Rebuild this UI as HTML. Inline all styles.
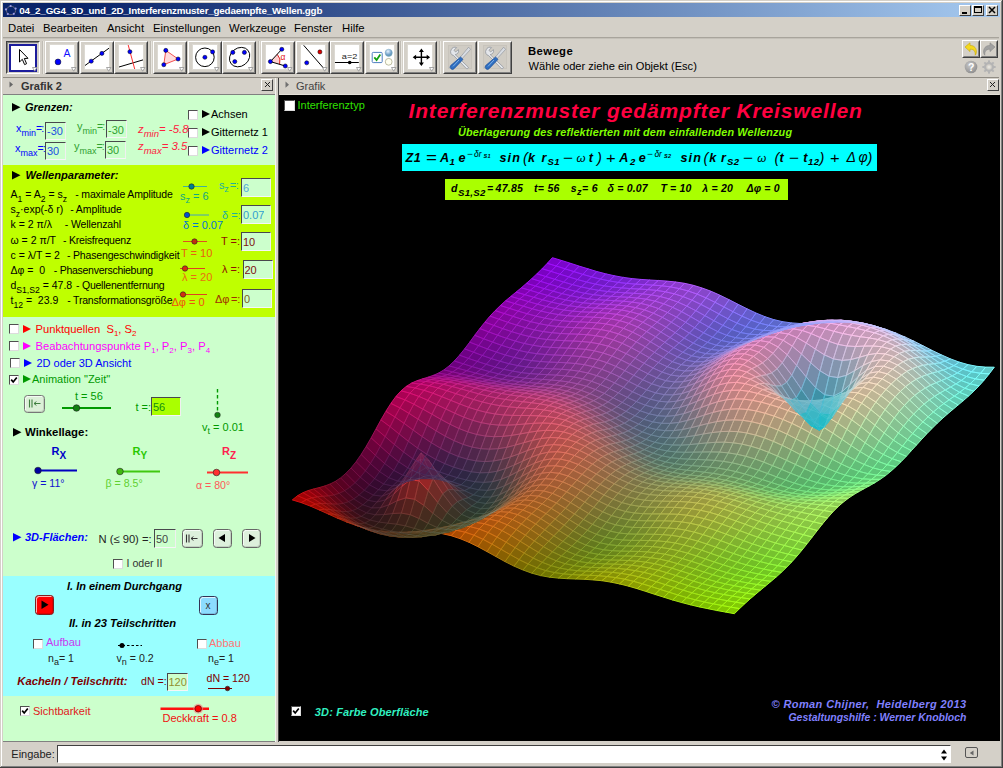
<!DOCTYPE html>
<html lang="de"><head><meta charset="utf-8"><title>GeoGebra</title>
<style>
html,body{margin:0;padding:0;}
body{width:1003px;height:768px;overflow:hidden;background:#d4d0c8;font-family:"Liberation Sans",sans-serif;font-size:11px;}
#win{position:relative;width:1003px;height:768px;overflow:hidden;background:#d4d0c8;}
.a{position:absolute;box-sizing:border-box;}
.t{position:absolute;white-space:nowrap;line-height:normal;}
.sb{position:relative;}
.sf path{fill:currentColor;stroke:currentColor;}

</style></head>
<body>
<div id="win">
<div class="a" style="left:0px;top:0px;width:1003px;height:768px;background:#d4d0c8;"></div>
<div class="a" style="left:0px;top:0px;width:1003px;height:1px;background:#d4d0c8;"></div>
<div class="a" style="left:1px;top:1px;width:1001px;height:1px;background:#fff;"></div>
<div class="a" style="left:1px;top:1px;width:1px;height:766px;background:#fff;"></div>
<div class="a" style="left:1002px;top:0px;width:1px;height:768px;background:#404040;"></div>
<div class="a" style="left:1001px;top:1px;width:1px;height:766px;background:#808080;"></div>
<div class="a" style="left:0px;top:767px;width:1003px;height:1px;background:#404040;"></div>
<div class="a" style="left:1px;top:766px;width:1001px;height:1px;background:#808080;"></div>
<div class="a" style="left:3px;top:3px;width:997px;height:14px;background:linear-gradient(to right,#0a246a 0%,#0a246a 8%,#a6caf0 100%);"></div>
<svg class="a" style="left:4px;top:4px" width="14" height="13" viewBox="0 0 14 13"><ellipse cx="7" cy="6.5" rx="4.6" ry="4.2" fill="none" stroke="#6b6b7a" stroke-width="0.9"/><circle cx="6.6" cy="2" r="1.1" fill="#9a9ae8"/><circle cx="11.6" cy="4.6" r="1.1" fill="#9a9ae8"/><circle cx="9.8" cy="9.8" r="1.1" fill="#9a9ae8"/><circle cx="3.8" cy="10" r="1.1" fill="#9a9ae8"/><circle cx="2" cy="5.4" r="1.1" fill="#9a9ae8"/></svg>
<span class="t " style="left:19.3px;top:5px;font-size:9.8px;color:#fff;font-weight:bold;letter-spacing:-0.181px;">04_2_GG4_3D_und_2D_Interferenzmuster_gedaempfte_Wellen.ggb</span>
<div class="a" style="left:959px;top:4.7px;width:12px;height:11px;background:#d4d0c8;border:1px solid;border-color:#fff #404040 #404040 #fff;"></div>
<div class="a" style="left:962px;top:12px;width:5px;height:1.6px;background:#000;"></div>
<div class="a" style="left:972px;top:4.7px;width:12px;height:11px;background:#d4d0c8;border:1px solid;border-color:#fff #404040 #404040 #fff;"></div>
<div class="a" style="left:974px;top:6px;width:8px;height:7px;border:1px solid #000;border-top:2px solid #000;"></div>
<div class="a" style="left:986px;top:4.7px;width:12px;height:11px;background:#d4d0c8;border:1px solid;border-color:#fff #404040 #404040 #fff;"></div>
<svg class="a" style="left:988px;top:6px" width="8" height="8" viewBox="0 0 8 8"><path d="M1 1 L7 7 M7 1 L1 7" stroke="#000" stroke-width="1.5"/></svg>
<span class="t " style="left:8px;top:22px;font-size:11.3px;color:#000;">Datei</span>
<span class="t " style="left:43px;top:22px;font-size:11.3px;color:#000;">Bearbeiten</span>
<span class="t " style="left:107px;top:22px;font-size:11.3px;color:#000;">Ansicht</span>
<span class="t " style="left:153px;top:22px;font-size:11.3px;color:#000;">Einstellungen</span>
<span class="t " style="left:229px;top:22px;font-size:11.3px;color:#000;">Werkzeuge</span>
<span class="t " style="left:294px;top:22px;font-size:11.3px;color:#000;">Fenster</span>
<span class="t " style="left:342px;top:22px;font-size:11.3px;color:#000;">Hilfe</span>
<div class="a" style="left:3px;top:37px;width:996px;height:1px;background:#a8a49c;"></div>
<div class="a" style="left:3px;top:38px;width:996px;height:1px;background:#c4c0b8;"></div>
<div class="a" style="left:3px;top:77px;width:996px;height:1px;background:#908c84;"></div>
<div class="a" style="left:41.7px;top:41px;width:1px;height:33px;background:#c0bcb4;"></div>
<div class="a" style="left:42.7px;top:41px;width:1px;height:33px;background:#e8e6e0;"></div>
<div class="a" style="left:149.5px;top:41px;width:1px;height:33px;background:#c0bcb4;"></div>
<div class="a" style="left:150.5px;top:41px;width:1px;height:33px;background:#e8e6e0;"></div>
<div class="a" style="left:257.5px;top:41px;width:1px;height:33px;background:#c0bcb4;"></div>
<div class="a" style="left:258.5px;top:41px;width:1px;height:33px;background:#e8e6e0;"></div>
<div class="a" style="left:400px;top:41px;width:1px;height:33px;background:#c0bcb4;"></div>
<div class="a" style="left:401px;top:41px;width:1px;height:33px;background:#e8e6e0;"></div>
<div class="a" style="left:439.2px;top:41px;width:1px;height:33px;background:#c0bcb4;"></div>
<div class="a" style="left:440.2px;top:41px;width:1px;height:33px;background:#e8e6e0;"></div>
<div class="a" style="left:6px;top:41px;width:34px;height:33px;background:#d4d0c8;border:1px solid;border-color:#404040 #fff #fff #404040;"></div>
<div class="a" style="left:7px;top:42px;width:32px;height:31px;border:1px solid;border-color:#808080 #d4d0c8 #d4d0c8 #808080;"></div>
<div class="a" style="left:9px;top:44px;width:28px;height:28px;background:#fff;border:2px solid #1c1c9c;"></div>
<svg class="a" style="left:11px;top:45px;overflow:visible" width="24" height="24" viewBox="0 0 24 24"><path d="M8.5 4.5 L8.5 17 L11.3 14.3 L13.6 19.6 L15.6 18.7 L13.3 13.5 L17 13.3 Z" fill="#fff" stroke="#000" stroke-width="1"/></svg>
<svg class="a" style="left:32.3px;top:67.3px" width="6" height="5" viewBox="0 0 6 5"><path d="M0.5 0.5 L4.9 0.5 L2.7 4.2 Z" fill="#fff" stroke="#909090" stroke-width="0.8"/></svg>
<div class="a" style="left:45px;top:41px;width:34px;height:33px;background:#d4d0c8;border:1px solid;border-color:#fff #404040 #404040 #fff;"></div>
<div class="a" style="left:46px;top:42px;width:32px;height:31px;border:1px solid;border-color:#d4d0c8 #808080 #808080 #d4d0c8;"></div>
<div class="a" style="left:50px;top:45px;width:24px;height:24px;background:#fff;"></div>
<div class="a" style="left:49px;top:44px;width:26px;height:26px;border:1px solid #dcd9d2;"></div>
<svg class="a" style="left:50px;top:45px;overflow:visible" width="24" height="24" viewBox="0 0 24 24"><circle cx="8" cy="16.9" r="2.9" fill="#0000ff" stroke="#000" stroke-width="0.5"/><text x="13.6" y="12.3" font-family="Liberation Sans, sans-serif" font-size="10.5" fill="#1010ff">A</text></svg>
<svg class="a" style="left:71.3px;top:67.3px" width="6" height="5" viewBox="0 0 6 5"><path d="M0.5 0.5 L4.9 0.5 L2.7 4.2 Z" fill="#fff" stroke="#909090" stroke-width="0.8"/></svg>
<div class="a" style="left:79.5px;top:41px;width:34px;height:33px;background:#d4d0c8;border:1px solid;border-color:#fff #404040 #404040 #fff;"></div>
<div class="a" style="left:80.5px;top:42px;width:32px;height:31px;border:1px solid;border-color:#d4d0c8 #808080 #808080 #d4d0c8;"></div>
<div class="a" style="left:84.5px;top:45px;width:24px;height:24px;background:#fff;"></div>
<div class="a" style="left:83.5px;top:44px;width:26px;height:26px;border:1px solid #dcd9d2;"></div>
<svg class="a" style="left:84.5px;top:45px;overflow:visible" width="24" height="24" viewBox="0 0 24 24"><line x1="0" y1="20.5" x2="24" y2="3.2" stroke="#000" stroke-width="1"/><circle cx="6.2" cy="16.2" r="2.05" fill="#0000ff" stroke="#000" stroke-width="0.5"/><circle cx="16.9" cy="8.4" r="2.05" fill="#0000ff" stroke="#000" stroke-width="0.5"/></svg>
<svg class="a" style="left:105.8px;top:67.3px" width="6" height="5" viewBox="0 0 6 5"><path d="M0.5 0.5 L4.9 0.5 L2.7 4.2 Z" fill="#fff" stroke="#909090" stroke-width="0.8"/></svg>
<div class="a" style="left:114px;top:41px;width:34px;height:33px;background:#d4d0c8;border:1px solid;border-color:#fff #404040 #404040 #fff;"></div>
<div class="a" style="left:115px;top:42px;width:32px;height:31px;border:1px solid;border-color:#d4d0c8 #808080 #808080 #d4d0c8;"></div>
<div class="a" style="left:119px;top:45px;width:24px;height:24px;background:#fff;"></div>
<div class="a" style="left:118px;top:44px;width:26px;height:26px;border:1px solid #dcd9d2;"></div>
<svg class="a" style="left:119px;top:45px;overflow:visible" width="24" height="24" viewBox="0 0 24 24"><line x1="0" y1="22" x2="24" y2="14.9" stroke="#000" stroke-width="1"/><line x1="9.2" y1="0" x2="15.7" y2="24" stroke="#ff3030" stroke-width="1"/><circle cx="10.9" cy="6.7" r="2.05" fill="#0000ff" stroke="#000" stroke-width="0.5"/></svg>
<svg class="a" style="left:140.3px;top:67.3px" width="6" height="5" viewBox="0 0 6 5"><path d="M0.5 0.5 L4.9 0.5 L2.7 4.2 Z" fill="#fff" stroke="#909090" stroke-width="0.8"/></svg>
<div class="a" style="left:153px;top:41px;width:34px;height:33px;background:#d4d0c8;border:1px solid;border-color:#fff #404040 #404040 #fff;"></div>
<div class="a" style="left:154px;top:42px;width:32px;height:31px;border:1px solid;border-color:#d4d0c8 #808080 #808080 #d4d0c8;"></div>
<div class="a" style="left:158px;top:45px;width:24px;height:24px;background:#fff;"></div>
<div class="a" style="left:157px;top:44px;width:26px;height:26px;border:1px solid #dcd9d2;"></div>
<svg class="a" style="left:158px;top:45px;overflow:visible" width="24" height="24" viewBox="0 0 24 24"><path d="M7.8 5.4 L20.1 14 L5.8 19.7 Z" fill="#ffdcdc" stroke="#f04040" stroke-width="0.9"/><circle cx="7.8" cy="5.4" r="2.05" fill="#0000ff" stroke="#000" stroke-width="0.5"/><circle cx="20.1" cy="14" r="2.05" fill="#0000ff" stroke="#000" stroke-width="0.5"/><circle cx="5.8" cy="19.7" r="2.05" fill="#0000ff" stroke="#000" stroke-width="0.5"/></svg>
<svg class="a" style="left:179.3px;top:67.3px" width="6" height="5" viewBox="0 0 6 5"><path d="M0.5 0.5 L4.9 0.5 L2.7 4.2 Z" fill="#fff" stroke="#909090" stroke-width="0.8"/></svg>
<div class="a" style="left:187.5px;top:41px;width:34px;height:33px;background:#d4d0c8;border:1px solid;border-color:#fff #404040 #404040 #fff;"></div>
<div class="a" style="left:188.5px;top:42px;width:32px;height:31px;border:1px solid;border-color:#d4d0c8 #808080 #808080 #d4d0c8;"></div>
<div class="a" style="left:192.5px;top:45px;width:24px;height:24px;background:#fff;"></div>
<div class="a" style="left:191.5px;top:44px;width:26px;height:26px;border:1px solid #dcd9d2;"></div>
<svg class="a" style="left:192.5px;top:45px;overflow:visible" width="24" height="24" viewBox="0 0 24 24"><circle cx="11.9" cy="12.3" r="9.3" fill="none" stroke="#000" stroke-width="1"/><circle cx="11.9" cy="12.3" r="2.05" fill="#0000ff" stroke="#000" stroke-width="0.5"/><circle cx="19.6" cy="6.9" r="2.05" fill="#0000ff" stroke="#000" stroke-width="0.5"/></svg>
<svg class="a" style="left:213.8px;top:67.3px" width="6" height="5" viewBox="0 0 6 5"><path d="M0.5 0.5 L4.9 0.5 L2.7 4.2 Z" fill="#fff" stroke="#909090" stroke-width="0.8"/></svg>
<div class="a" style="left:222px;top:41px;width:34px;height:33px;background:#d4d0c8;border:1px solid;border-color:#fff #404040 #404040 #fff;"></div>
<div class="a" style="left:223px;top:42px;width:32px;height:31px;border:1px solid;border-color:#d4d0c8 #808080 #808080 #d4d0c8;"></div>
<div class="a" style="left:227px;top:45px;width:24px;height:24px;background:#fff;"></div>
<div class="a" style="left:226px;top:44px;width:26px;height:26px;border:1px solid #dcd9d2;"></div>
<svg class="a" style="left:227px;top:45px;overflow:visible" width="24" height="24" viewBox="0 0 24 24"><ellipse cx="12.6" cy="12.1" rx="10.8" ry="9" transform="rotate(-38 12.6 12.1)" fill="none" stroke="#000" stroke-width="0.9"/><circle cx="5.8" cy="7.4" r="2.05" fill="#0000ff" stroke="#000" stroke-width="0.5"/><circle cx="17.4" cy="7.4" r="2.05" fill="#0000ff" stroke="#000" stroke-width="0.5"/><circle cx="7.8" cy="16.6" r="2.05" fill="#0000ff" stroke="#000" stroke-width="0.5"/></svg>
<svg class="a" style="left:248.3px;top:67.3px" width="6" height="5" viewBox="0 0 6 5"><path d="M0.5 0.5 L4.9 0.5 L2.7 4.2 Z" fill="#fff" stroke="#909090" stroke-width="0.8"/></svg>
<div class="a" style="left:261px;top:41px;width:34px;height:33px;background:#d4d0c8;border:1px solid;border-color:#fff #404040 #404040 #fff;"></div>
<div class="a" style="left:262px;top:42px;width:32px;height:31px;border:1px solid;border-color:#d4d0c8 #808080 #808080 #d4d0c8;"></div>
<div class="a" style="left:266px;top:45px;width:24px;height:24px;background:#fff;"></div>
<div class="a" style="left:265px;top:44px;width:26px;height:26px;border:1px solid #dcd9d2;"></div>
<svg class="a" style="left:266px;top:45px;overflow:visible" width="24" height="24" viewBox="0 0 24 24"><path d="M4.4 16.6 L11.2 9.3 A10 10 0 0 1 13.6 19.3 Z" fill="#ffd0d0" stroke="none"/><path d="M11.2 9.3 A10 10 0 0 1 13.6 19.3" fill="none" stroke="#e02020" stroke-width="1"/><path d="M15.8 4.3 L4.4 16.6 L19.3 21" fill="none" stroke="#000" stroke-width="1"/><circle cx="4.4" cy="16.6" r="2.05" fill="#0000ff" stroke="#000" stroke-width="0.5"/><circle cx="15.8" cy="4.3" r="2.05" fill="#0000ff" stroke="#000" stroke-width="0.5"/><circle cx="19.3" cy="21" r="2.05" fill="#0000ff" stroke="#000" stroke-width="0.5"/><text x="14.6" y="15" font-family="Liberation Sans, sans-serif" font-size="8.5" fill="#e02020">α</text></svg>
<svg class="a" style="left:287.3px;top:67.3px" width="6" height="5" viewBox="0 0 6 5"><path d="M0.5 0.5 L4.9 0.5 L2.7 4.2 Z" fill="#fff" stroke="#909090" stroke-width="0.8"/></svg>
<div class="a" style="left:295.5px;top:41px;width:34px;height:33px;background:#d4d0c8;border:1px solid;border-color:#fff #404040 #404040 #fff;"></div>
<div class="a" style="left:296.5px;top:42px;width:32px;height:31px;border:1px solid;border-color:#d4d0c8 #808080 #808080 #d4d0c8;"></div>
<div class="a" style="left:300.5px;top:45px;width:24px;height:24px;background:#fff;"></div>
<div class="a" style="left:299.5px;top:44px;width:26px;height:26px;border:1px solid #dcd9d2;"></div>
<svg class="a" style="left:300.5px;top:45px;overflow:visible" width="24" height="24" viewBox="0 0 24 24"><line x1="2.7" y1="0.3" x2="24" y2="24.8" stroke="#000" stroke-width="1"/><circle cx="18.9" cy="6.9" r="2.05" fill="#e00000" stroke="#000" stroke-width="0.5"/><circle cx="5.7" cy="17.8" r="2.05" fill="#0000ff" stroke="#000" stroke-width="0.5"/></svg>
<svg class="a" style="left:321.8px;top:67.3px" width="6" height="5" viewBox="0 0 6 5"><path d="M0.5 0.5 L4.9 0.5 L2.7 4.2 Z" fill="#fff" stroke="#909090" stroke-width="0.8"/></svg>
<div class="a" style="left:330px;top:41px;width:34px;height:33px;background:#d4d0c8;border:1px solid;border-color:#fff #404040 #404040 #fff;"></div>
<div class="a" style="left:331px;top:42px;width:32px;height:31px;border:1px solid;border-color:#d4d0c8 #808080 #808080 #d4d0c8;"></div>
<div class="a" style="left:335px;top:45px;width:24px;height:24px;background:#fff;"></div>
<div class="a" style="left:334px;top:44px;width:26px;height:26px;border:1px solid #dcd9d2;"></div>
<svg class="a" style="left:335px;top:45px;overflow:visible" width="24" height="24" viewBox="0 0 24 24"><line x1="0" y1="17.5" x2="23.8" y2="17.5" stroke="#000" stroke-width="1"/><circle cx="14.7" cy="17.5" r="1.8" fill="#000"/><text x="6.8" y="14" font-family="Liberation Sans, sans-serif" font-size="8" fill="#222" textLength="15.5" lengthAdjust="spacingAndGlyphs">a=2</text></svg>
<svg class="a" style="left:356.3px;top:67.3px" width="6" height="5" viewBox="0 0 6 5"><path d="M0.5 0.5 L4.9 0.5 L2.7 4.2 Z" fill="#fff" stroke="#909090" stroke-width="0.8"/></svg>
<div class="a" style="left:364.5px;top:41px;width:34px;height:33px;background:#d4d0c8;border:1px solid;border-color:#fff #404040 #404040 #fff;"></div>
<div class="a" style="left:365.5px;top:42px;width:32px;height:31px;border:1px solid;border-color:#d4d0c8 #808080 #808080 #d4d0c8;"></div>
<div class="a" style="left:369.5px;top:45px;width:24px;height:24px;background:#fff;"></div>
<div class="a" style="left:368.5px;top:44px;width:26px;height:26px;border:1px solid #dcd9d2;"></div>
<svg class="a" style="left:369.5px;top:45px;overflow:visible" width="24" height="24" viewBox="0 0 24 24"><defs><radialGradient id="sph" cx="0.4" cy="0.3" r="0.8"><stop offset="0" stop-color="#e8f4ff"/><stop offset="0.6" stop-color="#6f9fc8"/><stop offset="1" stop-color="#4f8f9f"/></radialGradient></defs><rect x="2.2" y="7.4" width="10" height="10.2" rx="1" fill="#fff" stroke="#4f7fc0" stroke-width="1"/><path d="M4.3 12.3 L6.6 15 L10.3 9.6" fill="none" stroke="#10a010" stroke-width="1.8"/><circle cx="18.7" cy="7.8" r="3.6" fill="url(#sph)" stroke="#7fa8c0" stroke-width="0.5"/><circle cx="18.7" cy="16.8" r="3.4" fill="#fffff0" stroke="#a0a080" stroke-width="0.7"/></svg>
<svg class="a" style="left:390.8px;top:67.3px" width="6" height="5" viewBox="0 0 6 5"><path d="M0.5 0.5 L4.9 0.5 L2.7 4.2 Z" fill="#fff" stroke="#909090" stroke-width="0.8"/></svg>
<div class="a" style="left:403px;top:41px;width:34px;height:33px;background:#d4d0c8;border:1px solid;border-color:#fff #404040 #404040 #fff;"></div>
<div class="a" style="left:404px;top:42px;width:32px;height:31px;border:1px solid;border-color:#d4d0c8 #808080 #808080 #d4d0c8;"></div>
<div class="a" style="left:408px;top:45px;width:24px;height:24px;background:#fff;"></div>
<div class="a" style="left:407px;top:44px;width:26px;height:26px;border:1px solid #dcd9d2;"></div>
<svg class="a" style="left:408px;top:45px;overflow:visible" width="24" height="24" viewBox="0 0 24 24"><path d="M13.4 5.2 L13.4 19.4 M6.3 12.3 L20.5 12.3" stroke="#000" stroke-width="1.4" fill="none"/><path d="M13.4 3.6 L10.9 7 L15.9 7 Z M13.4 21 L10.9 17.6 L15.9 17.6 Z M4.7 12.3 L8.1 9.8 L8.1 14.8 Z M22.1 12.3 L18.7 9.8 L18.7 14.8 Z" fill="#000"/></svg>
<svg class="a" style="left:429.3px;top:67.3px" width="6" height="5" viewBox="0 0 6 5"><path d="M0.5 0.5 L4.9 0.5 L2.7 4.2 Z" fill="#fff" stroke="#909090" stroke-width="0.8"/></svg>
<div class="a" style="left:443px;top:41px;width:34px;height:33px;background:#d4d0c8;border:1px solid;border-color:#fff #404040 #404040 #fff;"></div>
<div class="a" style="left:444px;top:42px;width:32px;height:31px;border:1px solid;border-color:#d4d0c8 #808080 #808080 #d4d0c8;"></div>
<div class="a" style="left:448px;top:45px;width:24px;height:24px;background:#d0ccc4;border:1px solid #c8c4bc;"></div>
<svg class="a" style="left:448px;top:45px;overflow:visible" width="24" height="24" viewBox="0 0 24 24"><g transform="translate(0,0)"><path d="M3.2 4.8 A3.8 3.8 0 0 1 8.6 2.6 L6 5.2 L7.6 7 L10.4 4.6 A3.8 3.8 0 0 1 7.2 9.6 L20.4 22.2 A1.4 1.4 0 0 1 18.4 23.6 L5.6 10.6 A3.8 3.8 0 0 1 3.2 4.8 Z" fill="#e4e6ea" stroke="#8a8f98" stroke-width="0.7"/><path d="M20.6 2.2 L22.6 4.4 L13.2 14.6 L11.6 13 Z" fill="#d8dce2" stroke="#8a8f98" stroke-width="0.6"/><path d="M12.6 12 L15 14.4 L6.4 23.4 A2.2 2.2 0 0 1 2.6 20.6 Z" fill="#2f6fc0" stroke="#1f4f98" stroke-width="0.7"/><path d="M11 15 L5 21.4" stroke="#7fb0e8" stroke-width="1"/></g></svg>
<div class="a" style="left:477.5px;top:41px;width:34px;height:33px;background:#d4d0c8;border:1px solid;border-color:#fff #404040 #404040 #fff;"></div>
<div class="a" style="left:478.5px;top:42px;width:32px;height:31px;border:1px solid;border-color:#d4d0c8 #808080 #808080 #d4d0c8;"></div>
<div class="a" style="left:482.5px;top:45px;width:24px;height:24px;background:#d0ccc4;border:1px solid #c8c4bc;"></div>
<svg class="a" style="left:482.5px;top:45px;overflow:visible" width="24" height="24" viewBox="0 0 24 24"><g transform="translate(0,0)"><path d="M3.2 4.8 A3.8 3.8 0 0 1 8.6 2.6 L6 5.2 L7.6 7 L10.4 4.6 A3.8 3.8 0 0 1 7.2 9.6 L20.4 22.2 A1.4 1.4 0 0 1 18.4 23.6 L5.6 10.6 A3.8 3.8 0 0 1 3.2 4.8 Z" fill="#e4e6ea" stroke="#8a8f98" stroke-width="0.7"/><path d="M20.6 2.2 L22.6 4.4 L13.2 14.6 L11.6 13 Z" fill="#d8dce2" stroke="#8a8f98" stroke-width="0.6"/><path d="M12.6 12 L15 14.4 L6.4 23.4 A2.2 2.2 0 0 1 2.6 20.6 Z" fill="#2f6fc0" stroke="#1f4f98" stroke-width="0.7"/><path d="M11 15 L5 21.4" stroke="#7fb0e8" stroke-width="1"/></g></svg>
<span class="t " style="left:528px;top:45px;font-size:11.3px;color:#000;font-weight:bold;letter-spacing:0.4px;">Bewege</span>
<span class="t " style="left:528.5px;top:60px;font-size:11.1px;color:#000;">Wähle oder ziehe ein Objekt (Esc)</span>
<div class="a" style="left:962px;top:40px;width:18px;height:18px;background:#d4d0c8;border:1px solid;border-color:#fff #404040 #404040 #fff;"></div>
<div class="a" style="left:963px;top:41px;width:16px;height:16px;border:1px solid;border-color:#d4d0c8 #808080 #808080 #d4d0c8;"></div>
<div class="a" style="left:980px;top:40px;width:18px;height:18px;background:#d4d0c8;border:1px solid;border-color:#fff #404040 #404040 #fff;"></div>
<div class="a" style="left:981px;top:41px;width:16px;height:16px;border:1px solid;border-color:#d4d0c8 #808080 #808080 #d4d0c8;"></div>
<svg class="a" style="left:964px;top:42px" width="14" height="14" viewBox="0 0 14 14"><path d="M1 5 L6 0.8 L6 3.4 C10.5 3.4 12.6 6.4 12.4 10.2 C12.3 11.6 11.8 12.6 11.2 13.2 C11.6 9.4 10 7.2 6 7.2 L6 9.6 Z" fill="#f4d820" stroke="#c8a800" stroke-width="0.6"/></svg>
<svg class="a" style="left:982px;top:42px" width="14" height="14" viewBox="0 0 14 14"><path d="M13 5 L8 0.8 L8 3.4 C3.5 3.4 1.4 6.4 1.6 10.2 C1.7 11.6 2.2 12.6 2.8 13.2 C2.4 9.4 4 7.2 8 7.2 L8 9.6 Z" fill="#a0a0a0" stroke="#888" stroke-width="0.6"/></svg>
<svg class="a" style="left:964px;top:60px" width="14" height="14" viewBox="0 0 14 14"><defs><radialGradient id="hg" cx="0.4" cy="0.35" r="0.7"><stop offset="0" stop-color="#c8c8c8"/><stop offset="1" stop-color="#8c8c8c"/></radialGradient></defs><circle cx="7" cy="7" r="6.3" fill="url(#hg)"/><text x="3.9" y="10.8" font-family="Liberation Sans, sans-serif" font-weight="bold" font-size="10.5" fill="#fff">?</text></svg>
<svg class="a" style="left:982px;top:60px" width="14" height="14" viewBox="0 0 14 14"><rect x="6" y="0.4" width="2" height="3.2" fill="#b4b4b4" transform="rotate(0 7 7)"/><rect x="6" y="0.4" width="2" height="3.2" fill="#b4b4b4" transform="rotate(45 7 7)"/><rect x="6" y="0.4" width="2" height="3.2" fill="#b4b4b4" transform="rotate(90 7 7)"/><rect x="6" y="0.4" width="2" height="3.2" fill="#b4b4b4" transform="rotate(135 7 7)"/><rect x="6" y="0.4" width="2" height="3.2" fill="#b4b4b4" transform="rotate(180 7 7)"/><rect x="6" y="0.4" width="2" height="3.2" fill="#b4b4b4" transform="rotate(225 7 7)"/><rect x="6" y="0.4" width="2" height="3.2" fill="#b4b4b4" transform="rotate(270 7 7)"/><rect x="6" y="0.4" width="2" height="3.2" fill="#b4b4b4" transform="rotate(315 7 7)"/><circle cx="7" cy="7" r="3.9" fill="none" stroke="#b4b4b4" stroke-width="2.2"/><circle cx="7" cy="7" r="1.6" fill="#e4e2dc"/></svg>
<svg class="a" style="left:9px;top:81px" width="5" height="7" viewBox="0 0 5 7"><path d="M0.5 0.5 L4 3.5 L0.5 6.5 Z" fill="#666"/></svg>
<span class="t " style="left:21px;top:80px;font-size:11px;color:#333;font-weight:bold;">Grafik 2</span>
<div class="a" style="left:261px;top:78.5px;width:12px;height:12px;background:#d4d0c8;border:1px solid;border-color:#fff #404040 #404040 #fff;"></div>
<svg class="a" style="left:263.5px;top:81.0px" width="7" height="7" viewBox="0 0 7 7"><path d="M1 1 L6 6 M6 1 L1 6" stroke="#222" stroke-width="1"/></svg>
<div class="a" style="left:986.5px;top:78.5px;width:12px;height:12px;background:#d4d0c8;border:1px solid;border-color:#fff #404040 #404040 #fff;"></div>
<svg class="a" style="left:989.0px;top:81.0px" width="7" height="7" viewBox="0 0 7 7"><path d="M1 1 L6 6 M6 1 L1 6" stroke="#222" stroke-width="1"/></svg>
<svg class="a" style="left:285px;top:81.4px" width="5" height="7.3" viewBox="0 0 5 7.3"><path d="M0.5 0.5 L4 3.65 L0.5 6.8 Z" fill="#707070"/></svg>
<span class="t " style="left:296px;top:80px;font-size:11px;color:#444;">Grafik</span>
<div class="a" style="left:3px;top:94px;width:272px;height:1px;background:#808080;"></div>
<div class="a" style="left:279px;top:94px;width:720px;height:1px;background:#e4e0d8;"></div>
<div class="a" style="left:275px;top:78px;width:1px;height:664px;background:#f4f4f0;"></div>
<div class="a" style="left:276px;top:78px;width:2px;height:664px;background:#d4d0c8;"></div>
<div class="a" style="left:278px;top:78px;width:1px;height:664px;background:#404040;"></div>
<div class="a" style="left:3px;top:95px;width:272px;height:646px;background:#ccffcc;"></div>
<div class="a" style="left:3px;top:165px;width:272px;height:152px;background:#bfff00;"></div>
<div class="a" style="left:3px;top:576px;width:272px;height:120px;background:#99ffff;"></div>
<div class="a" style="left:3px;top:741px;width:272px;height:1px;background:#808080;"></div>
<svg class="a" style="left:12.2px;top:102.7px" width="9.5" height="9.5" viewBox="0 0 9.5 9.5"><path d="M0 0 L8.5 4.25 L0 8.5 Z" fill="#000"/></svg>
<span class="t " style="left:25px;top:101px;font-size:11px;color:#000;font-weight:bold;font-style:italic;">Grenzen:</span>
<div class="a" style="left:188px;top:109.5px;width:10px;height:10px;background:#fff;border-style:solid;border-width:1.3px 1px 1px 1.3px;border-color:#505050 #dcdcdc #dcdcdc #505050;"></div>
<svg class="a" style="left:202px;top:110px" width="9" height="9" viewBox="0 0 9 9"><path d="M0 0 L8 4.0 L0 8 Z" fill="#000"/></svg>
<span class="t " style="left:211px;top:108px;font-size:11px;color:#000;">Achsen</span>
<div class="a" style="left:188px;top:127.5px;width:10px;height:10px;background:#fff;border-style:solid;border-width:1.3px 1px 1px 1.3px;border-color:#505050 #dcdcdc #dcdcdc #505050;"></div>
<svg class="a" style="left:202px;top:128px" width="9" height="9" viewBox="0 0 9 9"><path d="M0 0 L8 4.0 L0 8 Z" fill="#000"/></svg>
<span class="t " style="left:211px;top:126px;font-size:11px;color:#000;">Gitternetz 1</span>
<div class="a" style="left:187.5px;top:145.5px;width:10px;height:10px;background:#fff;border-style:solid;border-width:1.3px 1px 1px 1.3px;border-color:#505050 #dcdcdc #dcdcdc #505050;"></div>
<svg class="a" style="left:202px;top:146px" width="9" height="9" viewBox="0 0 9 9"><path d="M0 0 L8 4.0 L0 8 Z" fill="#0000ff"/></svg>
<span class="t " style="left:211px;top:144px;font-size:11px;color:#0000ff;">Gitternetz 2</span>
<span class="t " style="left:16px;top:122px;font-size:11px;color:#0000ff;">x<span class="sb" style="top:4px;font-size:9px;">min</span><span style="letter-spacing:-0.8px;font-size:10.5px">=:</span></span>
<div class="a" style="left:45px;top:121.7px;width:21px;height:18px;background:#ccffcc;border-style:solid;border-width:1.5px 1.2px 1.2px 1.4px;border-color:#48484c #f0f0f0 #f6f6f6 #48484c;box-sizing:border-box;overflow:hidden;"></div>
<span class="t " style="left:47px;top:125px;font-size:11px;color:#2050e0;max-width:18px;overflow:hidden;">-30</span>
<span class="t " style="left:15px;top:142px;font-size:11px;color:#0000ff;">x<span class="sb" style="top:4px;font-size:9px;">max</span><span style="letter-spacing:-0.8px;font-size:10.5px">=:</span></span>
<div class="a" style="left:45px;top:141.5px;width:21px;height:18.2px;background:#ccffcc;border-style:solid;border-width:1.5px 1.2px 1.2px 1.4px;border-color:#48484c #f0f0f0 #f6f6f6 #48484c;box-sizing:border-box;overflow:hidden;"></div>
<span class="t " style="left:47px;top:145px;font-size:11px;color:#2050e0;max-width:18px;overflow:hidden;">30</span>
<span class="t " style="left:77px;top:120px;font-size:11px;color:#30a030;">y<span class="sb" style="top:4px;font-size:9px;">min</span><span style="letter-spacing:-0.8px;font-size:10.5px">=:</span></span>
<div class="a" style="left:106px;top:120px;width:21px;height:18px;background:#ccffcc;border-style:solid;border-width:1.5px 1.2px 1.2px 1.4px;border-color:#48484c #f0f0f0 #f6f6f6 #48484c;box-sizing:border-box;overflow:hidden;"></div>
<span class="t " style="left:108px;top:124px;font-size:11px;color:#30a030;max-width:18px;overflow:hidden;">-30</span>
<span class="t " style="left:74px;top:140px;font-size:11px;color:#30a030;">y<span class="sb" style="top:4px;font-size:9px;">max</span><span style="letter-spacing:-0.8px;font-size:10.5px">=:</span></span>
<div class="a" style="left:105px;top:140.5px;width:21px;height:18.2px;background:#ccffcc;border-style:solid;border-width:1.5px 1.2px 1.2px 1.4px;border-color:#48484c #f0f0f0 #f6f6f6 #48484c;box-sizing:border-box;overflow:hidden;"></div>
<span class="t " style="left:107px;top:144px;font-size:11px;color:#30a030;max-width:18px;overflow:hidden;">30</span>
<span class="t " style="left:138px;top:123px;font-size:11.4px;color:#ff2040;font-style:italic;">z<span class="sb" style="top:4px;font-size:9.5px;">min</span>= -5.8</span>
<span class="t " style="left:138px;top:140px;font-size:11.4px;color:#ff2040;font-style:italic;">z<span class="sb" style="top:4px;font-size:9.5px;">max</span>= 3.5</span>
<svg class="a" style="left:12.2px;top:170.7px" width="9.5" height="9.5" viewBox="0 0 9.5 9.5"><path d="M0 0 L8.5 4.25 L0 8.5 Z" fill="#000"/></svg>
<span class="t " style="left:25.5px;top:169px;font-size:11.1px;color:#000;font-weight:bold;font-style:italic;">Wellenparameter:</span>
<span class="t " style="left:10.5px;top:188px;font-size:10.5px;color:#000;">A<span class="sb" style="top:4px;font-size:8.6px;">1</span> = A<span class="sb" style="top:4px;font-size:8.6px;">2</span> = s<span class="sb" style="top:4px;font-size:8.6px;">z</span></span>
<span class="t " style="left:75.2px;top:188px;font-size:10.5px;color:#000;letter-spacing:-0.143px;">- maximale Amplitude</span>
<span class="t " style="left:10.5px;top:203px;font-size:10.5px;color:#000;">s<span class="sb" style="top:4px;font-size:8.6px;">z</span>·exp(-δ r)</span>
<span class="t " style="left:70.2px;top:203px;font-size:10.5px;color:#000;letter-spacing:-0.084px;">- Amplitude</span>
<span class="t " style="left:10.5px;top:218px;font-size:10.5px;color:#000;">k = 2 π/λ</span>
<span class="t " style="left:64.8px;top:218px;font-size:10.5px;color:#000;letter-spacing:-0.115px;">- Wellenzahl</span>
<span class="t " style="left:10.5px;top:234px;font-size:10.5px;color:#000;">ω = 2 π/T</span>
<span class="t " style="left:63px;top:234px;font-size:10.5px;color:#000;letter-spacing:-0.213px;">- Kreisfrequenz</span>
<span class="t " style="left:10.5px;top:249px;font-size:10.5px;color:#000;">c = λ/T = 2</span>
<span class="t " style="left:66.9px;top:249px;font-size:10.5px;color:#000;letter-spacing:-0.158px;">- Phasengeschwindigkeit</span>
<span class="t " style="left:10.5px;top:264px;font-size:10.5px;color:#000;">Δφ =&nbsp; 0</span>
<span class="t " style="left:53.8px;top:264px;font-size:10.5px;color:#000;letter-spacing:-0.269px;">- Phasenverschiebung</span>
<span class="t " style="left:10.5px;top:279px;font-size:10.5px;color:#000;">d<span class="sb" style="top:4px;font-size:8.6px;">S1,S2</span> = 47.8</span>
<span class="t " style="left:76px;top:279px;font-size:10.5px;color:#000;letter-spacing:-0.232px;">- Quellenentfernung</span>
<span class="t " style="left:10.5px;top:294px;font-size:10.5px;color:#000;">t<span class="sb" style="top:4px;font-size:8.6px;">12</span> =&nbsp; 23.9</span>
<span class="t " style="left:67.2px;top:294px;font-size:10.5px;color:#000;letter-spacing:-0.182px;">- Transformationsgröße</span>
<svg class="a" style="left:0;top:0" width="1003" height="768"><line x1="183" y1="186.5" x2="207" y2="186.5" stroke="#40b0a0" stroke-width="1" /><circle cx="191.5" cy="186.5" r="2.7" fill="#008090" stroke="#222" stroke-width="0.6"/></svg>
<span class="t " style="left:180px;top:190px;font-size:11px;color:#10a880;">s<span class="sb" style="top:3px;font-size:9px;">z</span> = 6</span>
<svg class="a" style="left:0;top:0" width="1003" height="768"><line x1="185" y1="215" x2="209" y2="215" stroke="#40a0c0" stroke-width="1" /><circle cx="187" cy="215" r="2.7" fill="#0050d0" stroke="#222" stroke-width="0.6"/></svg>
<span class="t " style="left:183px;top:219px;font-size:11px;color:#0078d0;">δ = 0.07</span>
<svg class="a" style="left:0;top:0" width="1003" height="768"><line x1="183" y1="241.5" x2="207" y2="241.5" stroke="#e05020" stroke-width="1" /><circle cx="194.5" cy="241.5" r="2.7" fill="#c03010" stroke="#222" stroke-width="0.6"/></svg>
<span class="t " style="left:181px;top:247px;font-size:11px;color:#e86010;">T = 10</span>
<svg class="a" style="left:0;top:0" width="1003" height="768"><line x1="180" y1="268.5" x2="205" y2="268.5" stroke="#e04020" stroke-width="1" /><circle cx="185" cy="268.5" r="2.7" fill="#d03010" stroke="#222" stroke-width="0.6"/></svg>
<span class="t " style="left:182px;top:271px;font-size:11px;color:#e87010;">λ = 20</span>
<svg class="a" style="left:0;top:0" width="1003" height="768"><line x1="180" y1="294.5" x2="207" y2="294.5" stroke="#e04020" stroke-width="1" /><circle cx="183" cy="294.5" r="2.7" fill="#d03010" stroke="#222" stroke-width="0.6"/></svg>
<span class="t " style="left:171.5px;top:296px;font-size:11px;color:#f05010;">Δφ = 0</span>
<span class="t " style="left:219px;top:179px;font-size:11px;color:#20b0a0;word-spacing:-1.5px;letter-spacing:-0.3px;">s<span class="sb" style="top:3px;font-size:9px;">z</span> =:</span>
<div class="a" style="left:241px;top:178px;width:30px;height:19px;background:#ccffcc;border-style:solid;border-width:1.5px 1.2px 1.2px 1.4px;border-color:#48484c #f0f0f0 #f6f6f6 #48484c;box-sizing:border-box;overflow:hidden;"></div>
<span class="t " style="left:243px;top:182px;font-size:11px;color:#50a8d8;max-width:27px;overflow:hidden;">6</span>
<span class="t " style="left:222px;top:209px;font-size:11px;color:#20b0a0;">δ =:</span>
<div class="a" style="left:241px;top:205px;width:30px;height:19px;background:#ccffcc;border-style:solid;border-width:1.5px 1.2px 1.2px 1.4px;border-color:#48484c #f0f0f0 #f6f6f6 #48484c;box-sizing:border-box;overflow:hidden;"></div>
<span class="t " style="left:243px;top:209px;font-size:11px;color:#30a0d0;max-width:27px;overflow:hidden;">0.07</span>
<span class="t " style="left:221px;top:235px;font-size:11px;color:#901000;">T =:</span>
<div class="a" style="left:241px;top:231.5px;width:30px;height:19px;background:#ccffcc;border-style:solid;border-width:1.5px 1.2px 1.2px 1.4px;border-color:#48484c #f0f0f0 #f6f6f6 #48484c;box-sizing:border-box;overflow:hidden;"></div>
<span class="t " style="left:243px;top:236px;font-size:11px;color:#801010;max-width:27px;overflow:hidden;">10</span>
<span class="t " style="left:222px;top:263px;font-size:11px;color:#901000;">λ =:</span>
<div class="a" style="left:242.5px;top:259.5px;width:30px;height:19px;background:#ccffcc;border-style:solid;border-width:1.5px 1.2px 1.2px 1.4px;border-color:#48484c #f0f0f0 #f6f6f6 #48484c;box-sizing:border-box;overflow:hidden;"></div>
<span class="t " style="left:244.5px;top:264px;font-size:11px;color:#801010;max-width:27px;overflow:hidden;">20</span>
<span class="t " style="left:215px;top:293px;font-size:11px;color:#a03000;word-spacing:-1px;letter-spacing:-0.2px;">Δφ =:</span>
<div class="a" style="left:242px;top:289px;width:30px;height:19px;background:#ccffcc;border-style:solid;border-width:1.5px 1.2px 1.2px 1.4px;border-color:#48484c #f0f0f0 #f6f6f6 #48484c;box-sizing:border-box;overflow:hidden;"></div>
<span class="t " style="left:244px;top:293px;font-size:11px;color:#806020;max-width:27px;overflow:hidden;">0</span>
<div class="a" style="left:9.2px;top:324.2px;width:10px;height:10px;background:#fff;border-style:solid;border-width:1.3px 1px 1px 1.3px;border-color:#505050 #dcdcdc #dcdcdc #505050;"></div>
<svg class="a" style="left:23.2px;top:325px" width="9" height="9" viewBox="0 0 9 9"><path d="M0 0 L8 4.0 L0 8 Z" fill="#ff0000"/></svg>
<span class="t " style="left:35.5px;top:322.5px;font-size:11.2px;color:#ff0000;">Punktquellen&nbsp; S<span class="sb" style="top:3px;font-size:8px;">1</span>, S<span class="sb" style="top:3px;font-size:8px;">2</span></span>
<div class="a" style="left:9.2px;top:341px;width:10px;height:10px;background:#fff;border-style:solid;border-width:1.3px 1px 1px 1.3px;border-color:#505050 #dcdcdc #dcdcdc #505050;"></div>
<svg class="a" style="left:23.2px;top:341.5px" width="9" height="9" viewBox="0 0 9 9"><path d="M0 0 L8 4.0 L0 8 Z" fill="#ff00ff"/></svg>
<span class="t " style="left:35.5px;top:339.5px;font-size:11.2px;color:#ff00ff;">Beabachtungspunkte P<span class="sb" style="top:3px;font-size:8px;">1</span>, P<span class="sb" style="top:3px;font-size:8px;">2</span>, P<span class="sb" style="top:3px;font-size:8px;">3</span>, P<span class="sb" style="top:3px;font-size:8px;">4</span></span>
<div class="a" style="left:10px;top:357.8px;width:10px;height:10px;background:#fff;border-style:solid;border-width:1.3px 1px 1px 1.3px;border-color:#505050 #dcdcdc #dcdcdc #505050;"></div>
<svg class="a" style="left:24px;top:358.7px" width="9" height="9" viewBox="0 0 9 9"><path d="M0 0 L8 4.0 L0 8 Z" fill="#0000ff"/></svg>
<span class="t " style="left:36.5px;top:356.5px;font-size:11px;color:#0000ff;">2D oder 3D Ansicht</span>
<div class="a" style="left:9.2px;top:374.5px;width:10px;height:10px;background:#fff;border-style:solid;border-width:1.3px 1px 1px 1.3px;border-color:#505050 #dcdcdc #dcdcdc #505050;"><svg width="8" height="8" viewBox="0 0 8 8" style="position:absolute;left:0;top:0"><path d="M1.2 3.6 L3.2 6 L6.8 1.4" stroke="#000" stroke-width="1.7" fill="none"/></svg></div>
<svg class="a" style="left:23px;top:375.3px" width="9" height="9" viewBox="0 0 9 9"><path d="M0 0 L8 4.0 L0 8 Z" fill="#009900"/></svg>
<span class="t " style="left:32px;top:373px;font-size:11px;color:#009900;">Animation "Zeit"</span>
<div class="a" style="left:23.5px;top:394.5px;width:21.5px;height:18px;background:#dcf0d8;border:1px solid #777;border-radius:3.5px;box-shadow:inset 1px 1px 0 rgba(255,255,255,.7),inset -1px -1px 0 rgba(0,0,0,.12);"></div>
<svg class="a" style="left:27.5px;top:399px" width="14" height="9" viewBox="0 0 14 9"><path d="M1.5 0.5 V8.5 M4 0.5 V8.5" stroke="#408040" stroke-width="1.1"/><path d="M6 4.5 H12.5 M6 4.5 L8.4 2.6 M6 4.5 L8.4 6.4" stroke="#408040" stroke-width="1" fill="none"/></svg>
<span class="t " style="left:75px;top:390px;font-size:11px;color:#009900;">t = 56</span>
<svg class="a" style="left:0;top:0" width="1003" height="768"><line x1="62" y1="408" x2="111" y2="408" stroke="#009900" stroke-width="2" /><circle cx="76.5" cy="408" r="3.3" fill="#108010" stroke="#222" stroke-width="0.6"/></svg>
<span class="t " style="left:135.5px;top:401px;font-size:11px;color:#009900;">t =:</span>
<div class="a" style="left:151px;top:397px;width:30px;height:18.5px;background:#aaff00;border-style:solid;border-width:1.5px 1.2px 1.2px 1.4px;border-color:#48484c #f0f0f0 #f6f6f6 #48484c;box-sizing:border-box;overflow:hidden;"></div>
<span class="t " style="left:153px;top:401px;font-size:11px;color:#109010;max-width:27px;overflow:hidden;">56</span>
<svg class="a" style="left:0;top:0" width="1003" height="768"><line x1="217.5" y1="389" x2="217.5" y2="412" stroke="#009900" stroke-width="1.4" stroke-dasharray="3.5 2.5"/><circle cx="217.5" cy="415" r="2.8" fill="#108010" stroke="#222" stroke-width="0.5"/></svg>
<span class="t " style="left:202px;top:421px;font-size:11px;color:#009900;">v<span class="sb" style="top:3px;font-size:9px;">t</span> = 0.01</span>
<svg class="a" style="left:12.5px;top:427.7px" width="9.5" height="9.5" viewBox="0 0 9.5 9.5"><path d="M0 0 L8.5 4.25 L0 8.5 Z" fill="#000"/></svg>
<span class="t " style="left:25px;top:426px;font-size:11.4px;color:#000;font-weight:bold;">Winkellage:</span>
<span class="t " style="left:51.5px;top:445px;font-size:11px;color:#0000c8;font-weight:bold;">R<span class="sb" style="top:4px;font-size:10px;">X</span></span>
<span class="t " style="left:132.5px;top:445px;font-size:11px;color:#28c800;font-weight:bold;">R<span class="sb" style="top:4px;font-size:10px;">Y</span></span>
<span class="t " style="left:222px;top:445px;font-size:11px;color:#ff2050;font-weight:bold;">R<span class="sb" style="top:4px;font-size:10px;">Z</span></span>
<svg class="a" style="left:0;top:0" width="1003" height="768"><line x1="38" y1="470.5" x2="77" y2="470.5" stroke="#0000c0" stroke-width="2" /><circle cx="38" cy="470.5" r="3.3" fill="#0000a0" stroke="#222" stroke-width="0.6"/></svg>
<svg class="a" style="left:0;top:0" width="1003" height="768"><line x1="120" y1="471.5" x2="160" y2="471.5" stroke="#40c810" stroke-width="2" /><circle cx="120" cy="471.5" r="3.3" fill="#40b810" stroke="#222" stroke-width="0.6"/></svg>
<svg class="a" style="left:0;top:0" width="1003" height="768"><line x1="207" y1="472.5" x2="248" y2="472.5" stroke="#ff3030" stroke-width="2" /><circle cx="216.5" cy="472.5" r="3.3" fill="#ff3030" stroke="#222" stroke-width="0.6"/></svg>
<span class="t " style="left:32px;top:477px;font-size:10.6px;color:#1010d0;">γ = 11°</span>
<span class="t " style="left:105.5px;top:477px;font-size:10.6px;color:#60d030;">β = 8.5°</span>
<span class="t " style="left:196px;top:479px;font-size:10.6px;color:#ff5858;">α = 80°</span>
<svg class="a" style="left:12.5px;top:532.5px" width="9.5" height="9.5" viewBox="0 0 9.5 9.5"><path d="M0 0 L8.5 4.25 L0 8.5 Z" fill="#0000ff"/></svg>
<span class="t " style="left:25px;top:531px;font-size:11px;color:#0000ff;font-weight:bold;font-style:italic;">3D-Flächen:</span>
<span class="t " style="left:98.5px;top:533px;font-size:11.2px;color:#222;">N (≤ 90) =:</span>
<div class="a" style="left:154px;top:528.5px;width:21.5px;height:19px;background:#ccffcc;border-style:solid;border-width:1.5px 1.2px 1.2px 1.4px;border-color:#48484c #f0f0f0 #f6f6f6 #48484c;box-sizing:border-box;overflow:hidden;"></div>
<span class="t " style="left:156px;top:533px;font-size:11px;color:#444;max-width:18.5px;overflow:hidden;">50</span>
<div class="a" style="left:181.5px;top:528.5px;width:21px;height:19px;background:#ddf0dc;border:1px solid #666;border-radius:3.5px;box-shadow:inset 1px 1px 0 rgba(255,255,255,.7),inset -1px -1px 0 rgba(0,0,0,.12);"></div>
<svg class="a" style="left:185px;top:533.5px" width="14" height="9" viewBox="0 0 14 9"><path d="M1.5 0.5 V8.5 M4 0.5 V8.5" stroke="#333" stroke-width="1.1"/><path d="M6 4.5 H12.5 M6 4.5 L8.4 2.6 M6 4.5 L8.4 6.4" stroke="#333" stroke-width="1" fill="none"/></svg>
<div class="a" style="left:212.5px;top:528.5px;width:19px;height:19px;background:#ddf0dc;border:1px solid #666;border-radius:3.5px;box-shadow:inset 1px 1px 0 rgba(255,255,255,.7),inset -1px -1px 0 rgba(0,0,0,.12);"></div>
<svg class="a" style="left:217px;top:533px" width="10" height="10" viewBox="0 0 10 10"><path d="M8 1 L1.5 5 L8 9 Z" fill="#000"/></svg>
<div class="a" style="left:242px;top:528.5px;width:19px;height:19px;background:#ddf0dc;border:1px solid #666;border-radius:3.5px;box-shadow:inset 1px 1px 0 rgba(255,255,255,.7),inset -1px -1px 0 rgba(0,0,0,.12);"></div>
<svg class="a" style="left:247px;top:533px" width="10" height="10" viewBox="0 0 10 10"><path d="M2 1 L8.5 5 L2 9 Z" fill="#000"/></svg>
<div class="a" style="left:113px;top:559px;width:10px;height:10px;background:#fff;border-style:solid;border-width:1.3px 1px 1px 1.3px;border-color:#505050 #dcdcdc #dcdcdc #505050;"></div>
<span class="t " style="left:126.5px;top:557px;font-size:10.6px;color:#333;">I oder II</span>
<span class="t " style="left:67px;top:580px;font-size:11px;color:#000;font-weight:bold;font-style:italic;">I. In einem Durchgang</span>
<div class="a" style="left:35px;top:595px;width:19px;height:19.5px;background:#ff0000;border:1px solid #802020;border-radius:3.5px;box-shadow:inset 1px 1px 0 rgba(255,255,255,.7),inset -1px -1px 0 rgba(0,0,0,.12);"></div>
<svg class="a" style="left:39.5px;top:600px" width="10" height="10" viewBox="0 0 10 10"><path d="M1.5 0.5 L8.5 4.8 L1.5 9 Z" fill="#000"/></svg>
<div class="a" style="left:199px;top:596.3px;width:19px;height:18.7px;background:#8cdcff;border:1px solid #335;border-radius:3.5px;box-shadow:inset 1px 1px 0 rgba(255,255,255,.7),inset -1px -1px 0 rgba(0,0,0,.12);"></div>
<span class="t " style="left:205.5px;top:600px;font-size:10px;color:#333;">x</span>
<span class="t " style="left:69px;top:617px;font-size:11.2px;color:#000;font-weight:bold;font-style:italic;">II. in 23 Teilschritten</span>
<div class="a" style="left:33px;top:638.5px;width:10px;height:10px;background:#fff;border-style:solid;border-width:1.3px 1px 1px 1.3px;border-color:#505050 #dcdcdc #dcdcdc #505050;"></div>
<span class="t " style="left:46px;top:636.4px;font-size:11px;color:#c838f0;">Aufbau</span>
<svg class="a" style="left:0;top:0" width="1003" height="768"><line x1="118" y1="645.5" x2="142" y2="645.5" stroke="#000" stroke-width="1" stroke-dasharray="2.5 2"/><circle cx="122" cy="645.5" r="2.5" fill="#000"/></svg>
<div class="a" style="left:196.5px;top:639px;width:10px;height:10px;background:#fff;border-style:solid;border-width:1.3px 1px 1px 1.3px;border-color:#505050 #dcdcdc #dcdcdc #505050;"></div>
<span class="t " style="left:209px;top:637px;font-size:11px;color:#ff7474;">Abbau</span>
<span class="t " style="left:48px;top:652px;font-size:10.6px;color:#222;">n<span class="sb" style="top:3px;font-size:9px;">a</span>= 1</span>
<span class="t " style="left:116.5px;top:652px;font-size:10.6px;color:#222;">v<span class="sb" style="top:3px;font-size:9px;">n</span> = 0.2</span>
<span class="t " style="left:208px;top:652px;font-size:10.6px;color:#222;">n<span class="sb" style="top:3px;font-size:9px;">e</span>= 1</span>
<span class="t " style="left:17.3px;top:675px;font-size:11.25px;color:#800000;font-weight:bold;font-style:italic;">Kacheln / Teilschritt:</span>
<span class="t " style="left:141px;top:675px;font-size:10.6px;color:#800000;">dN =:</span>
<div class="a" style="left:166.5px;top:672.5px;width:21.5px;height:18.5px;background:#ccffcc;border-style:solid;border-width:1.5px 1.2px 1.2px 1.4px;border-color:#48484c #f0f0f0 #f6f6f6 #48484c;box-sizing:border-box;overflow:hidden;"></div>
<span class="t " style="left:168.5px;top:676px;font-size:11px;color:#909030;max-width:18.5px;overflow:hidden;">120</span>
<span class="t " style="left:206.5px;top:672px;font-size:10.6px;color:#800000;">dN = 120</span>
<svg class="a" style="left:0;top:0" width="1003" height="768"><line x1="208" y1="688.5" x2="232" y2="688.5" stroke="#800000" stroke-width="1" /><circle cx="227.5" cy="688.5" r="2.3" fill="#800000" stroke="#222" stroke-width="0.6"/></svg>
<div class="a" style="left:19.5px;top:706px;width:10px;height:10px;background:#fff;border-style:solid;border-width:1.3px 1px 1px 1.3px;border-color:#505050 #dcdcdc #dcdcdc #505050;"><svg width="8" height="8" viewBox="0 0 8 8" style="position:absolute;left:0;top:0"><path d="M1.2 3.6 L3.2 6 L6.8 1.4" stroke="#000" stroke-width="1.7" fill="none"/></svg></div>
<span class="t " style="left:33px;top:705px;font-size:11px;color:#e02020;">Sichtbarkeit</span>
<svg class="a" style="left:0;top:0" width="1003" height="768"><line x1="160.5" y1="708.7" x2="209" y2="708.7" stroke="#ff1010" stroke-width="2.4"/><circle cx="198.2" cy="708.7" r="5" fill="#ff8080" opacity="0.6"/><circle cx="198.2" cy="708.7" r="3.3" fill="#ff0000" stroke="#400" stroke-width="0.6"/></svg>
<span class="t " style="left:162.5px;top:712px;font-size:11px;color:#f01010;">Deckkraft = 0.8</span>
<span class="t " style="left:11.3px;top:748px;font-size:11px;color:#222;">Eingabe:</span>
<div class="a" style="left:57px;top:744.5px;width:894px;height:18px;background:#fff;border:1px solid;border-color:#404040 #fff #fff #404040;"></div>
<svg class="a" style="left:940px;top:749px" width="8" height="12" viewBox="0 0 8 12"><path d="M4 0.5 L7 4.5 L1 4.5 Z M4 11.5 L7 7.5 L1 7.5 Z" fill="#000"/></svg>
<div class="a" style="left:965px;top:747px;width:13px;height:11px;background:#d4d0c8;border:1px solid #555;border-radius:2px;"></div>
<svg class="a" style="left:969px;top:750px" width="5" height="6" viewBox="0 0 5 6"><path d="M4.5 0.5 L0.8 3 L4.5 5.5 Z" fill="#666"/></svg>
<div class="a" style="left:279px;top:95px;width:720.5px;height:646.3px;background:#000;"></div>
<svg class="a" style="left:0;top:0" width="1003" height="768" viewBox="0 0 1003 768"><g class="sf" fill-opacity="0.8" stroke-opacity="1" stroke-width="1.0" stroke-linejoin="round">
<path d="M292.3 499.9l8.9 2.7 5.3-3-8.9-3.9z" color="#ce0303"/>
<path d="M301.2 502.6l8.9 3.4 5.4-1.9-9-4.5z" color="#c80803"/>
<path d="M310.1 506.0l9 3.9 5.4-.8-9-5z" color="#c00d03"/>
<path d="M319.1 509.9l8.9 4 5.6 .2-9.1-5z" color="#b71203"/>
<path d="M328.0 513.9l9 4.1 5.6 .9-9-4.8z" color="#ad1703"/>
<path d="M337.0 518.0l8.9 3.7 5.6 1.5-8.9-4.3z" color="#a51c03"/>
<path d="M345.9 521.7l8.9 3.3 5.7 1.8-9-3.6z" color="#9f2103"/>
<path d="M354.8 525.0l8.9 2.7 5.6 1.9-8.8-2.8z" color="#9b2603"/>
<path d="M363.7 527.7l8.8 2 5.7 1.9-8.9-2z" color="#992b03"/>
<path d="M372.5 529.7l8.8 1.3 5.6 1.7-8.7-1.1z" color="#9b3003"/>
<path d="M381.3 531.0l8.7 .8 5.7 1.3-8.8-.4z" color="#9f3603"/>
<path d="M390.0 531.8l8.8 .3 5.5 .7-8.6 .3z" color="#a63b03"/>
<path d="M398.8 532.1l8.6 0 5.6-.2-8.7 .9z" color="#ae4003"/>
<path d="M407.4 532.1l8.7-.2 5.5-1-8.6 1z" color="#b84503"/>
<path d="M416.1 531.9l8.7 .1 5.4-2.2-8.6 1.1z" color="#c14a03"/>
<path d="M424.8 532.0l8.8 .5 5.3-3.3-8.7 .6z" color="#ca4f03"/>
<path d="M433.6 532.5l8.7 1.2 5.2-4.5-8.6 0z" color="#d15403"/>
<path d="M442.3 533.7l8.8 2 5.2-5.5-8.8-1z" color="#d45903"/>
<path d="M451.1 535.7l8.9 2.9 5.1-6.4-8.8-2z" color="#d55e03"/>
<path d="M460.0 538.6l9 3.7 5-7.1-8.9-3z" color="#d16303"/>
<path d="M469.0 542.3l8.9 4.4 5.1-7.4-9-4.1z" color="#cb6903"/>
<path d="M477.9 546.7l9.1 4.9 5-7.5-9-4.8z" color="#c16e03"/>
<path d="M487.0 551.6l9 5 5-7.3-9-5.2z" color="#b67303"/>
<path d="M496.0 556.6l9 5 5.1-7.1-9.1-5.2z" color="#aa7803"/>
<path d="M505.0 561.6l9 4.5 5.1-6.5-9-5.1z" color="#9f7d03"/>
<path d="M514.0 566.1l9 3.9 5.1-6-9-4.4z" color="#968203"/>
<path d="M523.0 570.0l8.9 3.2 5.1-5.5-8.9-3.7z" color="#8f8703"/>
<path d="M531.9 573.2l8.8 2.4 5.2-5-8.9-2.9z" color="#8c8c03"/>
<path d="M540.7 575.6l8.8 1.6 5.2-4.6-8.8-2z" color="#8b9103"/>
<path d="M549.5 577.2l8.8 .9 5.2-4.2-8.8-1.3z" color="#8d9603"/>
<path d="M558.3 578.1l8.7 .6 5.2-4.1-8.7-.7z" color="#919c03"/>
<path d="M567.0 578.7l8.7 .3 5.3-4-8.8-.4z" color="#97a103"/>
<path d="M575.7 579.0l8.7 .3 5.3-4-8.7-.3z" color="#9ea603"/>
<path d="M584.4 579.3l8.7 .6 5.3-4.2-8.7-.4z" color="#a4ab03"/>
<path d="M593.1 579.9l8.8 .8 5.2-4.2-8.7-.8z" color="#a9b003"/>
<path d="M601.9 580.7l8.8 1.4 5.2-4.5-8.8-1.1z" color="#adb503"/>
<path d="M610.7 582.1l8.8 1.8 5.2-4.7-8.8-1.6z" color="#afba03"/>
<path d="M619.5 583.9l8.8 2.2 5.2-4.8-8.8-2.1z" color="#afbf03"/>
<path d="M628.3 586.1l8.9 2.6 5.2-4.9-8.9-2.5z" color="#aec403"/>
<path d="M637.2 588.7l8.9 2.8 5.2-5-8.9-2.7z" color="#acc903"/>
<path d="M646.1 591.5l8.8 2.9 5.2-5-8.8-2.9z" color="#a9cf03"/>
<path d="M654.9 594.4l8.9 2.8 5.2-5-8.9-2.8z" color="#a5d403"/>
<path d="M663.8 597.2l8.9 2.8 5.2-5-8.9-2.8z" color="#a2d903"/>
<path d="M672.7 600.0l8.9 2.5 5.2-4.9-8.9-2.6z" color="#a0de03"/>
<path d="M681.6 602.5l8.8 2.3 5.2-4.9-8.8-2.3z" color="#9fe303"/>
<path d="M690.4 604.8l8.8 2.1 5.2-4.9-8.8-2.1z" color="#9ee803"/>
<path d="M699.2 606.9l8.8 1.8 5.2-4.9-8.8-1.8z" color="#9eed03"/>
<path d="M708.0 608.7l8.9 1.8 5.1-5-8.8-1.7z" color="#9ff203"/>
<path d="M716.9 610.5l8.8 1.6 5.1-5-8.8-1.6z" color="#a1f703"/>
<path d="M725.7 612.1l8.7 1.6 5.2-5.1-8.8-1.5z" color="#a2fc03"/>
<path d="M297.6 495.7l8.9 3.9 5.4-1.8-9-5.1z" color="#c60308"/>
<path d="M306.5 499.6l9 4.5 5.5-.6-9.1-5.7z" color="#bc0808"/>
<path d="M315.5 504.1l9 5 5.6 .4-9.1-6z" color="#af0d08"/>
<path d="M324.5 509.1l9.1 5 5.6 1.2-9.1-5.8z" color="#a21208"/>
<path d="M333.6 514.1l9 4.8 5.6 1.8-9-5.4z" color="#961708"/>
<path d="M342.6 518.9l8.9 4.3 5.7 2.2-9-4.7z" color="#8c1c08"/>
<path d="M351.5 523.2l9 3.6 5.7 2.4-9-3.8z" color="#842108"/>
<path d="M360.5 526.8l8.8 2.8 5.7 2.5-8.8-2.9z" color="#7f2608"/>
<path d="M369.3 529.6l8.9 2 5.7 2.4-8.9-1.9z" color="#7e2b08"/>
<path d="M378.2 531.6l8.7 1.1 5.7 2.3-8.7-1z" color="#803008"/>
<path d="M386.9 532.7l8.8 .4 5.6 2-8.7-.1z" color="#853608"/>
<path d="M395.7 533.1l8.6-.3 5.7 1.5-8.7 .8z" color="#8d3b08"/>
<path d="M404.3 532.8l8.7-.9 5.5 1-8.5 1.4z" color="#984008"/>
<path d="M413.0 531.9l8.6-1 5.5 .1-8.6 1.9z" color="#a54508"/>
<path d="M421.6 530.9l8.6-1.1 5.5-.9-8.6 2.1z" color="#b24a08"/>
<path d="M430.2 529.8l8.7-.6 5.3-2.1-8.5 1.8z" color="#bf4f08"/>
<path d="M438.9 529.2l8.6 0 5.4-3.3-8.7 1.2z" color="#ca5408"/>
<path d="M447.5 529.2l8.8 1 5.2-4.5-8.6 .2z" color="#d25908"/>
<path d="M456.3 530.2l8.8 2 5.2-5.5-8.8-1z" color="#d65e08"/>
<path d="M465.1 532.2l8.9 3 5.1-6.2-8.8-2.3z" color="#d66308"/>
<path d="M474.0 535.2l9 4.1 5.1-6.8-9-3.5z" color="#d16908"/>
<path d="M483.0 539.3l9 4.8 5-7.1-8.9-4.5z" color="#c96e08"/>
<path d="M492.0 544.1l9 5.2 5.1-7.1-9.1-5.2z" color="#be7308"/>
<path d="M501.0 549.3l9.1 5.2 5-6.8-9-5.5z" color="#b27808"/>
<path d="M510.1 554.5l9 5.1 5.1-6.5-9.1-5.4z" color="#a57d08"/>
<path d="M519.1 559.6l9 4.4 5.1-5.9-9-5z" color="#9a8208"/>
<path d="M528.1 564.0l8.9 3.7 5.2-5.4-9-4.2z" color="#928708"/>
<path d="M537.0 567.7l8.9 2.9 5.2-4.9-8.9-3.4z" color="#8c8c08"/>
<path d="M545.9 570.6l8.8 2 5.2-4.5-8.8-2.4z" color="#899108"/>
<path d="M554.7 572.6l8.8 1.3 5.2-4.2-8.8-1.6z" color="#8a9608"/>
<path d="M563.5 573.9l8.7 .7 5.3-3.9-8.8-1z" color="#8d9c08"/>
<path d="M572.2 574.6l8.8 .4 5.2-3.8-8.7-.5z" color="#93a108"/>
<path d="M581.0 575.0l8.7 .3 5.2-3.9-8.7-.2z" color="#99a608"/>
<path d="M589.7 575.3l8.7 .4 5.3-3.9-8.8-.4z" color="#9fab08"/>
<path d="M598.4 575.7l8.7 .8 5.3-4.1-8.7-.6z" color="#a5b008"/>
<path d="M607.1 576.5l8.8 1.1 5.2-4.2-8.7-1z" color="#a9b508"/>
<path d="M615.9 577.6l8.8 1.6 5.2-4.4-8.8-1.4z" color="#acba08"/>
<path d="M624.7 579.2l8.8 2.1 5.2-4.5-8.8-2z" color="#adbf08"/>
<path d="M633.5 581.3l8.9 2.5 5.2-4.7-8.9-2.3z" color="#acc408"/>
<path d="M642.4 583.8l8.9 2.7 5.2-4.7-8.9-2.7z" color="#aac908"/>
<path d="M651.3 586.5l8.8 2.9 5.2-4.8-8.8-2.8z" color="#a8cf08"/>
<path d="M660.1 589.4l8.9 2.8 5.2-4.8-8.9-2.8z" color="#a5d408"/>
<path d="M669.0 592.2l8.9 2.8 5.2-4.8-8.9-2.8z" color="#a2d908"/>
<path d="M677.9 595.0l8.9 2.6 5.2-4.8-8.9-2.6z" color="#9fde08"/>
<path d="M686.8 597.6l8.8 2.3 5.2-4.8-8.8-2.3z" color="#9ee308"/>
<path d="M695.6 599.9l8.8 2.1 5.2-4.8-8.8-2.1z" color="#9de808"/>
<path d="M704.4 602.0l8.8 1.8 5.3-4.7-8.9-1.9z" color="#9ded08"/>
<path d="M713.2 603.8l8.8 1.7 5.3-4.8-8.8-1.6z" color="#9ef208"/>
<path d="M722.0 605.5l8.8 1.6 5.2-4.9-8.7-1.5z" color="#a0f708"/>
<path d="M730.8 607.1l8.8 1.5 5.2-4.9-8.8-1.5z" color="#a2fc08"/>
<path d="M302.9 492.7l9 5.1 5.5-1-9.1-6.3z" color="#ba030d"/>
<path d="M311.9 497.8l9.1 5.7 5.5 .1-9.1-6.8z" color="#ab080d"/>
<path d="M321.0 503.5l9.1 6 5.6 1-9.2-6.9z" color="#9b0d0d"/>
<path d="M330.1 509.5l9.1 5.8 5.6 1.6-9.1-6.4z" color="#8b120d"/>
<path d="M339.2 515.3l9 5.4 5.7 1.9-9.1-5.7z" color="#7d170d"/>
<path d="M348.2 520.7l9 4.7 5.7 2-9-4.8z" color="#711c0d"/>
<path d="M357.2 525.4l9 3.8 5.6 2-8.9-3.8z" color="#69210d"/>
<path d="M366.2 529.2l8.8 2.9 5.7 1.9-8.9-2.8z" color="#64260d"/>
<path d="M375.0 532.1l8.9 1.9 5.6 1.9-8.8-1.9z" color="#622b0d"/>
<path d="M383.9 534.0l8.7 1 5.7 1.9-8.8-1z" color="#64300d"/>
<path d="M392.6 535.0l8.7 .1 5.7 1.8-8.7 0z" color="#6a360d"/>
<path d="M401.3 535.1l8.7-.8 5.6 1.7-8.6 .9z" color="#733b0d"/>
<path d="M410.0 534.3l8.5-1.4 5.7 1.3-8.6 1.8z" color="#80400d"/>
<path d="M418.5 532.9l8.6-1.9 5.6 .7-8.5 2.5z" color="#8e450d"/>
<path d="M427.1 531.0l8.6-2.1 5.5-.1-8.5 2.9z" color="#9f4a0d"/>
<path d="M435.7 528.9l8.5-1.8 5.5-1.1-8.5 2.8z" color="#af4f0d"/>
<path d="M444.2 527.1l8.7-1.2 5.3-2.2-8.5 2.3z" color="#bf540d"/>
<path d="M452.9 525.9l8.6-.2 5.3-3.4-8.6 1.4z" color="#cb590d"/>
<path d="M461.5 525.7l8.8 1 5.2-4.4-8.7 0z" color="#d35e0d"/>
<path d="M470.3 526.7l8.8 2.3 5.2-5.3-8.8-1.4z" color="#d7630d"/>
<path d="M479.1 529.0l9 3.5 5.1-6-8.9-2.8z" color="#d5690d"/>
<path d="M488.1 532.5l8.9 4.5 5.1-6.4-8.9-4.1z" color="#ce6e0d"/>
<path d="M497.0 537.0l9.1 5.2 5.1-6.5-9.1-5.1z" color="#c4730d"/>
<path d="M506.1 542.2l9 5.5 5.1-6.4-9-5.6z" color="#b8780d"/>
<path d="M515.1 547.7l9.1 5.4 5.1-6.2-9.1-5.6z" color="#aa7d0d"/>
<path d="M524.2 553.1l9 5 5.1-5.8-9-5.4z" color="#9e820d"/>
<path d="M533.2 558.1l9 4.2 5.2-5.3-9.1-4.7z" color="#93870d"/>
<path d="M542.2 562.3l8.9 3.4 5.2-4.9-8.9-3.8z" color="#8c8c0d"/>
<path d="M551.1 565.7l8.8 2.4 5.3-4.4-8.9-2.9z" color="#88910d"/>
<path d="M559.9 568.1l8.8 1.6 5.3-4.1-8.8-1.9z" color="#87960d"/>
<path d="M568.7 569.7l8.8 1 5.3-3.9-8.8-1.2z" color="#899c0d"/>
<path d="M577.5 570.7l8.7 .5 5.3-3.8-8.7-.6z" color="#8ea10d"/>
<path d="M586.2 571.2l8.7 .2 5.3-3.7-8.7-.3z" color="#94a60d"/>
<path d="M594.9 571.4l8.8 .4 5.2-3.8-8.7-.3z" color="#9bab0d"/>
<path d="M603.7 571.8l8.7 .6 5.2-4-8.7-.4z" color="#a1b00d"/>
<path d="M612.4 572.4l8.7 1 5.3-4.1-8.8-.9z" color="#a5b50d"/>
<path d="M621.1 573.4l8.8 1.4 5.3-4.2-8.8-1.3z" color="#a9ba0d"/>
<path d="M629.9 574.8l8.8 2 5.3-4.4-8.8-1.8z" color="#aabf0d"/>
<path d="M638.7 576.8l8.9 2.3 5.2-4.5-8.8-2.2z" color="#aac40d"/>
<path d="M647.6 579.1l8.9 2.7 5.2-4.6-8.9-2.6z" color="#a8c90d"/>
<path d="M656.5 581.8l8.8 2.8 5.3-4.6-8.9-2.8z" color="#a6cf0d"/>
<path d="M665.3 584.6l8.9 2.8 5.2-4.6-8.8-2.8z" color="#a3d40d"/>
<path d="M674.2 587.4l8.9 2.8 5.2-4.6-8.9-2.8z" color="#a0d90d"/>
<path d="M683.1 590.2l8.9 2.6 5.2-4.6-8.9-2.6z" color="#9dde0d"/>
<path d="M692.0 592.8l8.8 2.3 5.2-4.5-8.8-2.4z" color="#9ce30d"/>
<path d="M700.8 595.1l8.8 2.1 5.3-4.5-8.9-2.1z" color="#9be80d"/>
<path d="M709.6 597.2l8.9 1.9 5.2-4.6-8.8-1.8z" color="#9bed0d"/>
<path d="M718.5 599.1l8.8 1.6 5.2-4.6-8.8-1.6z" color="#9cf20d"/>
<path d="M727.3 600.7l8.7 1.5 5.3-4.6-8.8-1.5z" color="#9ef70d"/>
<path d="M736.0 602.2l8.8 1.5 5.2-4.7-8.7-1.4z" color="#a0fc0d"/>
<path d="M308.3 490.5l9.1 6.3 5.5-.5-9.2-7.3z" color="#ac0312"/>
<path d="M317.4 496.8l9.1 6.8 5.6 .4-9.2-7.7z" color="#990812"/>
<path d="M326.5 503.6l9.2 6.9 5.6 .9-9.2-7.4z" color="#860d12"/>
<path d="M335.7 510.5l9.1 6.4 5.6 1.2-9.1-6.7z" color="#731212"/>
<path d="M344.8 516.9l9.1 5.7 5.5 1.1-9-5.6z" color="#641712"/>
<path d="M353.9 522.6l9 4.8 5.5 .7-9-4.4z" color="#581c12"/>
<path d="M362.9 527.4l8.9 3.8 5.6 .3-9-3.4z" color="#502112"/>
<path d="M371.8 531.2l8.9 2.8 5.5 0-8.8-2.5z" color="#4c2612"/>
<path d="M380.7 534.0l8.8 1.9 5.5 0-8.8-1.9z" color="#4b2b12"/>
<path d="M389.5 535.9l8.8 1 5.5 .1-8.8-1.1z" color="#4e3012"/>
<path d="M398.3 536.9l8.7 0 5.5 .5-8.7-.4z" color="#533612"/>
<path d="M407.0 536.9l8.6-.9 5.6 .8-8.7 .6z" color="#5b3b12"/>
<path d="M415.6 536.0l8.6-1.8 5.5 .9-8.5 1.7z" color="#684012"/>
<path d="M424.2 534.2l8.5-2.5 5.6 .8-8.6 2.6z" color="#784512"/>
<path d="M432.7 531.7l8.5-2.9 5.5 .3-8.4 3.4z" color="#8a4a12"/>
<path d="M441.2 528.8l8.5-2.8 5.5-.5-8.5 3.6z" color="#9d4f12"/>
<path d="M449.7 526.0l8.5-2.3 5.5-1.5-8.5 3.3z" color="#b05412"/>
<path d="M458.2 523.7l8.6-1.4 5.4-2.5-8.5 2.4z" color="#c15912"/>
<path d="M466.8 522.3l8.7 0 5.3-3.7-8.6 1.2z" color="#cd5e12"/>
<path d="M475.5 522.3l8.8 1.4 5.2-4.6-8.7-.5z" color="#d46312"/>
<path d="M484.3 523.7l8.9 2.8 5.2-5.3-8.9-2.1z" color="#d66912"/>
<path d="M493.2 526.5l8.9 4.1 5.2-5.8-8.9-3.6z" color="#d16e12"/>
<path d="M502.1 530.6l9.1 5.1 5.1-6.1-9-4.8z" color="#c87312"/>
<path d="M511.2 535.7l9 5.6 5.2-6.1-9.1-5.6z" color="#bc7812"/>
<path d="M520.2 541.3l9.1 5.6 5.1-5.9-9-5.8z" color="#ae7d12"/>
<path d="M529.3 546.9l9 5.4 5.2-5.6-9.1-5.7z" color="#a18212"/>
<path d="M538.3 552.3l9.1 4.7 5.1-5.2-9-5.1z" color="#958712"/>
<path d="M547.4 557.0l8.9 3.8 5.2-4.8-9-4.2z" color="#8c8c12"/>
<path d="M556.3 560.8l8.9 2.9 5.2-4.5-8.9-3.2z" color="#869112"/>
<path d="M565.2 563.7l8.8 1.9 5.2-4.1-8.8-2.3z" color="#849612"/>
<path d="M574.0 565.6l8.8 1.2 5.2-4-8.8-1.3z" color="#859c12"/>
<path d="M582.8 566.8l8.7 .6 5.3-3.9-8.8-.7z" color="#89a112"/>
<path d="M591.5 567.4l8.7 .3 5.3-3.8-8.7-.4z" color="#8fa612"/>
<path d="M600.2 567.7l8.7 .3 5.3-3.9-8.7-.2z" color="#96ab12"/>
<path d="M608.9 568.0l8.7 .4 5.3-3.9-8.7-.4z" color="#9cb012"/>
<path d="M617.6 568.4l8.8 .9 5.2-4.1-8.7-.7z" color="#a1b512"/>
<path d="M626.4 569.3l8.8 1.3 5.2-4.2-8.8-1.2z" color="#a5ba12"/>
<path d="M635.2 570.6l8.8 1.8 5.2-4.3-8.8-1.7z" color="#a7bf12"/>
<path d="M644.0 572.4l8.8 2.2 5.3-4.4-8.9-2.1z" color="#a7c412"/>
<path d="M652.8 574.6l8.9 2.6 5.2-4.5-8.8-2.5z" color="#a6c912"/>
<path d="M661.7 577.2l8.9 2.8 5.2-4.5-8.9-2.8z" color="#a4cf12"/>
<path d="M670.6 580.0l8.8 2.8 5.3-4.5-8.9-2.8z" color="#a1d412"/>
<path d="M679.4 582.8l8.9 2.8 5.2-4.5-8.8-2.8z" color="#9ed912"/>
<path d="M688.3 585.6l8.9 2.6 5.2-4.5-8.9-2.6z" color="#9bde12"/>
<path d="M697.2 588.2l8.8 2.4 5.3-4.5-8.9-2.4z" color="#99e312"/>
<path d="M706.0 590.6l8.9 2.1 5.2-4.5-8.8-2.1z" color="#99e812"/>
<path d="M714.9 592.7l8.8 1.8 5.2-4.4-8.8-1.9z" color="#99ed12"/>
<path d="M723.7 594.5l8.8 1.6 5.2-4.4-8.8-1.6z" color="#9af212"/>
<path d="M732.5 596.1l8.8 1.5 5.2-4.5-8.8-1.4z" color="#9cf712"/>
<path d="M741.3 597.6l8.7 1.4 5.3-4.5-8.8-1.4z" color="#9efc12"/>
<path d="M313.7 489.0l9.2 7.3 5.5-.5-9.3-8.2z" color="#9c0317"/>
<path d="M322.9 496.3l9.2 7.7 5.5 .1-9.2-8.3z" color="#860817"/>
<path d="M332.1 504.0l9.2 7.4 5.5 .2-9.2-7.5z" color="#710d17"/>
<path d="M341.3 511.4l9.1 6.7 5.5-.1-9.1-6.4z" color="#5e1217"/>
<path d="M350.4 518.1l9 5.6 5.5-.7-9-5z" color="#4f1717"/>
<path d="M359.4 523.7l9 4.4 5.5-1.5-9-3.6z" color="#451c17"/>
<path d="M368.4 528.1l9 3.4 5.3-2.4-8.8-2.5z" color="#402117"/>
<path d="M377.4 531.5l8.8 2.5 5.3-2.9-8.8-2z" color="#3e2617"/>
<path d="M386.2 534.0l8.8 1.9 5.3-3-8.8-1.8z" color="#3e2b17"/>
<path d="M395.0 535.9l8.8 1.1 5.3-2.5-8.8-1.6z" color="#3f3017"/>
<path d="M403.8 537.0l8.7 .4 5.4-1.7-8.8-1.2z" color="#433617"/>
<path d="M412.5 537.4l8.7-.6 5.4-.9-8.7-.2z" color="#493b17"/>
<path d="M421.2 536.8l8.5-1.7 5.6-.1-8.7 .9z" color="#544017"/>
<path d="M429.7 535.1l8.6-2.6 5.5 .2-8.5 2.3z" color="#634517"/>
<path d="M438.3 532.5l8.4-3.4 5.6 .1-8.5 3.5z" color="#754a17"/>
<path d="M446.7 529.1l8.5-3.6 5.5-.3-8.4 4z" color="#8b4f17"/>
<path d="M455.2 525.5l8.5-3.3 5.4-1.1-8.4 4.1z" color="#a05417"/>
<path d="M463.7 522.2l8.5-2.4 5.4-2.1-8.5 3.4z" color="#b45917"/>
<path d="M472.2 519.8l8.6-1.2 5.3-3-8.5 2.1z" color="#c55e17"/>
<path d="M480.8 518.6l8.7 .5 5.3-4-8.7 .5z" color="#cf6317"/>
<path d="M489.5 519.1l8.9 2.1 5.2-4.7-8.8-1.4z" color="#d46917"/>
<path d="M498.4 521.2l8.9 3.6 5.2-5.3-8.9-3z" color="#d26e17"/>
<path d="M507.3 524.8l9 4.8 5.1-5.6-8.9-4.5z" color="#cb7317"/>
<path d="M516.3 529.6l9.1 5.6 5.1-5.8-9.1-5.4z" color="#bf7817"/>
<path d="M525.4 535.2l9 5.8 5.2-5.7-9.1-5.9z" color="#b17d17"/>
<path d="M534.4 541.0l9.1 5.7 5.2-5.5-9.1-5.9z" color="#a38217"/>
<path d="M543.5 546.7l9 5.1 5.2-5.2-9-5.4z" color="#968717"/>
<path d="M552.5 551.8l9 4.2 5.2-4.9-9-4.5z" color="#8b8c17"/>
<path d="M561.5 556.0l8.9 3.2 5.2-4.5-8.9-3.6z" color="#849117"/>
<path d="M570.4 559.2l8.8 2.3 5.3-4.3-8.9-2.5z" color="#819617"/>
<path d="M579.2 561.5l8.8 1.3 5.3-4-8.8-1.6z" color="#819c17"/>
<path d="M588.0 562.8l8.8 .7 5.2-3.9-8.7-.8z" color="#85a117"/>
<path d="M596.8 563.5l8.7 .4 5.2-3.9-8.7-.4z" color="#8aa617"/>
<path d="M605.5 563.9l8.7 .2 5.3-3.9-8.8-.2z" color="#91ab17"/>
<path d="M614.2 564.1l8.7 .4 5.3-4-8.7-.3z" color="#97b017"/>
<path d="M622.9 564.5l8.7 .7 5.3-4.1-8.7-.6z" color="#9db517"/>
<path d="M631.6 565.2l8.8 1.2 5.3-4.3-8.8-1z" color="#a1ba17"/>
<path d="M640.4 566.4l8.8 1.7 5.3-4.4-8.8-1.6z" color="#a4bf17"/>
<path d="M649.2 568.1l8.9 2.1 5.2-4.4-8.8-2.1z" color="#a5c417"/>
<path d="M658.1 570.2l8.8 2.5 5.2-4.5-8.8-2.4z" color="#a4c917"/>
<path d="M666.9 572.7l8.9 2.8 5.2-4.5-8.9-2.8z" color="#a1cf17"/>
<path d="M675.8 575.5l8.9 2.8 5.2-4.5-8.9-2.8z" color="#9ed417"/>
<path d="M684.7 578.3l8.8 2.8 5.3-4.5-8.9-2.8z" color="#9bd917"/>
<path d="M693.5 581.1l8.9 2.6 5.2-4.4-8.8-2.7z" color="#99de17"/>
<path d="M702.4 583.7l8.9 2.4 5.2-4.4-8.9-2.4z" color="#97e317"/>
<path d="M711.3 586.1l8.8 2.1 5.2-4.3-8.8-2.2z" color="#96e817"/>
<path d="M720.1 588.2l8.8 1.9 5.2-4.4-8.8-1.8z" color="#96ed17"/>
<path d="M728.9 590.1l8.8 1.6 5.2-4.3-8.8-1.7z" color="#97f217"/>
<path d="M737.7 591.7l8.8 1.4 5.2-4.3-8.8-1.4z" color="#99f717"/>
<path d="M746.5 593.1l8.8 1.4 5.2-4.4-8.8-1.3z" color="#9cfc17"/>
<path d="M319.1 487.6l9.3 8.2 5.4-.9-9.3-8.8z" color="#8d031c"/>
<path d="M328.4 495.8l9.2 8.3 5.5-.7-9.3-8.5z" color="#75081c"/>
<path d="M337.6 504.1l9.2 7.5 5.5-.9-9.2-7.3z" color="#5f0d1c"/>
<path d="M346.8 511.6l9.1 6.4 5.4-1.6-9-5.7z" color="#4d121c"/>
<path d="M355.9 518.0l9 5 5.4-2.9-9-3.7z" color="#41171c"/>
<path d="M364.9 523.0l9 3.6 5.2-4.5-8.8-2z" color="#3b1c1c"/>
<path d="M373.9 526.6l8.8 2.5 5.1-5.9-8.7-1.1z" color="#3a211c"/>
<path d="M382.7 529.1l8.8 2 5.1-6.9-8.8-1z" color="#3b261c"/>
<path d="M391.5 531.1l8.8 1.8 5.1-7-8.8-1.7z" color="#3d2b1c"/>
<path d="M400.3 532.9l8.8 1.6 5.2-6.1-8.9-2.5z" color="#3e301c"/>
<path d="M409.1 534.5l8.8 1.2 5.2-4.7-8.8-2.6z" color="#3e361c"/>
<path d="M417.9 535.7l8.7 .2 5.3-3-8.8-1.9z" color="#403b1c"/>
<path d="M426.6 535.9l8.7-.9 5.4-1.8-8.8-.3z" color="#46401c"/>
<path d="M435.3 535.0l8.5-2.3 5.5-.9-8.6 1.4z" color="#52451c"/>
<path d="M443.8 532.7l8.5-3.5 5.4-.5-8.4 3.1z" color="#634a1c"/>
<path d="M452.3 529.2l8.4-4 5.5-.6-8.5 4.1z" color="#794f1c"/>
<path d="M460.7 525.2l8.4-4.1 5.5-1.1-8.4 4.6z" color="#90541c"/>
<path d="M469.1 521.1l8.5-3.4 5.4-1.8-8.4 4.1z" color="#a7591c"/>
<path d="M477.6 517.7l8.5-2.1 5.4-2.7-8.5 3z" color="#ba5e1c"/>
<path d="M486.1 515.6l8.7-.5 5.3-3.5-8.6 1.3z" color="#c8631c"/>
<path d="M494.8 515.1l8.8 1.4 5.2-4.3-8.7-.6z" color="#d0691c"/>
<path d="M503.6 516.5l8.9 3 5.2-4.9-8.9-2.4z" color="#d16e1c"/>
<path d="M512.5 519.5l8.9 4.5 5.2-5.3-8.9-4.1z" color="#cb731c"/>
<path d="M521.4 524.0l9.1 5.4 5.2-5.4-9.1-5.3z" color="#c0781c"/>
<path d="M530.5 529.4l9.1 5.9 5.1-5.4-9-5.9z" color="#b37d1c"/>
<path d="M539.6 535.3l9.1 5.9 5.1-5.3-9.1-6z" color="#a4821c"/>
<path d="M548.7 541.2l9 5.4 5.2-5.2-9.1-5.5z" color="#96871c"/>
<path d="M557.7 546.6l9 4.5 5.2-4.9-9-4.8z" color="#8b8c1c"/>
<path d="M566.7 551.1l8.9 3.6 5.2-4.7-8.9-3.8z" color="#83911c"/>
<path d="M575.6 554.7l8.9 2.5 5.2-4.5-8.9-2.7z" color="#7f961c"/>
<path d="M584.5 557.2l8.8 1.6 5.2-4.4-8.8-1.7z" color="#7e9c1c"/>
<path d="M593.3 558.8l8.7 .8 5.3-4.2-8.8-1z" color="#81a11c"/>
<path d="M602.0 559.6l8.7 .4 5.3-4.3-8.7-.3z" color="#86a61c"/>
<path d="M610.7 560.0l8.8 .2 5.2-4.3-8.7-.2z" color="#8dab1c"/>
<path d="M619.5 560.2l8.7 .3 5.2-4.3-8.7-.3z" color="#94b01c"/>
<path d="M628.2 560.5l8.7 .6 5.2-4.4-8.7-.5z" color="#9ab51c"/>
<path d="M636.9 561.1l8.8 1 5.2-4.4-8.8-1z" color="#9eba1c"/>
<path d="M645.7 562.1l8.8 1.6 5.2-4.6-8.8-1.4z" color="#a1bf1c"/>
<path d="M654.5 563.7l8.8 2.1 5.2-4.7-8.8-2z" color="#a2c41c"/>
<path d="M663.3 565.8l8.8 2.4 5.3-4.6-8.9-2.5z" color="#a1c91c"/>
<path d="M672.1 568.2l8.9 2.8 5.2-4.7-8.8-2.7z" color="#9fcf1c"/>
<path d="M681.0 571.0l8.9 2.8 5.2-4.7-8.9-2.8z" color="#9cd41c"/>
<path d="M689.9 573.8l8.9 2.8 5.2-4.6-8.9-2.9z" color="#99d91c"/>
<path d="M698.8 576.6l8.8 2.7 5.3-4.6-8.9-2.7z" color="#97de1c"/>
<path d="M707.6 579.3l8.9 2.4 5.2-4.4-8.8-2.6z" color="#94e31c"/>
<path d="M716.5 581.7l8.8 2.2 5.3-4.4-8.9-2.2z" color="#93e81c"/>
<path d="M725.3 583.9l8.8 1.8 5.3-4.3-8.8-1.9z" color="#93ed1c"/>
<path d="M734.1 585.7l8.8 1.7 5.3-4.4-8.8-1.6z" color="#94f21c"/>
<path d="M742.9 587.4l8.8 1.4 5.3-4.3-8.8-1.5z" color="#96f71c"/>
<path d="M751.7 588.8l8.8 1.3 5.2-4.3-8.7-1.3z" color="#99fc1c"/>
<path d="M324.5 486.1l9.3 8.8 5.4-1.6-9.3-9.2z" color="#7f0321"/>
<path d="M333.8 494.9l9.3 8.5 5.4-1.7-9.3-8.4z" color="#660821"/>
<path d="M343.1 503.4l9.2 7.3 5.3-2.3-9.1-6.7z" color="#510d21"/>
<path d="M352.3 510.7l9 5.7 5.3-3.5-9-4.5z" color="#411221"/>
<path d="M361.3 516.4l9 3.7 5.1-5.3-8.8-1.9z" color="#3a1721"/>
<path d="M370.3 520.1l8.8 2 5-7.5-8.7 .2z" color="#3b1c21"/>
<path d="M379.1 522.1l8.7 1.1 4.9-9.7-8.6 1.1z" color="#412121"/>
<path d="M387.8 523.2l8.8 1 4.8-11.1-8.7 .4z" color="#482621"/>
<path d="M396.6 524.2l8.8 1.7 4.8-11.2-8.8-1.6z" color="#4c2b21"/>
<path d="M405.4 525.9l8.9 2.5 4.8-9.9-8.9-3.8z" color="#4a3021"/>
<path d="M414.3 528.4l8.8 2.6 5-7.7-9-4.8z" color="#453621"/>
<path d="M423.1 531.0l8.8 1.9 5.2-5.4-9-4.2z" color="#403b21"/>
<path d="M431.9 532.9l8.8 .3 5.3-3.4-8.9-2.3z" color="#3f4021"/>
<path d="M440.7 533.2l8.6-1.4 5.3-2.1-8.6 .1z" color="#464521"/>
<path d="M449.3 531.8l8.4-3.1 5.5-1.3-8.6 2.3z" color="#544a21"/>
<path d="M457.7 528.7l8.5-4.1 5.4-1.2-8.4 4z" color="#694f21"/>
<path d="M466.2 524.6l8.4-4.6 5.4-1.4-8.4 4.8z" color="#815421"/>
<path d="M474.6 520.0l8.4-4.1 5.4-1.9-8.4 4.6z" color="#995921"/>
<path d="M483.0 515.9l8.5-3 5.3-2.6-8.4 3.7z" color="#b05e21"/>
<path d="M491.5 512.9l8.6-1.3 5.3-3.4-8.6 2.1z" color="#c16321"/>
<path d="M500.1 511.6l8.7 .6 5.3-4.1-8.7 .1z" color="#cb6921"/>
<path d="M508.8 512.2l8.9 2.4 5.2-4.6-8.8-1.9z" color="#ce6e21"/>
<path d="M517.7 514.6l8.9 4.1 5.2-5-8.9-3.7z" color="#ca7321"/>
<path d="M526.6 518.7l9.1 5.3 5.1-5.3-9-5z" color="#c17821"/>
<path d="M535.7 524.0l9 5.9 5.2-5.4-9.1-5.8z" color="#b47d21"/>
<path d="M544.7 529.9l9.1 6 5.2-5.3-9.1-6.1z" color="#a58221"/>
<path d="M553.8 535.9l9.1 5.5 5.2-5.2-9.1-5.6z" color="#978721"/>
<path d="M562.9 541.4l9 4.8 5.2-5-9-5z" color="#8b8c21"/>
<path d="M571.9 546.2l8.9 3.8 5.2-4.9-8.9-3.9z" color="#829121"/>
<path d="M580.8 550.0l8.9 2.7 5.2-4.8-8.9-2.8z" color="#7d9621"/>
<path d="M589.7 552.7l8.8 1.7 5.2-4.6-8.8-1.9z" color="#7c9c21"/>
<path d="M598.5 554.4l8.8 1 5.2-4.7-8.8-.9z" color="#7fa121"/>
<path d="M607.3 555.4l8.7 .3 5.2-4.6-8.7-.4z" color="#84a621"/>
<path d="M616.0 555.7l8.7 .2 5.2-4.6-8.7-.2z" color="#8aab21"/>
<path d="M624.7 555.9l8.7 .3 5.2-4.8-8.7-.1z" color="#91b021"/>
<path d="M633.4 556.2l8.7 .5 5.2-4.8-8.7-.5z" color="#98b521"/>
<path d="M642.1 556.7l8.8 1 5.2-4.9-8.8-.9z" color="#9dba21"/>
<path d="M650.9 557.7l8.8 1.4 5.2-4.9-8.8-1.4z" color="#a0bf21"/>
<path d="M659.7 559.1l8.8 2 5.2-4.9-8.8-2z" color="#a1c421"/>
<path d="M668.5 561.1l8.9 2.5 5.1-5-8.8-2.4z" color="#a0c921"/>
<path d="M677.4 563.6l8.8 2.7 5.2-5-8.9-2.7z" color="#9ecf21"/>
<path d="M686.2 566.3l8.9 2.8 5.2-4.9-8.9-2.9z" color="#9bd421"/>
<path d="M695.1 569.1l8.9 2.9 5.2-4.8-8.9-3z" color="#98d921"/>
<path d="M704.0 572.0l8.9 2.7 5.2-4.7-8.9-2.8z" color="#95de21"/>
<path d="M712.9 574.7l8.8 2.6 5.2-4.7-8.8-2.6z" color="#92e321"/>
<path d="M721.7 577.3l8.9 2.2 5.2-4.6-8.9-2.3z" color="#91e821"/>
<path d="M730.6 579.5l8.8 1.9 5.2-4.5-8.8-2z" color="#91ed21"/>
<path d="M739.4 581.4l8.8 1.6 5.2-4.4-8.8-1.7z" color="#91f221"/>
<path d="M748.2 583.0l8.8 1.5 5.2-4.4-8.8-1.5z" color="#93f721"/>
<path d="M757.0 584.5l8.7 1.3 5.3-4.4-8.8-1.3z" color="#96fc21"/>
<path d="M329.9 484.1l9.3 9.2 5.4-2.6-9.3-9.3z" color="#740326"/>
<path d="M339.2 493.3l9.3 8.4 5.3-2.8-9.2-8.2z" color="#5b0826"/>
<path d="M348.5 501.7l9.1 6.7 5.3-3.6-9.1-5.9z" color="#470d26"/>
<path d="M357.6 508.4l9 4.5 5.2-5-8.9-3.1z" color="#3c1226"/>
<path d="M366.6 512.9l8.8 1.9 5.1-7.1-8.7 .2z" color="#3b1726"/>
<path d="M375.4 514.8l8.7-.2 4.9-9.8-8.5 2.9z" color="#441c26"/>
<path d="M384.1 514.6l8.6-1.1 4.7-12.9-8.4 4.2z" color="#532126"/>
<path d="M392.7 513.5l8.7-.4 4.5-15.2-8.5 2.7z" color="#632626"/>
<path d="M401.4 513.1l8.8 1.6 4.5-15.4-8.8-1.4z" color="#6a2b26"/>
<path d="M410.2 514.7l8.9 3.8 4.7-13.2-9.1-6z" color="#663026"/>
<path d="M419.1 518.5l9 4.8 4.9-10-9.2-8z" color="#583626"/>
<path d="M428.1 523.3l9 4.2 5.1-7.1-9.2-7.1z" color="#493b26"/>
<path d="M437.1 527.5l8.9 2.3 5.2-4.8-9-4.6z" color="#404026"/>
<path d="M446.0 529.8l8.6-.1 5.4-3.2-8.8-1.5z" color="#404526"/>
<path d="M454.6 529.7l8.6-2.3 5.4-2.3-8.6 1.4z" color="#494a26"/>
<path d="M463.2 527.4l8.4-4 5.4-1.9-8.4 3.6z" color="#5c4f26"/>
<path d="M471.6 523.4l8.4-4.8 5.4-2-8.4 4.9z" color="#735426"/>
<path d="M480.0 518.6l8.4-4.6 5.3-2.4-8.3 5z" color="#8d5926"/>
<path d="M488.4 514.0l8.4-3.7 5.4-2.8-8.5 4.1z" color="#a55e26"/>
<path d="M496.8 510.3l8.6-2.1 5.3-3.4-8.5 2.7z" color="#b96326"/>
<path d="M505.4 508.2l8.7-.1 5.2-4-8.6 .7z" color="#c66926"/>
<path d="M514.1 508.1l8.8 1.9 5.2-4.5-8.8-1.4z" color="#cb6e26"/>
<path d="M522.9 510.0l8.9 3.7 5.2-4.9-8.9-3.3z" color="#c97326"/>
<path d="M531.8 513.7l9 5 5.2-5.1-9-4.8z" color="#c17826"/>
<path d="M540.8 518.7l9.1 5.8 5.2-5.3-9.1-5.6z" color="#b47d26"/>
<path d="M549.9 524.5l9.1 6.1 5.2-5.4-9.1-6z" color="#a68226"/>
<path d="M559.0 530.6l9.1 5.6 5.1-5.3-9-5.7z" color="#988726"/>
<path d="M568.1 536.2l9 5 5.2-5.3-9.1-5z" color="#8b8c26"/>
<path d="M577.1 541.2l8.9 3.9 5.2-5.2-8.9-4z" color="#829126"/>
<path d="M586.0 545.1l8.9 2.8 5.2-5.1-8.9-2.9z" color="#7d9626"/>
<path d="M594.9 547.9l8.8 1.9 5.2-5.2-8.8-1.8z" color="#7b9c26"/>
<path d="M603.7 549.8l8.8 .9 5.2-5.1-8.8-1z" color="#7ea126"/>
<path d="M612.5 550.7l8.7 .4 5.2-5.1-8.7-.4z" color="#83a626"/>
<path d="M621.2 551.1l8.7 .2 5.2-5.2-8.7-.1z" color="#89ab26"/>
<path d="M629.9 551.3l8.7 .1 5.2-5.2-8.7-.1z" color="#91b026"/>
<path d="M638.6 551.4l8.7 .5 5.2-5.3-8.7-.4z" color="#97b526"/>
<path d="M647.3 551.9l8.8 .9 5.2-5.3-8.8-.9z" color="#9cba26"/>
<path d="M656.1 552.8l8.8 1.4 5.1-5.3-8.7-1.4z" color="#a0bf26"/>
<path d="M664.9 554.2l8.8 2 5.2-5.4-8.9-1.9z" color="#a1c426"/>
<path d="M673.7 556.2l8.8 2.4 5.2-5.4-8.8-2.4z" color="#a0c926"/>
<path d="M682.5 558.6l8.9 2.7 5.2-5.3-8.9-2.8z" color="#9ecf26"/>
<path d="M691.4 561.3l8.9 2.9 5.2-5.2-8.9-3z" color="#9bd426"/>
<path d="M700.3 564.2l8.9 3 5.2-5.2-8.9-3z" color="#98d926"/>
<path d="M709.2 567.2l8.9 2.8 5.2-5.1-8.9-2.9z" color="#94de26"/>
<path d="M718.1 570.0l8.8 2.6 5.2-5-8.8-2.7z" color="#92e326"/>
<path d="M726.9 572.6l8.9 2.3 5.2-4.9-8.9-2.4z" color="#90e826"/>
<path d="M735.8 574.9l8.8 2 5.2-4.7-8.8-2.2z" color="#8fed26"/>
<path d="M744.6 576.9l8.8 1.7 5.2-4.6-8.8-1.8z" color="#8ff226"/>
<path d="M753.4 578.6l8.8 1.5 5.2-4.5-8.8-1.6z" color="#91f726"/>
<path d="M762.2 580.1l8.8 1.3 5.2-4.4-8.8-1.4z" color="#93fc26"/>
<path d="M335.3 481.4l9.3 9.3 5.3-3.5-9.3-9.3z" color="#6d032b"/>
<path d="M344.6 490.7l9.2 8.2 5.3-3.9-9.2-7.8z" color="#54082b"/>
<path d="M353.8 498.9l9.1 5.9 5.2-4.5-9-5.3z" color="#420d2b"/>
<path d="M362.9 504.8l8.9 3.1 5.1-5.9-8.8-1.7z" color="#3a122b"/>
<path d="M371.8 507.9l8.7-.2 5-7.8-8.6 2.1z" color="#40172b"/>
<path d="M380.5 507.7l8.5-2.9 4.8-10.6-8.3 5.7z" color="#521c2b"/>
<path d="M389.0 504.8l8.4-4.2 4.6-14.3-8.2 7.9z" color="#6d212b"/>
<path d="M397.4 500.6l8.5-2.7 4.3-18.1-8.2 6.5z" color="#88262b"/>
<path d="M405.9 497.9l8.8 1.4 4.3-18.4-8.8-1.1z" color="#962b2b"/>
<path d="M414.7 499.3l9.1 6 4.5-14.7-9.3-9.7z" color="#8d302b"/>
<path d="M423.8 505.3l9.2 8 4.8-10.8-9.5-11.9z" color="#73362b"/>
<path d="M433.0 513.3l9.2 7.1 5-7.7-9.4-10.2z" color="#573b2b"/>
<path d="M442.2 520.4l9 4.6 5.1-5.5-9.1-6.8z" color="#44402b"/>
<path d="M451.2 525.0l8.8 1.5 5.2-4-8.9-3z" color="#3d452b"/>
<path d="M460.0 526.5l8.6-1.4 5.3-3.2-8.7 .6z" color="#424a2b"/>
<path d="M468.6 525.1l8.4-3.6 5.3-2.8-8.4 3.2z" color="#524f2b"/>
<path d="M477.0 521.5l8.4-4.9 5.3-2.7-8.4 4.8z" color="#69542b"/>
<path d="M485.4 516.6l8.3-5 5.4-2.9-8.4 5.2z" color="#83592b"/>
<path d="M493.7 511.6l8.5-4.1 5.3-3.4-8.4 4.6z" color="#9d5e2b"/>
<path d="M502.2 507.5l8.5-2.7 5.2-3.7-8.4 3z" color="#b2632b"/>
<path d="M510.7 504.8l8.6-.7 5.3-4.2-8.7 1.2z" color="#c1692b"/>
<path d="M519.3 504.1l8.8 1.4 5.2-4.6-8.7-1z" color="#c86e2b"/>
<path d="M528.1 505.5l8.9 3.3 5.2-4.9-8.9-3z" color="#c7732b"/>
<path d="M537.0 508.8l9 4.8 5.2-5.2-9-4.5z" color="#c0782b"/>
<path d="M546.0 513.6l9.1 5.6 5.2-5.3-9.1-5.5z" color="#b57d2b"/>
<path d="M555.1 519.2l9.1 6 5.1-5.5-9-5.8z" color="#a7822b"/>
<path d="M564.2 525.2l9 5.7 5.2-5.6-9.1-5.6z" color="#99872b"/>
<path d="M573.2 530.9l9.1 5 5.1-5.6-9-5z" color="#8c8c2b"/>
<path d="M582.3 535.9l8.9 4 5.2-5.6-9-4z" color="#83912b"/>
<path d="M591.2 539.9l8.9 2.9 5.2-5.6-8.9-2.9z" color="#7e962b"/>
<path d="M600.1 542.8l8.8 1.8 5.2-5.6-8.8-1.8z" color="#7c9c2b"/>
<path d="M608.9 544.6l8.8 1 5.1-5.6-8.7-1z" color="#7fa12b"/>
<path d="M617.7 545.6l8.7 .4 5.1-5.6-8.7-.4z" color="#84a62b"/>
<path d="M626.4 546.0l8.7 .1 5.1-5.7-8.7 0z" color="#8aab2b"/>
<path d="M635.1 546.1l8.7 .1 5.1-5.7-8.7-.1z" color="#92b02b"/>
<path d="M643.8 546.2l8.7 .4 5.1-5.7-8.7-.4z" color="#99b52b"/>
<path d="M652.5 546.6l8.8 .9 5.1-5.8-8.8-.8z" color="#9eba2b"/>
<path d="M661.3 547.5l8.7 1.4 5.2-5.9-8.8-1.3z" color="#a1bf2b"/>
<path d="M670.0 548.9l8.9 1.9 5.1-5.8-8.8-2z" color="#a3c42b"/>
<path d="M678.9 550.8l8.8 2.4 5.2-5.8-8.9-2.4z" color="#a2c92b"/>
<path d="M687.7 553.2l8.9 2.8 5.1-5.8-8.8-2.8z" color="#a0cf2b"/>
<path d="M696.6 556.0l8.9 3 5.1-5.7-8.9-3.1z" color="#9dd42b"/>
<path d="M705.5 559.0l8.9 3 5.1-5.6-8.9-3.1z" color="#99d92b"/>
<path d="M714.4 562.0l8.9 2.9 5.1-5.5-8.9-3z" color="#95de2b"/>
<path d="M723.3 564.9l8.8 2.7 5.2-5.3-8.9-2.9z" color="#92e32b"/>
<path d="M732.1 567.6l8.9 2.4 5.2-5.2-8.9-2.5z" color="#90e82b"/>
<path d="M741.0 570.0l8.8 2.2 5.2-5.1-8.8-2.3z" color="#8eed2b"/>
<path d="M749.8 572.2l8.8 1.8 5.2-4.9-8.8-2z" color="#8ef22b"/>
<path d="M758.6 574.0l8.8 1.6 5.2-4.8-8.8-1.7z" color="#8ff72b"/>
<path d="M767.4 575.6l8.8 1.4 5.2-4.7-8.8-1.5z" color="#91fc2b"/>
<path d="M340.6 477.9l9.3 9.3 5.2-4.5-9.3-9.3z" color="#680330"/>
<path d="M349.9 487.2l9.2 7.8 5.2-4.7-9.2-7.6z" color="#500830"/>
<path d="M359.1 495.0l9 5.3 5.2-5.2-9-4.8z" color="#400d30"/>
<path d="M368.1 500.3l8.8 1.7 5.2-5.8-8.8-1.1z" color="#3b1230"/>
<path d="M376.9 502.0l8.6-2.1 5.1-7-8.5 3.3z" color="#451730"/>
<path d="M385.5 499.9l8.3-5.7 4.9-8.8-8.1 7.5z" color="#5e1c30"/>
<path d="M393.8 494.2l8.2-7.9 4.7-11.8-8 10.9z" color="#842130"/>
<path d="M402.0 486.3l8.2-6.5 4.4-17.5-7.9 12.2z" color="#af2630"/>
<path d="M410.2 479.8l8.8 1.1 2.1-28-6.5 9.4z" color="#ce2b30"/>
<path d="M419.0 480.9l9.3 9.7 4.7-12.2-11.9-25.5z" color="#bc3030"/>
<path d="M428.3 490.6l9.5 11.9 5-8.7-9.8-15.4z" color="#8b3630"/>
<path d="M437.8 502.5l9.4 10.2 5.1-6.6-9.5-12.3z" color="#643b30"/>
<path d="M447.2 512.7l9.1 6.8 5.2-5.2-9.2-8.2z" color="#484030"/>
<path d="M456.3 519.5l8.9 3 5.2-4.4-8.9-3.8z" color="#3b4530"/>
<path d="M465.2 522.5l8.7-.6 5.2-3.9-8.7 .1z" color="#3d4a30"/>
<path d="M473.9 521.9l8.4-3.2 5.3-3.7-8.5 3z" color="#4b4f30"/>
<path d="M482.3 518.7l8.4-4.8 5.3-3.6-8.4 4.7z" color="#625430"/>
<path d="M490.7 513.9l8.4-5.2 5.2-3.8-8.3 5.4z" color="#7c5930"/>
<path d="M499.1 508.7l8.4-4.6 5.2-4-8.4 4.8z" color="#975e30"/>
<path d="M507.5 504.1l8.4-3 5.3-4.3-8.5 3.3z" color="#ad6330"/>
<path d="M515.9 501.1l8.7-1.2 5.2-4.5-8.6 1.4z" color="#bd6930"/>
<path d="M524.6 499.9l8.7 1 5.2-4.8-8.7-.7z" color="#c66e30"/>
<path d="M533.3 500.9l8.9 3 5.2-5.1-8.9-2.7z" color="#c67330"/>
<path d="M542.2 503.9l9 4.5 5.2-5.4-9-4.2z" color="#c17830"/>
<path d="M551.2 508.4l9.1 5.5 5.1-5.6-9-5.3z" color="#b67d30"/>
<path d="M560.3 513.9l9 5.8 5.2-5.7-9.1-5.7z" color="#a88230"/>
<path d="M569.3 519.7l9.1 5.6 5.1-5.8-9-5.5z" color="#9b8730"/>
<path d="M578.4 525.3l9 5 5.1-5.9-9-4.9z" color="#8f8c30"/>
<path d="M587.4 530.3l9 4 5.1-6-9-3.9z" color="#859130"/>
<path d="M596.4 534.3l8.9 2.9 5.1-6-8.9-2.9z" color="#809630"/>
<path d="M605.3 537.2l8.8 1.8 5.1-6-8.8-1.8z" color="#7f9c30"/>
<path d="M614.1 539.0l8.7 1 5.1-6.1-8.7-.9z" color="#81a130"/>
<path d="M622.8 540.0l8.7 .4 5.2-6.2-8.8-.3z" color="#87a630"/>
<path d="M631.5 540.4l8.7 0 5.2-6.2-8.7 0z" color="#8dab30"/>
<path d="M640.2 540.4l8.7 .1 5.1-6.2-8.6-.1z" color="#95b030"/>
<path d="M648.9 540.5l8.7 .4 5.2-6.3-8.8-.3z" color="#9cb530"/>
<path d="M657.6 540.9l8.8 .8 5.1-6.3-8.7-.8z" color="#a1ba30"/>
<path d="M666.4 541.7l8.8 1.3 5.1-6.3-8.8-1.3z" color="#a5bf30"/>
<path d="M675.2 543.0l8.8 2 5.1-6.3-8.8-2z" color="#a6c430"/>
<path d="M684.0 545.0l8.9 2.4 5.1-6.2-8.9-2.5z" color="#a6c930"/>
<path d="M692.9 547.4l8.8 2.8 5.1-6.2-8.8-2.8z" color="#a3cf30"/>
<path d="M701.7 550.2l8.9 3.1 5.1-6.1-8.9-3.2z" color="#a0d430"/>
<path d="M710.6 553.3l8.9 3.1 5.1-6-8.9-3.2z" color="#9cd930"/>
<path d="M719.5 556.4l8.9 3 5.1-5.9-8.9-3.1z" color="#97de30"/>
<path d="M728.4 559.4l8.9 2.9 5.1-5.8-8.9-3z" color="#94e330"/>
<path d="M737.3 562.3l8.9 2.5 5.1-5.6-8.9-2.7z" color="#91e830"/>
<path d="M746.2 564.8l8.8 2.3 5.2-5.5-8.9-2.4z" color="#8fed30"/>
<path d="M755.0 567.1l8.8 2 5.2-5.3-8.8-2.2z" color="#8ff230"/>
<path d="M763.8 569.1l8.8 1.7 5.2-5.2-8.8-1.8z" color="#8ff730"/>
<path d="M772.6 570.8l8.8 1.5 5.2-5-8.8-1.7z" color="#90fc30"/>
<path d="M345.8 473.4l9.3 9.3 5.2-5.5-9.3-9.2z" color="#680336"/>
<path d="M355.1 482.7l9.2 7.6 5.2-5.5-9.2-7.6z" color="#500836"/>
<path d="M364.3 490.3l9 4.8 5.2-5.4-9-4.9z" color="#400d36"/>
<path d="M373.3 495.1l8.8 1.1 5.1-5.3-8.7-1.2z" color="#3c1236"/>
<path d="M382.1 496.2l8.5-3.3 5.1-5.1-8.5 3.1z" color="#481736"/>
<path d="M390.6 492.9l8.1-7.5 5.3-4.8-8.3 7.2z" color="#631c36"/>
<path d="M398.7 485.4l8-10.9 5.3-4.2-8 10.3z" color="#8d2136"/>
<path d="M406.7 474.5l7.9-12.2 5.3-2.7-7.9 10.7z" color="#be2636"/>
<path d="M414.6 462.3l6.5-9.4 7.6 7.3-8.8-.6z" color="#e12b36"/>
<path d="M421.1 452.9l11.9 25.5 5.3-3.7-9.6-14.5z" color="#cb3036"/>
<path d="M433.0 478.4l9.8 15.4 5.2-4.2-9.7-14.9z" color="#933636"/>
<path d="M442.8 493.8l9.5 12.3 5.2-4.4-9.5-12.1z" color="#673b36"/>
<path d="M452.3 506.1l9.2 8.2 5.2-4.5-9.2-8.1z" color="#484036"/>
<path d="M461.5 514.3l8.9 3.8 5.3-4.5-9-3.8z" color="#3a4536"/>
<path d="M470.4 518.1l8.7-.1 5.3-4.5-8.7 .1z" color="#3a4a36"/>
<path d="M479.1 518.0l8.5-3 5.2-4.5-8.4 3z" color="#484f36"/>
<path d="M487.6 515.0l8.4-4.7 5.2-4.7-8.4 4.9z" color="#5e5436"/>
<path d="M496.0 510.3l8.3-5.4 5.3-4.7-8.4 5.4z" color="#795936"/>
<path d="M504.3 504.9l8.4-4.8 5.2-4.8-8.3 4.9z" color="#945e36"/>
<path d="M512.7 500.1l8.5-3.3 5.2-4.9-8.5 3.4z" color="#ab6336"/>
<path d="M521.2 496.8l8.6-1.4 5.2-5.1-8.6 1.6z" color="#bc6936"/>
<path d="M529.8 495.4l8.7 .7 5.2-5.2-8.7-.6z" color="#c56e36"/>
<path d="M538.5 496.1l8.9 2.7 5.2-5.4-8.9-2.5z" color="#c67336"/>
<path d="M547.4 498.8l9 4.2 5.1-5.5-8.9-4.1z" color="#c17836"/>
<path d="M556.4 503.0l9 5.3 5.2-5.7-9.1-5.1z" color="#b77d36"/>
<path d="M565.4 508.3l9.1 5.7 5.1-5.9-9-5.5z" color="#ab8236"/>
<path d="M574.5 514.0l9 5.5 5.2-6-9.1-5.4z" color="#9d8736"/>
<path d="M583.5 519.5l9 4.9 5.2-6.2-9-4.7z" color="#928c36"/>
<path d="M592.5 524.4l9 3.9 5.1-6.2-8.9-3.9z" color="#899136"/>
<path d="M601.5 528.3l8.9 2.9 5.1-6.4-8.9-2.7z" color="#849636"/>
<path d="M610.4 531.2l8.8 1.8 5.1-6.5-8.8-1.7z" color="#839c36"/>
<path d="M619.2 533.0l8.7 .9 5.1-6.5-8.7-.9z" color="#86a136"/>
<path d="M627.9 533.9l8.8 .3 5-6.6-8.7-.2z" color="#8ba636"/>
<path d="M636.7 534.2l8.7 0 5-6.6-8.7 0z" color="#92ab36"/>
<path d="M645.4 534.2l8.6 .1 5.1-6.7-8.7 0z" color="#9ab036"/>
<path d="M654.0 534.3l8.8 .3 5-6.6-8.7-.4z" color="#a1b536"/>
<path d="M662.8 534.6l8.7 .8 5.1-6.7-8.8-.7z" color="#a6ba36"/>
<path d="M671.5 535.4l8.8 1.3 5.1-6.6-8.8-1.4z" color="#aabf36"/>
<path d="M680.3 536.7l8.8 2 5.1-6.6-8.8-2z" color="#abc436"/>
<path d="M689.1 538.7l8.9 2.5 5-6.6-8.8-2.5z" color="#abc936"/>
<path d="M698.0 541.2l8.8 2.8 5.1-6.5-8.9-2.9z" color="#a8cf36"/>
<path d="M706.8 544.0l8.9 3.2 5.1-6.5-8.9-3.2z" color="#a4d436"/>
<path d="M715.7 547.2l8.9 3.2 5.1-6.4-8.9-3.3z" color="#a0d936"/>
<path d="M724.6 550.4l8.9 3.1 5.2-6.2-9-3.3z" color="#9bde36"/>
<path d="M733.5 553.5l8.9 3 5.2-6.2-8.9-3z" color="#97e336"/>
<path d="M742.4 556.5l8.9 2.7 5.1-6-8.8-2.9z" color="#94e836"/>
<path d="M751.3 559.2l8.9 2.4 5.1-5.8-8.9-2.6z" color="#92ed36"/>
<path d="M760.2 561.6l8.8 2.2 5.1-5.8-8.8-2.2z" color="#90f236"/>
<path d="M769.0 563.8l8.8 1.8 5.2-5.5-8.9-2.1z" color="#90f736"/>
<path d="M777.8 565.6l8.8 1.7 5.2-5.4-8.8-1.8z" color="#91fc36"/>
<path d="M351.0 468.0l9.3 9.2 5.1-6.4-9.3-9.1z" color="#6b033b"/>
<path d="M360.3 477.2l9.2 7.6 5.1-6.2-9.2-7.8z" color="#53083b"/>
<path d="M369.5 484.8l9 4.9 5.1-5.7-9-5.4z" color="#420d3b"/>
<path d="M378.5 489.7l8.7 1.2 5.3-4.9-8.9-2z" color="#3d123b"/>
<path d="M387.2 490.9l8.5-3.1 5.3-3.4-8.5 1.6z" color="#46173b"/>
<path d="M395.7 487.8l8.3-7.2 5.4-1.1-8.4 4.9z" color="#5d1c3b"/>
<path d="M404.0 480.6l8-10.3 5.6 2.5-8.2 6.7z" color="#81213b"/>
<path d="M412.0 470.3l7.9-10.7 6.1 8.1-8.4 5.1z" color="#a7263b"/>
<path d="M419.9 459.6l8.8 .6 6.1 9.1-8.8-1.6z" color="#bc2b3b"/>
<path d="M428.7 460.2l9.6 14.5 5.8 3.6-9.3-9z" color="#ab303b"/>
<path d="M438.3 474.7l9.7 14.9 5.5 0-9.4-11.3z" color="#84363b"/>
<path d="M448.0 489.6l9.5 12.1 5.4-2.3-9.4-9.8z" color="#5e3b3b"/>
<path d="M457.5 501.7l9.2 8.1 5.3-3.8-9.1-6.6z" color="#43403b"/>
<path d="M466.7 509.8l9 3.8 5.2-4.8-8.9-2.8z" color="#37453b"/>
<path d="M475.7 513.6l8.7-.1 5.1-5.3-8.6 .6z" color="#394a3b"/>
<path d="M484.4 513.5l8.4-3 5.2-5.6-8.5 3.3z" color="#474f3b"/>
<path d="M492.8 510.5l8.4-4.9 5.2-5.7-8.4 5z" color="#5e543b"/>
<path d="M501.2 505.6l8.4-5.4 5.1-5.7-8.3 5.4z" color="#79593b"/>
<path d="M509.6 500.2l8.3-4.9 5.2-5.6-8.4 4.8z" color="#945e3b"/>
<path d="M517.9 495.3l8.5-3.4 5.1-5.6-8.4 3.4z" color="#ab633b"/>
<path d="M526.4 491.9l8.6-1.6 5.1-5.5-8.6 1.5z" color="#bc693b"/>
<path d="M535.0 490.3l8.7 .6 5.2-5.6-8.8-.5z" color="#c66e3b"/>
<path d="M543.7 490.9l8.9 2.5 5.1-5.6-8.8-2.5z" color="#c8733b"/>
<path d="M552.6 493.4l8.9 4.1 5.2-5.7-9-4z" color="#c3783b"/>
<path d="M561.5 497.5l9.1 5.1 5.1-5.8-9-5z" color="#b97d3b"/>
<path d="M570.6 502.6l9 5.5 5.1-6-9-5.3z" color="#ad823b"/>
<path d="M579.6 508.1l9.1 5.4 5.1-6.2-9.1-5.2z" color="#a1873b"/>
<path d="M588.7 513.5l9 4.7 5.1-6.3-9-4.6z" color="#968c3b"/>
<path d="M597.7 518.2l8.9 3.9 5.1-6.5-8.9-3.7z" color="#8d913b"/>
<path d="M606.6 522.1l8.9 2.7 5.1-6.6-8.9-2.6z" color="#89963b"/>
<path d="M615.5 524.8l8.8 1.7 5.1-6.7-8.8-1.6z" color="#889c3b"/>
<path d="M624.3 526.5l8.7 .9 5.1-6.8-8.7-.8z" color="#8ba13b"/>
<path d="M633.0 527.4l8.7 .2 5.1-6.8-8.7-.2z" color="#91a63b"/>
<path d="M641.7 527.6l8.7 0 5.1-6.8-8.7 0z" color="#98ab3b"/>
<path d="M650.4 527.6l8.7 0 5.1-6.8-8.7 0z" color="#a0b03b"/>
<path d="M659.1 527.6l8.7 .4 5.1-6.9-8.7-.3z" color="#a7b53b"/>
<path d="M667.8 528.0l8.8 .7 5.1-6.8-8.8-.8z" color="#acba3b"/>
<path d="M676.6 528.7l8.8 1.4 5-6.8-8.7-1.4z" color="#b0bf3b"/>
<path d="M685.4 530.1l8.8 2 5.1-6.8-8.9-2z" color="#b1c43b"/>
<path d="M694.2 532.1l8.8 2.5 5.1-6.7-8.8-2.6z" color="#b0c93b"/>
<path d="M703.0 534.6l8.9 2.9 5.1-6.7-8.9-2.9z" color="#aecf3b"/>
<path d="M711.9 537.5l8.9 3.2 5.1-6.6-8.9-3.3z" color="#aad43b"/>
<path d="M720.8 540.7l8.9 3.3 5.1-6.6-8.9-3.3z" color="#a5d93b"/>
<path d="M729.7 544.0l9 3.3 5-6.6-8.9-3.3z" color="#a0de3b"/>
<path d="M738.7 547.3l8.9 3 5-6.4-8.9-3.2z" color="#9ce33b"/>
<path d="M747.6 550.3l8.8 2.9 5.1-6.4-8.9-2.9z" color="#98e83b"/>
<path d="M756.4 553.2l8.9 2.6 5.1-6.3-8.9-2.7z" color="#95ed3b"/>
<path d="M765.3 555.8l8.8 2.2 5.2-6.1-8.9-2.4z" color="#94f23b"/>
<path d="M774.1 558.0l8.9 2.1 5.1-5.9-8.8-2.3z" color="#93f73b"/>
<path d="M783.0 560.1l8.8 1.8 5.1-5.7-8.8-2z" color="#93fc3b"/>
<path d="M356.1 461.7l9.3 9.1 5-7.3-9.3-9z" color="#710340"/>
<path d="M365.4 470.8l9.2 7.8 5-7-9.2-8.1z" color="#590840"/>
<path d="M374.6 478.6l9 5.4 5.1-6.3-9.1-6.1z" color="#470d40"/>
<path d="M383.6 484.0l8.9 2 5.1-4.9-8.9-3.4z" color="#3e1240"/>
<path d="M392.5 486.0l8.5-1.6 5.4-2.8-8.8-.5z" color="#421740"/>
<path d="M401.0 484.4l8.4-4.9 5.5 .1-8.5 2z" color="#511c40"/>
<path d="M409.4 479.5l8.2-6.7 5.8 3.9-8.5 2.9z" color="#682140"/>
<path d="M417.6 472.8l8.4-5.1 6 7.4-8.6 1.6z" color="#7f2640"/>
<path d="M426.0 467.7l8.8 1.6 6 7.8-8.8-2z" color="#8a2b40"/>
<path d="M434.8 469.3l9.3 9 5.8 4.8-9.1-6z" color="#803040"/>
<path d="M444.1 478.3l9.4 11.3 5.6 1.2-9.2-7.7z" color="#683640"/>
<path d="M453.5 489.6l9.4 9.8 5.4-1.8-9.2-6.8z" color="#4e3b40"/>
<path d="M462.9 499.4l9.1 6.6 5.3-3.9-9-4.5z" color="#3b4040"/>
<path d="M472.0 506.0l8.9 2.8 5.1-5.3-8.7-1.4z" color="#344540"/>
<path d="M480.9 508.8l8.6-.6 5.1-6.2-8.6 1.5z" color="#3a4a40"/>
<path d="M489.5 508.2l8.5-3.3 5.1-6.7-8.5 3.8z" color="#4a4f40"/>
<path d="M498.0 504.9l8.4-5 5-6.8-8.3 5.1z" color="#625440"/>
<path d="M506.4 499.9l8.3-5.4 5.1-6.7-8.4 5.3z" color="#7d5940"/>
<path d="M514.7 494.5l8.4-4.8 5.1-6.5-8.4 4.6z" color="#985e40"/>
<path d="M523.1 489.7l8.4-3.4 5.1-6.3-8.4 3.2z" color="#af6340"/>
<path d="M531.5 486.3l8.6-1.5 5.1-6.1-8.6 1.3z" color="#bf6940"/>
<path d="M540.1 484.8l8.8 .5 5.1-5.9-8.8-.7z" color="#c86e40"/>
<path d="M548.9 485.3l8.8 2.5 5.1-5.9-8.8-2.5z" color="#ca7340"/>
<path d="M557.7 487.8l9 4 5.1-5.9-9-4z" color="#c57840"/>
<path d="M566.7 491.8l9 5 5.1-6-9-4.9z" color="#bc7d40"/>
<path d="M575.7 496.8l9 5.3 5.2-6-9.1-5.3z" color="#b18240"/>
<path d="M584.7 502.1l9.1 5.2 5.1-6.2-9-5z" color="#a58740"/>
<path d="M593.8 507.3l9 4.6 5.1-6.4-9-4.4z" color="#9a8c40"/>
<path d="M602.8 511.9l8.9 3.7 5.1-6.6-8.9-3.5z" color="#929140"/>
<path d="M611.7 515.6l8.9 2.6 5-6.7-8.8-2.5z" color="#8f9640"/>
<path d="M620.6 518.2l8.8 1.6 5-6.8-8.8-1.5z" color="#8e9c40"/>
<path d="M629.4 519.8l8.7 .8 5.1-6.9-8.8-.7z" color="#92a140"/>
<path d="M638.1 520.6l8.7 .2 5.1-6.9-8.7-.2z" color="#97a640"/>
<path d="M646.8 520.8l8.7 0 5.1-6.9-8.7 0z" color="#9fab40"/>
<path d="M655.5 520.8l8.7 0 5.1-6.8-8.7-.1z" color="#a6b040"/>
<path d="M664.2 520.8l8.7 .3 5.1-6.8-8.7-.3z" color="#adb540"/>
<path d="M672.9 521.1l8.8 .8 5-6.7-8.7-.9z" color="#b3ba40"/>
<path d="M681.7 521.9l8.7 1.4 5.1-6.7-8.8-1.4z" color="#b6bf40"/>
<path d="M690.4 523.3l8.9 2 5-6.6-8.8-2.1z" color="#b7c440"/>
<path d="M699.3 525.3l8.8 2.6 5.1-6.7-8.9-2.5z" color="#b6c940"/>
<path d="M708.1 527.9l8.9 2.9 5.1-6.6-8.9-3z" color="#b4cf40"/>
<path d="M717.0 530.8l8.9 3.3 5.1-6.7-8.9-3.2z" color="#b0d440"/>
<path d="M725.9 534.1l8.9 3.3 5.1-6.7-8.9-3.3z" color="#abd940"/>
<path d="M734.8 537.4l8.9 3.3 5.1-6.7-8.9-3.3z" color="#a6de40"/>
<path d="M743.7 540.7l8.9 3.2 5.1-6.7-8.9-3.2z" color="#a1e340"/>
<path d="M752.6 543.9l8.9 2.9 5.1-6.6-8.9-3z" color="#9de840"/>
<path d="M761.5 546.8l8.9 2.7 5.1-6.5-8.9-2.8z" color="#9aed40"/>
<path d="M770.4 549.5l8.9 2.4 5.1-6.4-8.9-2.5z" color="#98f240"/>
<path d="M779.3 551.9l8.8 2.3 5.1-6.3-8.8-2.4z" color="#97f740"/>
<path d="M788.1 554.2l8.8 2 5.1-6.1-8.8-2.2z" color="#96fc40"/>
<path d="M361.1 454.5l9.3 9 5-8.2-9.3-8.8z" color="#7b0345"/>
<path d="M370.4 463.5l9.2 8.1 5-8.1-9.2-8.2z" color="#620845"/>
<path d="M379.6 471.6l9.1 6.1 5.1-7.3-9.2-6.9z" color="#4e0d45"/>
<path d="M388.7 477.7l8.9 3.4 5.2-5.9-9-4.8z" color="#421245"/>
<path d="M397.6 481.1l8.8 .5 5.2-3.8-8.8-2.6z" color="#3f1745"/>
<path d="M406.4 481.6l8.5-2 5.5-1-8.8-.8z" color="#451c45"/>
<path d="M414.9 479.6l8.5-2.9 5.7 1.9-8.7 0z" color="#502145"/>
<path d="M423.4 476.7l8.6-1.6 5.8 4.1-8.7-.6z" color="#5c2645"/>
<path d="M432.0 475.1l8.8 2 5.9 4.5-8.9-2.4z" color="#602b45"/>
<path d="M440.8 477.1l9.1 6 5.7 2.7-8.9-4.2z" color="#5a3045"/>
<path d="M449.9 483.1l9.2 7.7 5.5-.1-9-4.9z" color="#4c3645"/>
<path d="M459.1 490.8l9.2 6.8 5.3-2.8-9-4.1z" color="#3e3b45"/>
<path d="M468.3 497.6l9 4.5 5.2-5-8.9-2.3z" color="#344045"/>
<path d="M477.3 502.1l8.7 1.4 5.1-6.5-8.6 .1z" color="#354545"/>
<path d="M486.0 503.5l8.6-1.5 5.1-7.4-8.6 2.4z" color="#3f4a45"/>
<path d="M494.6 502.0l8.5-3.8 5-7.8-8.4 4.2z" color="#514f45"/>
<path d="M503.1 498.2l8.3-5.1 5-7.8-8.3 5.1z" color="#6a5445"/>
<path d="M511.4 493.1l8.4-5.3 5-7.6-8.4 5.1z" color="#855945"/>
<path d="M519.8 487.8l8.4-4.6 5-7.2-8.4 4.2z" color="#9f5e45"/>
<path d="M528.2 483.2l8.4-3.2 5.1-6.8-8.5 2.8z" color="#b56345"/>
<path d="M536.6 480.0l8.6-1.3 5.1-6.4-8.6 .9z" color="#c46945"/>
<path d="M545.2 478.7l8.8 .7 5.1-6.1-8.8-1z" color="#cc6e45"/>
<path d="M554.0 479.4l8.8 2.5 5.2-5.9-8.9-2.7z" color="#cd7345"/>
<path d="M562.8 481.9l9 4 5.1-5.8-8.9-4.1z" color="#c87845"/>
<path d="M571.8 485.9l9 4.9 5.2-5.9-9.1-4.8z" color="#bf7d45"/>
<path d="M580.8 490.8l9.1 5.3 5.1-6-9-5.2z" color="#b48245"/>
<path d="M589.9 496.1l9 5 5.1-6.1-9-4.9z" color="#a88745"/>
<path d="M598.9 501.1l9 4.4 5.1-6.3-9-4.2z" color="#9e8c45"/>
<path d="M607.9 505.5l8.9 3.5 5.1-6.4-8.9-3.4z" color="#979145"/>
<path d="M616.8 509.0l8.8 2.5 5.1-6.6-8.8-2.3z" color="#949645"/>
<path d="M625.6 511.5l8.8 1.5 5.1-6.6-8.8-1.5z" color="#949c45"/>
<path d="M634.4 513.0l8.8 .7 5.1-6.6-8.8-.7z" color="#98a145"/>
<path d="M643.2 513.7l8.7 .2 5.1-6.6-8.7-.2z" color="#9ea645"/>
<path d="M651.9 513.9l8.7 0 5.1-6.6-8.7 0z" color="#a5ab45"/>
<path d="M660.6 513.9l8.7 .1 5.1-6.6-8.7-.1z" color="#acb045"/>
<path d="M669.3 514.0l8.7 .3 5.1-6.4-8.7-.5z" color="#b3b545"/>
<path d="M678.0 514.3l8.7 .9 5.1-6.4-8.7-.9z" color="#b8ba45"/>
<path d="M686.7 515.2l8.8 1.4 5.1-6.3-8.8-1.5z" color="#bbbf45"/>
<path d="M695.5 516.6l8.8 2.1 5.2-6.4-8.9-2z" color="#bdc445"/>
<path d="M704.3 518.7l8.9 2.5 5.1-6.3-8.8-2.6z" color="#bcc945"/>
<path d="M713.2 521.2l8.9 3 5.1-6.4-8.9-2.9z" color="#b9cf45"/>
<path d="M722.1 524.2l8.9 3.2 5.1-6.4-8.9-3.2z" color="#b5d445"/>
<path d="M731.0 527.4l8.9 3.3 5.1-6.5-8.9-3.2z" color="#b0d945"/>
<path d="M739.9 530.7l8.9 3.3 5.1-6.5-8.9-3.3z" color="#abde45"/>
<path d="M748.8 534.0l8.9 3.2 5.1-6.6-8.9-3.1z" color="#a7e345"/>
<path d="M757.7 537.2l8.9 3 5.1-6.6-8.9-3z" color="#a3e845"/>
<path d="M766.6 540.2l8.9 2.8 5.1-6.7-8.9-2.7z" color="#a0ed45"/>
<path d="M775.5 543.0l8.9 2.5 5-6.6-8.8-2.6z" color="#9df245"/>
<path d="M784.4 545.5l8.8 2.4 5.1-6.5-8.9-2.5z" color="#9cf745"/>
<path d="M793.2 547.9l8.8 2.2 5.1-6.4-8.8-2.3z" color="#9bfc45"/>
<path d="M366.1 446.5l9.3 8.8 4.9-9.1-9.2-8.3z" color="#87034a"/>
<path d="M375.4 455.3l9.2 8.2 4.9-9.1-9.2-8.2z" color="#6f084a"/>
<path d="M384.6 463.5l9.2 6.9 4.9-8.6-9.2-7.4z" color="#5a0d4a"/>
<path d="M393.8 470.4l9 4.8 5-7.4-9.1-6z" color="#4a124a"/>
<path d="M402.8 475.2l8.8 2.6 5.2-5.7-9-4.3z" color="#41174a"/>
<path d="M411.6 477.8l8.8 .8 5.3-3.5-8.9-3z" color="#3f1c4a"/>
<path d="M420.4 478.6l8.7 0 5.4-1.4-8.8-2.1z" color="#41214a"/>
<path d="M429.1 478.6l8.7 .6 5.5 0-8.8-2z" color="#44264a"/>
<path d="M437.8 479.2l8.9 2.4 5.5 .2-8.9-2.6z" color="#442b4a"/>
<path d="M446.7 481.6l8.9 4.2 5.5-1-8.9-3z" color="#41304a"/>
<path d="M455.6 485.8l9 4.9 5.4-2.9-8.9-3z" color="#3a364a"/>
<path d="M464.6 490.7l9 4.1 5.2-4.9-8.8-2.1z" color="#343b4a"/>
<path d="M473.6 494.8l8.9 2.3 5-6.7-8.7-.5z" color="#33404a"/>
<path d="M482.5 497.1l8.6-.1 5-8-8.6 1.4z" color="#3a454a"/>
<path d="M491.1 497.0l8.6-2.4 4.9-8.8-8.5 3.2z" color="#484a4a"/>
<path d="M499.7 494.6l8.4-4.2 4.9-9-8.4 4.4z" color="#5d4f4a"/>
<path d="M508.1 490.4l8.3-5.1 5-8.8-8.4 4.9z" color="#76544a"/>
<path d="M516.4 485.3l8.4-5.1 5-8.3-8.4 4.6z" color="#91594a"/>
<path d="M524.8 480.2l8.4-4.2 5-7.8-8.4 3.7z" color="#a95e4a"/>
<path d="M533.2 476.0l8.5-2.8 5.1-7.2-8.6 2.2z" color="#bd634a"/>
<path d="M541.7 473.2l8.6-.9 5.1-6.6-8.6 .3z" color="#ca694a"/>
<path d="M550.3 472.3l8.8 1 5.1-6.2-8.8-1.4z" color="#d16e4a"/>
<path d="M559.1 473.3l8.9 2.7 5.1-5.9-8.9-3z" color="#d0734a"/>
<path d="M568.0 476.0l8.9 4.1 5.2-5.7-9-4.3z" color="#cb784a"/>
<path d="M576.9 480.1l9.1 4.8 5.1-5.6-9-4.9z" color="#c17d4a"/>
<path d="M586.0 484.9l9 5.2 5.1-5.7-9-5.1z" color="#b6824a"/>
<path d="M595.0 490.1l9 4.9 5.1-5.9-9-4.7z" color="#ab874a"/>
<path d="M604.0 495.0l9 4.2 5.1-5.9-9-4.2z" color="#a28c4a"/>
<path d="M613.0 499.2l8.9 3.4 5.1-6.1-8.9-3.2z" color="#9b914a"/>
<path d="M621.9 502.6l8.8 2.3 5.2-6.1-8.9-2.3z" color="#98964a"/>
<path d="M630.7 504.9l8.8 1.5 5.1-6.2-8.7-1.4z" color="#999c4a"/>
<path d="M639.5 506.4l8.8 .7 5.1-6.2-8.8-.7z" color="#9da14a"/>
<path d="M648.3 507.1l8.7 .2 5.1-6.1-8.7-.3z" color="#a2a64a"/>
<path d="M657.0 507.3l8.7 0 5.1-6-8.7-.1z" color="#a9ab4a"/>
<path d="M665.7 507.3l8.7 .1 5.1-5.9-8.7-.2z" color="#b1b04a"/>
<path d="M674.4 507.4l8.7 .5 5.1-5.9-8.7-.5z" color="#b7b54a"/>
<path d="M683.1 507.9l8.7 .9 5.2-5.8-8.8-1z" color="#bcba4a"/>
<path d="M691.8 508.8l8.8 1.5 5.2-5.8-8.8-1.5z" color="#bfbf4a"/>
<path d="M700.6 510.3l8.9 2 5.1-5.7-8.8-2.1z" color="#c0c44a"/>
<path d="M709.5 512.3l8.8 2.6 5.2-5.8-8.9-2.5z" color="#bfc94a"/>
<path d="M718.3 514.9l8.9 2.9 5.1-5.9-8.8-2.8z" color="#bccf4a"/>
<path d="M727.2 517.8l8.9 3.2 5.1-6-8.9-3.1z" color="#b9d44a"/>
<path d="M736.1 521.0l8.9 3.2 5.1-6.1-8.9-3.1z" color="#b4d94a"/>
<path d="M745.0 524.2l8.9 3.3 5.1-6.2-8.9-3.2z" color="#b0de4a"/>
<path d="M753.9 527.5l8.9 3.1 5.1-6.4-8.9-2.9z" color="#ace34a"/>
<path d="M762.8 530.6l8.9 3 5.1-6.5-8.9-2.9z" color="#a8e84a"/>
<path d="M771.7 533.6l8.9 2.7 5.1-6.5-8.9-2.7z" color="#a5ed4a"/>
<path d="M780.6 536.3l8.8 2.6 5.1-6.6-8.8-2.5z" color="#a3f24a"/>
<path d="M789.4 538.9l8.9 2.5 5.1-6.7-8.9-2.4z" color="#a1f74a"/>
<path d="M798.3 541.4l8.8 2.3 5.1-6.6-8.8-2.4z" color="#a0fc4a"/>
<path d="M371.1 437.9l9.2 8.3 4.9-9.6-9.2-7.7z" color="#96034f"/>
<path d="M380.3 446.2l9.2 8.2 4.9-9.9-9.2-7.9z" color="#80084f"/>
<path d="M389.5 454.4l9.2 7.4 4.9-9.8-9.2-7.5z" color="#6a0d4f"/>
<path d="M398.7 461.8l9.1 6 4.9-9.1-9.1-6.7z" color="#58124f"/>
<path d="M407.8 467.8l9 4.3 5-7.9-9.1-5.5z" color="#4a174f"/>
<path d="M416.8 472.1l8.9 3 5.1-6.5-9-4.4z" color="#421c4f"/>
<path d="M425.7 475.1l8.8 2.1 5.2-5.2-8.9-3.4z" color="#3d214f"/>
<path d="M434.5 477.2l8.8 2 5.3-4.2-8.9-3z" color="#3b264f"/>
<path d="M443.3 479.2l8.9 2.6 5.2-4.1-8.8-2.7z" color="#392b4f"/>
<path d="M452.2 481.8l8.9 3 5.2-4.8-8.9-2.3z" color="#36304f"/>
<path d="M461.1 484.8l8.9 3 5.1-6-8.8-1.8z" color="#34364f"/>
<path d="M470.0 487.8l8.8 2.1 5-7.5-8.7-.6z" color="#353b4f"/>
<path d="M478.8 489.9l8.7 .5 5-8.7-8.7 .7z" color="#3a404f"/>
<path d="M487.5 490.4l8.6-1.4 4.9-9.6-8.5 2.3z" color="#46454f"/>
<path d="M496.1 489.0l8.5-3.2 4.9-9.9-8.5 3.5z" color="#574a4f"/>
<path d="M504.6 485.8l8.4-4.4 4.9-9.9-8.4 4.4z" color="#6d4f4f"/>
<path d="M513.0 481.4l8.4-4.9 4.9-9.5-8.4 4.5z" color="#86544f"/>
<path d="M521.4 476.5l8.4-4.6 4.9-8.8-8.4 3.9z" color="#9f594f"/>
<path d="M529.8 471.9l8.4-3.7 5-8-8.5 2.9z" color="#b55e4f"/>
<path d="M538.2 468.2l8.6-2.2 5-7.2-8.6 1.4z" color="#c6634f"/>
<path d="M546.8 466.0l8.6-.3 5.1-6.6-8.7-.3z" color="#d1694f"/>
<path d="M555.4 465.7l8.8 1.4 5.1-6-8.8-2z" color="#d56e4f"/>
<path d="M564.2 467.1l8.9 3 5.2-5.6-9-3.4z" color="#d3734f"/>
<path d="M573.1 470.1l9 4.3 5.2-5.4-9-4.5z" color="#cd784f"/>
<path d="M582.1 474.4l9 4.9 5.2-5.3-9-5z" color="#c37d4f"/>
<path d="M591.1 479.3l9 5.1 5.2-5.3-9-5.1z" color="#b8824f"/>
<path d="M600.1 484.4l9 4.7 5.2-5.3-9-4.7z" color="#ad874f"/>
<path d="M609.1 489.1l9 4.2 5.2-5.5-9-4z" color="#a48c4f"/>
<path d="M618.1 493.3l8.9 3.2 5.2-5.5-8.9-3.2z" color="#9e914f"/>
<path d="M627.0 496.5l8.9 2.3 5.1-5.6-8.8-2.2z" color="#9b964f"/>
<path d="M635.9 498.8l8.7 1.4 5.2-5.6-8.8-1.4z" color="#9c9c4f"/>
<path d="M644.6 500.2l8.8 .7 5.1-5.6-8.7-.7z" color="#9fa14f"/>
<path d="M653.4 500.9l8.7 .3 5.1-5.5-8.7-.4z" color="#a5a64f"/>
<path d="M662.1 501.2l8.7 .1 5.2-5.4-8.8-.2z" color="#acab4f"/>
<path d="M670.8 501.3l8.7 .2 5.2-5.3-8.7-.3z" color="#b3b04f"/>
<path d="M679.5 501.5l8.7 .5 5.2-5.1-8.7-.7z" color="#b9b54f"/>
<path d="M688.2 502.0l8.8 1 5.2-5-8.8-1.1z" color="#bdba4f"/>
<path d="M697.0 503.0l8.8 1.5 5.2-4.9-8.8-1.6z" color="#c0bf4f"/>
<path d="M705.8 504.5l8.8 2.1 5.2-5-8.8-2z" color="#c1c44f"/>
<path d="M714.6 506.6l8.9 2.5 5.1-5-8.8-2.5z" color="#c0c94f"/>
<path d="M723.5 509.1l8.8 2.8 5.2-5.1-8.9-2.7z" color="#becf4f"/>
<path d="M732.3 511.9l8.9 3.1 5.2-5.3-8.9-2.9z" color="#bad44f"/>
<path d="M741.2 515.0l8.9 3.1 5.2-5.4-8.9-3z" color="#b7d94f"/>
<path d="M750.1 518.1l8.9 3.2 5.2-5.7-8.9-2.9z" color="#b3de4f"/>
<path d="M759.0 521.3l8.9 2.9 5.1-5.9-8.8-2.7z" color="#afe34f"/>
<path d="M767.9 524.2l8.9 2.9 5.1-6.1-8.9-2.7z" color="#ace84f"/>
<path d="M776.8 527.1l8.9 2.7 5.1-6.4-8.9-2.4z" color="#aaed4f"/>
<path d="M785.7 529.8l8.8 2.5 5.1-6.5-8.8-2.4z" color="#a8f24f"/>
<path d="M794.5 532.3l8.9 2.4 5.1-6.5-8.9-2.4z" color="#a7f74f"/>
<path d="M803.4 534.7l8.8 2.4 5.1-6.6-8.8-2.3z" color="#a5fc4f"/>
<path d="M376.0 428.9l9.2 7.7 4.9-9.9-9.2-6.8z" color="#a60354"/>
<path d="M385.2 436.6l9.2 7.9 4.8-10.5-9.1-7.3z" color="#920854"/>
<path d="M394.4 444.5l9.2 7.5 4.8-10.7-9.2-7.3z" color="#7d0d54"/>
<path d="M403.6 452.0l9.1 6.7 4.9-10.6-9.2-6.8z" color="#6a1254"/>
<path d="M412.7 458.7l9.1 5.5 4.9-10-9.1-6.1z" color="#5a1754"/>
<path d="M421.8 464.2l9 4.4 4.9-9.2-9-5.2z" color="#4e1c54"/>
<path d="M430.8 468.6l8.9 3.4 5-8.4-9-4.2z" color="#452154"/>
<path d="M439.7 472.0l8.9 3 5-7.9-8.9-3.5z" color="#402654"/>
<path d="M448.6 475.0l8.8 2.7 5.1-7.9-8.9-2.7z" color="#3c2b54"/>
<path d="M457.4 477.7l8.9 2.3 5-8.2-8.8-2z" color="#3b3054"/>
<path d="M466.3 480.0l8.8 1.8 4.9-9-8.7-1z" color="#3c3654"/>
<path d="M475.1 481.8l8.7 .6 4.9-9.8-8.7 .2z" color="#403b54"/>
<path d="M483.8 482.4l8.7-.7 4.8-10.5-8.6 1.4z" color="#494054"/>
<path d="M492.5 481.7l8.5-2.3 4.8-10.9-8.5 2.7z" color="#584554"/>
<path d="M501.0 479.4l8.5-3.5 4.8-10.9-8.5 3.5z" color="#6b4a54"/>
<path d="M509.5 475.9l8.4-4.4 4.8-10.4-8.4 3.9z" color="#814f54"/>
<path d="M517.9 471.5l8.4-4.5 4.9-9.7-8.5 3.8z" color="#985454"/>
<path d="M526.3 467.0l8.4-3.9 4.9-9-8.4 3.2z" color="#ae5954"/>
<path d="M534.7 463.1l8.5-2.9 5-8-8.6 1.9z" color="#c15e54"/>
<path d="M543.2 460.2l8.6-1.4 5.1-7.1-8.7 .5z" color="#cf6354"/>
<path d="M551.8 458.8l8.7 .3 5.1-6.3-8.7-1.1z" color="#d76954"/>
<path d="M560.5 459.1l8.8 2 5.2-5.6-8.9-2.7z" color="#d96e54"/>
<path d="M569.3 461.1l9 3.4 5.1-5.1-8.9-3.9z" color="#d57354"/>
<path d="M578.3 464.5l9 4.5 5.2-4.9-9.1-4.7z" color="#cd7854"/>
<path d="M587.3 469.0l9 5 5.2-4.7-9-5.2z" color="#c37d54"/>
<path d="M596.3 474.0l9 5.1 5.2-4.7-9-5.1z" color="#b78254"/>
<path d="M605.3 479.1l9 4.7 5.2-4.7-9-4.7z" color="#ac8754"/>
<path d="M614.3 483.8l9 4 5.2-4.8-9-3.9z" color="#a48c54"/>
<path d="M623.3 487.8l8.9 3.2 5.2-4.9-8.9-3.1z" color="#9e9154"/>
<path d="M632.2 491.0l8.8 2.2 5.2-4.9-8.8-2.2z" color="#9b9654"/>
<path d="M641.0 493.2l8.8 1.4 5.2-4.9-8.8-1.4z" color="#9c9c54"/>
<path d="M649.8 494.6l8.7 .7 5.2-4.7-8.7-.9z" color="#a0a154"/>
<path d="M658.5 495.3l8.7 .4 5.3-4.7-8.8-.4z" color="#a5a654"/>
<path d="M667.2 495.7l8.8 .2 5.2-4.5-8.7-.4z" color="#abab54"/>
<path d="M676.0 495.9l8.7 .3 5.2-4.3-8.7-.5z" color="#b2b054"/>
<path d="M684.7 496.2l8.7 .7 5.2-4.2-8.7-.8z" color="#b7b554"/>
<path d="M693.4 496.9l8.8 1.1 5.2-4.1-8.8-1.2z" color="#bbba54"/>
<path d="M702.2 498.0l8.8 1.6 5.2-4-8.8-1.7z" color="#bebf54"/>
<path d="M711.0 499.6l8.8 2 5.2-4-8.8-2z" color="#bec454"/>
<path d="M719.8 501.6l8.8 2.5 5.3-4.1-8.9-2.4z" color="#bec954"/>
<path d="M728.6 504.1l8.9 2.7 5.3-4.2-8.9-2.6z" color="#bccf54"/>
<path d="M737.5 506.8l8.9 2.9 5.2-4.4-8.8-2.7z" color="#b9d454"/>
<path d="M746.4 509.7l8.9 3 5.2-4.7-8.9-2.7z" color="#b6d954"/>
<path d="M755.3 512.7l8.9 2.9 5.2-5-8.9-2.6z" color="#b3de54"/>
<path d="M764.2 515.6l8.8 2.7 5.2-5.2-8.8-2.5z" color="#b1e354"/>
<path d="M773.0 518.3l8.9 2.7 5.2-5.6-8.9-2.3z" color="#afe854"/>
<path d="M781.9 521.0l8.9 2.4 5.1-5.8-8.8-2.2z" color="#aded54"/>
<path d="M790.8 523.4l8.8 2.4 5.1-6.1-8.8-2.1z" color="#acf254"/>
<path d="M799.6 525.8l8.9 2.4 5.1-6.4-8.9-2.1z" color="#abf754"/>
<path d="M808.5 528.2l8.8 2.3 5.1-6.5-8.8-2.2z" color="#abfc54"/>
<path d="M380.9 419.9l9.2 6.8 4.8-9.7-9-5.7z" color="#b60359"/>
<path d="M390.1 426.7l9.1 7.3 4.9-10.6-9.2-6.4z" color="#a50859"/>
<path d="M399.2 434.0l9.2 7.3 4.8-11.2-9.1-6.7z" color="#930d59"/>
<path d="M408.4 441.3l9.2 6.8 4.7-11.4-9.1-6.6z" color="#801259"/>
<path d="M417.6 448.1l9.1 6.1 4.7-11.4-9.1-6.1z" color="#701759"/>
<path d="M426.7 454.2l9 5.2 4.8-11.2-9.1-5.4z" color="#621c59"/>
<path d="M435.7 459.4l9 4.2 4.8-10.8-9-4.6z" color="#572159"/>
<path d="M444.7 463.6l8.9 3.5 4.8-10.6-8.9-3.7z" color="#502659"/>
<path d="M453.6 467.1l8.9 2.7 4.8-10.6-8.9-2.7z" color="#4c2b59"/>
<path d="M462.5 469.8l8.8 2 4.8-10.9-8.8-1.7z" color="#4b3059"/>
<path d="M471.3 471.8l8.7 1 4.8-11.2-8.7-.7z" color="#4d3659"/>
<path d="M480.0 472.8l8.7-.2 4.8-11.6-8.7 .6z" color="#543b59"/>
<path d="M488.7 472.6l8.6-1.4 4.8-11.8-8.6 1.6z" color="#5f4059"/>
<path d="M497.3 471.2l8.5-2.7 4.8-11.6-8.5 2.5z" color="#6f4559"/>
<path d="M505.8 468.5l8.5-3.5 4.8-11.2-8.5 3.1z" color="#814a59"/>
<path d="M514.3 465.0l8.4-3.9 4.8-10.6-8.4 3.3z" color="#964f59"/>
<path d="M522.7 461.1l8.5-3.8 4.8-9.7-8.5 2.9z" color="#ab5459"/>
<path d="M531.2 457.3l8.4-3.2 5-8.6-8.6 2.1z" color="#be5959"/>
<path d="M539.6 454.1l8.6-1.9 5-7.6-8.6 .9z" color="#cd5e59"/>
<path d="M548.2 452.2l8.7-.5 5.1-6.5-8.8-.6z" color="#d76359"/>
<path d="M556.9 451.7l8.7 1.1 5.2-5.6-8.8-2z" color="#dc6959"/>
<path d="M565.6 452.8l8.9 2.7 5.2-5-8.9-3.3z" color="#db6e59"/>
<path d="M574.5 455.5l8.9 3.9 5.3-4.5-9-4.4z" color="#d57359"/>
<path d="M583.4 459.4l9.1 4.7 5.2-4.2-9-5z" color="#cc7859"/>
<path d="M592.5 464.1l9 5.2 5.2-4.1-9-5.3z" color="#c07d59"/>
<path d="M601.5 469.3l9 5.1 5.3-4-9.1-5.2z" color="#b48259"/>
<path d="M610.5 474.4l9 4.7 5.3-4.1-9-4.6z" color="#a98759"/>
<path d="M619.5 479.1l9 3.9 5.2-4.1-8.9-3.9z" color="#a18c59"/>
<path d="M628.5 483.0l8.9 3.1 5.2-4.1-8.9-3.1z" color="#9b9159"/>
<path d="M637.4 486.1l8.8 2.2 5.3-4.1-8.9-2.2z" color="#999659"/>
<path d="M646.2 488.3l8.8 1.4 5.2-4-8.7-1.5z" color="#9a9c59"/>
<path d="M655.0 489.7l8.7 .9 5.3-4-8.8-.9z" color="#9da159"/>
<path d="M663.7 490.6l8.8 .4 5.2-3.8-8.7-.6z" color="#a2a659"/>
<path d="M672.5 491.0l8.7 .4 5.3-3.6-8.8-.6z" color="#a8ab59"/>
<path d="M681.2 491.4l8.7 .5 5.3-3.4-8.7-.7z" color="#adb059"/>
<path d="M689.9 491.9l8.7 .8 5.4-3.2-8.8-1z" color="#b2b559"/>
<path d="M698.6 492.7l8.8 1.2 5.3-3.1-8.7-1.3z" color="#b6ba59"/>
<path d="M707.4 493.9l8.8 1.7 5.3-3.1-8.8-1.7z" color="#b8bf59"/>
<path d="M716.2 495.6l8.8 2 5.4-3-8.9-2.1z" color="#b8c459"/>
<path d="M725.0 497.6l8.9 2.4 5.3-3.1-8.8-2.3z" color="#b8c959"/>
<path d="M733.9 500.0l8.9 2.6 5.3-3.2-8.9-2.5z" color="#b6cf59"/>
<path d="M742.8 502.6l8.8 2.7 5.3-3.5-8.8-2.4z" color="#b4d459"/>
<path d="M751.6 505.3l8.9 2.7 5.3-3.8-8.9-2.4z" color="#b2d959"/>
<path d="M760.5 508.0l8.9 2.6 5.2-4.1-8.8-2.3z" color="#b0de59"/>
<path d="M769.4 510.6l8.8 2.5 5.2-4.5-8.8-2.1z" color="#afe359"/>
<path d="M778.2 513.1l8.9 2.3 5.2-4.9-8.9-1.9z" color="#aee859"/>
<path d="M787.1 515.4l8.8 2.2 5.2-5.3-8.8-1.8z" color="#aeed59"/>
<path d="M795.9 517.6l8.8 2.1 5.2-5.6-8.8-1.8z" color="#aff259"/>
<path d="M804.7 519.7l8.9 2.1 5.1-5.9-8.8-1.8z" color="#aff759"/>
<path d="M813.6 521.8l8.8 2.2 5.1-6.1-8.8-2z" color="#affc59"/>
<path d="M385.9 411.3l9 5.7 5-9.1-9-4.5z" color="#c4035e"/>
<path d="M394.9 417.0l9.2 6.4 4.8-10.1-9-5.4z" color="#b7085e"/>
<path d="M404.1 423.4l9.1 6.7 4.8-10.9-9.1-5.9z" color="#a80d5e"/>
<path d="M413.2 430.1l9.1 6.6 4.8-11.6-9.1-5.9z" color="#98125e"/>
<path d="M422.3 436.7l9.1 6.1 4.8-11.9-9.1-5.8z" color="#88175e"/>
<path d="M431.4 442.8l9.1 5.4 4.7-12-9-5.3z" color="#7a1c5e"/>
<path d="M440.5 448.2l9 4.6 4.7-12.1-9-4.5z" color="#6f215e"/>
<path d="M449.5 452.8l8.9 3.7 4.7-12.1-8.9-3.7z" color="#68265e"/>
<path d="M458.4 456.5l8.9 2.7 4.7-12.1-8.9-2.7z" color="#632b5e"/>
<path d="M467.3 459.2l8.8 1.7 4.7-12.2-8.8-1.6z" color="#63305e"/>
<path d="M476.1 460.9l8.7 .7 4.7-12.4-8.7-.5z" color="#66365e"/>
<path d="M484.8 461.6l8.7-.6 4.7-12.3-8.7 .5z" color="#6d3b5e"/>
<path d="M493.5 461.0l8.6-1.6 4.7-12.1-8.6 1.4z" color="#79405e"/>
<path d="M502.1 459.4l8.5-2.5 4.7-11.8-8.5 2.2z" color="#88455e"/>
<path d="M510.6 456.9l8.5-3.1 4.8-11.1-8.6 2.4z" color="#994a5e"/>
<path d="M519.1 453.8l8.4-3.3 4.9-10.2-8.5 2.4z" color="#ab4f5e"/>
<path d="M527.5 450.5l8.5-2.9 5-9.1-8.6 1.8z" color="#bd545e"/>
<path d="M536.0 447.6l8.6-2.1 5-8-8.6 1z" color="#cc595e"/>
<path d="M544.6 445.5l8.6-.9 5.1-6.8-8.7-.3z" color="#d75e5e"/>
<path d="M553.2 444.6l8.8 .6 5.1-5.9-8.8-1.5z" color="#dd635e"/>
<path d="M562.0 445.2l8.8 2 5.2-5-8.9-2.9z" color="#de695e"/>
<path d="M570.8 447.2l8.9 3.3 5.2-4.3-8.9-4z" color="#da6e5e"/>
<path d="M579.7 450.5l9 4.4 5.2-3.8-9-4.9z" color="#d2735e"/>
<path d="M588.7 454.9l9 5 5.3-3.4-9.1-5.4z" color="#c7785e"/>
<path d="M597.7 459.9l9 5.3 5.3-3.3-9-5.4z" color="#bb7d5e"/>
<path d="M606.7 465.2l9.1 5.2 5.3-3.3-9.1-5.2z" color="#af825e"/>
<path d="M615.8 470.4l9 4.6 5.3-3.3-9-4.6z" color="#a4875e"/>
<path d="M624.8 475.0l8.9 3.9 5.3-3.3-8.9-3.9z" color="#9c8c5e"/>
<path d="M633.7 478.9l8.9 3.1 5.3-3.4-8.9-3z" color="#96915e"/>
<path d="M642.6 482.0l8.9 2.2 5.3-3.4-8.9-2.2z" color="#94965e"/>
<path d="M651.5 484.2l8.7 1.5 5.3-3.4-8.7-1.5z" color="#959c5e"/>
<path d="M660.2 485.7l8.8 .9 5.3-3.2-8.8-1.1z" color="#98a15e"/>
<path d="M669.0 486.6l8.7 .6 5.4-3.1-8.8-.7z" color="#9ca65e"/>
<path d="M677.7 487.2l8.8 .6 5.3-2.9-8.7-.8z" color="#a1ab5e"/>
<path d="M686.5 487.8l8.7 .7 5.3-2.7-8.7-.9z" color="#a6b05e"/>
<path d="M695.2 488.5l8.8 1 5.3-2.6-8.8-1.1z" color="#aab55e"/>
<path d="M704.0 489.5l8.7 1.3 5.4-2.4-8.8-1.5z" color="#adba5e"/>
<path d="M712.7 490.8l8.8 1.7 5.4-2.3-8.8-1.8z" color="#afbf5e"/>
<path d="M721.5 492.5l8.9 2.1 5.3-2.3-8.8-2.1z" color="#afc45e"/>
<path d="M730.4 494.6l8.8 2.3 5.4-2.3-8.9-2.3z" color="#aec95e"/>
<path d="M739.2 496.9l8.9 2.5 5.3-2.5-8.8-2.3z" color="#adcf5e"/>
<path d="M748.1 499.4l8.8 2.4 5.4-2.6-8.9-2.3z" color="#acd45e"/>
<path d="M756.9 501.8l8.9 2.4 5.3-2.9-8.8-2.1z" color="#abd95e"/>
<path d="M765.8 504.2l8.8 2.3 5.3-3.3-8.8-1.9z" color="#aade5e"/>
<path d="M774.6 506.5l8.8 2.1 5.3-3.7-8.8-1.7z" color="#abe35e"/>
<path d="M783.4 508.6l8.9 1.9 5.2-4.1-8.8-1.5z" color="#abe85e"/>
<path d="M792.3 510.5l8.8 1.8 5.2-4.6-8.8-1.3z" color="#aded5e"/>
<path d="M801.1 512.3l8.8 1.8 5.2-5-8.8-1.4z" color="#aff25e"/>
<path d="M809.9 514.1l8.8 1.8 5.2-5.4-8.8-1.4z" color="#b0f75e"/>
<path d="M818.7 515.9l8.8 2 5.2-5.8-8.8-1.6z" color="#b1fc5e"/>
<path d="M390.9 403.4l9 4.5 5-8-9-3.4z" color="#cf0363"/>
<path d="M399.9 407.9l9 5.4 4.9-9.1-8.9-4.3z" color="#c60863"/>
<path d="M408.9 413.3l9.1 5.9 4.8-10.1-9-4.9z" color="#ba0d63"/>
<path d="M418.0 419.2l9.1 5.9 4.8-10.9-9.1-5.1z" color="#ad1263"/>
<path d="M427.1 425.1l9.1 5.8 4.7-11.5-9-5.2z" color="#a01763"/>
<path d="M436.2 430.9l9 5.3 4.7-12-9-4.8z" color="#941c63"/>
<path d="M445.2 436.2l9 4.5 4.7-12.2-9-4.3z" color="#8a2163"/>
<path d="M454.2 440.7l8.9 3.7 4.7-12.5-8.9-3.4z" color="#822663"/>
<path d="M463.1 444.4l8.9 2.7 4.7-12.6-8.9-2.6z" color="#7e2b63"/>
<path d="M472.0 447.1l8.8 1.6 4.7-12.6-8.8-1.6z" color="#7e3063"/>
<path d="M480.8 448.7l8.7 .5 4.7-12.5-8.7-.6z" color="#813663"/>
<path d="M489.5 449.2l8.7-.5 4.7-12.3-8.7 .3z" color="#893b63"/>
<path d="M498.2 448.7l8.6-1.4 4.7-11.9-8.6 1z" color="#934063"/>
<path d="M506.8 447.3l8.5-2.2 4.8-11.1-8.6 1.4z" color="#a14563"/>
<path d="M515.3 445.1l8.6-2.4 4.8-10.3-8.6 1.6z" color="#b04a63"/>
<path d="M523.9 442.7l8.5-2.4 4.9-9.2-8.6 1.3z" color="#be4f63"/>
<path d="M532.4 440.3l8.6-1.8 4.9-8.2-8.6 .8z" color="#cc5463"/>
<path d="M541.0 438.5l8.6-1 5-6.9-8.7-.3z" color="#d75963"/>
<path d="M549.6 437.5l8.7 .3 5.1-5.9-8.8-1.3z" color="#de5e63"/>
<path d="M558.3 437.8l8.8 1.5 5.2-4.8-8.9-2.6z" color="#e06363"/>
<path d="M567.1 439.3l8.9 2.9 5.2-4-8.9-3.7z" color="#dd6963"/>
<path d="M576.0 442.2l8.9 4 5.3-3.4-9-4.6z" color="#d76e63"/>
<path d="M584.9 446.2l9 4.9 5.4-3-9.1-5.3z" color="#cc7363"/>
<path d="M593.9 451.1l9.1 5.4 5.3-2.7-9-5.7z" color="#c07863"/>
<path d="M603.0 456.5l9 5.4 5.4-2.6-9.1-5.5z" color="#b37d63"/>
<path d="M612.0 461.9l9.1 5.2 5.3-2.6-9-5.2z" color="#a78263"/>
<path d="M621.1 467.1l9 4.6 5.3-2.7-9-4.5z" color="#9c8763"/>
<path d="M630.1 471.7l8.9 3.9 5.4-2.8-9-3.8z" color="#948c63"/>
<path d="M639.0 475.6l8.9 3 5.3-2.9-8.8-2.9z" color="#8f9163"/>
<path d="M647.9 478.6l8.9 2.2 5.3-2.9-8.9-2.2z" color="#8d9663"/>
<path d="M656.8 480.8l8.7 1.5 5.4-2.9-8.8-1.5z" color="#8d9c63"/>
<path d="M665.5 482.3l8.8 1.1 5.3-2.8-8.7-1.2z" color="#90a163"/>
<path d="M674.3 483.4l8.8 .7 5.3-2.6-8.8-.9z" color="#94a663"/>
<path d="M683.1 484.1l8.7 .8 5.4-2.5-8.8-.9z" color="#98ab63"/>
<path d="M691.8 484.9l8.7 .9 5.4-2.3-8.7-1.1z" color="#9cb063"/>
<path d="M700.5 485.8l8.8 1.1 5.4-2-8.8-1.4z" color="#a0b563"/>
<path d="M709.3 486.9l8.8 1.5 5.4-1.9-8.8-1.6z" color="#a2ba63"/>
<path d="M718.1 488.4l8.8 1.8 5.4-1.7-8.8-2z" color="#a3bf63"/>
<path d="M726.9 490.2l8.8 2.1 5.5-1.7-8.9-2.1z" color="#a3c463"/>
<path d="M735.7 492.3l8.9 2.3 5.4-1.7-8.8-2.3z" color="#a3c963"/>
<path d="M744.6 494.6l8.8 2.3 5.4-1.8-8.8-2.2z" color="#a2cf63"/>
<path d="M753.4 496.9l8.9 2.3 5.4-2-8.9-2.1z" color="#a1d463"/>
<path d="M762.3 499.2l8.8 2.1 5.4-2.3-8.8-1.8z" color="#a1d963"/>
<path d="M771.1 501.3l8.8 1.9 5.4-2.6-8.8-1.6z" color="#a1de63"/>
<path d="M779.9 503.2l8.8 1.7 5.4-3-8.8-1.3z" color="#a3e363"/>
<path d="M788.7 504.9l8.8 1.5 5.3-3.4-8.7-1.1z" color="#a5e863"/>
<path d="M797.5 506.4l8.8 1.3 5.3-3.8-8.8-.9z" color="#a9ed63"/>
<path d="M806.3 507.7l8.8 1.4 5.2-4.3-8.7-.9z" color="#acf263"/>
<path d="M815.1 509.1l8.8 1.4 5.2-4.8-8.8-.9z" color="#aff763"/>
<path d="M823.9 510.5l8.8 1.6 5.1-5.2-8.7-1.2z" color="#b2fc63"/>
<path d="M395.9 396.5l9 3.4 5-6.7-8.8-2.4z" color="#d50369"/>
<path d="M404.9 399.9l8.9 4.3 5-7.8-8.9-3.2z" color="#d00869"/>
<path d="M413.8 404.2l9 4.9 5-8.8-9-3.9z" color="#c90d69"/>
<path d="M422.8 409.1l9.1 5.1 4.9-9.6-9-4.3z" color="#bf1269"/>
<path d="M431.9 414.2l9 5.2 4.9-10.4-9-4.4z" color="#b51769"/>
<path d="M440.9 419.4l9 4.8 4.8-11-8.9-4.2z" color="#ab1c69"/>
<path d="M449.9 424.2l9 4.3 4.8-11.4-9-3.9z" color="#a22169"/>
<path d="M458.9 428.5l8.9 3.4 4.8-11.6-8.9-3.2z" color="#9c2669"/>
<path d="M467.8 431.9l8.9 2.6 4.7-11.8-8.8-2.4z" color="#992b69"/>
<path d="M476.7 434.5l8.8 1.6 4.7-11.8-8.8-1.6z" color="#993069"/>
<path d="M485.5 436.1l8.7 .6 4.8-11.6-8.8-.8z" color="#9c3669"/>
<path d="M494.2 436.7l8.7-.3 4.8-11.2-8.7-.1z" color="#a23b69"/>
<path d="M502.9 436.4l8.6-1 4.8-10.7-8.6 .5z" color="#ac4069"/>
<path d="M511.5 435.4l8.6-1.4 4.9-10-8.7 .7z" color="#b74569"/>
<path d="M520.1 434.0l8.6-1.6 4.9-9.1-8.6 .7z" color="#c24a69"/>
<path d="M528.7 432.4l8.6-1.3 5-8.1-8.7 .3z" color="#ce4f69"/>
<path d="M537.3 431.1l8.6-.8 5.1-6.9-8.7-.4z" color="#d75469"/>
<path d="M545.9 430.3l8.7 .3 5.2-5.9-8.8-1.3z" color="#de5969"/>
<path d="M554.6 430.6l8.8 1.3 5.2-4.8-8.8-2.4z" color="#e05e69"/>
<path d="M563.4 431.9l8.9 2.6 5.3-3.9-9-3.5z" color="#df6369"/>
<path d="M572.3 434.5l8.9 3.7 5.3-3.2-8.9-4.4z" color="#d96969"/>
<path d="M581.2 438.2l9 4.6 5.4-2.6-9.1-5.2z" color="#d06e69"/>
<path d="M590.2 442.8l9.1 5.3 5.3-2.2-9-5.7z" color="#c47369"/>
<path d="M599.3 448.1l9 5.7 5.4-2.1-9.1-5.8z" color="#b67869"/>
<path d="M608.3 453.8l9.1 5.5 5.4-2.1-9.1-5.5z" color="#a97d69"/>
<path d="M617.4 459.3l9 5.2 5.4-2.2-9-5.1z" color="#9c8269"/>
<path d="M626.4 464.5l9 4.5 5.4-2.3-9-4.4z" color="#928769"/>
<path d="M635.4 469.0l9 3.8 5.3-2.5-8.9-3.6z" color="#8a8c69"/>
<path d="M644.4 472.8l8.8 2.9 5.4-2.6-8.9-2.8z" color="#859169"/>
<path d="M653.2 475.7l8.9 2.2 5.3-2.7-8.8-2.1z" color="#849669"/>
<path d="M662.1 477.9l8.8 1.5 5.3-2.6-8.8-1.6z" color="#849c69"/>
<path d="M670.9 479.4l8.7 1.2 5.4-2.7-8.8-1.1z" color="#87a169"/>
<path d="M679.6 480.6l8.8 .9 5.4-2.6-8.8-1z" color="#8aa669"/>
<path d="M688.4 481.5l8.8 .9 5.3-2.4-8.7-1.1z" color="#8eab69"/>
<path d="M697.2 482.4l8.7 1.1 5.4-2.2-8.8-1.3z" color="#92b069"/>
<path d="M705.9 483.5l8.8 1.4 5.4-2.1-8.8-1.5z" color="#95b569"/>
<path d="M714.7 484.9l8.8 1.6 5.4-1.9-8.8-1.8z" color="#96ba69"/>
<path d="M723.5 486.5l8.8 2 5.4-1.8-8.8-2.1z" color="#97bf69"/>
<path d="M732.3 488.5l8.9 2.1 5.4-1.6-8.9-2.3z" color="#97c469"/>
<path d="M741.2 490.6l8.8 2.3 5.4-1.6-8.8-2.3z" color="#96c969"/>
<path d="M750.0 492.9l8.8 2.2 5.5-1.6-8.9-2.2z" color="#95cf69"/>
<path d="M758.8 495.1l8.9 2.1 5.4-1.7-8.8-2z" color="#94d469"/>
<path d="M767.7 497.2l8.8 1.8 5.4-1.8-8.8-1.7z" color="#95d969"/>
<path d="M776.5 499.0l8.8 1.6 5.4-2.1-8.8-1.3z" color="#96de69"/>
<path d="M785.3 500.6l8.8 1.3 5.3-2.4-8.7-1z" color="#99e369"/>
<path d="M794.1 501.9l8.7 1.1 5.4-2.8-8.8-.7z" color="#9de869"/>
<path d="M802.8 503.0l8.8 .9 5.3-3.2-8.7-.5z" color="#a2ed69"/>
<path d="M811.6 503.9l8.7 .9 5.3-3.7-8.7-.4z" color="#a7f269"/>
<path d="M820.3 504.8l8.8 .9 5.2-4.1-8.7-.5z" color="#acf769"/>
<path d="M829.1 505.7l8.7 1.2 5.3-4.6-8.8-.7z" color="#b0fc69"/>
<path d="M401.1 390.8l8.8 2.4 5.2-5.2-8.8-1.6z" color="#d7036e"/>
<path d="M409.9 393.2l8.9 3.2 5.2-6.1-8.9-2.3z" color="#d5086e"/>
<path d="M418.8 396.4l9 3.9 5-7.1-8.8-2.9z" color="#d10d6e"/>
<path d="M427.8 400.3l9 4.3 5-7.9-9-3.5z" color="#cb126e"/>
<path d="M436.8 404.6l9 4.4 4.9-8.7-8.9-3.6z" color="#c4176e"/>
<path d="M445.8 409.0l8.9 4.2 4.9-9.3-8.9-3.6z" color="#bd1c6e"/>
<path d="M454.7 413.2l9 3.9 4.8-9.8-8.9-3.4z" color="#b6216e"/>
<path d="M463.7 417.1l8.9 3.2 4.8-10.2-8.9-2.8z" color="#b1266e"/>
<path d="M472.6 420.3l8.8 2.4 4.9-10.3-8.9-2.3z" color="#af2b6e"/>
<path d="M481.4 422.7l8.8 1.6 4.9-10.3-8.8-1.6z" color="#af306e"/>
<path d="M490.2 424.3l8.8 .8 4.8-10.1-8.7-1z" color="#b2366e"/>
<path d="M499.0 425.1l8.7 .1 4.8-9.8-8.7-.4z" color="#b73b6e"/>
<path d="M507.7 425.2l8.6-.5 4.9-9.2-8.7-.1z" color="#bf406e"/>
<path d="M516.3 424.7l8.7-.7 4.9-8.4-8.7-.1z" color="#c7456e"/>
<path d="M525.0 424.0l8.6-.7 5-7.5-8.7-.2z" color="#d04a6e"/>
<path d="M533.6 423.3l8.7-.3 5.1-6.5-8.8-.7z" color="#d84f6e"/>
<path d="M542.3 423.0l8.7 .4 5.2-5.5-8.8-1.4z" color="#dd546e"/>
<path d="M551.0 423.4l8.8 1.3 5.2-4.5-8.8-2.3z" color="#e0596e"/>
<path d="M559.8 424.7l8.8 2.4 5.3-3.6-8.9-3.3z" color="#df5e6e"/>
<path d="M568.6 427.1l9 3.5 5.3-2.9-9-4.2z" color="#da636e"/>
<path d="M577.6 430.6l8.9 4.4 5.4-2.2-9-5.1z" color="#d1696e"/>
<path d="M586.5 435.0l9.1 5.2 5.4-1.8-9.1-5.6z" color="#c66e6e"/>
<path d="M595.6 440.2l9 5.7 5.5-1.7-9.1-5.8z" color="#b8736e"/>
<path d="M604.6 445.9l9.1 5.8 5.4-1.6-9-5.9z" color="#aa786e"/>
<path d="M613.7 451.7l9.1 5.5 5.4-1.7-9.1-5.4z" color="#9c7d6e"/>
<path d="M622.8 457.2l9 5.1 5.4-1.9-9-4.9z" color="#90826e"/>
<path d="M631.8 462.3l9 4.4 5.4-2.1-9-4.2z" color="#86876e"/>
<path d="M640.8 466.7l8.9 3.6 5.4-2.3-8.9-3.4z" color="#7f8c6e"/>
<path d="M649.7 470.3l8.9 2.8 5.4-2.6-8.9-2.5z" color="#7b916e"/>
<path d="M658.6 473.1l8.8 2.1 5.4-2.8-8.8-1.9z" color="#7a966e"/>
<path d="M667.4 475.2l8.8 1.6 5.4-3-8.8-1.4z" color="#7b9c6e"/>
<path d="M676.2 476.8l8.8 1.1 5.3-2.9-8.7-1.2z" color="#7ea16e"/>
<path d="M685.0 477.9l8.8 1 5.3-2.9-8.8-1z" color="#82a66e"/>
<path d="M693.8 478.9l8.7 1.1 5.4-2.9-8.8-1.1z" color="#85ab6e"/>
<path d="M702.5 480.0l8.8 1.3 5.3-2.8-8.7-1.4z" color="#88b06e"/>
<path d="M711.3 481.3l8.8 1.5 5.3-2.6-8.8-1.7z" color="#8ab56e"/>
<path d="M720.1 482.8l8.8 1.8 5.4-2.4-8.9-2z" color="#8bba6e"/>
<path d="M728.9 484.6l8.8 2.1 5.4-2.2-8.8-2.3z" color="#8bbf6e"/>
<path d="M737.7 486.7l8.9 2.3 5.4-2.1-8.9-2.4z" color="#8ac46e"/>
<path d="M746.6 489.0l8.8 2.3 5.4-2-8.8-2.4z" color="#89c96e"/>
<path d="M755.4 491.3l8.9 2.2 5.4-1.9-8.9-2.3z" color="#88cf6e"/>
<path d="M764.3 493.5l8.8 2 5.4-1.8-8.8-2.1z" color="#88d46e"/>
<path d="M773.1 495.5l8.8 1.7 5.4-1.9-8.8-1.6z" color="#88d96e"/>
<path d="M781.9 497.2l8.8 1.3 5.4-2-8.8-1.2z" color="#8ade6e"/>
<path d="M790.7 498.5l8.7 1 5.4-2.2-8.7-.8z" color="#8ee36e"/>
<path d="M799.4 499.5l8.8 .7 5.3-2.4-8.7-.5z" color="#93e86e"/>
<path d="M808.2 500.2l8.7 .5 5.3-2.8-8.7-.1z" color="#99ed6e"/>
<path d="M816.9 500.7l8.7 .4 5.3-3.1-8.7-.1z" color="#9ff26e"/>
<path d="M825.6 501.1l8.7 .5 5.3-3.6-8.7 0z" color="#a6f76e"/>
<path d="M834.3 501.6l8.8 .7 5.2-4-8.7-.3z" color="#acfc6e"/>
<path d="M406.3 386.4l8.8 1.6 5.3-3.9-8.8-1z" color="#d30373"/>
<path d="M415.1 388.0l8.9 2.3 5.2-4.6-8.8-1.6z" color="#d50873"/>
<path d="M424.0 390.3l8.8 2.9 5.2-5.2-8.8-2.3z" color="#d40d73"/>
<path d="M432.8 393.2l9 3.5 5.1-6-8.9-2.7z" color="#d11273"/>
<path d="M441.8 396.7l8.9 3.6 5.1-6.7-8.9-2.9z" color="#cc1773"/>
<path d="M450.7 400.3l8.9 3.6 5.1-7.3-8.9-3z" color="#c71c73"/>
<path d="M459.6 403.9l8.9 3.4 5.1-7.8-8.9-2.9z" color="#c32173"/>
<path d="M468.5 407.3l8.9 2.8 5-8.1-8.8-2.5z" color="#c02673"/>
<path d="M477.4 410.1l8.9 2.3 4.9-8.3-8.8-2.1z" color="#be2b73"/>
<path d="M486.3 412.4l8.8 1.6 4.9-8.3-8.8-1.6z" color="#bf3073"/>
<path d="M495.1 414.0l8.7 1 5-8.2-8.8-1.1z" color="#c13673"/>
<path d="M503.8 415.0l8.7 .4 5-7.8-8.7-.8z" color="#c63b73"/>
<path d="M512.5 415.4l8.7 .1 5.1-7.3-8.8-.6z" color="#cc4073"/>
<path d="M521.2 415.5l8.7 .1 5.1-6.7-8.7-.7z" color="#d24573"/>
<path d="M529.9 415.6l8.7 .2 5.2-5.9-8.8-1z" color="#d84a73"/>
<path d="M538.6 415.8l8.8 .7 5.2-5.1-8.8-1.5z" color="#dc4f73"/>
<path d="M547.4 416.5l8.8 1.4 5.2-4.2-8.8-2.3z" color="#de5473"/>
<path d="M556.2 417.9l8.8 2.3 5.3-3.4-8.9-3.1z" color="#dd5973"/>
<path d="M565.0 420.2l8.9 3.3 5.4-2.7-9-4z" color="#d95e73"/>
<path d="M573.9 423.5l9 4.2 5.4-2-9-4.9z" color="#d16373"/>
<path d="M582.9 427.7l9 5.1 5.4-1.7-9-5.4z" color="#c66973"/>
<path d="M591.9 432.8l9.1 5.6 5.4-1.4-9.1-5.9z" color="#b96e73"/>
<path d="M601.0 438.4l9.1 5.8 5.4-1.3-9.1-5.9z" color="#ab7373"/>
<path d="M610.1 444.2l9 5.9 5.5-1.5-9.1-5.7z" color="#9d7873"/>
<path d="M619.1 450.1l9.1 5.4 5.4-1.6-9-5.3z" color="#8f7d73"/>
<path d="M628.2 455.5l9 4.9 5.4-1.9-9-4.6z" color="#848273"/>
<path d="M637.2 460.4l9 4.2 5.3-2.3-8.9-3.8z" color="#7b8773"/>
<path d="M646.2 464.6l8.9 3.4 5.3-2.7-8.9-3z" color="#758c73"/>
<path d="M655.1 468.0l8.9 2.5 5.3-3-8.9-2.2z" color="#729173"/>
<path d="M664.0 470.5l8.8 1.9 5.3-3.3-8.8-1.6z" color="#729673"/>
<path d="M672.8 472.4l8.8 1.4 5.2-3.6-8.7-1.1z" color="#749c73"/>
<path d="M681.6 473.8l8.7 1.2 5.3-3.8-8.8-1z" color="#77a173"/>
<path d="M690.3 475.0l8.8 1 5.3-3.8-8.8-1z" color="#7ba673"/>
<path d="M699.1 476.0l8.8 1.1 5.2-3.7-8.7-1.2z" color="#7fab73"/>
<path d="M707.9 477.1l8.7 1.4 5.3-3.7-8.8-1.4z" color="#81b073"/>
<path d="M716.6 478.5l8.8 1.7 5.3-3.5-8.8-1.9z" color="#83b573"/>
<path d="M725.4 480.2l8.9 2 5.3-3.4-8.9-2.1z" color="#83ba73"/>
<path d="M734.3 482.2l8.8 2.3 5.3-3.2-8.8-2.5z" color="#82bf73"/>
<path d="M743.1 484.5l8.9 2.4 5.3-2.9-8.9-2.7z" color="#81c473"/>
<path d="M752.0 486.9l8.8 2.4 5.4-2.7-8.9-2.6z" color="#7fc973"/>
<path d="M760.8 489.3l8.9 2.3 5.3-2.5-8.8-2.5z" color="#7dcf73"/>
<path d="M769.7 491.6l8.8 2.1 5.3-2.4-8.8-2.2z" color="#7cd473"/>
<path d="M778.5 493.7l8.8 1.6 5.4-2.2-8.9-1.8z" color="#7dd973"/>
<path d="M787.3 495.3l8.8 1.2 5.3-2.1-8.7-1.3z" color="#7fde73"/>
<path d="M796.1 496.5l8.7 .8 5.4-2.2-8.8-.7z" color="#83e373"/>
<path d="M804.8 497.3l8.7 .5 5.4-2.3-8.7-.4z" color="#88e873"/>
<path d="M813.5 497.8l8.7 .1 5.4-2.5-8.7 .1z" color="#8fed73"/>
<path d="M822.2 497.9l8.7 .1 5.4-2.8-8.7 .2z" color="#97f273"/>
<path d="M830.9 498.0l8.7 0 5.3-3.1-8.6 .3z" color="#9ff773"/>
<path d="M839.6 498.0l8.7 .3 5.3-3.6-8.7 .2z" color="#a7fc73"/>
<path d="M411.6 383.1l8.8 1 5.3-2.7-8.7-.7z" color="#cb0378"/>
<path d="M420.4 384.1l8.8 1.6 5.3-3.1-8.8-1.2z" color="#cf0878"/>
<path d="M429.2 385.7l8.8 2.3 5.3-3.7-8.8-1.7z" color="#d00d78"/>
<path d="M438.0 388.0l8.9 2.7 5.2-4.2-8.8-2.2z" color="#cf1278"/>
<path d="M446.9 390.7l8.9 2.9 5.2-4.7-8.9-2.4z" color="#cd1778"/>
<path d="M455.8 393.6l8.9 3 5.1-5.2-8.8-2.5z" color="#cb1c78"/>
<path d="M464.7 396.6l8.9 2.9 5.1-5.7-8.9-2.4z" color="#c82178"/>
<path d="M473.6 399.5l8.8 2.5 5.1-6-8.8-2.2z" color="#c62678"/>
<path d="M482.4 402.0l8.8 2.1 5.1-6.2-8.8-1.9z" color="#c62b78"/>
<path d="M491.2 404.1l8.8 1.6 5.1-6.3-8.8-1.5z" color="#c73078"/>
<path d="M500.0 405.7l8.8 1.1 5.1-6.2-8.8-1.2z" color="#c93678"/>
<path d="M508.8 406.8l8.7 .8 5.2-5.9-8.8-1.1z" color="#cd3b78"/>
<path d="M517.5 407.6l8.8 .6 5.1-5.5-8.7-1z" color="#d14078"/>
<path d="M526.3 408.2l8.7 .7 5.2-5-8.8-1.2z" color="#d64578"/>
<path d="M535.0 408.9l8.8 1 5.2-4.4-8.8-1.6z" color="#d94a78"/>
<path d="M543.8 409.9l8.8 1.5 5.2-3.7-8.8-2.2z" color="#db4f78"/>
<path d="M552.6 411.4l8.8 2.3 5.3-3.1-8.9-2.9z" color="#da5478"/>
<path d="M561.4 413.7l8.9 3.1 5.4-2.4-9-3.8z" color="#d65978"/>
<path d="M570.3 416.8l9 4 5.4-1.8-9-4.6z" color="#cf5e78"/>
<path d="M579.3 420.8l9 4.9 5.4-1.5-9-5.2z" color="#c56378"/>
<path d="M588.3 425.7l9 5.4 5.5-1.2-9.1-5.7z" color="#b96978"/>
<path d="M597.3 431.1l9.1 5.9 5.5-1.2-9.1-5.9z" color="#ab6e78"/>
<path d="M606.4 437.0l9.1 5.9 5.4-1.2-9-5.9z" color="#9c7378"/>
<path d="M615.5 442.9l9.1 5.7 5.4-1.4-9.1-5.5z" color="#8e7878"/>
<path d="M624.6 448.6l9 5.3 5.4-1.8-9-4.9z" color="#827d78"/>
<path d="M633.6 453.9l9 4.6 5.4-2.3-9-4.1z" color="#788278"/>
<path d="M642.6 458.5l8.9 3.8 5.4-2.8-8.9-3.3z" color="#708778"/>
<path d="M651.5 462.3l8.9 3 5.3-3.4-8.8-2.4z" color="#6c8c78"/>
<path d="M660.4 465.3l8.9 2.2 5.2-3.9-8.8-1.7z" color="#6b9178"/>
<path d="M669.3 467.5l8.8 1.6 5.2-4.3-8.8-1.2z" color="#6c9678"/>
<path d="M678.1 469.1l8.7 1.1 5.3-4.6-8.8-.8z" color="#709c78"/>
<path d="M686.8 470.2l8.8 1 5.2-4.9-8.7-.7z" color="#74a178"/>
<path d="M695.6 471.2l8.8 1 5.1-5.1-8.7-.8z" color="#78a678"/>
<path d="M704.4 472.2l8.7 1.2 5.2-5.2-8.8-1.1z" color="#7cab78"/>
<path d="M713.1 473.4l8.8 1.4 5.2-5.1-8.8-1.5z" color="#7fb078"/>
<path d="M721.9 474.8l8.8 1.9 5.2-5.1-8.8-1.9z" color="#80b578"/>
<path d="M730.7 476.7l8.9 2.1 5.2-4.8-8.9-2.4z" color="#80ba78"/>
<path d="M739.6 478.8l8.8 2.5 5.2-4.6-8.8-2.7z" color="#7ebf78"/>
<path d="M748.4 481.3l8.9 2.7 5.2-4.4-8.9-2.9z" color="#7cc478"/>
<path d="M757.3 484.0l8.9 2.6 5.2-4.1-8.9-2.9z" color="#79c978"/>
<path d="M766.2 486.6l8.8 2.5 5.3-3.7-8.9-2.9z" color="#76cf78"/>
<path d="M775.0 489.1l8.8 2.2 5.3-3.4-8.8-2.5z" color="#75d478"/>
<path d="M783.8 491.3l8.9 1.8 5.3-3.1-8.9-2.1z" color="#74d978"/>
<path d="M792.7 493.1l8.7 1.3 5.4-2.9-8.8-1.5z" color="#75de78"/>
<path d="M801.4 494.4l8.8 .7 5.3-2.6-8.7-1z" color="#79e378"/>
<path d="M810.2 495.1l8.7 .4 5.3-2.5-8.7-.5z" color="#7ee878"/>
<path d="M818.9 495.5l8.7-.1 5.3-2.5-8.7 .1z" color="#85ed78"/>
<path d="M827.6 495.4l8.7-.2 5.3-2.6-8.7 .3z" color="#8df278"/>
<path d="M836.3 495.2l8.6-.3 5.4-2.8-8.7 .5z" color="#96f778"/>
<path d="M844.9 494.9l8.7-.2 5.3-3.1-8.6 .5z" color="#9ffc78"/>
<path d="M417.0 380.7l8.7 .7 5.4-1.9-8.7-.6z" color="#c0037d"/>
<path d="M425.7 381.4l8.8 1.2 5.4-2.1-8.8-1z" color="#c5087d"/>
<path d="M434.5 382.6l8.8 1.7 5.4-2.3-8.8-1.5z" color="#c70d7d"/>
<path d="M443.3 384.3l8.8 2.2 5.4-2.8-8.8-1.7z" color="#c8127d"/>
<path d="M452.1 386.5l8.9 2.4 5.3-3.1-8.8-2.1z" color="#c8177d"/>
<path d="M461.0 388.9l8.8 2.5 5.3-3.5-8.8-2.1z" color="#c71c7d"/>
<path d="M469.8 391.4l8.9 2.4 5.3-3.8-8.9-2.1z" color="#c6217d"/>
<path d="M478.7 393.8l8.8 2.2 5.3-4.1-8.8-1.9z" color="#c6267d"/>
<path d="M487.5 396.0l8.8 1.9 5.3-4.4-8.8-1.6z" color="#c62b7d"/>
<path d="M496.3 397.9l8.8 1.5 5.3-4.4-8.8-1.5z" color="#c8307d"/>
<path d="M505.1 399.4l8.8 1.2 5.2-4.4-8.7-1.2z" color="#ca367d"/>
<path d="M513.9 400.6l8.8 1.1 5.2-4.3-8.8-1.2z" color="#cd3b7d"/>
<path d="M522.7 401.7l8.7 1 5.3-4-8.8-1.3z" color="#d1407d"/>
<path d="M531.4 402.7l8.8 1.2 5.3-3.6-8.8-1.6z" color="#d3457d"/>
<path d="M540.2 403.9l8.8 1.6 5.3-3.2-8.8-2z" color="#d54a7d"/>
<path d="M549.0 405.5l8.8 2.2 5.4-2.7-8.9-2.7z" color="#d54f7d"/>
<path d="M557.8 407.7l8.9 2.9 5.4-2.1-8.9-3.5z" color="#d2547d"/>
<path d="M566.7 410.6l9 3.8 5.4-1.7-9-4.2z" color="#cc597d"/>
<path d="M575.7 414.4l9 4.6 5.4-1.4-9-4.9z" color="#c35e7d"/>
<path d="M584.7 419.0l9 5.2 5.4-1.2-9-5.4z" color="#b8637d"/>
<path d="M593.7 424.2l9.1 5.7 5.4-1.1-9.1-5.8z" color="#aa697d"/>
<path d="M602.8 429.9l9.1 5.9 5.4-1.2-9.1-5.8z" color="#9c6e7d"/>
<path d="M611.9 435.8l9 5.9 5.5-1.5-9.1-5.6z" color="#8e737d"/>
<path d="M620.9 441.7l9.1 5.5 5.4-1.9-9-5.1z" color="#81787d"/>
<path d="M630.0 447.2l9 4.9 5.4-2.4-9-4.4z" color="#767d7d"/>
<path d="M639.0 452.1l9 4.1 5.3-3-8.9-3.5z" color="#6d827d"/>
<path d="M648.0 456.2l8.9 3.3 5.3-3.7-8.9-2.6z" color="#68877d"/>
<path d="M656.9 459.5l8.8 2.4 5.3-4.3-8.8-1.8z" color="#668c7d"/>
<path d="M665.7 461.9l8.8 1.7 5.2-5-8.7-1z" color="#67917d"/>
<path d="M674.5 463.6l8.8 1.2 5.2-5.6-8.8-.6z" color="#6b967d"/>
<path d="M683.3 464.8l8.8 .8 5.1-6.1-8.7-.3z" color="#709c7d"/>
<path d="M692.1 465.6l8.7 .7 5.1-6.4-8.7-.4z" color="#75a17d"/>
<path d="M700.8 466.3l8.7 .8 5.1-6.7-8.7-.5z" color="#7ba67d"/>
<path d="M709.5 467.1l8.8 1.1 5.1-6.8-8.8-1z" color="#7fab7d"/>
<path d="M718.3 468.2l8.8 1.5 5.1-6.9-8.8-1.4z" color="#82b07d"/>
<path d="M727.1 469.7l8.8 1.9 5.1-6.7-8.8-2.1z" color="#83b57d"/>
<path d="M735.9 471.6l8.9 2.4 5-6.6-8.8-2.5z" color="#82ba7d"/>
<path d="M744.8 474.0l8.8 2.7 5.1-6.4-8.9-2.9z" color="#80bf7d"/>
<path d="M753.6 476.7l8.9 2.9 5.1-6.1-8.9-3.2z" color="#7dc47d"/>
<path d="M762.5 479.6l8.9 2.9 5.2-5.6-9-3.4z" color="#79c97d"/>
<path d="M771.4 482.5l8.9 2.9 5.2-5.3-8.9-3.2z" color="#75cf7d"/>
<path d="M780.3 485.4l8.8 2.5 5.2-4.8-8.8-3z" color="#71d47d"/>
<path d="M789.1 487.9l8.9 2.1 5.2-4.3-8.9-2.6z" color="#6fd97d"/>
<path d="M798.0 490.0l8.8 1.5 5.2-3.8-8.8-2z" color="#6fde7d"/>
<path d="M806.8 491.5l8.7 1 5.3-3.4-8.8-1.4z" color="#71e37d"/>
<path d="M815.5 492.5l8.7 .5 5.4-3.1-8.8-.8z" color="#76e87d"/>
<path d="M824.2 493.0l8.7-.1 5.4-2.8-8.7-.2z" color="#7ced7d"/>
<path d="M832.9 492.9l8.7-.3 5.3-2.8-8.6 .3z" color="#84f27d"/>
<path d="M841.6 492.6l8.7-.5 5.3-2.8-8.7 .5z" color="#8df77d"/>
<path d="M850.3 492.1l8.6-.5 5.4-3-8.7 .7z" color="#97fc7d"/>
<path d="M422.4 378.9l8.7 .6 5.4-1.5-8.7-.7z" color="#b30382"/>
<path d="M431.1 379.5l8.8 1 5.4-1.4-8.8-1.1z" color="#b80882"/>
<path d="M439.9 380.5l8.8 1.5 5.4-1.6-8.8-1.3z" color="#bb0d82"/>
<path d="M448.7 382.0l8.8 1.7 5.4-1.6-8.8-1.7z" color="#bd1282"/>
<path d="M457.5 383.7l8.8 2.1 5.4-1.9-8.8-1.8z" color="#bd1782"/>
<path d="M466.3 385.8l8.8 2.1 5.4-2.2-8.8-1.8z" color="#be1c82"/>
<path d="M475.1 387.9l8.9 2.1 5.3-2.5-8.8-1.8z" color="#be2182"/>
<path d="M484.0 390.0l8.8 1.9 5.3-2.7-8.8-1.7z" color="#bf2682"/>
<path d="M492.8 391.9l8.8 1.6 5.3-2.8-8.8-1.5z" color="#c02b82"/>
<path d="M501.6 393.5l8.8 1.5 5.3-3-8.8-1.3z" color="#c23082"/>
<path d="M510.4 395.0l8.7 1.2 5.4-3-8.8-1.2z" color="#c53682"/>
<path d="M519.1 396.2l8.8 1.2 5.3-3-8.7-1.2z" color="#c83b82"/>
<path d="M527.9 397.4l8.8 1.3 5.3-2.8-8.8-1.5z" color="#ca4082"/>
<path d="M536.7 398.7l8.8 1.6 5.3-2.6-8.8-1.8z" color="#cc4582"/>
<path d="M545.5 400.3l8.8 2 5.4-2.3-8.9-2.3z" color="#cd4a82"/>
<path d="M554.3 402.3l8.9 2.7 5.4-2-8.9-3z" color="#cb4f82"/>
<path d="M563.2 405.0l8.9 3.5 5.4-1.7-8.9-3.8z" color="#c65482"/>
<path d="M572.1 408.5l9 4.2 5.4-1.5-9-4.4z" color="#bf5982"/>
<path d="M581.1 412.7l9 4.9 5.4-1.3-9-5.1z" color="#b55e82"/>
<path d="M590.1 417.6l9 5.4 5.5-1.2-9.1-5.5z" color="#a96382"/>
<path d="M599.1 423.0l9.1 5.8 5.5-1.3-9.1-5.7z" color="#9c6982"/>
<path d="M608.2 428.8l9.1 5.8 5.4-1.5-9-5.6z" color="#8e6e82"/>
<path d="M617.3 434.6l9.1 5.6 5.4-2-9.1-5.1z" color="#807382"/>
<path d="M626.4 440.2l9 5.1 5.3-2.5-8.9-4.6z" color="#757882"/>
<path d="M635.4 445.3l9 4.4 5.3-3.3-9-3.6z" color="#6c7d82"/>
<path d="M644.4 449.7l8.9 3.5 5.3-4-8.9-2.8z" color="#668282"/>
<path d="M653.3 453.2l8.9 2.6 5.2-4.8-8.8-1.8z" color="#648782"/>
<path d="M662.2 455.8l8.8 1.8 5.1-5.6-8.7-1z" color="#648c82"/>
<path d="M671.0 457.6l8.7 1 5.1-6.3-8.7-.3z" color="#689182"/>
<path d="M679.7 458.6l8.8 .6 5-7-8.7 .1z" color="#6e9682"/>
<path d="M688.5 459.2l8.7 .3 5-7.5-8.7 .2z" color="#759c82"/>
<path d="M697.2 459.5l8.7 .4 5-8-8.7 .1z" color="#7ca182"/>
<path d="M705.9 459.9l8.7 .5 5-8.3-8.7-.2z" color="#83a682"/>
<path d="M714.6 460.4l8.8 1 4.9-8.5-8.7-.8z" color="#88ab82"/>
<path d="M723.4 461.4l8.8 1.4 4.9-8.5-8.8-1.4z" color="#8cb082"/>
<path d="M732.2 462.8l8.8 2.1 4.9-8.6-8.8-2z" color="#8db582"/>
<path d="M741.0 464.9l8.8 2.5 5-8.5-8.9-2.6z" color="#8cba82"/>
<path d="M749.8 467.4l8.9 2.9 5-8.2-8.9-3.2z" color="#89bf82"/>
<path d="M758.7 470.3l8.9 3.2 5-7.8-8.9-3.6z" color="#84c482"/>
<path d="M767.6 473.5l9 3.4 5-7.5-9-3.7z" color="#7fc982"/>
<path d="M776.6 476.9l8.9 3.2 5-6.9-8.9-3.8z" color="#79cf82"/>
<path d="M785.5 480.1l8.8 3 5.2-6.4-9-3.5z" color="#74d482"/>
<path d="M794.3 483.1l8.9 2.6 5.2-5.8-8.9-3.2z" color="#70d982"/>
<path d="M803.2 485.7l8.8 2 5.2-5.1-8.8-2.7z" color="#6ede82"/>
<path d="M812.0 487.7l8.8 1.4 5.3-4.5-8.9-2z" color="#6ee382"/>
<path d="M820.8 489.1l8.8 .8 5.2-3.9-8.7-1.4z" color="#70e882"/>
<path d="M829.6 489.9l8.7 .2 5.3-3.4-8.8-.7z" color="#75ed82"/>
<path d="M838.3 490.1l8.6-.3 5.4-3-8.7-.1z" color="#7cf282"/>
<path d="M846.9 489.8l8.7-.5 5.3-2.9-8.6 .4z" color="#85f782"/>
<path d="M855.6 489.3l8.7-.7 5.3-2.9-8.7 .7z" color="#8efc82"/>
<path d="M427.8 377.3l8.7 .7 5.5-1.5-8.8-1.1z" color="#a60387"/>
<path d="M436.5 378.0l8.8 1.1 5.4-1.3-8.7-1.3z" color="#aa0887"/>
<path d="M445.3 379.1l8.8 1.3 5.4-1.1-8.8-1.5z" color="#ad0d87"/>
<path d="M454.1 380.4l8.8 1.7 5.4-1.2-8.8-1.6z" color="#af1287"/>
<path d="M462.9 382.1l8.8 1.8 5.4-1.3-8.8-1.7z" color="#b01787"/>
<path d="M471.7 383.9l8.8 1.8 5.4-1.4-8.8-1.7z" color="#b11c87"/>
<path d="M480.5 385.7l8.8 1.8 5.4-1.5-8.8-1.7z" color="#b22187"/>
<path d="M489.3 387.5l8.8 1.7 5.4-1.8-8.8-1.4z" color="#b32687"/>
<path d="M498.1 389.2l8.8 1.5 5.4-2-8.8-1.3z" color="#b52b87"/>
<path d="M506.9 390.7l8.8 1.3 5.4-2.1-8.8-1.2z" color="#b83087"/>
<path d="M515.7 392.0l8.8 1.2 5.3-2.2-8.7-1.1z" color="#bb3687"/>
<path d="M524.5 393.2l8.7 1.2 5.4-2.2-8.8-1.2z" color="#be3b87"/>
<path d="M533.2 394.4l8.8 1.5 5.4-2.2-8.8-1.5z" color="#c14087"/>
<path d="M542.0 395.9l8.8 1.8 5.4-2.1-8.8-1.9z" color="#c24587"/>
<path d="M550.8 397.7l8.9 2.3 5.4-1.9-8.9-2.5z" color="#c24a87"/>
<path d="M559.7 400.0l8.9 3 5.4-1.7-8.9-3.2z" color="#bf4f87"/>
<path d="M568.6 403.0l8.9 3.8 5.4-1.7-8.9-3.8z" color="#ba5487"/>
<path d="M577.5 406.8l9 4.4 5.4-1.5-9-4.6z" color="#b25987"/>
<path d="M586.5 411.2l9 5.1 5.5-1.5-9.1-5.1z" color="#a75e87"/>
<path d="M595.5 416.3l9.1 5.5 5.4-1.6-9-5.4z" color="#9b6387"/>
<path d="M604.6 421.8l9.1 5.7 5.4-1.8-9.1-5.5z" color="#8e6987"/>
<path d="M613.7 427.5l9 5.6 5.4-2.2-9-5.2z" color="#816e87"/>
<path d="M622.7 433.1l9.1 5.1 5.3-2.7-9-4.6z" color="#757387"/>
<path d="M631.8 438.2l8.9 4.6 5.3-3.4-8.9-3.9z" color="#6c7887"/>
<path d="M640.7 442.8l9 3.6 5.2-4.1-8.9-2.9z" color="#657d87"/>
<path d="M649.7 446.4l8.9 2.8 5.1-5.1-8.8-1.8z" color="#628287"/>
<path d="M658.6 449.2l8.8 1.8 5.1-6-8.8-.9z" color="#638787"/>
<path d="M667.4 451.0l8.7 1 5.1-6.9-8.7-.1z" color="#678c87"/>
<path d="M676.1 452.0l8.7 .3 5-7.7-8.6 .5z" color="#6e9187"/>
<path d="M684.8 452.3l8.7-.1 5-8.5-8.7 .9z" color="#779687"/>
<path d="M693.5 452.2l8.7-.2 4.9-9.1-8.6 .8z" color="#809c87"/>
<path d="M702.2 452.0l8.7-.1 4.9-9.6-8.7 .6z" color="#89a187"/>
<path d="M710.9 451.9l8.7 .2 4.9-9.9-8.7 .1z" color="#91a687"/>
<path d="M719.6 452.1l8.7 .8 4.9-10.1-8.7-.6z" color="#98ab87"/>
<path d="M728.3 452.9l8.8 1.4 4.9-10.2-8.8-1.3z" color="#9bb087"/>
<path d="M737.1 454.3l8.8 2 4.9-10.1-8.8-2.1z" color="#9db587"/>
<path d="M745.9 456.3l8.9 2.6 4.9-10-8.9-2.7z" color="#9bba87"/>
<path d="M754.8 458.9l8.9 3.2 4.9-9.8-8.9-3.4z" color="#98bf87"/>
<path d="M763.7 462.1l8.9 3.6 4.9-9.6-8.9-3.8z" color="#92c487"/>
<path d="M772.6 465.7l9 3.7 4.9-9.1-9-4.2z" color="#8cc987"/>
<path d="M781.6 469.4l8.9 3.8 5-8.7-9-4.2z" color="#84cf87"/>
<path d="M790.5 473.2l9 3.5 4.9-8-8.9-4.2z" color="#7dd487"/>
<path d="M799.5 476.7l8.9 3.2 5-7.2-9-4z" color="#77d987"/>
<path d="M808.4 479.9l8.8 2.7 5.1-6.5-8.9-3.4z" color="#72de87"/>
<path d="M817.2 482.6l8.9 2 5.1-5.6-8.9-2.9z" color="#6fe387"/>
<path d="M826.1 484.6l8.7 1.4 5.2-4.9-8.8-2.1z" color="#6fe887"/>
<path d="M834.8 486.0l8.8 .7 5.2-4.2-8.8-1.4z" color="#71ed87"/>
<path d="M843.6 486.7l8.7 .1 5.2-3.7-8.7-.6z" color="#76f287"/>
<path d="M852.3 486.8l8.6-.4 5.3-3.3-8.7 0z" color="#7df787"/>
<path d="M860.9 486.4l8.7-.7 5.3-3-8.7 .4z" color="#86fc87"/>
<path d="M433.2 375.4l8.8 1.1 5.4-1.9-8.8-1.5z" color="#9a038c"/>
<path d="M442.0 376.5l8.7 1.3 5.5-1.6-8.8-1.6z" color="#9d088c"/>
<path d="M450.7 377.8l8.8 1.5 5.5-1.4-8.8-1.7z" color="#9e0d8c"/>
<path d="M459.5 379.3l8.8 1.6 5.5-1.2-8.8-1.8z" color="#a0128c"/>
<path d="M468.3 380.9l8.8 1.7 5.5-1.2-8.8-1.7z" color="#a1178c"/>
<path d="M477.1 382.6l8.8 1.7 5.5-1.2-8.8-1.7z" color="#a21c8c"/>
<path d="M485.9 384.3l8.8 1.7 5.5-1.4-8.8-1.5z" color="#a4218c"/>
<path d="M494.7 386.0l8.8 1.4 5.5-1.5-8.8-1.3z" color="#a6268c"/>
<path d="M503.5 387.4l8.8 1.3 5.4-1.7-8.7-1.1z" color="#a92b8c"/>
<path d="M512.3 388.7l8.8 1.2 5.4-1.9-8.8-1z" color="#ac308c"/>
<path d="M521.1 389.9l8.7 1.1 5.4-2-8.7-1z" color="#af368c"/>
<path d="M529.8 391.0l8.8 1.2 5.4-2-8.8-1.2z" color="#b33b8c"/>
<path d="M538.6 392.2l8.8 1.5 5.4-2.1-8.8-1.4z" color="#b6408c"/>
<path d="M547.4 393.7l8.8 1.9 5.4-2.1-8.8-1.9z" color="#b7458c"/>
<path d="M556.2 395.6l8.9 2.5 5.4-2.1-8.9-2.5z" color="#b64a8c"/>
<path d="M565.1 398.1l8.9 3.2 5.4-2-8.9-3.3z" color="#b34f8c"/>
<path d="M574.0 401.3l8.9 3.8 5.4-1.9-8.9-3.9z" color="#ad548c"/>
<path d="M582.9 405.1l9 4.6 5.4-1.9-9-4.6z" color="#a5598c"/>
<path d="M591.9 409.7l9.1 5.1 5.4-2-9.1-5z" color="#9a5e8c"/>
<path d="M601.0 414.8l9 5.4 5.4-2.1-9-5.3z" color="#8e638c"/>
<path d="M610.0 420.2l9.1 5.5 5.3-2.5-9-5.1z" color="#82698c"/>
<path d="M619.1 425.7l9 5.2 5.3-3-9-4.7z" color="#766e8c"/>
<path d="M628.1 430.9l9 4.6 5.3-3.6-9-4z" color="#6d738c"/>
<path d="M637.1 435.5l8.9 3.9 5.3-4.4-8.9-3.1z" color="#65788c"/>
<path d="M646.0 439.4l8.9 2.9 5.2-5.3-8.8-2z" color="#627d8c"/>
<path d="M654.9 442.3l8.8 1.8 5.2-6.2-8.8-.9z" color="#62828c"/>
<path d="M663.7 444.1l8.8 .9 5-7.2-8.6 .1z" color="#67878c"/>
<path d="M672.5 445.0l8.7 .1 5-8.2-8.7 .9z" color="#6e8c8c"/>
<path d="M681.2 445.1l8.6-.5 5-9-8.6 1.3z" color="#78918c"/>
<path d="M689.8 444.6l8.7-.9 4.9-9.7-8.6 1.6z" color="#84968c"/>
<path d="M698.5 443.7l8.6-.8 4.9-10.3-8.6 1.4z" color="#909c8c"/>
<path d="M707.1 442.9l8.7-.6 4.8-10.7-8.6 1z" color="#9ba18c"/>
<path d="M715.8 442.3l8.7-.1 4.8-10.9-8.7 .3z" color="#a5a68c"/>
<path d="M724.5 442.2l8.7 .6 4.8-11.1-8.7-.4z" color="#acab8c"/>
<path d="M733.2 442.8l8.8 1.3 4.8-11.1-8.8-1.3z" color="#b0b08c"/>
<path d="M742.0 444.1l8.8 2.1 4.8-11.1-8.8-2.1z" color="#b1b58c"/>
<path d="M750.8 446.2l8.9 2.7 4.8-11-8.9-2.8z" color="#b0ba8c"/>
<path d="M759.7 448.9l8.9 3.4 4.8-10.9-8.9-3.5z" color="#acbf8c"/>
<path d="M768.6 452.3l8.9 3.8 4.8-10.7-8.9-4z" color="#a6c48c"/>
<path d="M777.5 456.1l9 4.2 4.8-10.4-9-4.5z" color="#9ec98c"/>
<path d="M786.5 460.3l9 4.2 4.8-9.9-9-4.7z" color="#95cf8c"/>
<path d="M795.5 464.5l8.9 4.2 4.9-9.4-9-4.7z" color="#8cd48c"/>
<path d="M804.4 468.7l9 4 4.9-8.7-9-4.7z" color="#83d98c"/>
<path d="M813.4 472.7l8.9 3.4 5-7.8-9-4.3z" color="#7bde8c"/>
<path d="M822.3 476.1l8.9 2.9 5.1-6.9-9-3.8z" color="#75e38c"/>
<path d="M831.2 479.0l8.8 2.1 5.2-6-8.9-3z" color="#71e88c"/>
<path d="M840.0 481.1l8.8 1.4 5.2-5.1-8.8-2.3z" color="#71ed8c"/>
<path d="M848.8 482.5l8.7 .6 5.3-4.3-8.8-1.4z" color="#73f28c"/>
<path d="M857.5 483.1l8.7 0 5.3-3.7-8.7-.6z" color="#78f78c"/>
<path d="M866.2 483.1l8.7-.4 5.3-3.4-8.7 .1z" color="#80fc8c"/>
<path d="M438.6 373.1l8.8 1.5 5.3-2.7-8.8-2z" color="#900391"/>
<path d="M447.4 374.6l8.8 1.6 5.3-2.3-8.8-2z" color="#910891"/>
<path d="M456.2 376.2l8.8 1.7 5.4-2-8.9-2z" color="#920d91"/>
<path d="M465.0 377.9l8.8 1.8 5.4-1.8-8.8-2z" color="#921291"/>
<path d="M473.8 379.7l8.8 1.7 5.4-1.6-8.8-1.9z" color="#931791"/>
<path d="M482.6 381.4l8.8 1.7 5.4-1.6-8.8-1.7z" color="#941c91"/>
<path d="M491.4 383.1l8.8 1.5 5.4-1.7-8.8-1.4z" color="#962191"/>
<path d="M500.2 384.6l8.8 1.3 5.4-1.8-8.8-1.2z" color="#982691"/>
<path d="M509.0 385.9l8.7 1.1 5.4-1.9-8.7-1z" color="#9c2b91"/>
<path d="M517.7 387.0l8.8 1 5.4-2-8.8-.9z" color="#a03091"/>
<path d="M526.5 388.0l8.7 1 5.4-2.2-8.7-.8z" color="#a43691"/>
<path d="M535.2 389.0l8.8 1.2 5.4-2.4-8.8-1z" color="#a83b91"/>
<path d="M544.0 390.2l8.8 1.4 5.4-2.4-8.8-1.4z" color="#ab4091"/>
<path d="M552.8 391.6l8.8 1.9 5.4-2.5-8.8-1.8z" color="#ac4591"/>
<path d="M561.6 393.5l8.9 2.5 5.3-2.4-8.8-2.6z" color="#ab4a91"/>
<path d="M570.5 396.0l8.9 3.3 5.3-2.5-8.9-3.2z" color="#a84f91"/>
<path d="M579.4 399.3l8.9 3.9 5.4-2.5-9-3.9z" color="#a25491"/>
<path d="M588.3 403.2l9 4.6 5.4-2.5-9-4.6z" color="#9a5991"/>
<path d="M597.3 407.8l9.1 5 5.3-2.6-9-4.9z" color="#905e91"/>
<path d="M606.4 412.8l9 5.3 5.3-3-9-4.9z" color="#846391"/>
<path d="M615.4 418.1l9 5.1 5.3-3.3-9-4.8z" color="#796991"/>
<path d="M624.4 423.2l9 4.7 5.3-3.8-9-4.2z" color="#6f6e91"/>
<path d="M633.4 427.9l9 4 5.2-4.5-8.9-3.3z" color="#677391"/>
<path d="M642.4 431.9l8.9 3.1 5.1-5.4-8.8-2.2z" color="#637891"/>
<path d="M651.3 435.0l8.8 2 5.1-6.3-8.8-1.1z" color="#637d91"/>
<path d="M660.1 437.0l8.8 .9 5-7.3-8.7 .1z" color="#678291"/>
<path d="M668.9 437.9l8.6-.1 5-8.3-8.6 1.1z" color="#6f8791"/>
<path d="M677.5 437.8l8.7-.9 4.9-9.2-8.6 1.8z" color="#7a8c91"/>
<path d="M686.2 436.9l8.6-1.3 4.8-10-8.5 2.1z" color="#879191"/>
<path d="M694.8 435.6l8.6-1.6 4.8-10.6-8.6 2.2z" color="#969691"/>
<path d="M703.4 434.0l8.6-1.4 4.8-11-8.6 1.8z" color="#a49c91"/>
<path d="M712.0 432.6l8.6-1 4.8-11.3-8.6 1.3z" color="#b1a191"/>
<path d="M720.6 431.6l8.7-.3 4.7-11.4-8.6 .4z" color="#bba691"/>
<path d="M729.3 431.3l8.7 .4 4.8-11.4-8.8-.4z" color="#c3ab91"/>
<path d="M738.0 431.7l8.8 1.3 4.7-11.3-8.7-1.4z" color="#c7b091"/>
<path d="M746.8 433.0l8.8 2.1 4.8-11.3-8.9-2.1z" color="#c8b591"/>
<path d="M755.6 435.1l8.9 2.8 4.7-11.3-8.8-2.8z" color="#c7ba91"/>
<path d="M764.5 437.9l8.9 3.5 4.8-11.3-9-3.5z" color="#c2bf91"/>
<path d="M773.4 441.4l8.9 4 4.8-11.2-8.9-4.1z" color="#bcc491"/>
<path d="M782.3 445.4l9 4.5 4.8-11.1-9-4.6z" color="#b3c991"/>
<path d="M791.3 449.9l9 4.7 4.8-10.9-9-4.9z" color="#a9cf91"/>
<path d="M800.3 454.6l9 4.7 4.9-10.4-9.1-5.2z" color="#9fd491"/>
<path d="M809.3 459.3l9 4.7 4.9-9.8-9-5.3z" color="#93d991"/>
<path d="M818.3 464.0l9 4.3 5-9-9.1-5.1z" color="#89de91"/>
<path d="M827.3 468.3l9 3.8 5-8.1-9-4.7z" color="#80e391"/>
<path d="M836.3 472.1l8.9 3 5-7-8.9-4.1z" color="#79e891"/>
<path d="M845.2 475.1l8.8 2.3 5.1-6-8.9-3.3z" color="#74ed91"/>
<path d="M854.0 477.4l8.8 1.4 5.2-5.1-8.9-2.3z" color="#73f291"/>
<path d="M862.8 478.8l8.7 .6 5.3-4.3-8.8-1.4z" color="#75f791"/>
<path d="M871.5 479.4l8.7-.1 5.3-3.7-8.7-.5z" color="#7bfc91"/>
<path d="M443.9 369.9l8.8 2 5.3-3.6-8.9-2.4z" color="#8a0396"/>
<path d="M452.7 371.9l8.8 2 5.4-3.2-8.9-2.4z" color="#890896"/>
<path d="M461.5 373.9l8.9 2 5.3-2.8-8.8-2.4z" color="#880d96"/>
<path d="M470.4 375.9l8.8 2 5.3-2.6-8.8-2.2z" color="#881296"/>
<path d="M479.2 377.9l8.8 1.9 5.4-2.4-8.9-2.1z" color="#881796"/>
<path d="M488.0 379.8l8.8 1.7 5.4-2.4-8.8-1.7z" color="#891c96"/>
<path d="M496.8 381.5l8.8 1.4 5.4-2.4-8.8-1.4z" color="#8a2196"/>
<path d="M505.6 382.9l8.8 1.2 5.3-2.5-8.7-1.1z" color="#8d2696"/>
<path d="M514.4 384.1l8.7 1 5.4-2.6-8.8-.9z" color="#912b96"/>
<path d="M523.1 385.1l8.8 .9 5.3-2.8-8.7-.7z" color="#953096"/>
<path d="M531.9 386.0l8.7 .8 5.3-2.9-8.7-.7z" color="#9a3696"/>
<path d="M540.6 386.8l8.8 1 5.3-3-8.8-.9z" color="#9e3b96"/>
<path d="M549.4 387.8l8.8 1.4 5.3-3.2-8.8-1.2z" color="#a24096"/>
<path d="M558.2 389.2l8.8 1.8 5.3-3.2-8.8-1.8z" color="#a34596"/>
<path d="M567.0 391.0l8.8 2.6 5.3-3.3-8.8-2.5z" color="#a34a96"/>
<path d="M575.8 393.6l8.9 3.2 5.3-3.2-8.9-3.3z" color="#a04f96"/>
<path d="M584.7 396.8l9 3.9 5.3-3.2-9-3.9z" color="#9a5496"/>
<path d="M593.7 400.7l9 4.6 5.3-3.4-9-4.4z" color="#925996"/>
<path d="M602.7 405.3l9 4.9 5.3-3.5-9-4.8z" color="#885e96"/>
<path d="M611.7 410.2l9 4.9 5.3-3.7-9-4.7z" color="#7d6396"/>
<path d="M620.7 415.1l9 4.8 5.3-4.2-9-4.3z" color="#736996"/>
<path d="M629.7 419.9l9 4.2 5.2-4.8-8.9-3.6z" color="#6b6e96"/>
<path d="M638.7 424.1l8.9 3.3 5.2-5.5-8.9-2.6z" color="#657396"/>
<path d="M647.6 427.4l8.8 2.2 5.2-6.3-8.8-1.4z" color="#647896"/>
<path d="M656.4 429.6l8.8 1.1 5.1-7.3-8.7-.1z" color="#677d96"/>
<path d="M665.2 430.7l8.7-.1 5-8.2-8.6 1z" color="#6f8296"/>
<path d="M673.9 430.6l8.6-1.1 4.9-9.1-8.5 2z" color="#7a8796"/>
<path d="M682.5 429.5l8.6-1.8 4.9-9.9-8.6 2.6z" color="#898c96"/>
<path d="M691.1 427.7l8.5-2.1 4.9-10.6-8.5 2.8z" color="#999196"/>
<path d="M699.6 425.6l8.6-2.2 4.8-11-8.5 2.6z" color="#aa9696"/>
<path d="M708.2 423.4l8.6-1.8 4.7-11.2-8.5 2z" color="#ba9c96"/>
<path d="M716.8 421.6l8.6-1.3 4.8-11.1-8.7 1.2z" color="#c8a196"/>
<path d="M725.4 420.3l8.6-.4 4.8-11-8.6 .3z" color="#d2a696"/>
<path d="M734.0 419.9l8.8 .4 4.8-10.8-8.8-.6z" color="#d9ab96"/>
<path d="M742.8 420.3l8.7 1.4 4.9-10.7-8.8-1.5z" color="#ddb096"/>
<path d="M751.5 421.7l8.9 2.1 4.8-10.5-8.8-2.3z" color="#deb596"/>
<path d="M760.4 423.8l8.8 2.8 4.9-10.5-8.9-2.8z" color="#dcba96"/>
<path d="M769.2 426.6l9 3.5 4.8-10.6-8.9-3.4z" color="#d8bf96"/>
<path d="M778.2 430.1l8.9 4.1 4.8-10.8-8.9-3.9z" color="#d2c496"/>
<path d="M787.1 434.2l9 4.6 4.8-11-9-4.4z" color="#cac996"/>
<path d="M796.1 438.8l9 4.9 4.8-11-9-4.9z" color="#bfcf96"/>
<path d="M805.1 443.7l9.1 5.2 4.8-10.8-9.1-5.4z" color="#b4d496"/>
<path d="M814.2 448.9l9 5.3 4.9-10.4-9.1-5.7z" color="#a7d996"/>
<path d="M823.2 454.2l9.1 5.1 4.8-9.8-9-5.7z" color="#9ade96"/>
<path d="M832.3 459.3l9 4.7 4.9-8.9-9.1-5.6z" color="#8ee396"/>
<path d="M841.3 464.0l8.9 4.1 5-7.9-9-5.1z" color="#83e896"/>
<path d="M850.2 468.1l8.9 3.3 5.1-6.9-9-4.3z" color="#7bed96"/>
<path d="M859.1 471.4l8.9 2.3 5.1-5.8-8.9-3.4z" color="#76f296"/>
<path d="M868.0 473.7l8.8 1.4 5.2-4.9-8.9-2.3z" color="#75f796"/>
<path d="M876.8 475.1l8.7 .5 5.2-4.2-8.7-1.2z" color="#78fc96"/>
<path d="M449.1 365.9l8.9 2.4 5.2-4.5-8.9-2.8z" color="#86039c"/>
<path d="M458.0 368.3l8.9 2.4 5.2-4.1-8.9-2.8z" color="#84089c"/>
<path d="M466.9 370.7l8.8 2.4 5.3-3.9-8.9-2.6z" color="#820d9c"/>
<path d="M475.7 373.1l8.8 2.2 5.3-3.6-8.8-2.5z" color="#81129c"/>
<path d="M484.5 375.3l8.9 2.1 5.3-3.5-8.9-2.2z" color="#80179c"/>
<path d="M493.4 377.4l8.8 1.7 5.3-3.4-8.8-1.8z" color="#801c9c"/>
<path d="M502.2 379.1l8.8 1.4 5.3-3.4-8.8-1.4z" color="#82219c"/>
<path d="M511.0 380.5l8.7 1.1 5.3-3.5-8.7-1z" color="#85269c"/>
<path d="M519.7 381.6l8.8 .9 5.3-3.6-8.8-.8z" color="#892b9c"/>
<path d="M528.5 382.5l8.7 .7 5.3-3.8-8.7-.5z" color="#8e309c"/>
<path d="M537.2 383.2l8.7 .7 5.3-3.9-8.7-.6z" color="#93369c"/>
<path d="M545.9 383.9l8.8 .9 5.3-4-8.8-.8z" color="#983b9c"/>
<path d="M554.7 384.8l8.8 1.2 5.2-4-8.7-1.2z" color="#9c409c"/>
<path d="M563.5 386.0l8.8 1.8 5.2-4-8.8-1.8z" color="#9e459c"/>
<path d="M572.3 387.8l8.8 2.5 5.3-4.1-8.9-2.4z" color="#9d4a9c"/>
<path d="M581.1 390.3l8.9 3.3 5.3-4.1-8.9-3.3z" color="#9a4f9c"/>
<path d="M590.0 393.6l9 3.9 5.3-4.1-9-3.9z" color="#94549c"/>
<path d="M599.0 397.5l9 4.4 5.2-4.1-8.9-4.4z" color="#8c599c"/>
<path d="M608.0 401.9l9 4.8 5.2-4.3-9-4.6z" color="#835e9c"/>
<path d="M617.0 406.7l9 4.7 5.2-4.6-9-4.4z" color="#79639c"/>
<path d="M626.0 411.4l9 4.3 5.2-4.9-9-4z" color="#70699c"/>
<path d="M635.0 415.7l8.9 3.6 5.2-5.5-8.9-3z" color="#6a6e9c"/>
<path d="M643.9 419.3l8.9 2.6 5.1-6.2-8.8-1.9z" color="#67739c"/>
<path d="M652.8 421.9l8.8 1.4 5-7-8.7-.6z" color="#68789c"/>
<path d="M661.6 423.3l8.7 .1 5-7.9-8.7 .8z" color="#6f7d9c"/>
<path d="M670.3 423.4l8.6-1 4.9-8.8-8.5 1.9z" color="#7a829c"/>
<path d="M678.9 422.4l8.5-2 4.9-9.6-8.5 2.8z" color="#89879c"/>
<path d="M687.4 420.4l8.6-2.6 4.8-10.2-8.5 3.2z" color="#9a8c9c"/>
<path d="M696.0 417.8l8.5-2.8 4.8-10.6-8.5 3.2z" color="#ad919c"/>
<path d="M704.5 415.0l8.5-2.6 4.8-10.7-8.5 2.7z" color="#bf969c"/>
<path d="M713.0 412.4l8.5-2 4.9-10.6-8.6 1.9z" color="#d09c9c"/>
<path d="M721.5 410.4l8.7-1.2 4.8-10.3-8.6 .9z" color="#dda19c"/>
<path d="M730.2 409.2l8.6-.3 4.9-9.8-8.7-.2z" color="#e7a69c"/>
<path d="M738.8 408.9l8.8 .6 4.9-9.2-8.8-1.2z" color="#edab9c"/>
<path d="M747.6 409.5l8.8 1.5 4.9-8.8-8.8-1.9z" color="#efb09c"/>
<path d="M756.4 411.0l8.8 2.3 4.9-8.7-8.8-2.4z" color="#efb59c"/>
<path d="M765.2 413.3l8.9 2.8 4.9-8.7-8.9-2.8z" color="#edba9c"/>
<path d="M774.1 416.1l8.9 3.4 4.9-9-8.9-3.1z" color="#eabf9c"/>
<path d="M783.0 419.5l8.9 3.9 4.9-9.5-8.9-3.4z" color="#e4c49c"/>
<path d="M791.9 423.4l9 4.4 4.9-10-9-3.9z" color="#ddc99c"/>
<path d="M800.9 427.8l9 4.9 4.9-10.4-9-4.5z" color="#d4cf9c"/>
<path d="M809.9 432.7l9.1 5.4 4.8-10.7-9-5.1z" color="#c9d49c"/>
<path d="M819.0 438.1l9.1 5.7 4.8-10.6-9.1-5.8z" color="#bcd99c"/>
<path d="M828.1 443.8l9 5.7 4.9-10.1-9.1-6.2z" color="#aede9c"/>
<path d="M837.1 449.5l9.1 5.6 4.9-9.5-9.1-6.2z" color="#9fe39c"/>
<path d="M846.2 455.1l9 5.1 5-8.6-9.1-6z" color="#91e89c"/>
<path d="M855.2 460.2l9 4.3 5-7.5-9-5.4z" color="#85ed9c"/>
<path d="M864.2 464.5l8.9 3.4 5.1-6.5-9-4.4z" color="#7cf29c"/>
<path d="M873.1 467.9l8.9 2.3 5.1-5.5-8.9-3.3z" color="#77f79c"/>
<path d="M882.0 470.2l8.7 1.2 5.2-4.7-8.8-2z" color="#76fc9c"/>
<path d="M454.3 361.0l8.9 2.8 5.2-5.4-8.9-3.2z" color="#8703a1"/>
<path d="M463.2 363.8l8.9 2.8 5.2-5.2-8.9-3z" color="#8308a1"/>
<path d="M472.1 366.6l8.9 2.6 5.2-4.9-8.9-2.9z" color="#800da1"/>
<path d="M481.0 369.2l8.8 2.5 5.2-4.7-8.8-2.7z" color="#7d12a1"/>
<path d="M489.8 371.7l8.9 2.2 5.2-4.6-8.9-2.3z" color="#7c17a1"/>
<path d="M498.7 373.9l8.8 1.8 5.2-4.6-8.8-1.8z" color="#7c1ca1"/>
<path d="M507.5 375.7l8.8 1.4 5.2-4.5-8.8-1.5z" color="#7e21a1"/>
<path d="M516.3 377.1l8.7 1 5.2-4.5-8.7-1z" color="#8126a1"/>
<path d="M525.0 378.1l8.8 .8 5.2-4.7-8.8-.6z" color="#852ba1"/>
<path d="M533.8 378.9l8.7 .5 5.2-4.7-8.7-.5z" color="#8a30a1"/>
<path d="M542.5 379.4l8.7 .6 5.2-4.9-8.7-.4z" color="#9036a1"/>
<path d="M551.2 380.0l8.8 .8 5.2-4.9-8.8-.8z" color="#953ba1"/>
<path d="M560.0 380.8l8.7 1.2 5.2-5-8.7-1.1z" color="#9940a1"/>
<path d="M568.7 382.0l8.8 1.8 5.2-5-8.8-1.8z" color="#9b45a1"/>
<path d="M577.5 383.8l8.9 2.4 5.2-4.9-8.9-2.5z" color="#9b4aa1"/>
<path d="M586.4 386.2l8.9 3.3 5.2-4.9-8.9-3.3z" color="#984fa1"/>
<path d="M595.3 389.5l9 3.9 5.2-4.9-9-3.9z" color="#9254a1"/>
<path d="M604.3 393.4l8.9 4.4 5.2-4.9-8.9-4.4z" color="#8a59a1"/>
<path d="M613.2 397.8l9 4.6 5.2-5-9-4.5z" color="#815ea1"/>
<path d="M622.2 402.4l9 4.4 5.2-5.2-9-4.2z" color="#7863a1"/>
<path d="M631.2 406.8l9 4 5.1-5.6-8.9-3.6z" color="#7069a1"/>
<path d="M640.2 410.8l8.9 3 5.1-6.1-8.9-2.5z" color="#6b6ea1"/>
<path d="M649.1 413.8l8.8 1.9 5.1-6.7-8.8-1.3z" color="#6b73a1"/>
<path d="M657.9 415.7l8.7 .6 5-7.5-8.6 .2z" color="#6f78a1"/>
<path d="M666.6 416.3l8.7-.8 4.9-8.2-8.6 1.5z" color="#787da1"/>
<path d="M675.3 415.5l8.5-1.9 4.9-9-8.5 2.7z" color="#8682a1"/>
<path d="M683.8 413.6l8.5-2.8 4.9-9.6-8.5 3.4z" color="#9887a1"/>
<path d="M692.3 410.8l8.5-3.2 4.9-10.1-8.5 3.7z" color="#ac8ca1"/>
<path d="M700.8 407.6l8.5-3.2 4.8-10.2-8.4 3.3z" color="#c091a1"/>
<path d="M709.3 404.4l8.5-2.7 4.9-10-8.6 2.5z" color="#d396a1"/>
<path d="M717.8 401.7l8.6-1.9 4.9-9.5-8.6 1.4z" color="#e39ca1"/>
<path d="M726.4 399.8l8.6-.9 4.9-8.7-8.6 .1z" color="#efa1a1"/>
<path d="M735.0 398.9l8.7 .2 5-7.8-8.8-1.1z" color="#f6a6a1"/>
<path d="M743.7 399.1l8.8 1.2 5-6.9-8.8-2.1z" color="#f9aba1"/>
<path d="M752.5 400.3l8.8 1.9 5.1-6.2-8.9-2.6z" color="#f9b0a1"/>
<path d="M761.3 402.2l8.8 2.4 5.2-5.8-8.9-2.8z" color="#f8b5a1"/>
<path d="M770.1 404.6l8.9 2.8 5.1-5.9-8.8-2.7z" color="#f5baa1"/>
<path d="M779.0 407.4l8.9 3.1 5.1-6.5-8.9-2.5z" color="#f3bfa1"/>
<path d="M787.9 410.5l8.9 3.4 5.1-7.3-8.9-2.6z" color="#efc4a1"/>
<path d="M796.8 413.9l9 3.9 5-8.3-8.9-2.9z" color="#ebc9a1"/>
<path d="M805.8 417.8l9 4.5 4.9-9.2-8.9-3.6z" color="#e5cfa1"/>
<path d="M814.8 422.3l9 5.1 4.9-9.8-9-4.5z" color="#dbd4a1"/>
<path d="M823.8 427.4l9.1 5.8 4.8-10.1-9-5.5z" color="#cfd9a1"/>
<path d="M832.9 433.2l9.1 6.2 4.8-10.1-9.1-6.2z" color="#c1dea1"/>
<path d="M842.0 439.4l9.1 6.2 4.9-9.6-9.2-6.7z" color="#b0e3a1"/>
<path d="M851.1 445.6l9.1 6 4.9-8.8-9.1-6.8z" color="#a0e8a1"/>
<path d="M860.2 451.6l9 5.4 5-7.9-9.1-6.3z" color="#90eda1"/>
<path d="M869.2 457.0l9 4.4 5.1-6.9-9.1-5.4z" color="#84f2a1"/>
<path d="M878.2 461.4l8.9 3.3 5.1-6-8.9-4.2z" color="#7bf7a1"/>
<path d="M887.1 464.7l8.8 2 5.2-5-8.9-3z" color="#77fca1"/>
<path d="M459.5 355.2l8.9 3.2 5.1-6.2-8.9-3.3z" color="#8903a6"/>
<path d="M468.4 358.4l8.9 3 5.1-5.9-8.9-3.3z" color="#8508a6"/>
<path d="M477.3 361.4l8.9 2.9 5.1-5.7-8.9-3.1z" color="#810da6"/>
<path d="M486.2 364.3l8.8 2.7 5.2-5.7-8.9-2.7z" color="#7e12a6"/>
<path d="M495.0 367.0l8.9 2.3 5.1-5.6-8.8-2.4z" color="#7c17a6"/>
<path d="M503.9 369.3l8.8 1.8 5.1-5.5-8.8-1.9z" color="#7c1ca6"/>
<path d="M512.7 371.1l8.8 1.5 5.1-5.6-8.8-1.4z" color="#7d21a6"/>
<path d="M521.5 372.6l8.7 1 5.2-5.7-8.8-.9z" color="#8026a6"/>
<path d="M530.2 373.6l8.8 .6 5.1-5.7-8.7-.6z" color="#852ba6"/>
<path d="M539.0 374.2l8.7 .5 5.1-5.8-8.7-.4z" color="#8b30a6"/>
<path d="M547.7 374.7l8.7 .4 5.2-5.8-8.8-.4z" color="#9136a6"/>
<path d="M556.4 375.1l8.8 .8 5.1-5.9-8.7-.7z" color="#963ba6"/>
<path d="M565.2 375.9l8.7 1.1 5.2-5.8-8.8-1.2z" color="#9a40a6"/>
<path d="M573.9 377.0l8.8 1.8 5.2-5.8-8.8-1.8z" color="#9c45a6"/>
<path d="M582.7 378.8l8.9 2.5 5.1-5.7-8.8-2.6z" color="#9c4aa6"/>
<path d="M591.6 381.3l8.9 3.3 5.1-5.7-8.9-3.3z" color="#984fa6"/>
<path d="M600.5 384.6l9 3.9 5.1-5.6-9-4z" color="#9254a6"/>
<path d="M609.5 388.5l8.9 4.4 5.2-5.6-9-4.4z" color="#8a59a6"/>
<path d="M618.4 392.9l9 4.5 5.2-5.6-9-4.5z" color="#815ea6"/>
<path d="M627.4 397.4l9 4.2 5.1-5.7-8.9-4.1z" color="#7963a6"/>
<path d="M636.4 401.6l8.9 3.6 5.1-6-8.9-3.3z" color="#7269a6"/>
<path d="M645.3 405.2l8.9 2.5 5.1-6.4-8.9-2.1z" color="#6f6ea6"/>
<path d="M654.2 407.7l8.8 1.3 5-7-8.7-.7z" color="#7073a6"/>
<path d="M663.0 409.0l8.6-.2 5.1-7.6-8.7 .8z" color="#7778a6"/>
<path d="M671.6 408.8l8.6-1.5 5-8.3-8.5 2.2z" color="#837da6"/>
<path d="M680.2 407.3l8.5-2.7 5-8.9-8.5 3.3z" color="#9482a6"/>
<path d="M688.7 404.6l8.5-3.4 4.9-9.4-8.4 3.9z" color="#a887a6"/>
<path d="M697.2 401.2l8.5-3.7 4.9-9.5-8.5 3.8z" color="#bd8ca6"/>
<path d="M705.7 397.5l8.4-3.3 4.9-9.3-8.4 3.1z" color="#d291a6"/>
<path d="M714.1 394.2l8.6-2.5 4.9-8.8-8.6 2z" color="#e496a6"/>
<path d="M722.7 391.7l8.6-1.4 5-7.9-8.7 .5z" color="#f29ca6"/>
<path d="M731.3 390.3l8.6-.1 5.1-6.6-8.7-1.2z" color="#faa1a6"/>
<path d="M739.9 390.2l8.8 1.1 5.2-5.2-8.9-2.5z" color="#fda6a6"/>
<path d="M748.7 391.3l8.8 2.1 5.3-3.9-8.9-3.4z" color="#fcaba6"/>
<path d="M757.5 393.4l8.9 2.6 5.3-2.8-8.9-3.7z" color="#f9b0a6"/>
<path d="M766.4 396.0l8.9 2.8 5.3-2.3-8.9-3.3z" color="#f5b5a6"/>
<path d="M775.3 398.8l8.8 2.7 5.4-2.5-8.9-2.5z" color="#f2baa6"/>
<path d="M784.1 401.5l8.9 2.5 5.3-3.3-8.8-1.7z" color="#f0bfa6"/>
<path d="M793.0 404.0l8.9 2.6 5.2-4.5-8.8-1.4z" color="#f0c4a6"/>
<path d="M801.9 406.6l8.9 2.9 5.1-6-8.8-1.4z" color="#f0c9a6"/>
<path d="M810.8 409.5l8.9 3.6 5-7.4-8.8-2.2z" color="#eecfa6"/>
<path d="M819.7 413.1l9 4.5 4.9-8.5-8.9-3.4z" color="#e9d4a6"/>
<path d="M828.7 417.6l9 5.5 4.9-9.3-9-4.7z" color="#e0d9a6"/>
<path d="M837.7 423.1l9.1 6.2 4.9-9.5-9.1-6z" color="#d2dea6"/>
<path d="M846.8 429.3l9.2 6.7 4.9-9.4-9.2-6.8z" color="#c1e3a6"/>
<path d="M856.0 436.0l9.1 6.8 4.9-8.9-9.1-7.3z" color="#afe8a6"/>
<path d="M865.1 442.8l9.1 6.3 5-8.1-9.2-7.1z" color="#9deda6"/>
<path d="M874.2 449.1l9.1 5.4 5-7.2-9.1-6.3z" color="#8df2a6"/>
<path d="M883.3 454.5l8.9 4.2 5.2-6.2-9.1-5.2z" color="#81f7a6"/>
<path d="M892.2 458.7l8.9 3 5.2-5.4-8.9-3.8z" color="#79fca6"/>
<path d="M464.6 348.9l8.9 3.3 5.1-6.6-8.9-3.4z" color="#8e03ab"/>
<path d="M473.5 352.2l8.9 3.3 5.1-6.5-8.9-3.4z" color="#8a08ab"/>
<path d="M482.4 355.5l8.9 3.1 5.1-6.5-8.9-3.1z" color="#850dab"/>
<path d="M491.3 358.6l8.9 2.7 5.1-6.3-8.9-2.9z" color="#8212ab"/>
<path d="M500.2 361.3l8.8 2.4 5.1-6.3-8.8-2.4z" color="#7f17ab"/>
<path d="M509.0 363.7l8.8 1.9 5.2-6.3-8.9-1.9z" color="#7f1cab"/>
<path d="M517.8 365.6l8.8 1.4 5.1-6.4-8.7-1.3z" color="#8021ab"/>
<path d="M526.6 367.0l8.8 .9 5.1-6.4-8.8-.9z" color="#8426ab"/>
<path d="M535.4 367.9l8.7 .6 5.1-6.4-8.7-.6z" color="#892bab"/>
<path d="M544.1 368.5l8.7 .4 5.1-6.5-8.7-.3z" color="#8e30ab"/>
<path d="M552.8 368.9l8.8 .4 5-6.5-8.7-.4z" color="#9536ab"/>
<path d="M561.6 369.3l8.7 .7 5.1-6.5-8.8-.7z" color="#9a3bab"/>
<path d="M570.3 370.0l8.8 1.2 5.1-6.5-8.8-1.2z" color="#9e40ab"/>
<path d="M579.1 371.2l8.8 1.8 5.1-6.4-8.8-1.9z" color="#a045ab"/>
<path d="M587.9 373.0l8.8 2.6 5.1-6.3-8.8-2.7z" color="#9f4aab"/>
<path d="M596.7 375.6l8.9 3.3 5.2-6.1-9-3.5z" color="#9c4fab"/>
<path d="M605.6 378.9l9 4 5.1-6-8.9-4.1z" color="#9554ab"/>
<path d="M614.6 382.9l9 4.4 5.1-5.9-9-4.5z" color="#8d59ab"/>
<path d="M623.6 387.3l9 4.5 5.1-5.9-9-4.5z" color="#845eab"/>
<path d="M632.6 391.8l8.9 4.1 5.2-6-9-4z" color="#7b63ab"/>
<path d="M641.5 395.9l8.9 3.3 5.2-6.3-8.9-3z" color="#7569ab"/>
<path d="M650.4 399.2l8.9 2.1 5.1-6.6-8.8-1.8z" color="#736eab"/>
<path d="M659.3 401.3l8.7 .7 5.1-7.1-8.7-.2z" color="#7673ab"/>
<path d="M668.0 402.0l8.7-.8 5-7.6-8.6 1.3z" color="#7f78ab"/>
<path d="M676.7 401.2l8.5-2.2 5-8.1-8.5 2.7z" color="#8d7dab"/>
<path d="M685.2 399.0l8.5-3.3 4.9-8.5-8.4 3.7z" color="#a082ab"/>
<path d="M693.7 395.7l8.4-3.9 5-8.7-8.5 4.1z" color="#b687ab"/>
<path d="M702.1 391.8l8.5-3.8 4.9-8.7-8.4 3.8z" color="#cc8cab"/>
<path d="M710.6 388.0l8.4-3.1 5-8.3-8.5 2.7z" color="#e091ab"/>
<path d="M719.0 384.9l8.6-2 5-7.4-8.6 1.1z" color="#f196ab"/>
<path d="M727.6 382.9l8.7-.5 5.1-6-8.8-.9z" color="#fb9cab"/>
<path d="M736.3 382.4l8.7 1.2 5.3-4.4-8.9-2.8z" color="#fea1ab"/>
<path d="M745.0 383.6l8.9 2.5 5.3-2.5-8.9-4.4z" color="#fba6ab"/>
<path d="M753.9 386.1l8.9 3.4 5.5-.7-9.1-5.2z" color="#f4abab"/>
<path d="M762.8 389.5l8.9 3.7 5.6 .7-9-5.1z" color="#ecb0ab"/>
<path d="M771.7 393.2l8.9 3.3 5.7 1.4-9-4z" color="#e4b5ab"/>
<path d="M780.6 396.5l8.9 2.5 5.6 1.2-8.8-2.3z" color="#e0baab"/>
<path d="M789.5 399.0l8.8 1.7 5.5 .2-8.7-.7z" color="#e1bfab"/>
<path d="M798.3 400.7l8.8 1.4 5.4-1.5-8.7 .3z" color="#e6c4ab"/>
<path d="M807.1 402.1l8.8 1.4 5.3-3.4-8.7 .5z" color="#ebc9ab"/>
<path d="M815.9 403.5l8.8 2.2 5.2-5.4-8.7-.2z" color="#f0cfab"/>
<path d="M824.7 405.7l8.9 3.4 5.1-7-8.8-1.8z" color="#f0d4ab"/>
<path d="M833.6 409.1l9 4.7 5-8.1-8.9-3.6z" color="#ebd9ab"/>
<path d="M842.6 413.8l9.1 6 5-8.8-9.1-5.3z" color="#e0deab"/>
<path d="M851.7 419.8l9.2 6.8 4.9-8.8-9.1-6.8z" color="#d1e3ab"/>
<path d="M860.9 426.6l9.1 7.3 5-8.6-9.2-7.5z" color="#bde8ab"/>
<path d="M870.0 433.9l9.2 7.1 5-8-9.2-7.7z" color="#a9edab"/>
<path d="M879.2 441.0l9.1 6.3 5.1-7.2-9.2-7.1z" color="#96f2ab"/>
<path d="M888.3 447.3l9.1 5.2 5.1-6.4-9.1-6z" color="#87f7ab"/>
<path d="M897.4 452.5l8.9 3.8 5.1-5.7-8.9-4.5z" color="#7cfcab"/>
<path d="M469.7 342.2l8.9 3.4 5.1-6.8-9-3.5z" color="#9503b0"/>
<path d="M478.6 345.6l8.9 3.4 5.1-6.9-8.9-3.3z" color="#9008b0"/>
<path d="M487.5 349.0l8.9 3.1 5.1-6.8-8.9-3.2z" color="#8b0db0"/>
<path d="M496.4 352.1l8.9 2.9 5.1-6.9-8.9-2.8z" color="#8712b0"/>
<path d="M505.3 355.0l8.8 2.4 5.1-6.9-8.8-2.4z" color="#8517b0"/>
<path d="M514.1 357.4l8.9 1.9 5-6.9-8.8-1.9z" color="#851cb0"/>
<path d="M523.0 359.3l8.7 1.3 5.1-6.9-8.8-1.3z" color="#8621b0"/>
<path d="M531.7 360.6l8.8 .9 5-7-8.7-.8z" color="#8a26b0"/>
<path d="M540.5 361.5l8.7 .6 5.1-7.1-8.8-.5z" color="#8f2bb0"/>
<path d="M549.2 362.1l8.7 .3 5.1-7-8.7-.4z" color="#9530b0"/>
<path d="M557.9 362.4l8.7 .4 5.1-7-8.7-.4z" color="#9b36b0"/>
<path d="M566.6 362.8l8.8 .7 5-7-8.7-.7z" color="#a03bb0"/>
<path d="M575.4 363.5l8.8 1.2 5-6.9-8.8-1.3z" color="#a440b0"/>
<path d="M584.2 364.7l8.8 1.9 5-6.8-8.8-2z" color="#a645b0"/>
<path d="M593.0 366.6l8.8 2.7 5.1-6.6-8.9-2.9z" color="#a54ab0"/>
<path d="M601.8 369.3l9 3.5 5.1-6.4-9-3.7z" color="#a04fb0"/>
<path d="M610.8 372.8l8.9 4.1 5.1-6.2-8.9-4.3z" color="#9954b0"/>
<path d="M619.7 376.9l9 4.5 5.1-6.1-9-4.6z" color="#9059b0"/>
<path d="M628.7 381.4l9 4.5 5.1-6.1-9-4.5z" color="#875eb0"/>
<path d="M637.7 385.9l9 4 5.1-6.1-9-4z" color="#7f63b0"/>
<path d="M646.7 389.9l8.9 3 5.1-6.2-8.9-2.9z" color="#7969b0"/>
<path d="M655.6 392.9l8.8 1.8 5.1-6.5-8.8-1.5z" color="#786eb0"/>
<path d="M664.4 394.7l8.7 .2 5-6.8-8.6 .1z" color="#7c73b0"/>
<path d="M673.1 394.9l8.6-1.3 5-7.2-8.6 1.7z" color="#8778b0"/>
<path d="M681.7 393.6l8.5-2.7 5-7.6-8.5 3.1z" color="#977db0"/>
<path d="M690.2 390.9l8.4-3.7 5-7.9-8.4 4z" color="#ab82b0"/>
<path d="M698.6 387.2l8.5-4.1 5-7.9-8.5 4.1z" color="#c287b0"/>
<path d="M707.1 383.1l8.4-3.8 5-7.6-8.4 3.5z" color="#d88cb0"/>
<path d="M715.5 379.3l8.5-2.7 5.1-7-8.6 2.1z" color="#eb91b0"/>
<path d="M724.0 376.6l8.6-1.1 5.2-6-8.7 .1z" color="#f896b0"/>
<path d="M732.6 375.5l8.8 .9 5.2-4.4-8.8-2.5z" color="#fe9cb0"/>
<path d="M741.4 376.4l8.9 2.8 5.3-2.4-9-4.8z" color="#fba1b0"/>
<path d="M750.3 379.2l8.9 4.4 5.6-.2-9.2-6.6z" color="#f1a6b0"/>
<path d="M759.2 383.6l9.1 5.2 5.6 2.1-9.1-7.5z" color="#e2abb0"/>
<path d="M768.3 388.8l9 5.1 5.8 3.9-9.2-6.9z" color="#d3b0b0"/>
<path d="M777.3 393.9l9 4 5.8 4.8-9-4.9z" color="#c7b5b0"/>
<path d="M786.3 397.9l8.8 2.3 5.8 4.6-8.8-2.1z" color="#c2bab0"/>
<path d="M795.1 400.2l8.7 .7 5.8 3.3-8.7 .6z" color="#c5bfb0"/>
<path d="M803.8 400.9l8.7-.3 5.6 1.1-8.5 2.5z" color="#cfc4b0"/>
<path d="M812.5 400.6l8.7-.5 5.4-1.3-8.5 2.9z" color="#ddc9b0"/>
<path d="M821.2 400.1l8.7 .2 5.3-3.5-8.6 2z" color="#e9cfb0"/>
<path d="M829.9 400.3l8.8 1.8 5.2-5.5-8.7 .2z" color="#f1d4b0"/>
<path d="M838.7 402.1l8.9 3.6 5.1-7-8.8-2.1z" color="#f2d9b0"/>
<path d="M847.6 405.7l9.1 5.3 5-7.8-9-4.5z" color="#ebdeb0"/>
<path d="M856.7 411.0l9.1 6.8 5-8.2-9.1-6.4z" color="#dde3b0"/>
<path d="M865.8 417.8l9.2 7.5 5-8.1-9.2-7.6z" color="#cae8b0"/>
<path d="M875.0 425.3l9.2 7.7 5-7.7-9.2-8.1z" color="#b5edb0"/>
<path d="M884.2 433.0l9.2 7.1 5-7.1-9.2-7.7z" color="#9ff2b0"/>
<path d="M893.4 440.1l9.1 6 5.1-6.4-9.2-6.7z" color="#8df7b0"/>
<path d="M902.5 446.1l8.9 4.5 5.2-5.7-9-5.2z" color="#80fcb0"/>
<path d="M474.7 335.3l9 3.5 5-6.9-8.9-3.3z" color="#9b03b5"/>
<path d="M483.7 338.8l8.9 3.3 5-6.9-8.9-3.3z" color="#9608b5"/>
<path d="M492.6 342.1l8.9 3.2 5-7-8.9-3.1z" color="#910db5"/>
<path d="M501.5 345.3l8.9 2.8 5-7-8.9-2.8z" color="#8e12b5"/>
<path d="M510.4 348.1l8.8 2.4 5.1-7-8.9-2.4z" color="#8c17b5"/>
<path d="M519.2 350.5l8.8 1.9 5.1-7.1-8.8-1.8z" color="#8c1cb5"/>
<path d="M528.0 352.4l8.8 1.3 5-7.1-8.7-1.3z" color="#8d21b5"/>
<path d="M536.8 353.7l8.7 .8 5.1-7.1-8.8-.8z" color="#9126b5"/>
<path d="M545.5 354.5l8.8 .5 5-7.2-8.7-.4z" color="#962bb5"/>
<path d="M554.3 355.0l8.7 .4 5-7.3-8.7-.3z" color="#9c30b5"/>
<path d="M563.0 355.4l8.7 .4 5-7.2-8.7-.5z" color="#a236b5"/>
<path d="M571.7 355.8l8.7 .7 5.1-7.1-8.8-.8z" color="#a83bb5"/>
<path d="M580.4 356.5l8.8 1.3 5.1-7-8.8-1.4z" color="#ab40b5"/>
<path d="M589.2 357.8l8.8 2 5.1-6.8-8.8-2.2z" color="#ad45b5"/>
<path d="M598.0 359.8l8.9 2.9 5.1-6.7-8.9-3z" color="#ab4ab5"/>
<path d="M606.9 362.7l9 3.7 5.1-6.5-9-3.9z" color="#a54fb5"/>
<path d="M615.9 366.4l8.9 4.3 5.1-6.3-8.9-4.5z" color="#9e54b5"/>
<path d="M624.8 370.7l9 4.6 5.2-6.1-9.1-4.8z" color="#9459b5"/>
<path d="M633.8 375.3l9 4.5 5.2-6-9-4.6z" color="#8a5eb5"/>
<path d="M642.8 379.8l9 4 5.1-6-8.9-4z" color="#8263b5"/>
<path d="M651.8 383.8l8.9 2.9 5.1-6-8.9-2.9z" color="#7d69b5"/>
<path d="M660.7 386.7l8.8 1.5 5.1-6.2-8.8-1.3z" color="#7c6eb5"/>
<path d="M669.5 388.2l8.6-.1 5.1-6.4-8.6 .3z" color="#8173b5"/>
<path d="M678.1 388.1l8.6-1.7 5.1-6.7-8.6 2z" color="#8d78b5"/>
<path d="M686.7 386.4l8.5-3.1 5.1-6.9-8.5 3.3z" color="#9e7db5"/>
<path d="M695.2 383.3l8.4-4 5.1-7-8.4 4.1z" color="#b382b5"/>
<path d="M703.6 379.3l8.5-4.1 5-7-8.4 4.1z" color="#ca87b5"/>
<path d="M712.1 375.2l8.4-3.5 5.1-6.7-8.5 3.2z" color="#e08cb5"/>
<path d="M720.5 371.7l8.6-2.1 5.1-6-8.6 1.4z" color="#f191b5"/>
<path d="M729.1 369.6l8.7-.1 5.2-4.8-8.8-1.1z" color="#fb96b5"/>
<path d="M737.8 369.5l8.8 2.5 5.3-3.3-8.9-4z" color="#fc9cb5"/>
<path d="M746.6 372.0l9 4.8 5.5-1.2-9.2-6.9z" color="#f2a1b5"/>
<path d="M755.6 376.8l9.2 6.6 5.6 1.3-9.3-9.1z" color="#e0a6b5"/>
<path d="M764.8 383.4l9.1 7.5 5.8 3.8-9.3-10z" color="#c9abb5"/>
<path d="M773.9 390.9l9.2 6.9 5.9 6-9.3-9.1z" color="#b1b0b5"/>
<path d="M783.1 397.8l9 4.9 6 7.3-9.1-6.2z" color="#9fb5b5"/>
<path d="M792.1 402.7l8.8 2.1 6 7.1-8.8-1.9z" color="#98bab5"/>
<path d="M800.9 404.8l8.7-.6 5.9 5.4-8.6 2.3z" color="#9fbfb5"/>
<path d="M809.6 404.2l8.5-2.5 5.7 2.8-8.3 5.1z" color="#b0c4b5"/>
<path d="M818.1 401.7l8.5-2.9 5.5 .1-8.3 5.6z" color="#c7c9b5"/>
<path d="M826.6 398.8l8.6-2 5.3-2.4-8.4 4.5z" color="#ddcfb5"/>
<path d="M835.2 396.8l8.7-.2 5.2-4.5-8.6 2.3z" color="#edd4b5"/>
<path d="M843.9 396.6l8.8 2.1 5.1-5.9-8.7-.7z" color="#f4d9b5"/>
<path d="M852.7 398.7l9 4.5 5-7-8.9-3.4z" color="#f2deb5"/>
<path d="M861.7 403.2l9.1 6.4 5-7.5-9.1-5.9z" color="#e6e3b5"/>
<path d="M870.8 409.6l9.2 7.6 5-7.5-9.2-7.6z" color="#d4e8b5"/>
<path d="M880.0 417.2l9.2 8.1 5.1-7.3-9.3-8.3z" color="#beedb5"/>
<path d="M889.2 425.3l9.2 7.7 5.1-6.8-9.2-8.2z" color="#a7f2b5"/>
<path d="M898.4 433.0l9.2 6.7 5.1-6.2-9.2-7.3z" color="#93f7b5"/>
<path d="M907.6 439.7l9 5.2 5.1-5.6-9-5.8z" color="#83fcb5"/>
<path d="M479.8 328.6l8.9 3.3 5.1-6.5-8.9-3.2z" color="#a103ba"/>
<path d="M488.7 331.9l8.9 3.3 5.1-6.6-8.9-3.2z" color="#9c08ba"/>
<path d="M497.6 335.2l8.9 3.1 5.1-6.7-8.9-3z" color="#980dba"/>
<path d="M506.5 338.3l8.9 2.8 5.1-6.8-8.9-2.7z" color="#9512ba"/>
<path d="M515.4 341.1l8.9 2.4 5-7-8.8-2.2z" color="#9317ba"/>
<path d="M524.3 343.5l8.8 1.8 5-7-8.8-1.8z" color="#931cba"/>
<path d="M533.1 345.3l8.7 1.3 5.1-7.1-8.8-1.2z" color="#9521ba"/>
<path d="M541.8 346.6l8.8 .8 5-7.2-8.7-.7z" color="#9826ba"/>
<path d="M550.6 347.4l8.7 .4 5.1-7.1-8.8-.5z" color="#9e2bba"/>
<path d="M559.3 347.8l8.7 .3 5.1-7.1-8.7-.3z" color="#a430ba"/>
<path d="M568.0 348.1l8.7 .5 5.1-7.1-8.7-.5z" color="#aa36ba"/>
<path d="M576.7 348.6l8.8 .8 5.1-7-8.8-.9z" color="#af3bba"/>
<path d="M585.5 349.4l8.8 1.4 5-6.9-8.7-1.5z" color="#b340ba"/>
<path d="M594.3 350.8l8.8 2.2 5.1-6.8-8.9-2.3z" color="#b345ba"/>
<path d="M603.1 353.0l8.9 3 5.1-6.5-8.9-3.3z" color="#b14aba"/>
<path d="M612.0 356.0l9 3.9 5.1-6.3-9-4.1z" color="#ab4fba"/>
<path d="M621.0 359.9l8.9 4.5 5.2-6.1-9-4.7z" color="#a254ba"/>
<path d="M629.9 364.4l9.1 4.8 5.1-5.9-9-5z" color="#9859ba"/>
<path d="M639.0 369.2l9 4.6 5.1-5.8-9-4.7z" color="#8e5eba"/>
<path d="M648.0 373.8l8.9 4 5.2-5.7-9-4.1z" color="#8563ba"/>
<path d="M656.9 377.8l8.9 2.9 5.1-5.7-8.8-2.9z" color="#7f69ba"/>
<path d="M665.8 380.7l8.8 1.3 5.1-5.7-8.8-1.3z" color="#7f6eba"/>
<path d="M674.6 382.0l8.6-.3 5.2-5.9-8.7 .5z" color="#8573ba"/>
<path d="M683.2 381.7l8.6-2 5.1-6-8.5 2.1z" color="#9178ba"/>
<path d="M691.8 379.7l8.5-3.3 5.1-6.2-8.5 3.5z" color="#a37dba"/>
<path d="M700.3 376.4l8.4-4.1 5.1-6.3-8.4 4.2z" color="#b982ba"/>
<path d="M708.7 372.3l8.4-4.1 5.1-6.2-8.4 4z" color="#d087ba"/>
<path d="M717.1 368.2l8.5-3.2 5.1-5.8-8.5 2.8z" color="#e58cba"/>
<path d="M725.6 365.0l8.6-1.4 5.2-5.2-8.7 .8z" color="#f491ba"/>
<path d="M734.2 363.6l8.8 1.1 5.2-4.2-8.8-2.1z" color="#fb96ba"/>
<path d="M743.0 364.7l8.9 4 5.4-2.7-9.1-5.5z" color="#f79cba"/>
<path d="M751.9 368.7l9.2 6.9 5.4-.9-9.2-8.7z" color="#e7a1ba"/>
<path d="M761.1 375.6l9.3 9.1 5.6 1.3-9.5-11.3z" color="#cca6ba"/>
<path d="M770.4 384.7l9.3 10 5.8 3.9-9.5-12.6z" color="#acabba"/>
<path d="M779.7 394.7l9.3 9.1 6 6.5-9.5-11.7z" color="#8ab0ba"/>
<path d="M789.0 403.8l9.1 6.2 6.1 8.3-9.2-8z" color="#71b5ba"/>
<path d="M798.1 410.0l8.8 1.9 6.1 8-8.8-1.6z" color="#68baba"/>
<path d="M806.9 411.9l8.6-2.3 5.9 5.7-8.4 4.6z" color="#73bfba"/>
<path d="M815.5 409.6l8.3-5.1 5.7 3-8.1 7.8z" color="#8dc4ba"/>
<path d="M823.8 404.5l8.3-5.6 5.6 .2-8.2 8.4z" color="#aec9ba"/>
<path d="M832.1 398.9l8.4-4.5 5.4-2.1-8.2 6.8z" color="#cdcfba"/>
<path d="M840.5 394.4l8.6-2.3 5.2-3.9-8.4 4.1z" color="#e6d4ba"/>
<path d="M849.1 392.1l8.7 .7 5.2-5.4-8.7 .8z" color="#f4d9ba"/>
<path d="M857.8 392.8l8.9 3.4 5.1-6.2-8.8-2.6z" color="#f6deba"/>
<path d="M866.7 396.2l9.1 5.9 5.1-6.6-9.1-5.5z" color="#ede3ba"/>
<path d="M875.8 402.1l9.2 7.6 5.1-6.8-9.2-7.4z" color="#dce8ba"/>
<path d="M885.0 409.7l9.3 8.3 5-6.6-9.2-8.5z" color="#c5edba"/>
<path d="M894.3 418.0l9.2 8.2 5.1-6.3-9.3-8.5z" color="#adf2ba"/>
<path d="M903.5 426.2l9.2 7.3 5.1-6-9.2-7.6z" color="#97f7ba"/>
<path d="M912.7 433.5l9 5.8 5.2-5.6-9.1-6.2z" color="#86fcba"/>
<path d="M484.9 322.2l8.9 3.2 5.1-6.2-8.9-3.1z" color="#a503bf"/>
<path d="M493.8 325.4l8.9 3.2 5.1-6.3-8.9-3.1z" color="#a108bf"/>
<path d="M502.7 328.6l8.9 3 5.1-6.5-8.9-2.8z" color="#9d0dbf"/>
<path d="M511.6 331.6l8.9 2.7 5.1-6.6-8.9-2.6z" color="#9a12bf"/>
<path d="M520.5 334.3l8.8 2.2 5.1-6.6-8.8-2.2z" color="#9917bf"/>
<path d="M529.3 336.5l8.8 1.8 5.1-6.7-8.8-1.7z" color="#991cbf"/>
<path d="M538.1 338.3l8.8 1.2 5.1-6.8-8.8-1.1z" color="#9b21bf"/>
<path d="M546.9 339.5l8.7 .7 5.1-6.7-8.7-.8z" color="#9f26bf"/>
<path d="M555.6 340.2l8.8 .5 5-6.8-8.7-.4z" color="#a52bbf"/>
<path d="M564.4 340.7l8.7 .3 5.1-6.8-8.8-.3z" color="#ab30bf"/>
<path d="M573.1 341.0l8.7 .5 5.1-6.8-8.7-.5z" color="#b136bf"/>
<path d="M581.8 341.5l8.8 .9 5-6.7-8.7-1z" color="#b63bbf"/>
<path d="M590.6 342.4l8.7 1.5 5.1-6.6-8.8-1.6z" color="#b940bf"/>
<path d="M599.3 343.9l8.9 2.3 5.1-6.3-8.9-2.6z" color="#b945bf"/>
<path d="M608.2 346.2l8.9 3.3 5.1-6.2-8.9-3.4z" color="#b64abf"/>
<path d="M617.1 349.5l9 4.1 5.1-6-9-4.3z" color="#af4fbf"/>
<path d="M626.1 353.6l9 4.7 5.1-5.8-9-4.9z" color="#a654bf"/>
<path d="M635.1 358.3l9 5 5.1-5.7-9-5.1z" color="#9b59bf"/>
<path d="M644.1 363.3l9 4.7 5.2-5.5-9.1-4.9z" color="#905ebf"/>
<path d="M653.1 368.0l9 4.1 5.1-5.4-8.9-4.2z" color="#8663bf"/>
<path d="M662.1 372.1l8.8 2.9 5.2-5.3-8.9-3z" color="#8169bf"/>
<path d="M670.9 375.0l8.8 1.3 5.2-5.3-8.8-1.3z" color="#816ebf"/>
<path d="M679.7 376.3l8.7-.5 5.2-5.3-8.7 .5z" color="#8773bf"/>
<path d="M688.4 375.8l8.5-2.1 5.2-5.4-8.5 2.2z" color="#9378bf"/>
<path d="M696.9 373.7l8.5-3.5 5.2-5.4-8.5 3.5z" color="#a57dbf"/>
<path d="M705.4 370.2l8.4-4.2 5.2-5.3-8.4 4.1z" color="#bb82bf"/>
<path d="M713.8 366.0l8.4-4 5.2-5.3-8.4 4z" color="#d287bf"/>
<path d="M722.2 362.0l8.5-2.8 5.2-5.1-8.5 2.6z" color="#e78cbf"/>
<path d="M730.7 359.2l8.7-.8 5.2-4.7-8.7 .4z" color="#f591bf"/>
<path d="M739.4 358.4l8.8 2.1 5.3-4.1-8.9-2.7z" color="#f996bf"/>
<path d="M748.2 360.5l9.1 5.5 5.3-3.2-9.1-6.4z" color="#f19cbf"/>
<path d="M757.3 366.0l9.2 8.7 5.4-1.9-9.3-10z" color="#dca1bf"/>
<path d="M766.5 374.7l9.5 11.3 5.5-.3-9.6-12.9z" color="#bba6bf"/>
<path d="M776.0 386.0l9.5 12.6 5.6 1.7-9.6-14.6z" color="#92abbf"/>
<path d="M785.5 398.6l9.5 11.7 5.8 4.3-9.7-14.3z" color="#68b0bf"/>
<path d="M795.0 410.3l9.2 8 6 7-9.4-10.7z" color="#45b5bf"/>
<path d="M804.2 418.3l8.8 1.6 5.9 6.6-8.7-1.2z" color="#38babf"/>
<path d="M813.0 419.9l8.4-4.6 5.7 3.6-8.2 7.6z" color="#49bfbf"/>
<path d="M821.4 415.3l8.1-7.8 5.6 .9-8 10.5z" color="#6dc4bf"/>
<path d="M829.5 407.5l8.2-8.4 5.4-1.2-8 10.5z" color="#98c9bf"/>
<path d="M837.7 399.1l8.2-6.8 5.3-3-8.1 8.6z" color="#c0cfbf"/>
<path d="M845.9 392.3l8.4-4.1 5.3-4.3-8.4 5.4z" color="#dfd4bf"/>
<path d="M854.3 388.2l8.7-.8 5.2-5.1-8.6 1.6z" color="#f2d9bf"/>
<path d="M863.0 387.4l8.8 2.6 5.2-5.7-8.8-2z" color="#f7debf"/>
<path d="M871.8 390.0l9.1 5.5 5.1-6-9-5.2z" color="#f1e3bf"/>
<path d="M880.9 395.5l9.2 7.4 5.1-6.1-9.2-7.3z" color="#e0e8bf"/>
<path d="M890.1 402.9l9.2 8.5 5.2-6-9.3-8.6z" color="#caedbf"/>
<path d="M899.3 411.4l9.3 8.5 5.1-5.8-9.2-8.7z" color="#b1f2bf"/>
<path d="M908.6 419.9l9.2 7.6 5.1-5.6-9.2-7.8z" color="#9af7bf"/>
<path d="M917.8 427.5l9.1 6.2 5.2-5.3-9.2-6.5z" color="#87fcbf"/>
<path d="M490.0 316.1l8.9 3.1 5.2-5.7-8.9-2.9z" color="#a803c4"/>
<path d="M498.9 319.2l8.9 3.1 5.2-5.9-8.9-2.9z" color="#a408c4"/>
<path d="M507.8 322.3l8.9 2.8 5.1-5.9-8.8-2.8z" color="#a10dc4"/>
<path d="M516.7 325.1l8.9 2.6 5.1-6-8.9-2.5z" color="#9f12c4"/>
<path d="M525.6 327.7l8.8 2.2 5.1-6.2-8.8-2z" color="#9d17c4"/>
<path d="M534.4 329.9l8.8 1.7 5.1-6.2-8.8-1.7z" color="#9e1cc4"/>
<path d="M543.2 331.6l8.8 1.1 5.1-6.2-8.8-1.1z" color="#a021c4"/>
<path d="M552.0 332.7l8.7 .8 5.1-6.3-8.7-.7z" color="#a426c4"/>
<path d="M560.7 333.5l8.7 .4 5.1-6.3-8.7-.4z" color="#aa2bc4"/>
<path d="M569.4 333.9l8.8 .3 5.1-6.2-8.8-.4z" color="#b030c4"/>
<path d="M578.2 334.2l8.7 .5 5.1-6.2-8.7-.5z" color="#b636c4"/>
<path d="M586.9 334.7l8.7 1 5.2-6.2-8.8-1z" color="#bb3bc4"/>
<path d="M595.6 335.7l8.8 1.6 5.2-6-8.8-1.8z" color="#bd40c4"/>
<path d="M604.4 337.3l8.9 2.6 5.1-6-8.8-2.6z" color="#bd45c4"/>
<path d="M613.3 339.9l8.9 3.4 5.2-5.8-9-3.6z" color="#b94ac4"/>
<path d="M622.2 343.3l9 4.3 5.1-5.7-8.9-4.4z" color="#b24fc4"/>
<path d="M631.2 347.6l9 4.9 5.2-5.6-9.1-5z" color="#a854c4"/>
<path d="M640.2 352.5l9 5.1 5.2-5.3-9-5.4z" color="#9d59c4"/>
<path d="M649.2 357.6l9.1 4.9 5.1-5.2-9-5z" color="#915ec4"/>
<path d="M658.3 362.5l8.9 4.2 5.2-5-9-4.4z" color="#8763c4"/>
<path d="M667.2 366.7l8.9 3 5.2-5-8.9-3z" color="#8169c4"/>
<path d="M676.1 369.7l8.8 1.3 5.2-4.8-8.8-1.5z" color="#806ec4"/>
<path d="M684.9 371.0l8.7-.5 5.2-4.7-8.7 .4z" color="#8673c4"/>
<path d="M693.6 370.5l8.5-2.2 5.2-4.6-8.5 2.1z" color="#9378c4"/>
<path d="M702.1 368.3l8.5-3.5 5.2-4.6-8.5 3.5z" color="#a57dc4"/>
<path d="M710.6 364.8l8.4-4.1 5.2-4.7-8.4 4.2z" color="#bb82c4"/>
<path d="M719.0 360.7l8.4-4 5.2-4.6-8.4 3.9z" color="#d287c4"/>
<path d="M727.4 356.7l8.5-2.6 5.2-4.6-8.5 2.6z" color="#e68cc4"/>
<path d="M735.9 354.1l8.7-.4 5.2-4.5-8.7 .3z" color="#f391c4"/>
<path d="M744.6 353.7l8.9 2.7 5.2-4.3-8.9-2.9z" color="#f696c4"/>
<path d="M753.5 356.4l9.1 6.4 5.2-4.1-9.1-6.6z" color="#ec9cc4"/>
<path d="M762.6 362.8l9.3 10 5.3-3.9-9.4-10.2z" color="#d5a1c4"/>
<path d="M771.9 372.8l9.6 12.9 5.3-3.4-9.6-13.4z" color="#b0a6c4"/>
<path d="M781.5 385.7l9.6 14.6 5.4-2.8-9.7-15.2z" color="#83abc4"/>
<path d="M791.1 400.3l9.7 14.3 5.4-1.8-9.7-15.3z" color="#53b0c4"/>
<path d="M800.8 414.6l9.4 10.7 9.1 4.9-13.1-17.4z" color="#25b5c4"/>
<path d="M810.2 425.3l8.7 1.2 5.6 .3-5.2 3.4z" color="#15bac4"/>
<path d="M818.9 426.5l8.2-7.6 5.4-2.2-8 10.1z" color="#2ebfc4"/>
<path d="M827.1 418.9l8-10.5 5.3-3.4-7.9 11.7z" color="#5bc4c4"/>
<path d="M835.1 408.4l8-10.5 5.3-4.1-8 11.2z" color="#8cc9c4"/>
<path d="M843.1 397.9l8.1-8.6 5.3-4.6-8.1 9.1z" color="#b9cfc4"/>
<path d="M851.2 389.3l8.4-5.4 5.2-5-8.3 5.8z" color="#dcd4c4"/>
<path d="M859.6 383.9l8.6-1.6 5.1-5.2-8.5 1.8z" color="#f1d9c4"/>
<path d="M868.2 382.3l8.8 2 5.2-5.4-8.9-1.8z" color="#f8dec4"/>
<path d="M877.0 384.3l9 5.2 5.2-5.5-9-5.1z" color="#f3e3c4"/>
<path d="M886.0 389.5l9.2 7.3 5.2-5.4-9.2-7.4z" color="#e3e8c4"/>
<path d="M895.2 396.8l9.3 8.6 5.1-5.4-9.2-8.6z" color="#ccedc4"/>
<path d="M904.5 405.4l9.2 8.7 5.2-5.3-9.3-8.8z" color="#b3f2c4"/>
<path d="M913.7 414.1l9.2 7.8 5.2-5.1-9.2-8z" color="#9cf7c4"/>
<path d="M922.9 421.9l9.2 6.5 5.1-5.1-9.1-6.5z" color="#88fcc4"/>
<path d="M495.2 310.6l8.9 2.9 5.2-5.2-8.9-2.8z" color="#a903c9"/>
<path d="M504.1 313.5l8.9 2.9 5.1-5.3-8.8-2.8z" color="#a608c9"/>
<path d="M513.0 316.4l8.8 2.8 5.2-5.5-8.9-2.6z" color="#a30dc9"/>
<path d="M521.8 319.2l8.9 2.5 5.2-5.6-8.9-2.4z" color="#a112c9"/>
<path d="M530.7 321.7l8.8 2 5.2-5.6-8.8-2z" color="#a017c9"/>
<path d="M539.5 323.7l8.8 1.7 5.2-5.7-8.8-1.6z" color="#a11cc9"/>
<path d="M548.3 325.4l8.8 1.1 5.1-5.7-8.7-1.1z" color="#a321c9"/>
<path d="M557.1 326.5l8.7 .7 5.2-5.7-8.8-.7z" color="#a826c9"/>
<path d="M565.8 327.2l8.7 .4 5.2-5.7-8.7-.4z" color="#ad2bc9"/>
<path d="M574.5 327.6l8.8 .4 5.1-5.7-8.7-.4z" color="#b330c9"/>
<path d="M583.3 328.0l8.7 .5 5.1-5.6-8.7-.6z" color="#b936c9"/>
<path d="M592.0 328.5l8.8 1 5.1-5.6-8.8-1z" color="#be3bc9"/>
<path d="M600.8 329.5l8.8 1.8 5.1-5.6-8.8-1.8z" color="#c040c9"/>
<path d="M609.6 331.3l8.8 2.6 5.2-5.5-8.9-2.7z" color="#bf45c9"/>
<path d="M618.4 333.9l9 3.6 5.1-5.4-8.9-3.7z" color="#bb4ac9"/>
<path d="M627.4 337.5l8.9 4.4 5.2-5.3-9-4.5z" color="#b44fc9"/>
<path d="M636.3 341.9l9.1 5 5.1-5.1-9-5.2z" color="#a954c9"/>
<path d="M645.4 346.9l9 5.4 5.2-5.1-9.1-5.4z" color="#9d59c9"/>
<path d="M654.4 352.3l9 5 5.2-4.9-9-5.2z" color="#915ec9"/>
<path d="M663.4 357.3l9 4.4 5.2-4.8-9-4.5z" color="#8763c9"/>
<path d="M672.4 361.7l8.9 3 5.2-4.5-8.9-3.3z" color="#8069c9"/>
<path d="M681.3 364.7l8.8 1.5 5.2-4.4-8.8-1.6z" color="#7f6ec9"/>
<path d="M690.1 366.2l8.7-.4 5.2-4.2-8.7 .2z" color="#8473c9"/>
<path d="M698.8 365.8l8.5-2.1 5.3-4.1-8.6 2z" color="#9078c9"/>
<path d="M707.3 363.7l8.5-3.5 5.2-4-8.4 3.4z" color="#a27dc9"/>
<path d="M715.8 360.2l8.4-4.2 5.3-3.9-8.5 4.1z" color="#b882c9"/>
<path d="M724.2 356.0l8.4-3.9 5.3-3.9-8.4 3.9z" color="#cf87c9"/>
<path d="M732.6 352.1l8.5-2.6 5.3-4.1-8.5 2.8z" color="#e38cc9"/>
<path d="M741.1 349.5l8.7-.3 5.2-4.4-8.6 .6z" color="#f091c9"/>
<path d="M749.8 349.2l8.9 2.9 5.2-4.8-8.9-2.5z" color="#f496c9"/>
<path d="M758.7 352.1l9.1 6.6 5.2-5.4-9.1-6z" color="#ea9cc9"/>
<path d="M767.8 358.7l9.4 10.2 5.1-6.1-9.3-9.5z" color="#d4a1c9"/>
<path d="M777.2 368.9l9.6 13.4 5-7.1-9.5-12.4z" color="#b0a6c9"/>
<path d="M786.8 382.3l9.7 15.2 4.9-8.3-9.6-14z" color="#84abc9"/>
<path d="M796.5 397.5l9.7 15.3 4.8-9.9-9.6-13.7z" color="#55b0c9"/>
<path d="M806.2 412.8l13.1 17.4 1.1-17.4-9.4-9.9z" color="#29b5c9"/>
<path d="M819.3 430.2l5.2-3.4 4.7-12.9-8.8-1.1z" color="#19bac9"/>
<path d="M824.5 426.8l8-10.1 4.9-9.9-8.2 7.1z" color="#32bfc9"/>
<path d="M832.5 416.7l7.9-11.7 5-8.4-8 10.2z" color="#5ec4c9"/>
<path d="M840.4 405.0l8-11.2 5-7.4-8 10.2z" color="#8fc9c9"/>
<path d="M848.4 393.8l8.1-9.1 5.1-6.6-8.2 8.3z" color="#bbcfc9"/>
<path d="M856.5 384.7l8.3-5.8 5.1-5.9-8.3 5.1z" color="#ddd4c9"/>
<path d="M864.8 378.9l8.5-1.8 5.2-5.5-8.6 1.4z" color="#f2d9c9"/>
<path d="M873.3 377.1l8.9 1.8 5.1-5-8.8-2.3z" color="#f9dec9"/>
<path d="M882.2 378.9l9 5.1 5.2-4.8-9.1-5.3z" color="#f3e3c9"/>
<path d="M891.2 384.0l9.2 7.4 5.2-4.7-9.2-7.5z" color="#e2e8c9"/>
<path d="M900.4 391.4l9.2 8.6 5.2-4.6-9.2-8.7z" color="#ccedc9"/>
<path d="M909.6 400.0l9.3 8.8 5.2-4.7-9.3-8.7z" color="#b3f2c9"/>
<path d="M918.9 408.8l9.2 8 5.2-4.8-9.2-7.9z" color="#9bf7c9"/>
<path d="M928.1 416.8l9.1 6.5 5.3-4.9-9.2-6.4z" color="#87fcc9"/>
<path d="M500.4 305.5l8.9 2.8 5.2-4.8-8.9-2.7z" color="#a803cf"/>
<path d="M509.3 308.3l8.8 2.8 5.2-4.9-8.8-2.7z" color="#a608cf"/>
<path d="M518.1 311.1l8.9 2.6 5.2-4.9-8.9-2.6z" color="#a30dcf"/>
<path d="M527.0 313.7l8.9 2.4 5.1-5-8.8-2.3z" color="#a112cf"/>
<path d="M535.9 316.1l8.8 2 5.2-5-8.9-2z" color="#a117cf"/>
<path d="M544.7 318.1l8.8 1.6 5.2-5.1-8.8-1.5z" color="#a21ccf"/>
<path d="M553.5 319.7l8.7 1.1 5.2-5.1-8.7-1.1z" color="#a421cf"/>
<path d="M562.2 320.8l8.8 .7 5.2-5.1-8.8-.7z" color="#a926cf"/>
<path d="M571.0 321.5l8.7 .4 5.2-5.1-8.7-.4z" color="#ae2bcf"/>
<path d="M579.7 321.9l8.7 .4 5.2-5.1-8.7-.4z" color="#b430cf"/>
<path d="M588.4 322.3l8.7 .6 5.2-5.1-8.7-.6z" color="#ba36cf"/>
<path d="M597.1 322.9l8.8 1 5.2-5-8.8-1.1z" color="#bf3bcf"/>
<path d="M605.9 323.9l8.8 1.8 5.2-5-8.8-1.8z" color="#c140cf"/>
<path d="M614.7 325.7l8.9 2.7 5.2-5-8.9-2.7z" color="#c045cf"/>
<path d="M623.6 328.4l8.9 3.7 5.2-5.1-8.9-3.6z" color="#bc4acf"/>
<path d="M632.5 332.1l9 4.5 5.2-5-9-4.6z" color="#b44fcf"/>
<path d="M641.5 336.6l9 5.2 5.2-5-9-5.2z" color="#a954cf"/>
<path d="M650.5 341.8l9.1 5.4 5.2-4.9-9.1-5.5z" color="#9d59cf"/>
<path d="M659.6 347.2l9 5.2 5.2-4.7-9-5.4z" color="#905ecf"/>
<path d="M668.6 352.4l9 4.5 5.2-4.6-9-4.6z" color="#8563cf"/>
<path d="M677.6 356.9l8.9 3.3 5.3-4.4-9-3.5z" color="#7e69cf"/>
<path d="M686.5 360.2l8.8 1.6 5.3-4.2-8.8-1.8z" color="#7c6ecf"/>
<path d="M695.3 361.8l8.7-.2 5.3-3.9-8.7-.1z" color="#8073cf"/>
<path d="M704.0 361.6l8.6-2 5.2-3.6-8.5 1.7z" color="#8c78cf"/>
<path d="M712.6 359.6l8.4-3.4 5.3-3.4-8.5 3.2z" color="#9d7dcf"/>
<path d="M721.0 356.2l8.5-4.1 5.3-3.3-8.5 4z" color="#b282cf"/>
<path d="M729.5 352.1l8.4-3.9 5.3-3.4-8.4 4z" color="#c987cf"/>
<path d="M737.9 348.2l8.5-2.8 5.3-3.7-8.5 3.1z" color="#de8ccf"/>
<path d="M746.4 345.4l8.6-.6 5.3-4.2-8.6 1.1z" color="#ec91cf"/>
<path d="M755.0 344.8l8.9 2.5 5.2-5.1-8.8-1.6z" color="#f296cf"/>
<path d="M763.9 347.3l9.1 6 5.1-6.3-9-4.8z" color="#ec9ccf"/>
<path d="M773.0 353.3l9.3 9.5 5-7.9-9.2-7.9z" color="#d9a1cf"/>
<path d="M782.3 362.8l9.5 12.4 4.9-9.9-9.4-10.4z" color="#baa6cf"/>
<path d="M791.8 375.2l9.6 14 4.8-12.3-9.5-11.6z" color="#94abcf"/>
<path d="M801.4 389.2l9.6 13.7 4.6-15.3-9.4-10.7z" color="#6db0cf"/>
<path d="M811.0 402.9l9.4 9.9 4.3-18-9.1-7.2z" color="#4db5cf"/>
<path d="M820.4 412.8l8.8 1.1 4.3-17.8-8.8-1.3z" color="#43bacf"/>
<path d="M829.2 413.9l8.2-7.1 4.5-15-8.4 4.3z" color="#53bfcf"/>
<path d="M837.4 406.8l8-10.2 4.7-12.2-8.2 7.4z" color="#76c4cf"/>
<path d="M845.4 396.6l8-10.2 4.9-9.9-8.2 7.9z" color="#9fc9cf"/>
<path d="M853.4 386.4l8.2-8.3 4.9-8-8.2 6.4z" color="#c6cfcf"/>
<path d="M861.6 378.1l8.3-5.1 5.1-6.5-8.5 3.6z" color="#e3d4cf"/>
<path d="M869.9 373.0l8.6-1.4 5.2-5.4-8.7 .3z" color="#f5d9cf"/>
<path d="M878.5 371.6l8.8 2.3 5.3-4.7-8.9-3z" color="#f9decf"/>
<path d="M887.3 373.9l9.1 5.3 5.2-4.2-9-5.8z" color="#f1e3cf"/>
<path d="M896.4 379.2l9.2 7.5 5.2-4-9.2-7.7z" color="#e0e8cf"/>
<path d="M905.6 386.7l9.2 8.7 5.3-4-9.3-8.7z" color="#c9edcf"/>
<path d="M914.8 395.4l9.3 8.7 5.3-4.1-9.3-8.6z" color="#b0f2cf"/>
<path d="M924.1 404.1l9.2 7.9 5.3-4.4-9.2-7.6z" color="#99f7cf"/>
<path d="M933.3 412.0l9.2 6.4 5.2-4.6-9.1-6.2z" color="#86fccf"/>
<path d="M505.6 300.8l8.9 2.7 5.2-4.5-8.9-2.6z" color="#a603d4"/>
<path d="M514.5 303.5l8.8 2.7 5.3-4.6-8.9-2.6z" color="#a408d4"/>
<path d="M523.3 306.2l8.9 2.6 5.2-4.6-8.8-2.6z" color="#a20dd4"/>
<path d="M532.2 308.8l8.8 2.3 5.3-4.6-8.9-2.3z" color="#a012d4"/>
<path d="M541.0 311.1l8.9 2 5.2-4.7-8.8-1.9z" color="#a017d4"/>
<path d="M549.9 313.1l8.8 1.5 5.2-4.6-8.8-1.6z" color="#a11cd4"/>
<path d="M558.7 314.6l8.7 1.1 5.2-4.6-8.7-1.1z" color="#a321d4"/>
<path d="M567.4 315.7l8.8 .7 5.2-4.6-8.8-.7z" color="#a826d4"/>
<path d="M576.2 316.4l8.7 .4 5.2-4.6-8.7-.4z" color="#ad2bd4"/>
<path d="M584.9 316.8l8.7 .4 5.2-4.6-8.7-.4z" color="#b330d4"/>
<path d="M593.6 317.2l8.7 .6 5.2-4.6-8.7-.6z" color="#b936d4"/>
<path d="M602.3 317.8l8.8 1.1 5.2-4.6-8.8-1.1z" color="#bd3bd4"/>
<path d="M611.1 318.9l8.8 1.8 5.2-4.6-8.8-1.8z" color="#c040d4"/>
<path d="M619.9 320.7l8.9 2.7 5.2-4.7-8.9-2.6z" color="#bf45d4"/>
<path d="M628.8 323.4l8.9 3.6 5.2-4.7-8.9-3.6z" color="#bb4ad4"/>
<path d="M637.7 327.0l9 4.6 5.2-4.8-9-4.5z" color="#b34fd4"/>
<path d="M646.7 331.6l9 5.2 5.2-4.8-9-5.2z" color="#a854d4"/>
<path d="M655.7 336.8l9.1 5.5 5.2-4.8-9.1-5.5z" color="#9c59d4"/>
<path d="M664.8 342.3l9 5.4 5.3-4.8-9.1-5.4z" color="#8f5ed4"/>
<path d="M673.8 347.7l9 4.6 5.3-4.5-9-4.9z" color="#8363d4"/>
<path d="M682.8 352.3l9 3.5 5.2-4.3-8.9-3.7z" color="#7b69d4"/>
<path d="M691.8 355.8l8.8 1.8 5.2-4-8.8-2.1z" color="#786ed4"/>
<path d="M700.6 357.6l8.7 .1 5.3-3.7-8.8-.4z" color="#7c73d4"/>
<path d="M709.3 357.7l8.5-1.7 5.4-3.4-8.6 1.4z" color="#8678d4"/>
<path d="M717.8 356.0l8.5-3.2 5.4-3-8.5 2.8z" color="#967dd4"/>
<path d="M726.3 352.8l8.5-4 5.3-2.9-8.4 3.9z" color="#ab82d4"/>
<path d="M734.8 348.8l8.4-4 5.3-2.9-8.4 4z" color="#c287d4"/>
<path d="M743.2 344.8l8.5-3.1 5.3-3.2-8.5 3.4z" color="#d78cd4"/>
<path d="M751.7 341.7l8.6-1.1 5.3-3.9-8.6 1.8z" color="#e791d4"/>
<path d="M760.3 340.6l8.8 1.6 5.2-5.1-8.7-.4z" color="#f096d4"/>
<path d="M769.1 342.2l9 4.8 5.1-6.7-8.9-3.2z" color="#ee9cd4"/>
<path d="M778.1 347.0l9.2 7.9 5-8.8-9.1-5.8z" color="#e1a1d4"/>
<path d="M787.3 354.9l9.4 10.4 4.8-11.3-9.2-7.9z" color="#cba6d4"/>
<path d="M796.7 365.3l9.5 11.6 4.5-14.1-9.2-8.8z" color="#aeabd4"/>
<path d="M806.2 376.9l9.4 10.7 4.4-16.8-9.3-8z" color="#91b0d4"/>
<path d="M815.6 387.6l9.1 7.2 4.3-18.6-9-5.4z" color="#7bb5d4"/>
<path d="M824.7 394.8l8.8 1.3 4.3-18.5-8.8-1.4z" color="#74bad4"/>
<path d="M833.5 396.1l8.4-4.3 4.4-16.5-8.5 2.3z" color="#7fbfd4"/>
<path d="M841.9 391.8l8.2-7.4 4.6-13.8-8.4 4.7z" color="#99c4d4"/>
<path d="M850.1 384.4l8.2-7.9 4.8-11.1-8.4 5.2z" color="#b8c9d4"/>
<path d="M858.3 376.5l8.2-6.4 5-8.6-8.4 3.9z" color="#d6cfd4"/>
<path d="M866.5 370.1l8.5-3.6 5.1-6.7-8.6 1.7z" color="#ecd4d4"/>
<path d="M875.0 366.5l8.7-.3 5.2-5.2-8.8-1.2z" color="#f8d9d4"/>
<path d="M883.7 366.2l8.9 3 5.2-4.1-8.9-4.1z" color="#f8ded4"/>
<path d="M892.6 369.2l9 5.8 5.3-3.6-9.1-6.3z" color="#ede3d4"/>
<path d="M901.6 375.0l9.2 7.7 5.3-3.3-9.2-8z" color="#dbe8d4"/>
<path d="M910.8 382.7l9.3 8.7 5.3-3.4-9.3-8.6z" color="#c3edd4"/>
<path d="M920.1 391.4l9.3 8.6 5.2-3.7-9.2-8.3z" color="#abf2d4"/>
<path d="M929.4 400.0l9.2 7.6 5.2-4-9.2-7.3z" color="#94f7d4"/>
<path d="M938.6 407.6l9.1 6.2 5.2-4.4-9.1-5.8z" color="#83fcd4"/>
<path d="M510.8 296.4l8.9 2.6 5.2-4.3-8.8-2.6z" color="#a403d9"/>
<path d="M519.7 299.0l8.9 2.6 5.2-4.3-8.9-2.6z" color="#a108d9"/>
<path d="M528.6 301.6l8.8 2.6 5.2-4.4-8.8-2.5z" color="#9f0dd9"/>
<path d="M537.4 304.2l8.9 2.3 5.2-4.4-8.9-2.3z" color="#9e12d9"/>
<path d="M546.3 306.5l8.8 1.9 5.2-4.3-8.8-2z" color="#9d17d9"/>
<path d="M555.1 308.4l8.8 1.6 5.2-4.3-8.8-1.6z" color="#9e1cd9"/>
<path d="M563.9 310.0l8.7 1.1 5.3-4.3-8.8-1.1z" color="#a121d9"/>
<path d="M572.6 311.1l8.8 .7 5.2-4.2-8.7-.8z" color="#a526d9"/>
<path d="M581.4 311.8l8.7 .4 5.2-4.2-8.7-.4z" color="#aa2bd9"/>
<path d="M590.1 312.2l8.7 .4 5.3-4.1-8.8-.5z" color="#b030d9"/>
<path d="M598.8 312.6l8.7 .6 5.3-4.2-8.7-.5z" color="#b636d9"/>
<path d="M607.5 313.2l8.8 1.1 5.3-4.3-8.8-1z" color="#bb3bd9"/>
<path d="M616.3 314.3l8.8 1.8 5.3-4.4-8.8-1.7z" color="#bd40d9"/>
<path d="M625.1 316.1l8.9 2.6 5.2-4.5-8.8-2.5z" color="#bd45d9"/>
<path d="M634.0 318.7l8.9 3.6 5.2-4.6-8.9-3.5z" color="#b94ad9"/>
<path d="M642.9 322.3l9 4.5 5.2-4.7-9-4.4z" color="#b14fd9"/>
<path d="M651.9 326.8l9 5.2 5.2-4.8-9-5.1z" color="#a754d9"/>
<path d="M660.9 332.0l9.1 5.5 5.2-4.8-9.1-5.5z" color="#9b59d9"/>
<path d="M670.0 337.5l9.1 5.4 5.2-4.8-9.1-5.4z" color="#8e5ed9"/>
<path d="M679.1 342.9l9 4.9 5.2-4.7-9-5z" color="#8263d9"/>
<path d="M688.1 347.8l8.9 3.7 5.2-4.5-8.9-3.9z" color="#7969d9"/>
<path d="M697.0 351.5l8.8 2.1 5.3-4.1-8.9-2.5z" color="#756ed9"/>
<path d="M705.8 353.6l8.8 .4 5.2-3.6-8.7-.9z" color="#7773d9"/>
<path d="M714.6 354.0l8.6-1.4 5.3-3.2-8.7 1z" color="#8078d9"/>
<path d="M723.2 352.6l8.5-2.8 5.3-2.8-8.5 2.4z" color="#8f7dd9"/>
<path d="M731.7 349.8l8.4-3.9 5.4-2.5-8.5 3.6z" color="#a282d9"/>
<path d="M740.1 345.9l8.4-4 5.4-2.5-8.4 4z" color="#b887d9"/>
<path d="M748.5 341.9l8.5-3.4 5.3-2.7-8.4 3.6z" color="#ce8cd9"/>
<path d="M757.0 338.5l8.6-1.8 5.3-3.4-8.6 2.5z" color="#e191d9"/>
<path d="M765.6 336.7l8.7 .4 5.2-4.5-8.6 .7z" color="#ed96d9"/>
<path d="M774.3 337.1l8.9 3.2 5.1-6.3-8.8-1.4z" color="#f09cd9"/>
<path d="M783.2 340.3l9.1 5.8 4.9-8.4-8.9-3.7z" color="#eaa1d9"/>
<path d="M792.3 346.1l9.2 7.9 4.8-11-9.1-5.3z" color="#dda6d9"/>
<path d="M801.5 354.0l9.2 8.8 4.7-13.7-9.1-6.1z" color="#caabd9"/>
<path d="M810.7 362.8l9.3 8 4.4-16-9-5.7z" color="#b6b0d9"/>
<path d="M820.0 370.8l9 5.4 4.4-17.3-9-4.1z" color="#a8b5d9"/>
<path d="M829.0 376.2l8.8 1.4 4.4-17.2-8.8-1.5z" color="#a4bad9"/>
<path d="M837.8 377.6l8.5-2.3 4.5-15.7-8.6 .8z" color="#acbfd9"/>
<path d="M846.3 375.3l8.4-4.7 4.7-13.3-8.6 2.3z" color="#bdc4d9"/>
<path d="M854.7 370.6l8.4-5.2 4.8-10.6-8.5 2.5z" color="#d3c9d9"/>
<path d="M863.1 365.4l8.4-3.9 5-8.1-8.6 1.4z" color="#e6cfd9"/>
<path d="M871.5 361.5l8.6-1.7 5.1-5.9-8.7-.5z" color="#f4d4d9"/>
<path d="M880.1 359.8l8.8 1.2 5.2-4.3-8.9-2.8z" color="#f9d9d9"/>
<path d="M888.9 361.0l8.9 4.1 5.3-3.4-9-5z" color="#f5ded9"/>
<path d="M897.8 365.1l9.1 6.3 5.4-2.7-9.2-7z" color="#e7e3d9"/>
<path d="M906.9 371.4l9.2 8 5.4-2.7-9.2-8z" color="#d3e8d9"/>
<path d="M916.1 379.4l9.3 8.6 5.3-2.9-9.2-8.4z" color="#bcedd9"/>
<path d="M925.4 388.0l9.2 8.3 5.4-3.3-9.3-7.9z" color="#a4f2d9"/>
<path d="M934.6 396.3l9.2 7.3 5.3-3.8-9.1-6.8z" color="#8ff7d9"/>
<path d="M943.8 403.6l9.1 5.8 5.2-4.4-9-5.2z" color="#7ffcd9"/>
<path d="M516.1 292.1l8.8 2.6 5.3-4.4-8.9-2.5z" color="#a103de"/>
<path d="M524.9 294.7l8.9 2.6 5.2-4.3-8.8-2.7z" color="#9e08de"/>
<path d="M533.8 297.3l8.8 2.5 5.3-4.3-8.9-2.5z" color="#9c0dde"/>
<path d="M542.6 299.8l8.9 2.3 5.2-4.2-8.8-2.4z" color="#9b12de"/>
<path d="M551.5 302.1l8.8 2 5.3-4.2-8.9-2z" color="#9a17de"/>
<path d="M560.3 304.1l8.8 1.6 5.3-4.1-8.8-1.7z" color="#9b1cde"/>
<path d="M569.1 305.7l8.8 1.1 5.2-4-8.7-1.2z" color="#9d21de"/>
<path d="M577.9 306.8l8.7 .8 5.3-4-8.8-.8z" color="#a126de"/>
<path d="M586.6 307.6l8.7 .4 5.3-3.9-8.7-.5z" color="#a72bde"/>
<path d="M595.3 308.0l8.8 .5 5.2-4-8.7-.4z" color="#ac30de"/>
<path d="M604.1 308.5l8.7 .5 5.3-3.9-8.8-.6z" color="#b236de"/>
<path d="M612.8 309.0l8.8 1 5.2-4-8.7-.9z" color="#b73bde"/>
<path d="M621.6 310.0l8.8 1.7 5.2-4.1-8.8-1.6z" color="#ba40de"/>
<path d="M630.4 311.7l8.8 2.5 5.3-4.3-8.9-2.3z" color="#ba45de"/>
<path d="M639.2 314.2l8.9 3.5 5.3-4.5-8.9-3.3z" color="#b64ade"/>
<path d="M648.1 317.7l9 4.4 5.2-4.8-8.9-4.1z" color="#b04fde"/>
<path d="M657.1 322.1l9 5.1 5.2-5-9-4.9z" color="#a654de"/>
<path d="M666.1 327.2l9.1 5.5 5.2-5.1-9.1-5.4z" color="#9a59de"/>
<path d="M675.2 332.7l9.1 5.4 5.1-5-9-5.5z" color="#8d5ede"/>
<path d="M684.3 338.1l9 5 5.2-5-9.1-5z" color="#8163de"/>
<path d="M693.3 343.1l8.9 3.9 5.2-4.7-8.9-4.2z" color="#7769de"/>
<path d="M702.2 347.0l8.9 2.5 5.2-4.3-8.9-2.9z" color="#726ede"/>
<path d="M711.1 349.5l8.7 .9 5.3-3.9-8.8-1.3z" color="#7373de"/>
<path d="M719.8 350.4l8.7-1 5.3-3.2-8.7 .3z" color="#7a78de"/>
<path d="M728.5 349.4l8.5-2.4 5.3-2.7-8.5 1.9z" color="#867dde"/>
<path d="M737.0 347.0l8.5-3.6 5.3-2.2-8.5 3.1z" color="#9882de"/>
<path d="M745.5 343.4l8.4-4 5.4-2-8.5 3.8z" color="#ae87de"/>
<path d="M753.9 339.4l8.4-3.6 5.4-2.1-8.4 3.7z" color="#c48cde"/>
<path d="M762.3 335.8l8.6-2.5 5.3-2.7-8.5 3.1z" color="#d791de"/>
<path d="M770.9 333.3l8.6-.7 5.3-3.7-8.6 1.7z" color="#e796de"/>
<path d="M779.5 332.6l8.8 1.4 5.2-5.2-8.7 .1z" color="#ef9cde"/>
<path d="M788.3 334.0l8.9 3.7 5.1-7.2-8.8-1.7z" color="#f1a1de"/>
<path d="M797.2 337.7l9.1 5.3 4.9-9.4-8.9-3.1z" color="#eba6de"/>
<path d="M806.3 343.0l9.1 6.1 4.7-11.6-8.9-3.9z" color="#e1abde"/>
<path d="M815.4 349.1l9 5.7 4.7-13.4-9-3.9z" color="#d7b0de"/>
<path d="M824.4 354.8l9 4.1 4.6-14.5-8.9-3z" color="#cfb5de"/>
<path d="M833.4 358.9l8.8 1.5 4.6-14.4-8.8-1.6z" color="#cdbade"/>
<path d="M842.2 360.4l8.6-.8 4.7-13.1-8.7-.5z" color="#d2bfde"/>
<path d="M850.8 359.6l8.6-2.3 4.7-11.2-8.6 .4z" color="#dcc4de"/>
<path d="M859.4 357.3l8.5-2.5 4.9-8.8-8.7 .1z" color="#e9c9de"/>
<path d="M867.9 354.8l8.6-1.4 5.1-6.7-8.8-.7z" color="#f3cfde"/>
<path d="M876.5 353.4l8.7 .5 5.2-4.8-8.8-2.4z" color="#f9d4de"/>
<path d="M885.2 353.9l8.9 2.8 5.3-3.3-9-4.3z" color="#f7d9de"/>
<path d="M894.1 356.7l9 5 5.4-2.4-9.1-5.9z" color="#eedede"/>
<path d="M903.1 361.7l9.2 7 5.4-2.1-9.2-7.3z" color="#dee3de"/>
<path d="M912.3 368.7l9.2 8 5.4-2-9.2-8.1z" color="#c9e8de"/>
<path d="M921.5 376.7l9.2 8.4 5.4-2.4-9.2-8z" color="#b2edde"/>
<path d="M930.7 385.1l9.3 7.9 5.3-3-9.2-7.3z" color="#9cf2de"/>
<path d="M940.0 393.0l9.1 6.8 5.3-3.7-9.1-6.1z" color="#89f7de"/>
<path d="M949.1 399.8l9 5.2 5.3-4.4-9-4.5z" color="#7bfcde"/>
<path d="M521.3 287.8l8.9 2.5 5.2-4.3-8.9-2.7z" color="#9e03e3"/>
<path d="M530.2 290.3l8.8 2.7 5.3-4.4-8.9-2.6z" color="#9b08e3"/>
<path d="M539.0 293.0l8.9 2.5 5.2-4.3-8.8-2.6z" color="#990de3"/>
<path d="M547.9 295.5l8.8 2.4 5.3-4.3-8.9-2.4z" color="#9712e3"/>
<path d="M556.7 297.9l8.9 2 5.2-4.2-8.8-2.1z" color="#9717e3"/>
<path d="M565.6 299.9l8.8 1.7 5.2-4.1-8.8-1.8z" color="#971ce3"/>
<path d="M574.4 301.6l8.7 1.2 5.3-4-8.8-1.3z" color="#9921e3"/>
<path d="M583.1 302.8l8.8 .8 5.2-3.9-8.7-.9z" color="#9d26e3"/>
<path d="M591.9 303.6l8.7 .5 5.3-3.9-8.8-.5z" color="#a22be3"/>
<path d="M600.6 304.1l8.7 .4 5.3-3.8-8.7-.5z" color="#a830e3"/>
<path d="M609.3 304.5l8.8 .6 5.2-3.9-8.7-.5z" color="#ae36e3"/>
<path d="M618.1 305.1l8.7 .9 5.3-3.9-8.8-.9z" color="#b23be3"/>
<path d="M626.8 306.0l8.8 1.6 5.3-4.2-8.8-1.3z" color="#b640e3"/>
<path d="M635.6 307.6l8.9 2.3 5.2-4.3-8.8-2.2z" color="#b645e3"/>
<path d="M644.5 309.9l8.9 3.3 5.2-4.6-8.9-3z" color="#b44ae3"/>
<path d="M653.4 313.2l8.9 4.1 5.2-4.8-8.9-3.9z" color="#ae4fe3"/>
<path d="M662.3 317.3l9 4.9 5.2-5.1-9-4.6z" color="#a554e3"/>
<path d="M671.3 322.2l9.1 5.4 5.2-5.3-9.1-5.2z" color="#9a59e3"/>
<path d="M680.4 327.6l9 5.5 5.2-5.4-9-5.4z" color="#8d5ee3"/>
<path d="M689.4 333.1l9.1 5 5.1-5.3-9-5.1z" color="#8163e3"/>
<path d="M698.5 338.1l8.9 4.2 5.2-5.1-9-4.4z" color="#7769e3"/>
<path d="M707.4 342.3l8.9 2.9 5.2-4.7-8.9-3.3z" color="#716ee3"/>
<path d="M716.3 345.2l8.8 1.3 5.3-4.1-8.9-1.9z" color="#7073e3"/>
<path d="M725.1 346.5l8.7-.3 5.3-3.5-8.7-.3z" color="#7478e3"/>
<path d="M733.8 346.2l8.5-1.9 5.4-2.8-8.6 1.2z" color="#7f7de3"/>
<path d="M742.3 344.3l8.5-3.1 5.4-2.2-8.5 2.5z" color="#8f82e3"/>
<path d="M750.8 341.2l8.5-3.8 5.4-1.7-8.5 3.3z" color="#a287e3"/>
<path d="M759.3 337.4l8.4-3.7 5.4-1.6-8.4 3.6z" color="#b78ce3"/>
<path d="M767.7 333.7l8.5-3.1 5.4-1.8-8.5 3.3z" color="#cc91e3"/>
<path d="M776.2 330.6l8.6-1.7 5.3-2.6-8.5 2.5z" color="#dd96e3"/>
<path d="M784.8 328.9l8.7-.1 5.2-3.7-8.6 1.2z" color="#ea9ce3"/>
<path d="M793.5 328.8l8.8 1.7 5.1-5.2-8.7-.2z" color="#f1a1e3"/>
<path d="M802.3 330.5l8.9 3.1 5-7-8.8-1.3z" color="#f3a6e3"/>
<path d="M811.2 333.6l8.9 3.9 5-8.7-8.9-2.2z" color="#f1abe3"/>
<path d="M820.1 337.5l9 3.9 4.8-10.1-8.8-2.5z" color="#edb0e3"/>
<path d="M829.1 341.4l8.9 3 4.8-10.9-8.9-2.2z" color="#e9b5e3"/>
<path d="M838.0 344.4l8.8 1.6 4.8-10.7-8.8-1.8z" color="#e9bae3"/>
<path d="M846.8 346.0l8.7 .5 4.8-9.8-8.7-1.4z" color="#ecbfe3"/>
<path d="M855.5 346.5l8.6-.4 5-8.2-8.8-1.2z" color="#f1c4e3"/>
<path d="M864.1 346.1l8.7-.1 5.1-6.5-8.8-1.6z" color="#f6c9e3"/>
<path d="M872.8 346.0l8.8 .7 5.2-4.6-8.9-2.6z" color="#f9cfe3"/>
<path d="M881.6 346.7l8.8 2.4 5.3-3.1-8.9-3.9z" color="#f8d4e3"/>
<path d="M890.4 349.1l9 4.3 5.4-2.1-9.1-5.3z" color="#f0d9e3"/>
<path d="M899.4 353.4l9.1 5.9 5.4-1.4-9.1-6.6z" color="#e3dee3"/>
<path d="M908.5 359.3l9.2 7.3 5.4-1.3-9.2-7.4z" color="#d1e3e3"/>
<path d="M917.7 366.6l9.2 8.1 5.4-1.7-9.2-7.7z" color="#bce8e3"/>
<path d="M926.9 374.7l9.2 8 5.4-2.2-9.2-7.5z" color="#a6ede3"/>
<path d="M936.1 382.7l9.2 7.3 5.3-3-9.1-6.5z" color="#92f2e3"/>
<path d="M945.3 390.0l9.1 6.1 5.2-3.8-9-5.3z" color="#82f7e3"/>
<path d="M954.4 396.1l9 4.5 5.2-4.6-9-3.7z" color="#77fce3"/>
<path d="M526.5 283.3l8.9 2.7 5.2-4.6-8.9-2.7z" color="#9b03e8"/>
<path d="M535.4 286.0l8.9 2.6 5.2-4.5-8.9-2.7z" color="#9908e8"/>
<path d="M544.3 288.6l8.8 2.6 5.3-4.5-8.9-2.6z" color="#970de8"/>
<path d="M553.1 291.2l8.9 2.4 5.2-4.4-8.8-2.5z" color="#9512e8"/>
<path d="M562.0 293.6l8.8 2.1 5.2-4.3-8.8-2.2z" color="#9417e8"/>
<path d="M570.8 295.7l8.8 1.8 5.3-4.2-8.9-1.9z" color="#941ce8"/>
<path d="M579.6 297.5l8.8 1.3 5.2-4.1-8.7-1.4z" color="#9621e8"/>
<path d="M588.4 298.8l8.7 .9 5.3-4-8.8-1z" color="#9926e8"/>
<path d="M597.1 299.7l8.8 .5 5.2-3.9-8.7-.6z" color="#9d2be8"/>
<path d="M605.9 300.2l8.7 .5 5.3-3.9-8.8-.5z" color="#a330e8"/>
<path d="M614.6 300.7l8.7 .5 5.3-3.9-8.7-.5z" color="#a936e8"/>
<path d="M623.3 301.2l8.8 .9 5.2-4.1-8.7-.7z" color="#ae3be8"/>
<path d="M632.1 302.1l8.8 1.3 5.2-4.2-8.8-1.2z" color="#b240e8"/>
<path d="M640.9 303.4l8.8 2.2 5.2-4.5-8.8-1.9z" color="#b345e8"/>
<path d="M649.7 305.6l8.9 3 5.2-4.8-8.9-2.7z" color="#b24ae8"/>
<path d="M658.6 308.6l8.9 3.9 5.2-5.1-8.9-3.6z" color="#ad4fe8"/>
<path d="M667.5 312.5l9 4.6 5.2-5.4-9-4.3z" color="#a554e8"/>
<path d="M676.5 317.1l9.1 5.2 5.1-5.6-9-5z" color="#9b59e8"/>
<path d="M685.6 322.3l9 5.4 5.1-5.8-9-5.2z" color="#8f5ee8"/>
<path d="M694.6 327.7l9 5.1 5.2-5.8-9.1-5.1z" color="#8363e8"/>
<path d="M703.6 332.8l9 4.4 5.2-5.6-9-4.6z" color="#7869e8"/>
<path d="M712.6 337.2l8.9 3.3 5.2-5.2-8.9-3.7z" color="#716ee8"/>
<path d="M721.5 340.5l8.9 1.9 5.2-4.7-8.9-2.4z" color="#6e73e8"/>
<path d="M730.4 342.4l8.7 .3 5.2-4-8.7-1z" color="#7078e8"/>
<path d="M739.1 342.7l8.6-1.2 5.3-3.2-8.7 .4z" color="#787de8"/>
<path d="M747.7 341.5l8.5-2.5 5.4-2.4-8.6 1.7z" color="#8582e8"/>
<path d="M756.2 339.0l8.5-3.3 5.4-1.7-8.5 2.6z" color="#9687e8"/>
<path d="M764.7 335.7l8.4-3.6 5.5-1.3-8.5 3.2z" color="#aa8ce8"/>
<path d="M773.1 332.1l8.5-3.3 5.4-1.2-8.4 3.2z" color="#be91e8"/>
<path d="M781.6 328.8l8.5-2.5 5.5-1.4-8.6 2.7z" color="#d196e8"/>
<path d="M790.1 326.3l8.6-1.2 5.4-2.1-8.5 1.9z" color="#e09ce8"/>
<path d="M798.7 325.1l8.7 .2 5.4-3.2-8.7 .9z" color="#eba1e8"/>
<path d="M807.4 325.3l8.8 1.3 5.3-4.3-8.7-.2z" color="#f2a6e8"/>
<path d="M816.2 326.6l8.9 2.2 5.1-5.6-8.7-.9z" color="#f6abe8"/>
<path d="M825.1 328.8l8.8 2.5 5.1-6.5-8.8-1.6z" color="#f7b0e8"/>
<path d="M833.9 331.3l8.9 2.2 5-7-8.8-1.7z" color="#f7b5e8"/>
<path d="M842.8 333.5l8.8 1.8 5-6.9-8.8-1.9z" color="#f7bae8"/>
<path d="M851.6 335.3l8.7 1.4 5.2-6.2-8.9-2.1z" color="#f8bfe8"/>
<path d="M860.3 336.7l8.8 1.2 5.2-5.1-8.8-2.3z" color="#f9c4e8"/>
<path d="M869.1 337.9l8.8 1.6 5.3-3.8-8.9-2.9z" color="#f9c9e8"/>
<path d="M877.9 339.5l8.9 2.6 5.3-2.5-8.9-3.9z" color="#f6cfe8"/>
<path d="M886.8 342.1l8.9 3.9 5.5-1.5-9.1-4.9z" color="#f0d4e8"/>
<path d="M895.7 346.0l9.1 5.3 5.4-.9-9-5.9z" color="#e4d9e8"/>
<path d="M904.8 351.3l9.1 6.6 5.5-.7-9.2-6.8z" color="#d5dee8"/>
<path d="M913.9 357.9l9.2 7.4 5.5-.9-9.2-7.2z" color="#c2e3e8"/>
<path d="M923.1 365.3l9.2 7.7 5.4-1.4-9.1-7.2z" color="#aee8e8"/>
<path d="M932.3 373.0l9.2 7.5 5.4-2.2-9.2-6.7z" color="#9aede8"/>
<path d="M941.5 380.5l9.1 6.5 5.3-3.1-9-5.6z" color="#89f2e8"/>
<path d="M950.6 387.0l9 5.3 5.3-4-9-4.4z" color="#7cf7e8"/>
<path d="M959.6 392.3l9 3.7 5.2-4.8-8.9-2.9z" color="#74fce8"/>
<path d="M531.7 278.7l8.9 2.7 5.2-4.9-8.9-2.7z" color="#9a03ed"/>
<path d="M540.6 281.4l8.9 2.7 5.2-4.8-8.9-2.8z" color="#9708ed"/>
<path d="M549.5 284.1l8.9 2.6 5.2-4.7-8.9-2.7z" color="#950ded"/>
<path d="M558.4 286.7l8.8 2.5 5.2-4.6-8.8-2.6z" color="#9312ed"/>
<path d="M567.2 289.2l8.8 2.2 5.3-4.5-8.9-2.3z" color="#9117ed"/>
<path d="M576.0 291.4l8.9 1.9 5.2-4.5-8.8-1.9z" color="#911ced"/>
<path d="M584.9 293.3l8.7 1.4 5.3-4.3-8.8-1.6z" color="#9221ed"/>
<path d="M593.6 294.7l8.8 1 5.3-4.2-8.8-1.1z" color="#9526ed"/>
<path d="M602.4 295.7l8.7 .6 5.3-4-8.7-.8z" color="#992bed"/>
<path d="M611.1 296.3l8.8 .5 5.2-4-8.7-.5z" color="#9f30ed"/>
<path d="M619.9 296.8l8.7 .5 5.2-4-8.7-.5z" color="#a436ed"/>
<path d="M628.6 297.3l8.7 .7 5.3-4.1-8.8-.6z" color="#aa3bed"/>
<path d="M637.3 298.0l8.8 1.2 5.2-4.3-8.7-1z" color="#ae40ed"/>
<path d="M646.1 299.2l8.8 1.9 5.2-4.6-8.8-1.6z" color="#b045ed"/>
<path d="M654.9 301.1l8.9 2.7 5.2-4.9-8.9-2.4z" color="#b04aed"/>
<path d="M663.8 303.8l8.9 3.6 5.2-5.3-8.9-3.2z" color="#ac4fed"/>
<path d="M672.7 307.4l9 4.3 5.1-5.6-8.9-4z" color="#a654ed"/>
<path d="M681.7 311.7l9 5 5.1-6-9-4.6z" color="#9d59ed"/>
<path d="M690.7 316.7l9 5.2 5.2-6.2-9.1-5z" color="#925eed"/>
<path d="M699.7 321.9l9.1 5.1 5.1-6.3-9-5z" color="#8663ed"/>
<path d="M708.8 327.0l9 4.6 5.1-6.2-9-4.7z" color="#7b69ed"/>
<path d="M717.8 331.6l8.9 3.7 5.2-5.8-9-4.1z" color="#736eed"/>
<path d="M726.7 335.3l8.9 2.4 5.1-5.2-8.8-3z" color="#6e73ed"/>
<path d="M735.6 337.7l8.7 1 5.3-4.5-8.9-1.7z" color="#6e78ed"/>
<path d="M744.3 338.7l8.7-.4 5.3-3.6-8.7-.5z" color="#737ded"/>
<path d="M753.0 338.3l8.6-1.7 5.3-2.7-8.6 .8z" color="#7d82ed"/>
<path d="M761.6 336.6l8.5-2.6 5.4-1.9-8.6 1.8z" color="#8b87ed"/>
<path d="M770.1 334.0l8.5-3.2 5.4-1.2-8.5 2.5z" color="#9c8ced"/>
<path d="M778.6 330.8l8.4-3.2 5.5-.7-8.5 2.7z" color="#af91ed"/>
<path d="M787.0 327.6l8.6-2.7 5.4-.6-8.5 2.6z" color="#c196ed"/>
<path d="M795.6 324.9l8.5-1.9 5.5-.8-8.6 2.1z" color="#d29ced"/>
<path d="M804.1 323.0l8.7-.9 5.4-1.2-8.6 1.3z" color="#dfa1ed"/>
<path d="M812.8 322.1l8.7 .2 5.4-2-8.7 .6z" color="#e9a6ed"/>
<path d="M821.5 322.3l8.7 .9 5.4-2.6-8.7-.3z" color="#f0abed"/>
<path d="M830.2 323.2l8.8 1.6 5.3-3.2-8.7-1z" color="#f4b0ed"/>
<path d="M839.0 324.8l8.8 1.7 5.3-3.4-8.8-1.5z" color="#f6b5ed"/>
<path d="M847.8 326.5l8.8 1.9 5.3-3.3-8.8-2z" color="#f7baed"/>
<path d="M856.6 328.4l8.9 2.1 5.3-3-8.9-2.4z" color="#f7bfed"/>
<path d="M865.5 330.5l8.8 2.3 5.4-2.2-8.9-3.1z" color="#f5c4ed"/>
<path d="M874.3 332.8l8.9 2.9 5.4-1.4-8.9-3.7z" color="#f1c9ed"/>
<path d="M883.2 335.7l8.9 3.9 5.5-.7-9-4.6z" color="#ebcfed"/>
<path d="M892.1 339.6l9.1 4.9 5.5-.2-9.1-5.4z" color="#e1d4ed"/>
<path d="M901.2 344.5l9 5.9 5.6 0-9.1-6.1z" color="#d3d9ed"/>
<path d="M910.2 350.4l9.2 6.8 5.5-.2-9.1-6.6z" color="#c3deed"/>
<path d="M919.4 357.2l9.2 7.2 5.4-.7-9.1-6.7z" color="#b1e3ed"/>
<path d="M928.6 364.4l9.1 7.2 5.4-1.5-9.1-6.4z" color="#9fe8ed"/>
<path d="M937.7 371.6l9.2 6.7 5.3-2.5-9.1-5.7z" color="#8eeded"/>
<path d="M946.9 378.3l9 5.6 5.3-3.4-9-4.7z" color="#80f2ed"/>
<path d="M955.9 383.9l9 4.4 5.2-4.5-8.9-3.3z" color="#77f7ed"/>
<path d="M964.9 388.3l8.9 2.9 5.2-5.3-8.9-2.1z" color="#73fced"/>
<path d="M536.9 273.8l8.9 2.7 5.2-5.1-8.9-2.7z" color="#9903f2"/>
<path d="M545.8 276.5l8.9 2.8 5.2-5.1-8.9-2.8z" color="#9708f2"/>
<path d="M554.7 279.3l8.9 2.7 5.2-5.1-8.9-2.7z" color="#940df2"/>
<path d="M563.6 282.0l8.8 2.6 5.2-5-8.8-2.7z" color="#9112f2"/>
<path d="M572.4 284.6l8.9 2.3 5.2-4.9-8.9-2.4z" color="#9017f2"/>
<path d="M581.3 286.9l8.8 1.9 5.2-4.7-8.8-2.1z" color="#8f1cf2"/>
<path d="M590.1 288.8l8.8 1.6 5.2-4.6-8.8-1.7z" color="#9021f2"/>
<path d="M598.9 290.4l8.8 1.1 5.2-4.4-8.8-1.3z" color="#9226f2"/>
<path d="M607.7 291.5l8.7 .8 5.2-4.4-8.7-.8z" color="#962bf2"/>
<path d="M616.4 292.3l8.7 .5 5.3-4.2-8.8-.7z" color="#9b30f2"/>
<path d="M625.1 292.8l8.7 .5 5.3-4.3-8.7-.4z" color="#a136f2"/>
<path d="M633.8 293.3l8.8 .6 5.2-4.3-8.7-.6z" color="#a63bf2"/>
<path d="M642.6 293.9l8.7 1 5.3-4.5-8.8-.8z" color="#ab40f2"/>
<path d="M651.3 294.9l8.8 1.6 5.2-4.7-8.7-1.4z" color="#ae45f2"/>
<path d="M660.1 296.5l8.9 2.4 5.2-5.1-8.9-2z" color="#af4af2"/>
<path d="M669.0 298.9l8.9 3.2 5.1-5.5-8.8-2.8z" color="#ad4ff2"/>
<path d="M677.9 302.1l8.9 4 5.2-5.9-9-3.6z" color="#a854f2"/>
<path d="M686.8 306.1l9 4.6 5.1-6.3-8.9-4.2z" color="#a059f2"/>
<path d="M695.8 310.7l9.1 5 5.1-6.6-9.1-4.7z" color="#965ef2"/>
<path d="M704.9 315.7l9 5 5.1-6.7-9-4.9z" color="#8b63f2"/>
<path d="M713.9 320.7l9 4.7 5.1-6.6-9-4.8z" color="#8069f2"/>
<path d="M722.9 325.4l9 4.1 5.1-6.4-9-4.3z" color="#776ef2"/>
<path d="M731.9 329.5l8.8 3 5.2-5.9-8.9-3.5z" color="#7173f2"/>
<path d="M740.7 332.5l8.9 1.7 5.1-5.1-8.8-2.5z" color="#6e78f2"/>
<path d="M749.6 334.2l8.7 .5 5.2-4.3-8.8-1.3z" color="#707df2"/>
<path d="M758.3 334.7l8.6-.8 5.3-3.3-8.7-.2z" color="#7782f2"/>
<path d="M766.9 333.9l8.6-1.8 5.4-2.3-8.7 .8z" color="#8287f2"/>
<path d="M775.5 332.1l8.5-2.5 5.4-1.4-8.5 1.6z" color="#8f8cf2"/>
<path d="M784.0 329.6l8.5-2.7 5.5-.7-8.6 2z" color="#9f91f2"/>
<path d="M792.5 326.9l8.5-2.6 5.6-.2-8.6 2.1z" color="#b096f2"/>
<path d="M801.0 324.3l8.6-2.1 5.5 .1-8.5 1.8z" color="#c09cf2"/>
<path d="M809.6 322.2l8.6-1.3 5.5 0-8.6 1.4z" color="#cda1f2"/>
<path d="M818.2 320.9l8.7-.6 5.5-.1-8.7 .7z" color="#d9a6f2"/>
<path d="M826.9 320.3l8.7 .3 5.5-.4-8.7 0z" color="#e1abf2"/>
<path d="M835.6 320.6l8.7 1 5.5-.6-8.7-.8z" color="#e7b0f2"/>
<path d="M844.3 321.6l8.8 1.5 5.5-.7-8.8-1.4z" color="#eab5f2"/>
<path d="M853.1 323.1l8.8 2 5.5-.7-8.8-2z" color="#ecbaf2"/>
<path d="M861.9 325.1l8.9 2.4 5.5-.4-8.9-2.7z" color="#eabff2"/>
<path d="M870.8 327.5l8.9 3.1 5.5-.1-8.9-3.4z" color="#e7c4f2"/>
<path d="M879.7 330.6l8.9 3.7 5.6 .3-9-4.1z" color="#e1c9f2"/>
<path d="M888.6 334.3l9 4.6 5.6 .5-9-4.8z" color="#d9cff2"/>
<path d="M897.6 338.9l9.1 5.4 5.5 .6-9-5.5z" color="#cdd4f2"/>
<path d="M906.7 344.3l9.1 6.1 5.5 .4-9.1-5.9z" color="#bfd9f2"/>
<path d="M915.8 350.4l9.1 6.6 5.5-.2-9.1-6z" color="#b0def2"/>
<path d="M924.9 357.0l9.1 6.7 5.5-.9-9.1-6z" color="#a0e3f2"/>
<path d="M934.0 363.7l9.1 6.4 5.4-1.9-9-5.4z" color="#90e8f2"/>
<path d="M943.1 370.1l9.1 5.7 5.3-2.9-9-4.7z" color="#83edf2"/>
<path d="M952.2 375.8l9 4.7 5.3-4-9-3.6z" color="#79f2f2"/>
<path d="M961.2 380.5l8.9 3.3 5.2-4.9-8.8-2.4z" color="#73f7f2"/>
<path d="M970.1 383.8l8.9 2.1 5.1-5.7-8.8-1.3z" color="#72fcf2"/>
<path d="M542.1 268.7l8.9 2.7 5.2-5.4-8.9-2.7z" color="#9a03f7"/>
<path d="M551.0 271.4l8.9 2.8 5.1-5.4-8.8-2.8z" color="#9708f7"/>
<path d="M559.9 274.2l8.9 2.7 5.1-5.3-8.9-2.8z" color="#940df7"/>
<path d="M568.8 276.9l8.8 2.7 5.2-5.2-8.9-2.8z" color="#9212f7"/>
<path d="M577.6 279.6l8.9 2.4 5.2-5.1-8.9-2.5z" color="#8f17f7"/>
<path d="M586.5 282.0l8.8 2.1 5.2-5-8.8-2.2z" color="#8e1cf7"/>
<path d="M595.3 284.1l8.8 1.7 5.2-4.9-8.8-1.8z" color="#8f21f7"/>
<path d="M604.1 285.8l8.8 1.3 5.2-4.7-8.8-1.5z" color="#9026f7"/>
<path d="M612.9 287.1l8.7 .8 5.3-4.5-8.8-1z" color="#942bf7"/>
<path d="M621.6 287.9l8.8 .7 5.2-4.5-8.7-.7z" color="#9830f7"/>
<path d="M630.4 288.6l8.7 .4 5.2-4.4-8.7-.5z" color="#9e36f7"/>
<path d="M639.1 289.0l8.7 .6 5.2-4.5-8.7-.5z" color="#a33bf7"/>
<path d="M647.8 289.6l8.8 .8 5.2-4.6-8.8-.7z" color="#a940f7"/>
<path d="M656.6 290.4l8.7 1.4 5.2-4.9-8.7-1.1z" color="#ac45f7"/>
<path d="M665.3 291.8l8.9 2 5.1-5.2-8.8-1.7z" color="#ae4af7"/>
<path d="M674.2 293.8l8.8 2.8 5.2-5.6-8.9-2.4z" color="#ae4ff7"/>
<path d="M683.0 296.6l9 3.6 5.1-6.1-8.9-3.1z" color="#aa54f7"/>
<path d="M692.0 300.2l8.9 4.2 5.1-6.5-8.9-3.8z" color="#a459f7"/>
<path d="M700.9 304.4l9.1 4.7 5-6.8-9-4.4z" color="#9b5ef7"/>
<path d="M710.0 309.1l9 4.9 5-7-9-4.7z" color="#9163f7"/>
<path d="M719.0 314.0l9 4.8 5-7.1-9-4.7z" color="#8769f7"/>
<path d="M728.0 318.8l9 4.3 5-6.9-9-4.5z" color="#7d6ef7"/>
<path d="M737.0 323.1l8.9 3.5 5.1-6.5-9-3.9z" color="#7673f7"/>
<path d="M745.9 326.6l8.8 2.5 5.2-5.9-8.9-3.1z" color="#7178f7"/>
<path d="M754.7 329.1l8.8 1.3 5.2-5-8.8-2.2z" color="#707df7"/>
<path d="M763.5 330.4l8.7 .2 5.3-4-8.8-1.2z" color="#7382f7"/>
<path d="M772.2 330.6l8.7-.8 5.3-3-8.7-.2z" color="#7a87f7"/>
<path d="M780.9 329.8l8.5-1.6 5.4-1.9-8.6 .5z" color="#848cf7"/>
<path d="M789.4 328.2l8.6-2 5.5-1-8.7 1.1z" color="#9191f7"/>
<path d="M798.0 326.2l8.6-2.1 5.5-.2-8.6 1.3z" color="#9e96f7"/>
<path d="M806.6 324.1l8.5-1.8 5.6 .3-8.6 1.3z" color="#ac9cf7"/>
<path d="M815.1 322.3l8.6-1.4 5.6 .7-8.6 1z" color="#b9a1f7"/>
<path d="M823.7 320.9l8.7-.7 5.6 .9-8.7 .5z" color="#c4a6f7"/>
<path d="M832.4 320.2l8.7 0 5.6 1-8.7-.1z" color="#cdabf7"/>
<path d="M841.1 320.2l8.7 .8 5.6 .9-8.7-.7z" color="#d3b0f7"/>
<path d="M849.8 321.0l8.8 1.4 5.6 1-8.8-1.5z" color="#d6b5f7"/>
<path d="M858.6 322.4l8.8 2 5.6 1.1-8.8-2.1z" color="#d8baf7"/>
<path d="M867.4 324.4l8.9 2.7 5.6 1.2-8.9-2.8z" color="#d6bff7"/>
<path d="M876.3 327.1l8.9 3.4 5.6 1.3-8.9-3.5z" color="#d2c4f7"/>
<path d="M885.2 330.5l9 4.1 5.6 1.3-9-4.1z" color="#cbc9f7"/>
<path d="M894.2 334.6l9 4.8 5.6 1.2-9-4.7z" color="#c2cff7"/>
<path d="M903.2 339.4l9 5.5 5.6 .8-9-5.1z" color="#b7d4f7"/>
<path d="M912.2 344.9l9.1 5.9 5.6 .2-9.1-5.3z" color="#aad9f7"/>
<path d="M921.3 350.8l9.1 6 5.5-.5-9-5.3z" color="#9ddef7"/>
<path d="M930.4 356.8l9.1 6 5.4-1.6-9-4.9z" color="#8fe3f7"/>
<path d="M939.5 362.8l9 5.4 5.4-2.6-9-4.4z" color="#83e8f7"/>
<path d="M948.5 368.2l9 4.7 5.3-3.7-8.9-3.6z" color="#7aedf7"/>
<path d="M957.5 372.9l9 3.6 5.2-4.7-8.9-2.6z" color="#74f2f7"/>
<path d="M966.5 376.5l8.8 2.4 5.2-5.6-8.8-1.5z" color="#72f7f7"/>
<path d="M975.3 378.9l8.8 1.3 5.1-6.3-8.7-.6z" color="#74fcf7"/>
<path d="M547.3 263.3l8.9 2.7 5.1-5.6-8.9-2.7z" color="#9b03fc"/>
<path d="M556.2 266.0l8.8 2.8 5.2-5.6-8.9-2.8z" color="#9908fc"/>
<path d="M565.0 268.8l8.9 2.8 5.2-5.5-8.9-2.9z" color="#960dfc"/>
<path d="M573.9 271.6l8.9 2.8 5.2-5.6-8.9-2.7z" color="#9312fc"/>
<path d="M582.8 274.4l8.9 2.5 5.1-5.4-8.8-2.7z" color="#9017fc"/>
<path d="M591.7 276.9l8.8 2.2 5.2-5.3-8.9-2.3z" color="#8f1cfc"/>
<path d="M600.5 279.1l8.8 1.8 5.2-5.1-8.8-2z" color="#8e21fc"/>
<path d="M609.3 280.9l8.8 1.5 5.2-5-8.8-1.6z" color="#9026fc"/>
<path d="M618.1 282.4l8.8 1 5.2-4.8-8.8-1.2z" color="#922bfc"/>
<path d="M626.9 283.4l8.7 .7 5.2-4.7-8.7-.8z" color="#9630fc"/>
<path d="M635.6 284.1l8.7 .5 5.2-4.6-8.7-.6z" color="#9c36fc"/>
<path d="M644.3 284.6l8.7 .5 5.3-4.6-8.8-.5z" color="#a13bfc"/>
<path d="M653.0 285.1l8.8 .7 5.2-4.7-8.7-.6z" color="#a740fc"/>
<path d="M661.8 285.8l8.7 1.1 5.2-4.9-8.7-.9z" color="#ab45fc"/>
<path d="M670.5 286.9l8.8 1.7 5.2-5.3-8.8-1.3z" color="#ae4afc"/>
<path d="M679.3 288.6l8.9 2.4 5.1-5.7-8.8-2z" color="#af4ffc"/>
<path d="M688.2 291.0l8.9 3.1 5.1-6.1-8.9-2.7z" color="#ad54fc"/>
<path d="M697.1 294.1l8.9 3.8 5.1-6.6-8.9-3.3z" color="#a859fc"/>
<path d="M706.0 297.9l9 4.4 5.1-7-9-4z" color="#a15efc"/>
<path d="M715.0 302.3l9 4.7 5.1-7.3-9-4.4z" color="#9963fc"/>
<path d="M724.0 307.0l9 4.7 5.1-7.4-9-4.6z" color="#8f69fc"/>
<path d="M733.0 311.7l9 4.5 5.1-7.4-9-4.5z" color="#856efc"/>
<path d="M742.0 316.2l9 3.9 5-7.1-8.9-4.2z" color="#7d73fc"/>
<path d="M751.0 320.1l8.9 3.1 5.1-6.5-9-3.7z" color="#7678fc"/>
<path d="M759.9 323.2l8.8 2.2 5.1-5.8-8.8-2.9z" color="#737dfc"/>
<path d="M768.7 325.4l8.8 1.2 5.2-4.9-8.9-2.1z" color="#7382fc"/>
<path d="M777.5 326.6l8.7 .2 5.2-3.9-8.7-1.2z" color="#7687fc"/>
<path d="M786.2 326.8l8.6-.5 5.4-2.8-8.8-.6z" color="#7c8cfc"/>
<path d="M794.8 326.3l8.7-1.1 5.4-1.7-8.7 0z" color="#8591fc"/>
<path d="M803.5 325.2l8.6-1.3 5.4-.8-8.6 .4z" color="#8f96fc"/>
<path d="M812.1 323.9l8.6-1.3 5.5 0-8.7 .5z" color="#9a9cfc"/>
<path d="M820.7 322.6l8.6-1 5.6 .6-8.7 .4z" color="#a4a1fc"/>
<path d="M829.3 321.6l8.7-.5 5.5 1.1-8.6 0z" color="#aea6fc"/>
<path d="M838.0 321.1l8.7 .1 5.6 1.4-8.8-.4z" color="#b5abfc"/>
<path d="M846.7 321.2l8.7 .7 5.6 1.6-8.7-.9z" color="#bbb0fc"/>
<path d="M855.4 321.9l8.8 1.5 5.6 1.6-8.8-1.5z" color="#beb5fc"/>
<path d="M864.2 323.4l8.8 2.1 5.6 1.7-8.8-2.2z" color="#bfbafc"/>
<path d="M873.0 325.5l8.9 2.8 5.6 1.6-8.9-2.7z" color="#bdbffc"/>
<path d="M881.9 328.3l8.9 3.5 5.6 1.5-8.9-3.4z" color="#b9c4fc"/>
<path d="M890.8 331.8l9 4.1 5.6 1.3-9-3.9z" color="#b3c9fc"/>
<path d="M899.8 335.9l9 4.7 5.6 .8-9-4.2z" color="#abcffc"/>
<path d="M908.8 340.6l9 5.1 5.5 .2-8.9-4.5z" color="#a1d4fc"/>
<path d="M917.8 345.7l9.1 5.3 5.4-.5-9-4.6z" color="#96d9fc"/>
<path d="M926.9 351.0l9 5.3 5.4-1.5-9-4.3z" color="#8cdefc"/>
<path d="M935.9 356.3l9 4.9 5.4-2.4-9-4z" color="#82e3fc"/>
<path d="M944.9 361.2l9 4.4 5.3-3.5-8.9-3.3z" color="#7ae8fc"/>
<path d="M953.9 365.6l8.9 3.6 5.2-4.6-8.8-2.5z" color="#74edfc"/>
<path d="M962.8 369.2l8.9 2.6 5.1-5.5-8.8-1.7z" color="#72f2fc"/>
<path d="M971.7 371.8l8.8 1.5 5.1-6.2-8.8-.8z" color="#74f7fc"/>
<path d="M980.5 373.3l8.7 .6 5.1-6.7-8.7-.1z" color="#78fcfc"/>
</g>
<path d="M292.3 499.9l5.3-4.2 5.3-3 5.4-2.2 5.4-1.5 5.4-1.4 5.4-1.5 5.4-2 5.4-2.7 5.3-3.5 5.2-4.5 5.2-5.4 5.1-6.3 5-7.2 5-8 5-8.6 4.9-9 4.9-9 5-8.6 5-7.9 5-6.9 5.2-5.7 5.2-4.4 5.3-3.3 5.4-2.4 5.4-1.8 5.4-1.6 5.4-1.9 5.4-2.3 5.3-3.2 5.2-4 5.2-4.9 5.2-5.8 5.1-6.3 5.1-6.7 5-6.9 5.1-6.7 5.1-6.4 5.1-6.1 5.2-5.5 5.2-5.1 5.2-4.7 5.2-4.4 5.3-4.3 5.2-4.3 5.2-4.5 5.2-4.6 5.2-4.9 5.2-5.1 5.2-5.4 5.1-5.6M292.3 499.9l8.9 2.7 8.9 3.4 9 3.9 8.9 4 9 4.1 8.9 3.7 8.9 3.3 8.9 2.7 8.8 2 8.8 1.3 8.7 .8 8.8 .3 8.6 0 8.7-.2 8.7 .1 8.8 .5 8.7 1.2 8.8 2 8.9 2.9 9 3.7 8.9 4.4 9.1 4.9 9 5 9 5 9 4.5 9 3.9 8.9 3.2 8.8 2.4 8.8 1.6 8.8 .9 8.7 .6 8.7 .3 8.7 .3 8.7 .6 8.8 .8 8.8 1.4 8.8 1.8 8.8 2.2 8.9 2.6 8.9 2.8 8.8 2.9 8.9 2.8 8.9 2.8 8.9 2.5 8.8 2.3 8.8 2.1 8.8 1.8 8.9 1.8 8.8 1.6 8.7 1.6M301.2 502.6l5.3-3 5.4-1.8 5.5-1 5.5-.5 5.5-.5 5.4-.9 5.4-1.6 5.4-2.6 5.3-3.5 5.2-4.5 5.2-5.5 5.1-6.4 5-7.3 5-8.2 4.9-9.1 4.9-9.6 4.9-9.9 4.8-9.7 5-9.1 5-8 5-6.7 5.2-5.2 5.3-3.9 5.3-2.7 5.4-1.9 5.4-1.5 5.5-1.5 5.4-1.9 5.3-2.7 5.3-3.6 5.2-4.5 5.2-5.4 5.1-6.2 5.1-6.6 5.1-6.8 5-6.9 5.1-6.5 5.1-6.2 5.2-5.7 5.2-5.2 5.2-4.8 5.2-4.5 5.2-4.3 5.3-4.4 5.2-4.3 5.2-4.6 5.2-4.9 5.2-5.1 5.2-5.4 5.1-5.6M297.6 495.7l8.9 3.9 9 4.5 9 5 9.1 5 9 4.8 8.9 4.3 9 3.6 8.8 2.8 8.9 2 8.7 1.1 8.8 .4 8.6-.3 8.7-.9 8.6-1 8.6-1.1 8.7-.6 8.6 0 8.8 1 8.8 2 8.9 3 9 4.1 9 4.8 9 5.2 9.1 5.2 9 5.1 9 4.4 8.9 3.7 8.9 2.9 8.8 2 8.8 1.3 8.7 .7 8.8 .4 8.7 .3 8.7 .4 8.7 .8 8.8 1.1 8.8 1.6 8.8 2.1 8.9 2.5 8.9 2.7 8.8 2.9 8.9 2.8 8.9 2.8 8.9 2.6 8.8 2.3 8.8 2.1 8.8 1.8 8.8 1.7 8.8 1.6 8.8 1.5M310.1 506l5.4-1.9 5.5-.6 5.5 .1 5.6 .4 5.5 .1 5.5-.7 5.4-1.7 5.3-2.8 5.3-3.9 5.2-4.7 5.2-5.5 5.1-6.2 5-7 5-8.1 4.9-9.1 4.9-9.9 4.8-10.5 4.9-10.6 4.8-10.1 4.9-9.1 5-7.8 5.2-6.1 5.2-4.6 5.3-3.1 5.4-2.1 5.4-1.4 5.4-1.3 5.5-1.6 5.3-2.3 5.4-3.2 5.2-4.1 5.2-5.2 5.1-5.9 5.1-6.5 5.1-6.9 5-6.9 5.1-6.6 5.1-6.3 5.2-5.9 5.1-5.3 5.2-4.9 5.3-4.6 5.2-4.3 5.2-4.3 5.3-4.4 5.2-4.5 5.2-4.8 5.2-5.1 5.1-5.4 5.2-5.6M302.9 492.7l9 5.1 9.1 5.7 9.1 6 9.1 5.8 9 5.4 9 4.7 9 3.8 8.8 2.9 8.9 1.9 8.7 1 8.7 .1 8.7-.8 8.5-1.4 8.6-1.9 8.6-2.1 8.5-1.8 8.7-1.2 8.6-.2 8.8 1 8.8 2.3 9 3.5 8.9 4.5 9.1 5.2 9 5.5 9.1 5.4 9 5 9 4.2 8.9 3.4 8.8 2.4 8.8 1.6 8.8 1 8.7 .5 8.7 .2 8.8 .4 8.7 .6 8.7 1 8.8 1.4 8.8 2 8.9 2.3 8.9 2.7 8.8 2.8 8.9 2.8 8.9 2.8 8.9 2.6 8.8 2.3 8.8 2.1 8.9 1.9 8.8 1.6 8.7 1.5 8.8 1.5M319.1 509.9l5.4-.8 5.6 .4 5.6 1 5.6 .9 5.5 .2 5.5-.9 5.3-2.3 5.3-3.6 5.2-4.5 5.2-5.2 5.2-5.4 5.1-5.7 5.1-6.3 5.1-7.3 4.9-8.6 4.9-9.8 4.8-10.7 4.8-11.2 4.8-10.9 4.8-10.1 5-8.8 5-7.1 5.2-5.2 5.3-3.7 5.4-2.3 5.4-1.6 5.4-1.1 5.5-1.4 5.4-2 5.3-2.8 5.3-3.9 5.2-4.9 5.1-5.7 5.1-6.5 5.1-6.8 5-7 5.1-6.7 5.1-6.5 5.1-5.9 5.2-5.5 5.2-4.9 5.2-4.6 5.2-4.4 5.3-4.3 5.2-4.3 5.3-4.5 5.2-4.7 5.2-5.1 5.1-5.3 5.2-5.5M308.3 490.5l9.1 6.3 9.1 6.8 9.2 6.9 9.1 6.4 9.1 5.7 9 4.8 8.9 3.8 8.9 2.8 8.8 1.9 8.8 1 8.7 0 8.6-.9 8.6-1.8 8.5-2.5 8.5-2.9 8.5-2.8 8.5-2.3 8.6-1.4 8.7 0 8.8 1.4 8.9 2.8 8.9 4.1 9.1 5.1 9 5.6 9.1 5.6 9 5.4 9.1 4.7 8.9 3.8 8.9 2.9 8.8 1.9 8.8 1.2 8.7 .6 8.7 .3 8.7 .3 8.7 .4 8.8 .9 8.8 1.3 8.8 1.8 8.8 2.2 8.9 2.6 8.9 2.8 8.8 2.8 8.9 2.8 8.9 2.6 8.8 2.4 8.9 2.1 8.8 1.8 8.8 1.6 8.8 1.5 8.7 1.4M328 513.9l5.6 .2 5.6 1.2 5.6 1.6 5.6 1.2 5.5-.1 5.4-1.6 5.3-3.5 5.2-5 5.1-5.9 5.2-5.8 5.1-5.3 5.3-4.9 5.1-4.9 5.2-5.9 5-7.4 4.9-9.1 4.9-10.6 4.7-11.4 4.8-11.6 4.8-10.9 4.9-9.6 5-7.9 5.1-6 5.2-4.2 5.4-2.8 5.4-1.6 5.4-1.2 5.5-1.2 5.4-1.8 5.3-2.6 5.3-3.6 5.2-4.7 5.2-5.7 5.1-6.3 5.1-6.9 5-7 5.1-6.8 5.1-6.6 5.1-6 5.2-5.6 5.1-5 5.3-4.6 5.2-4.4 5.2-4.2 5.3-4.3 5.2-4.4 5.2-4.6 5.2-5 5.2-5.2 5.2-5.6M313.7 489l9.2 7.3 9.2 7.7 9.2 7.4 9.1 6.7 9 5.6 9 4.4 9 3.4 8.8 2.5 8.8 1.9 8.8 1.1 8.7 .4 8.7-.6 8.5-1.7 8.6-2.6 8.4-3.4 8.5-3.6 8.5-3.3 8.5-2.4 8.6-1.2 8.7 .5 8.9 2.1 8.9 3.6 9 4.8 9.1 5.6 9 5.8 9.1 5.7 9 5.1 9 4.2 8.9 3.2 8.8 2.3 8.8 1.3 8.8 .7 8.7 .4 8.7 .2 8.7 .4 8.7 .7 8.8 1.2 8.8 1.7 8.9 2.1 8.8 2.5 8.9 2.8 8.9 2.8 8.8 2.8 8.9 2.6 8.9 2.4 8.8 2.1 8.8 1.9 8.8 1.6 8.8 1.4 8.8 1.4M337 518l5.6 .9 5.6 1.8 5.7 1.9 5.5 1.1 5.5-.7 5.4-2.9 5.1-5.3 5.1-7.1 5-7.8 5.1-7 5.1-5.1 5.3-3.4 5.4-2.8 5.2-3.8 5.2-5.7 5-7.9 4.9-10 4.7-11.4 4.8-11.9 4.7-11.5 4.9-10.4 4.9-8.7 5.1-6.7 5.2-4.7 5.3-3.1 5.4-1.9 5.4-1.3 5.5-1.2 5.4-1.6 5.4-2.4 5.3-3.5 5.2-4.6 5.1-5.6 5.1-6.3 5.1-6.9 5.1-7 5-7 5.1-6.6 5.1-6.2 5.2-5.6 5.2-5 5.2-4.7 5.2-4.3 5.3-4.2 5.2-4.2 5.2-4.3 5.3-4.5 5.2-4.9 5.2-5.1 5.1-5.4M319.1 487.6l9.3 8.2 9.2 8.3 9.2 7.5 9.1 6.4 9 5 9 3.6 8.8 2.5 8.8 2 8.8 1.8 8.8 1.6 8.8 1.2 8.7 .2 8.7-.9 8.5-2.3 8.5-3.5 8.4-4 8.4-4.1 8.5-3.4 8.5-2.1 8.7-.5 8.8 1.4 8.9 3 8.9 4.5 9.1 5.4 9.1 5.9 9.1 5.9 9 5.4 9 4.5 8.9 3.6 8.9 2.5 8.8 1.6 8.7 .8 8.7 .4 8.8 .2 8.7 .3 8.7 .6 8.8 1 8.8 1.6 8.8 2.1 8.8 2.4 8.9 2.8 8.9 2.8 8.9 2.8 8.8 2.7 8.9 2.4 8.8 2.2 8.8 1.8 8.8 1.7 8.8 1.4 8.8 1.3M345.9 521.7l5.6 1.5 5.7 2.2 5.7 2 5.5 .7 5.5-1.5 5.2-4.5 5-7.5 4.9-9.8 4.8-10.6 4.9-8.8 5.3-4.8 5.4-1.1 5.5 .1 5.5-1 5.3-3.5 5.1-6.5 4.9-9.2 4.8-11.2 4.7-12 4.7-12 4.8-11 4.9-9.3 5.1-7.3 5.1-5.2 5.3-3.5 5.4-2.2 5.4-1.4 5.5-1.2 5.4-1.6 5.4-2.4 5.3-3.4 5.2-4.6 5.1-5.5 5.2-6.3 5-6.9 5.1-7.1 5-7 5.1-6.7 5.1-6.2 5.2-5.7 5.2-5.1 5.2-4.6 5.2-4.3 5.3-4.1 5.2-4.1 5.3-4.2 5.2-4.5 5.2-4.7 5.2-5 5.2-5.3M324.5 486.1l9.3 8.8 9.3 8.5 9.2 7.3 9 5.7 9 3.7 8.8 2 8.7 1.1 8.8 1 8.8 1.7 8.9 2.5 8.8 2.6 8.8 1.9 8.8 .3 8.6-1.4 8.4-3.1 8.5-4.1 8.4-4.6 8.4-4.1 8.5-3 8.6-1.3 8.7 .6 8.9 2.4 8.9 4.1 9.1 5.3 9 5.9 9.1 6 9.1 5.5 9 4.8 8.9 3.8 8.9 2.7 8.8 1.7 8.8 1 8.7 .3 8.7 .2 8.7 .3 8.7 .5 8.8 1 8.8 1.4 8.8 2 8.9 2.5 8.8 2.7 8.9 2.8 8.9 2.9 8.9 2.7 8.8 2.6 8.9 2.2 8.8 1.9 8.8 1.6 8.8 1.5 8.7 1.3M354.8 525l5.7 1.8 5.7 2.4 5.6 2 5.6 .3 5.3-2.4 5.1-5.9 4.9-9.7 4.7-12.9 4.6-14.3 4.7-11.8 5.3-4.2 5.6 2.5 5.8 3.9 5.7 1.9 5.4-1.4 5.2-5.2 5-8.4 4.8-10.8 4.7-12.1 4.7-12.2 4.8-11.4 4.8-9.8 5.1-7.8 5.1-5.7 5.3-3.8 5.3-2.5 5.4-1.5 5.5-1.4 5.4-1.7 5.4-2.4 5.3-3.4 5.2-4.5 5.1-5.6 5.1-6.4 5.1-6.9 5-7.1 5.1-7.1 5.1-6.8 5.1-6.2 5.1-5.7 5.2-5.1 5.2-4.6 5.3-4.3 5.2-4 5.3-4 5.2-4.1 5.3-4.3 5.2-4.6 5.2-4.9 5.2-5.1M329.9 484.1l9.3 9.2 9.3 8.4 9.1 6.7 9 4.5 8.8 1.9 8.7-.2 8.6-1.1 8.7-.4 8.8 1.6 8.9 3.8 9 4.8 9 4.2 8.9 2.3 8.6-.1 8.6-2.3 8.4-4 8.4-4.8 8.4-4.6 8.4-3.7 8.6-2.1 8.7-.1 8.8 1.9 8.9 3.7 9 5 9.1 5.8 9.1 6.1 9.1 5.6 9 5 8.9 3.9 8.9 2.8 8.8 1.9 8.8 .9 8.7 .4 8.7 .2 8.7 .1 8.7 .5 8.8 .9 8.8 1.4 8.8 2 8.8 2.4 8.9 2.7 8.9 2.9 8.9 3 8.9 2.8 8.8 2.6 8.9 2.3 8.8 2 8.8 1.7 8.8 1.5 8.8 1.3M363.7 527.7l5.6 1.9 5.7 2.5 5.7 1.9 5.5 0 5.3-2.9 5.1-6.9 4.8-11.1 4.5-15.2 4.3-18.1 4.4-17.5 5.3-2.7 6.1 8.1 6 7.4 5.8 4.1 5.5 0 5.3-4.2 5-7.9 4.8-10.6 4.7-12.1 4.7-12.5 4.8-11.6 4.8-10.2 5-8.1 5.1-6 5.3-4.1 5.3-2.7 5.4-1.8 5.5-1.5 5.4-1.8 5.3-2.5 5.3-3.5 5.2-4.5 5.2-5.7 5.1-6.4 5-7 5.1-7.1 5-7.2 5.1-6.7 5.1-6.3 5.2-5.7 5.2-5.1 5.2-4.6 5.2-4.2 5.3-4 5.2-3.9 5.3-4 5.3-4.2 5.2-4.4 5.2-4.7 5.2-5M335.3 481.4l9.3 9.3 9.2 8.2 9.1 5.9 8.9 3.1 8.7-.2 8.5-2.9 8.4-4.2 8.5-2.7 8.8 1.4 9.1 6 9.2 8 9.2 7.1 9 4.6 8.8 1.5 8.6-1.4 8.4-3.6 8.4-4.9 8.3-5 8.5-4.1 8.5-2.7 8.6-.7 8.8 1.4 8.9 3.3 9 4.8 9.1 5.6 9.1 6 9 5.7 9.1 5 8.9 4 8.9 2.9 8.8 1.8 8.8 1 8.7 .4 8.7 .1 8.7 .1 8.7 .4 8.8 .9 8.7 1.4 8.9 1.9 8.8 2.4 8.9 2.8 8.9 3 8.9 3 8.9 2.9 8.8 2.7 8.9 2.4 8.8 2.2 8.8 1.8 8.8 1.6 8.8 1.4M372.5 529.7l5.7 1.9 5.7 2.4 5.6 1.9 5.5 0 5.3-3 5.1-7 4.8-11.2 4.5-15.4 4.3-18.4 2.1-28 7.6 7.3 6.1 9.1 6 7.8 5.9 4.5 5.5 .2 5.2-4.1 5.1-7.9 4.8-10.6 4.7-12.1 4.7-12.6 4.7-11.8 4.9-10.3 4.9-8.3 5.1-6.2 5.3-4.4 5.3-2.8 5.4-2 5.4-1.7 5.4-1.9 5.4-2.6 5.3-3.6 5.2-4.7 5.1-5.7 5.1-6.4 5.1-7.1 5-7.2 5.1-7.1 5-6.8 5.1-6.3 5.2-5.7 5.2-5.1 5.2-4.6 5.2-4.2 5.3-3.9 5.3-3.9 5.2-3.9 5.3-4 5.2-4.4 5.3-4.5 5.2-4.8M340.6 477.9l9.3 9.3 9.2 7.8 9 5.3 8.8 1.7 8.6-2.1 8.3-5.7 8.2-7.9 8.2-6.5 8.8 1.1 9.3 9.7 9.5 11.9 9.4 10.2 9.1 6.8 8.9 3 8.7-.6 8.4-3.2 8.4-4.8 8.4-5.2 8.4-4.6 8.4-3 8.7-1.2 8.7 1 8.9 3 9 4.5 9.1 5.5 9 5.8 9.1 5.6 9 5 9 4 8.9 2.9 8.8 1.8 8.7 1 8.7 .4 8.7 0 8.7 .1 8.7 .4 8.8 .8 8.8 1.3 8.8 2 8.9 2.4 8.8 2.8 8.9 3.1 8.9 3.1 8.9 3 8.9 2.9 8.9 2.5 8.8 2.3 8.8 2 8.8 1.7 8.8 1.5M381.3 531l5.6 1.7 5.7 2.3 5.7 1.9 5.5 .1 5.3-2.5 5.2-6.1 4.8-9.9 4.7-13.2 4.5-14.7 4.7-12.2 5.3-3.7 5.8 3.6 5.8 4.8 5.7 2.7 5.5-1 5.2-4.8 5-8.2 4.8-10.9 4.7-12.2 4.7-12.6 4.7-11.8 4.9-10.3 4.9-8.3 5.1-6.3 5.3-4.4 5.3-3 5.4-2.1 5.4-1.9 5.4-2 5.3-2.8 5.3-3.8 5.2-4.7 5.1-5.8 5.1-6.5 5.1-7 5-7.3 5.1-7.1 5.1-6.8 5.1-6.2 5.1-5.7 5.2-5.1 5.2-4.6 5.3-4.1 5.2-4 5.3-3.8 5.3-3.9 5.2-4 5.3-4.2 5.2-4.5 5.2-4.7M345.8 473.4l9.3 9.3 9.2 7.6 9 4.8 8.8 1.1 8.5-3.3 8.1-7.5 8-10.9 7.9-12.2 6.5-9.4 11.9 25.5 9.8 15.4 9.5 12.3 9.2 8.2 8.9 3.8 8.7-.1 8.5-3 8.4-4.7 8.3-5.4 8.4-4.8 8.5-3.3 8.6-1.4 8.7 .7 8.9 2.7 9 4.2 9 5.3 9.1 5.7 9 5.5 9 4.9 9 3.9 8.9 2.9 8.8 1.8 8.7 .9 8.8 .3 8.7 0 8.6 .1 8.8 .3 8.7 .8 8.8 1.3 8.8 2 8.9 2.5 8.8 2.8 8.9 3.2 8.9 3.2 8.9 3.1 8.9 3 8.9 2.7 8.9 2.4 8.8 2.2 8.8 1.8 8.8 1.7M390 531.8l5.7 1.3 5.6 2 5.7 1.8 5.5 .5 5.4-1.7 5.2-4.7 5-7.7 4.9-10 4.8-10.8 5-8.7 5.2-4.2 5.5 0 5.6 1.2 5.5-.1 5.4-2.9 5.1-6 4.9-9 4.8-11.2 4.7-12.4 4.7-12.5 4.8-11.6 4.8-10.1 5-8.2 5.1-6.2 5.2-4.4 5.4-3 5.3-2.2 5.4-2 5.4-2.2 5.3-2.9 5.3-3.9 5.2-4.9 5.2-5.8 5-6.5 5.1-7 5-7.2 5.1-7.1 5.1-6.8 5.1-6.2 5.1-5.6 5.2-5.1 5.2-4.6 5.3-4.2 5.3-3.9 5.2-3.9 5.3-3.9 5.2-4 5.3-4.3 5.2-4.4 5.2-4.6M351 468l9.3 9.2 9.2 7.6 9 4.9 8.7 1.2 8.5-3.1 8.3-7.2 8-10.3 7.9-10.7 8.8 .6 9.6 14.5 9.7 14.9 9.5 12.1 9.2 8.1 9 3.8 8.7-.1 8.4-3 8.4-4.9 8.4-5.4 8.3-4.9 8.5-3.4 8.6-1.6 8.7 .6 8.9 2.5 8.9 4.1 9.1 5.1 9 5.5 9.1 5.4 9 4.7 8.9 3.9 8.9 2.7 8.8 1.7 8.7 .9 8.7 .2 8.7 0 8.7 0 8.7 .4 8.8 .7 8.8 1.4 8.8 2 8.8 2.5 8.9 2.9 8.9 3.2 8.9 3.3 9 3.3 8.9 3 8.8 2.9 8.9 2.6 8.8 2.2 8.9 2.1 8.8 1.8M398.8 532.1l5.5 .7 5.7 1.5 5.6 1.7 5.6 .8 5.4-.9 5.3-3 5.2-5.4 5.1-7.1 5-7.7 5.1-6.6 5.2-4.4 5.4-2.3 5.4-1.8 5.3-2.8 5.2-4.9 5-7.5 4.9-9.8 4.8-11.6 4.7-12.3 4.7-12.3 4.8-11.2 4.8-9.8 5-7.8 5.2-5.9 5.2-4.3 5.3-3 5.4-2.2 5.4-2 5.4-2.4 5.3-3 5.3-4 5.2-4.9 5.1-5.9 5.1-6.5 5-7 5.1-7.1 5.1-7 5-6.7 5.2-6.2 5.1-5.6 5.2-5 5.2-4.6 5.3-4.3 5.2-4 5.3-3.9 5.2-4.1 5.3-4.1 5.2-4.3 5.2-4.5 5.3-4.6M356.1 461.7l9.3 9.1 9.2 7.8 9 5.4 8.9 2 8.5-1.6 8.4-4.9 8.2-6.7 8.4-5.1 8.8 1.6 9.3 9 9.4 11.3 9.4 9.8 9.1 6.6 8.9 2.8 8.6-.6 8.5-3.3 8.4-5 8.3-5.4 8.4-4.8 8.4-3.4 8.6-1.5 8.8 .5 8.8 2.5 9 4 9 5 9 5.3 9.1 5.2 9 4.6 8.9 3.7 8.9 2.6 8.8 1.6 8.7 .8 8.7 .2 8.7 0 8.7 0 8.7 .3 8.8 .8 8.7 1.4 8.9 2 8.8 2.6 8.9 2.9 8.9 3.3 8.9 3.3 8.9 3.3 8.9 3.2 8.9 2.9 8.9 2.7 8.9 2.4 8.8 2.3 8.8 2M407.4 532.1l5.6-.2 5.5 1 5.7 1.3 5.5 .9 5.6-.1 5.4-1.8 5.3-3.4 5.2-4.8 5.1-5.5 5.2-5.2 5.2-4.5 5.3-3.8 5.3-3.9 5.2-5 5-6.7 5-8.7 4.8-10.5 4.8-11.8 4.7-12.1 4.7-11.9 4.8-10.7 4.9-9.2 5.1-7.3 5.1-5.5 5.3-4 5.3-2.8 5.4-2.2 5.4-2.1 5.4-2.4 5.3-3.2 5.2-4 5.2-5 5.2-5.8 5.1-6.5 5-6.9 5.1-7 5-6.9 5.1-6.6 5.2-6 5.1-5.6 5.2-5 5.2-4.6 5.3-4.4 5.2-4.1 5.3-4.2 5.2-4.2 5.2-4.3 5.3-4.5 5.2-4.6 5.2-4.7M361.1 454.5l9.3 9 9.2 8.1 9.1 6.1 8.9 3.4 8.8 .5 8.5-2 8.5-2.9 8.6-1.6 8.8 2 9.1 6 9.2 7.7 9.2 6.8 9 4.5 8.7 1.4 8.6-1.5 8.5-3.8 8.3-5.1 8.4-5.3 8.4-4.6 8.4-3.2 8.6-1.3 8.8 .7 8.8 2.5 9 4 9 4.9 9.1 5.3 9 5 9 4.4 8.9 3.5 8.8 2.5 8.8 1.5 8.8 .7 8.7 .2 8.7 0 8.7 .1 8.7 .3 8.7 .9 8.8 1.4 8.8 2.1 8.9 2.5 8.9 3 8.9 3.2 8.9 3.3 8.9 3.3 8.9 3.2 8.9 3 8.9 2.8 8.9 2.5 8.8 2.4 8.8 2.2M416.1 531.9l5.5-1 5.5 .1 5.6 .7 5.6 .8 5.5 .2 5.5-.9 5.3-2.1 5.4-3.2 5.2-4 5.2-4.4 5.3-4.5 5.2-4.8 5.1-5.3 5.1-6.5 5-8 4.9-9.6 4.8-10.9 4.8-11.6 4.7-11.8 4.8-11.1 4.9-10 4.9-8.4 5.1-6.7 5.2-5 5.3-3.6 5.3-2.6 5.4-2.1 5.4-2.1 5.4-2.5 5.3-3.2 5.2-4 5.2-5 5.2-5.8 5.1-6.4 5-6.8 5.1-6.8 5.1-6.8 5.1-6.3 5.1-6 5.2-5.5 5.2-5 5.2-4.7 5.2-4.5 5.3-4.3 5.2-4.3 5.2-4.5 5.2-4.6 5.2-4.7 5.2-4.9 5.2-4.9M366.1 446.5l9.3 8.8 9.2 8.2 9.2 6.9 9 4.8 8.8 2.6 8.8 .8 8.7 0 8.7 .6 8.9 2.4 8.9 4.2 9 4.9 9 4.1 8.9 2.3 8.6-.1 8.6-2.4 8.4-4.2 8.3-5.1 8.4-5.1 8.4-4.2 8.5-2.8 8.6-.9 8.8 1 8.9 2.7 8.9 4.1 9.1 4.8 9 5.2 9 4.9 9 4.2 8.9 3.4 8.8 2.3 8.8 1.5 8.8 .7 8.7 .2 8.7 0 8.7 .1 8.7 .5 8.7 .9 8.8 1.5 8.9 2 8.8 2.6 8.9 2.9 8.9 3.2 8.9 3.2 8.9 3.3 8.9 3.1 8.9 3 8.9 2.7 8.8 2.6 8.9 2.5 8.8 2.3M424.8 532l5.4-2.2 5.5-.9 5.5-.1 5.5 .3 5.6 .1 5.4-.5 5.5-1.3 5.4-2.3 5.3-3.2 5.2-3.9 5.3-4.5 5.1-5.3 5.1-6.2 5.1-7.4 4.9-8.8 4.9-9.9 4.8-10.9 4.8-11.2 4.8-11.1 4.8-10.3 4.9-9.1 5-7.5 5.2-5.9 5.2-4.4 5.3-3.2 5.4-2.3 5.4-1.9 5.4-2.1 5.3-2.4 5.3-3.3 5.3-4.1 5.2-4.9 5.1-5.7 5.1-6.3 5.1-6.6 5.1-6.7 5.1-6.5 5.1-6.2 5.2-5.8 5.1-5.4 5.2-5.1 5.2-4.7 5.2-4.6 5.3-4.5 5.2-4.6 5.2-4.8 5.2-4.9 5.2-5.1 5.1-5.2 5.2-5.3M371.1 437.9l9.2 8.3 9.2 8.2 9.2 7.4 9.1 6 9 4.3 8.9 3 8.8 2.1 8.8 2 8.9 2.6 8.9 3 8.9 3 8.8 2.1 8.7 .5 8.6-1.4 8.5-3.2 8.4-4.4 8.4-4.9 8.4-4.6 8.4-3.7 8.6-2.2 8.6-.3 8.8 1.4 8.9 3 9 4.3 9 4.9 9 5.1 9 4.7 9 4.2 8.9 3.2 8.9 2.3 8.7 1.4 8.8 .7 8.7 .3 8.7 .1 8.7 .2 8.7 .5 8.8 1 8.8 1.5 8.8 2.1 8.9 2.5 8.8 2.8 8.9 3.1 8.9 3.1 8.9 3.2 8.9 2.9 8.9 2.9 8.9 2.7 8.8 2.5 8.9 2.4 8.8 2.4M433.6 532.5l5.3-3.3 5.3-2.1 5.5-1.1 5.5-.5 5.5-.3 5.5-.6 5.4-1.2 5.4-1.9 5.3-2.8 5.3-3.7 5.2-4.5 5.2-5.6 5.1-6.7 5-7.8 4.9-9 4.9-9.9 4.8-10.4 4.8-10.6 4.9-10.2 4.9-9.2 5-8.1 5.1-6.5 5.2-5.1 5.2-3.7 5.4-2.7 5.4-2 5.4-1.7 5.4-2 5.3-2.5 5.3-3.2 5.3-4.1 5.2-4.9 5.1-5.7 5.2-6.1 5.1-6.4 5.1-6.5 5.1-6.3 5.1-6 5.1-5.7 5.2-5.3 5.2-5 5.2-4.8 5.2-4.7 5.2-4.8 5.2-4.8 5.2-5.1 5.2-5.3 5.1-5.5 5.2-5.6 5.1-5.7M376 428.9l9.2 7.7 9.2 7.9 9.2 7.5 9.1 6.7 9.1 5.5 9 4.4 8.9 3.4 8.9 3 8.8 2.7 8.9 2.3 8.8 1.8 8.7 .6 8.7-.7 8.5-2.3 8.5-3.5 8.4-4.4 8.4-4.5 8.4-3.9 8.5-2.9 8.6-1.4 8.7 .3 8.8 2 9 3.4 9 4.5 9 5 9 5.1 9 4.7 9 4 8.9 3.2 8.8 2.2 8.8 1.4 8.7 .7 8.7 .4 8.8 .2 8.7 .3 8.7 .7 8.8 1.1 8.8 1.6 8.8 2 8.8 2.5 8.9 2.7 8.9 2.9 8.9 3 8.9 2.9 8.8 2.7 8.9 2.7 8.9 2.4 8.8 2.4 8.9 2.4 8.8 2.3M442.3 533.7l5.2-4.5 5.4-3.3 5.3-2.2 5.5-1.5 5.4-1.1 5.5-1.1 5.4-1.4 5.4-2 5.3-2.7 5.3-3.6 5.2-4.7 5.2-5.7 5-6.8 5-7.8 5-8.8 4.9-9.5 4.9-9.7 4.8-9.7 5-9.1 4.9-8.2 5.1-6.9 5.2-5.5 5.2-4.2 5.3-3.1 5.4-2.1 5.4-1.7 5.4-1.7 5.4-1.9 5.4-2.5 5.3-3.2 5.3-4.1 5.2-4.9 5.1-5.6 5.1-6 5.1-6.2 5.1-6.3 5.2-6.1 5.1-5.8 5.2-5.6 5.1-5.1 5.2-5 5.2-4.8 5.2-4.8 5.2-5 5.2-5.1 5.2-5.4 5.1-5.6 5.2-5.9 5.1-6.1 5.1-6.1M380.9 419.9l9.2 6.8 9.1 7.3 9.2 7.3 9.2 6.8 9.1 6.1 9 5.2 9 4.2 8.9 3.5 8.9 2.7 8.8 2 8.7 1 8.7-.2 8.6-1.4 8.5-2.7 8.5-3.5 8.4-3.9 8.5-3.8 8.4-3.2 8.6-1.9 8.7-.5 8.7 1.1 8.9 2.7 8.9 3.9 9.1 4.7 9 5.2 9 5.1 9 4.7 9 3.9 8.9 3.1 8.8 2.2 8.8 1.4 8.7 .9 8.8 .4 8.7 .4 8.7 .5 8.7 .8 8.8 1.2 8.8 1.7 8.8 2 8.9 2.4 8.9 2.6 8.8 2.7 8.9 2.7 8.9 2.6 8.8 2.5 8.9 2.3 8.8 2.2 8.8 2.1 8.9 2.1 8.8 2.2M451.1 535.7l5.2-5.5 5.2-4.5 5.3-3.4 5.4-2.5 5.4-2.1 5.4-1.8 5.4-1.9 5.3-2.4 5.4-2.9 5.2-3.8 5.3-4.7 5.1-5.7 5.1-6.7 5-7.6 5-8.3 4.9-8.8 4.9-9 5-8.6 5-8 5-6.9 5.2-5.9 5.2-4.5 5.3-3.4 5.4-2.4 5.4-1.7 5.4-1.5 5.4-1.5 5.4-1.9 5.4-2.5 5.3-3.4 5.2-4.1 5.2-4.9 5.2-5.6 5.1-5.9 5.1-6.1 5.2-6.1 5.1-5.9 5.1-5.7 5.2-5.3 5.2-5.1 5.2-4.9 5.2-4.8 5.2-4.8 5.2-5.1 5.2-5.3 5.1-5.6 5.1-6 5.1-6.3 5.1-6.5 5.1-6.6M385.9 411.3l9 5.7 9.2 6.4 9.1 6.7 9.1 6.6 9.1 6.1 9.1 5.4 9 4.6 8.9 3.7 8.9 2.7 8.8 1.7 8.7 .7 8.7-.6 8.6-1.6 8.5-2.5 8.5-3.1 8.4-3.3 8.5-2.9 8.6-2.1 8.6-.9 8.8 .6 8.8 2 8.9 3.3 9 4.4 9 5 9 5.3 9.1 5.2 9 4.6 8.9 3.9 8.9 3.1 8.9 2.2 8.7 1.5 8.8 .9 8.7 .6 8.8 .6 8.7 .7 8.8 1 8.7 1.3 8.8 1.7 8.9 2.1 8.8 2.3 8.9 2.5 8.8 2.4 8.9 2.4 8.8 2.3 8.8 2.1 8.9 1.9 8.8 1.8 8.8 1.8 8.8 1.8 8.8 2M460 538.6l5.1-6.4 5.2-5.5 5.2-4.4 5.3-3.7 5.3-3 5.4-2.7 5.3-2.6 5.4-2.8 5.3-3.4 5.2-4 5.2-4.8 5.2-5.6 5.1-6.5 5-7.2 5-7.8 5-8 5-8 5-7.6 5.1-6.8 5.1-5.9 5.2-4.8 5.3-3.6 5.4-2.7 5.4-1.8 5.4-1.4 5.4-1.3 5.5-1.5 5.4-2 5.3-2.6 5.3-3.5 5.2-4.3 5.2-5 5.2-5.6 5.1-5.9 5.1-6.1 5.2-6 5.1-5.8 5.2-5.5 5.1-5.2 5.2-4.9 5.2-4.7 5.3-4.8 5.2-4.8 5.1-5 5.2-5.4 5.1-5.8 5.2-6.2 5.1-6.6 5-6.8 5.1-7M390.9 403.4l9 4.5 9 5.4 9.1 5.9 9.1 5.9 9.1 5.8 9 5.3 9 4.5 8.9 3.7 8.9 2.7 8.8 1.6 8.7 .5 8.7-.5 8.6-1.4 8.5-2.2 8.6-2.4 8.5-2.4 8.6-1.8 8.6-1 8.7 .3 8.8 1.5 8.9 2.9 8.9 4 9 4.9 9.1 5.4 9 5.4 9.1 5.2 9 4.6 8.9 3.9 8.9 3 8.9 2.2 8.7 1.5 8.8 1.1 8.8 .7 8.7 .8 8.7 .9 8.8 1.1 8.8 1.5 8.8 1.8 8.8 2.1 8.9 2.3 8.8 2.3 8.9 2.3 8.8 2.1 8.8 1.9 8.8 1.7 8.8 1.5 8.8 1.3 8.8 1.4 8.8 1.4 8.8 1.6M469 542.3l5-7.1 5.1-6.2 5.2-5.3 5.2-4.6 5.3-4 5.3-3.5 5.3-3.4 5.3-3.4 5.2-3.7 5.3-4.3 5.2-4.9 5.1-5.6 5.1-6.3 5.1-6.8 5.1-7.2 5-7.2 5.1-7.1 5.1-6.5 5.1-5.9 5.2-4.8 5.3-3.9 5.3-2.9 5.4-2 5.4-1.5 5.4-1.2 5.5-1.2 5.4-1.6 5.4-2.1 5.3-3 5.3-3.7 5.2-4.6 5.2-5.2 5.1-5.7 5.2-6 5.1-6.1 5.1-6 5.2-5.7 5.1-5.4 5.2-5 5.2-4.8 5.2-4.6 5.3-4.5 5.2-4.7 5.2-5 5.1-5.3 5.2-5.8 5.1-6.3 5.1-6.7 5-7 5.1-7.3M395.9 396.5l9 3.4 8.9 4.3 9 4.9 9.1 5.1 9 5.2 9 4.8 9 4.3 8.9 3.4 8.9 2.6 8.8 1.6 8.7 .6 8.7-.3 8.6-1 8.6-1.4 8.6-1.6 8.6-1.3 8.6-.8 8.7 .3 8.8 1.3 8.9 2.6 8.9 3.7 9 4.6 9.1 5.3 9 5.7 9.1 5.5 9 5.2 9 4.5 9 3.8 8.8 2.9 8.9 2.2 8.8 1.5 8.7 1.2 8.8 .9 8.8 .9 8.7 1.1 8.8 1.4 8.8 1.6 8.8 2 8.9 2.1 8.8 2.3 8.8 2.2 8.9 2.1 8.8 1.8 8.8 1.6 8.8 1.3 8.7 1.1 8.8 .9 8.7 .9 8.8 .9 8.7 1.2M477.9 546.7l5.1-7.4 5.1-6.8 5.1-6 5.2-5.3 5.2-4.7 5.2-4.3 5.3-4.1 5.2-4 5.3-4.2 5.2-4.5 5.2-5.1 5.1-5.5 5.1-6.1 5.1-6.4 5.1-6.6 5.1-6.6 5.1-6.3 5.2-5.6 5.2-5 5.2-4 5.3-3.2 5.4-2.2 5.4-1.7 5.5-1.2 5.4-1.1 5.5-1.3 5.4-1.8 5.3-2.5 5.3-3.3 5.3-4.2 5.2-4.9 5.1-5.6 5.1-6 5.2-6.3 5.1-6.2 5.1-6 5.1-5.7 5.2-5.3 5.2-5 5.2-4.5 5.3-4.4 5.2-4.3 5.2-4.5 5.2-4.7 5.2-5.1 5.2-5.6 5.1-6.2 5.1-6.6 5-7.1 5.1-7.4M401.1 390.8l8.8 2.4 8.9 3.2 9 3.9 9 4.3 9 4.4 8.9 4.2 9 3.9 8.9 3.2 8.8 2.4 8.8 1.6 8.8 .8 8.7 .1 8.6-.5 8.7-.7 8.6-.7 8.7-.3 8.7 .4 8.8 1.3 8.8 2.4 9 3.5 8.9 4.4 9.1 5.2 9 5.7 9.1 5.8 9.1 5.5 9 5.1 9 4.4 8.9 3.6 8.9 2.8 8.8 2.1 8.8 1.6 8.8 1.1 8.8 1 8.7 1.1 8.8 1.3 8.8 1.5 8.8 1.8 8.8 2.1 8.9 2.3 8.8 2.3 8.9 2.2 8.8 2 8.8 1.7 8.8 1.3 8.7 1 8.8 .7 8.7 .5 8.7 .4 8.7 .5 8.8 .7M487 551.6l5-7.5 5-7.1 5.1-6.4 5.2-5.8 5.2-5.3 5.2-4.9 5.2-4.6 5.2-4.5 5.2-4.6 5.2-4.8 5.2-5.2 5.2-5.6 5.1-5.9 5.1-6.1 5.1-6.2 5.1-6 5.2-5.6 5.2-5 5.2-4.3 5.3-3.4 5.4-2.6 5.4-1.8 5.4-1.4 5.5-1.2 5.4-1.2 5.4-1.5 5.4-2.2 5.3-3 5.3-3.8 5.2-4.8 5.2-5.5 5.1-6.1 5.1-6.4 5.1-6.6 5.1-6.5 5.1-6.2 5.1-5.7 5.2-5.3 5.2-4.8 5.2-4.4 5.3-4.2 5.2-4 5.3-4.1 5.2-4.3 5.2-4.7 5.2-5.2 5.2-5.8 5.1-6.4 5-6.9 5.1-7.4M406.3 386.4l8.8 1.6 8.9 2.3 8.8 2.9 9 3.5 8.9 3.6 8.9 3.6 8.9 3.4 8.9 2.8 8.9 2.3 8.8 1.6 8.7 1 8.7 .4 8.7 .1 8.7 .1 8.7 .2 8.8 .7 8.8 1.4 8.8 2.3 8.9 3.3 9 4.2 9 5.1 9.1 5.6 9.1 5.8 9 5.9 9.1 5.4 9 4.9 9 4.2 8.9 3.4 8.9 2.5 8.8 1.9 8.8 1.4 8.7 1.2 8.8 1 8.8 1.1 8.7 1.4 8.8 1.7 8.9 2 8.8 2.3 8.9 2.4 8.8 2.4 8.9 2.3 8.8 2.1 8.8 1.6 8.8 1.2 8.7 .8 8.7 .5 8.7 .1 8.7 .1 8.7 0 8.7 .3M496 556.6l5-7.3 5.1-7.1 5.1-6.5 5.1-6.1 5.1-5.6 5.2-5.3 5.2-5 5.2-4.9 5.2-4.9 5.2-5.1 5.2-5.4 5.1-5.6 5.1-5.9 5.2-5.9 5.1-5.9 5.2-5.6 5.1-5.1 5.3-4.5 5.2-3.8 5.4-3 5.3-2.2 5.5-1.7 5.4-1.3 5.4-1.2 5.5-1.5 5.4-2 5.3-2.7 5.3-3.6 5.2-4.5 5.2-5.5 5.1-6.2 5.1-6.7 5-7 5.1-7.1 5-6.8 5.1-6.4 5.2-5.9 5.2-5.3 5.2-4.7 5.2-4.2 5.3-3.9 5.3-3.7 5.2-3.6 5.3-3.9 5.3-4.1 5.2-4.7 5.1-5.2 5.2-5.9 5.1-6.5 5-7.1M411.6 383.1l8.8 1 8.8 1.6 8.8 2.3 8.9 2.7 8.9 2.9 8.9 3 8.9 2.9 8.8 2.5 8.8 2.1 8.8 1.6 8.8 1.1 8.7 .8 8.8 .6 8.7 .7 8.8 1 8.8 1.5 8.8 2.3 8.9 3.1 9 4 9 4.9 9 5.4 9.1 5.9 9.1 5.9 9.1 5.7 9 5.3 9 4.6 8.9 3.8 8.9 3 8.9 2.2 8.8 1.6 8.7 1.1 8.8 1 8.8 1 8.7 1.2 8.8 1.4 8.8 1.9 8.9 2.1 8.8 2.5 8.9 2.7 8.9 2.6 8.8 2.5 8.8 2.2 8.9 1.8 8.7 1.3 8.8 .7 8.7 .4 8.7-.1 8.7-.2 8.6-.3 8.7-.2M505 561.6l5.1-7.1 5-6.8 5.1-6.4 5.2-6.1 5.1-5.8 5.2-5.4 5.1-5.3 5.2-5.1 5.2-5.2 5.2-5.4 5.1-5.5 5.2-5.7 5.1-5.9 5.1-5.8 5.2-5.7 5.2-5.4 5.2-4.9 5.2-4.2 5.3-3.4 5.3-2.7 5.4-2.1 5.4-1.6 5.5-1.5 5.4-1.4 5.4-1.9 5.3-2.5 5.3-3.4 5.3-4.4 5.1-5.4 5.2-6.3 5-7 5-7.5 5.1-7.6 5-7.6 5-7.2 5.1-6.7 5.1-6 5.2-5.4 5.2-4.6 5.3-4.1 5.2-3.6 5.4-3.4 5.3-3.2 5.3-3.2 5.3-3.5 5.2-4 5.3-4.5 5.1-5.1 5.2-5.9 5.1-6.5M417 380.7l8.7 .7 8.8 1.2 8.8 1.7 8.8 2.2 8.9 2.4 8.8 2.5 8.9 2.4 8.8 2.2 8.8 1.9 8.8 1.5 8.8 1.2 8.8 1.1 8.7 1 8.8 1.2 8.8 1.6 8.8 2.2 8.9 2.9 9 3.8 9 4.6 9 5.2 9.1 5.7 9.1 5.9 9 5.9 9.1 5.5 9 4.9 9 4.1 8.9 3.3 8.8 2.4 8.8 1.7 8.8 1.2 8.8 .8 8.7 .7 8.7 .8 8.8 1.1 8.8 1.5 8.8 1.9 8.9 2.4 8.8 2.7 8.9 2.9 8.9 2.9 8.9 2.9 8.8 2.5 8.9 2.1 8.8 1.5 8.7 1 8.7 .5 8.7-.1 8.7-.3 8.7-.5 8.6-.5M514 566.1l5.1-6.5 5.1-6.5 5.1-6.2 5.1-5.9 5.2-5.7 5.1-5.4 5.2-5.4 5.2-5.3 5.2-5.3 5.1-5.6 5.2-5.7 5.1-5.8 5.1-6 5.2-5.9 5.1-5.6 5.2-5.3 5.2-4.7 5.2-4.1 5.3-3.3 5.4-2.6 5.4-2.1 5.4-1.7 5.4-1.6 5.4-1.8 5.4-2.4 5.3-3.3 5.2-4.1 5.2-5.3 5.1-6.3 5.1-7.3 5-7.9 4.9-8.2 5-8.3 5-8.1 5-7.6 5.1-6.9 5.1-6.2 5.2-5.4 5.2-4.6 5.2-4 5.3-3.4 5.4-3 5.3-2.8 5.3-2.7 5.4-2.8 5.3-3.2 5.3-3.6 5.2-4.3 5.2-5 5.1-5.8M422.4 378.9l8.7 .6 8.8 1 8.8 1.5 8.8 1.7 8.8 2.1 8.8 2.1 8.9 2.1 8.8 1.9 8.8 1.6 8.8 1.5 8.7 1.2 8.8 1.2 8.8 1.3 8.8 1.6 8.8 2 8.9 2.7 8.9 3.5 9 4.2 9 4.9 9 5.4 9.1 5.8 9.1 5.8 9.1 5.6 9 5.1 9 4.4 8.9 3.5 8.9 2.6 8.8 1.8 8.7 1 8.8 .6 8.7 .3 8.7 .4 8.7 .5 8.8 1 8.8 1.4 8.8 2.1 8.8 2.5 8.9 2.9 8.9 3.2 9 3.4 8.9 3.2 8.8 3 8.9 2.6 8.8 2 8.8 1.4 8.8 .8 8.7 .2 8.6-.3 8.7-.5 8.7-.7M523 570l5.1-6 5.1-5.9 5.1-5.8 5.2-5.6 5.2-5.5 5.1-5.3 5.2-5.3 5.2-5.4 5.1-5.5 5.2-5.7 5.1-5.9 5.1-6 5.2-6 5.1-6 5.1-5.7 5.2-5.3 5.2-4.7 5.3-4 5.3-3.3 5.3-2.6 5.4-2.2 5.4-1.9 5.4-1.9 5.4-2.3 5.3-3 5.3-4 5.1-5.1 5.2-6.2 5-7.3 5-8.2 4.9-8.8 4.9-9 5-8.9 4.9-8.5 5-7.9 5.1-7 5.1-6.3 5.2-5.3 5.2-4.7 5.3-3.9 5.3-3.3 5.3-2.9 5.4-2.5 5.3-2.2 5.4-2.2 5.4-2.4 5.3-2.7 5.3-3.3 5.3-4 5.2-4.9M427.8 377.3l8.7 .7 8.8 1.1 8.8 1.3 8.8 1.7 8.8 1.8 8.8 1.8 8.8 1.8 8.8 1.7 8.8 1.5 8.8 1.3 8.8 1.2 8.7 1.2 8.8 1.5 8.8 1.8 8.9 2.3 8.9 3 8.9 3.8 9 4.4 9 5.1 9.1 5.5 9.1 5.7 9 5.6 9.1 5.1 8.9 4.6 9 3.6 8.9 2.8 8.8 1.8 8.7 1 8.7 .3 8.7-.1 8.7-.2 8.7-.1 8.7 .2 8.7 .8 8.8 1.4 8.8 2 8.9 2.6 8.9 3.2 8.9 3.6 9 3.7 8.9 3.8 9 3.5 8.9 3.2 8.8 2.7 8.9 2 8.7 1.4 8.8 .7 8.7 .1 8.6-.4 8.7-.7M531.9 573.2l5.1-5.5 5.2-5.4 5.2-5.3 5.1-5.2 5.2-5.2 5.2-5.2 5.2-5.2 5.1-5.3 5.2-5.6 5.1-5.8 5.2-6 5.1-6.2 5.1-6.2 5.1-6.1 5.1-5.9 5.2-5.3 5.2-4.7 5.3-4.1 5.3-3.3 5.3-2.7 5.4-2.3 5.4-2.1 5.3-2.3 5.4-2.8 5.3-3.7 5.2-4.8 5.1-6 5-7.2 5-8.3 4.9-9.1 4.9-9.6 4.9-9.6 4.9-9.4 5-8.7 5-7.9 5-7 5.1-6.2 5.2-5.3 5.2-4.6 5.3-3.9 5.3-3.4 5.3-2.9 5.4-2.5 5.4-2 5.4-1.7 5.4-1.7 5.4-1.9 5.4-2.3 5.3-3 5.2-3.9M433.2 375.4l8.8 1.1 8.7 1.3 8.8 1.5 8.8 1.6 8.8 1.7 8.8 1.7 8.8 1.7 8.8 1.4 8.8 1.3 8.8 1.2 8.7 1.1 8.8 1.2 8.8 1.5 8.8 1.9 8.9 2.5 8.9 3.2 8.9 3.8 9 4.6 9.1 5.1 9 5.4 9.1 5.5 9 5.2 9 4.6 8.9 3.9 8.9 2.9 8.8 1.8 8.8 .9 8.7 .1 8.6-.5 8.7-.9 8.6-.8 8.7-.6 8.7-.1 8.7 .6 8.8 1.3 8.8 2.1 8.9 2.7 8.9 3.4 8.9 3.8 9 4.2 9 4.2 8.9 4.2 9 4 8.9 3.4 8.9 2.9 8.8 2.1 8.8 1.4 8.7 .6 8.7 0 8.7-.4M540.7 575.6l5.2-5 5.2-4.9 5.2-4.9 5.2-4.8 5.2-4.9 5.2-4.9 5.2-5 5.2-5.3 5.1-5.6 5.1-5.9 5.2-6.2 5.1-6.3 5.1-6.4 5.1-6.3 5.1-5.9 5.2-5.5 5.2-4.8 5.2-4.1 5.3-3.3 5.4-2.8 5.3-2.5 5.4-2.3 5.3-2.7 5.3-3.4 5.3-4.3 5.1-5.6 5.1-6.9 5-8.2 4.9-9.2 4.9-9.9 4.8-10.2 4.9-10.1 4.9-9.5 4.9-8.7 5-7.6 5.1-6.7 5.1-5.8 5.2-5.1 5.2-4.6 5.3-4.1 5.3-3.7 5.3-3.2 5.3-2.7 5.4-2.1 5.4-1.6 5.5-1.3 5.4-1.2 5.4-1.4 5.4-1.9 5.4-2.8M438.6 373.1l8.8 1.5 8.8 1.6 8.8 1.7 8.8 1.8 8.8 1.7 8.8 1.7 8.8 1.5 8.8 1.3 8.7 1.1 8.8 1 8.7 1 8.8 1.2 8.8 1.4 8.8 1.9 8.9 2.5 8.9 3.3 8.9 3.9 9 4.6 9.1 5 9 5.3 9 5.1 9 4.7 9 4 8.9 3.1 8.8 2 8.8 .9 8.6-.1 8.7-.9 8.6-1.3 8.6-1.6 8.6-1.4 8.6-1 8.7-.3 8.7 .4 8.8 1.3 8.8 2.1 8.9 2.8 8.9 3.5 8.9 4 9 4.5 9 4.7 9 4.7 9 4.7 9 4.3 9 3.8 8.9 3 8.8 2.3 8.8 1.4 8.7 .6 8.7-.1M549.5 577.2l5.2-4.6 5.2-4.5 5.3-4.4 5.2-4.5 5.2-4.5 5.2-4.7 5.2-4.9 5.2-5.2 5.2-5.6 5.1-6 5.1-6.2 5.1-6.5 5.1-6.6 5.1-6.4 5.1-6.1 5.2-5.5 5.2-4.9 5.2-4.1 5.3-3.4 5.3-2.9 5.4-2.6 5.4-2.6 5.3-3 5.2-3.9 5.2-5 5.1-6.3 5-7.7 5-9 4.8-10 4.9-10.6 4.8-10.6 4.8-10.2 4.9-9.3 5-8.3 5.1-7 5.1-6 5.2-5.2 5.2-4.7 5.2-4.5 5.2-4.4 5.3-4.2 5.3-3.9 5.3-3.4 5.3-2.7 5.4-1.8 5.4-1.2 5.5-.7 5.5-.7 5.5-1 5.4-1.7M443.9 369.9l8.8 2 8.8 2 8.9 2 8.8 2 8.8 1.9 8.8 1.7 8.8 1.4 8.8 1.2 8.7 1 8.8 .9 8.7 .8 8.8 1 8.8 1.4 8.8 1.8 8.8 2.6 8.9 3.2 9 3.9 9 4.6 9 4.9 9 4.9 9 4.8 9 4.2 8.9 3.3 8.8 2.2 8.8 1.1 8.7-.1 8.6-1.1 8.6-1.8 8.5-2.1 8.6-2.2 8.6-1.8 8.6-1.3 8.6-.4 8.8 .4 8.7 1.4 8.9 2.1 8.8 2.8 9 3.5 8.9 4.1 9 4.6 9 4.9 9.1 5.2 9 5.3 9.1 5.1 9 4.7 8.9 4.1 8.9 3.3 8.9 2.3 8.8 1.4 8.7 .5M558.3 578.1l5.2-4.2 5.2-4.2 5.3-4.1 5.2-4.1 5.3-4.3 5.2-4.5 5.2-4.8 5.2-5.1 5.2-5.6 5.1-6 5.1-6.4 5.1-6.6 5-6.7 5.1-6.6 5.2-6.1 5.1-5.6 5.2-4.9 5.3-4.1 5.3-3.4 5.3-2.9 5.3-2.7 5.4-2.8 5.3-3.3 5.2-4.3 5.2-5.6 5-7 5-8.5 4.9-9.7 4.8-10.6 4.8-11 4.8-10.7 4.9-10 4.9-8.8 5-7.4 5.2-6 5.2-4.8 5.2-4.2 5.3-4.1 5.2-4.3 5.2-4.8 5.2-5.1 5.2-5.1 5.2-4.5 5.3-3.7 5.3-2.6 5.5-1.4 5.4-.6 5.6-.2 5.5-.2 5.4-.8M449.1 365.9l8.9 2.4 8.9 2.4 8.8 2.4 8.8 2.2 8.9 2.1 8.8 1.7 8.8 1.4 8.7 1.1 8.8 .9 8.7 .7 8.7 .7 8.8 .9 8.8 1.2 8.8 1.8 8.8 2.5 8.9 3.3 9 3.9 9 4.4 9 4.8 9 4.7 9 4.3 8.9 3.6 8.9 2.6 8.8 1.4 8.7 .1 8.6-1 8.5-2 8.6-2.6 8.5-2.8 8.5-2.6 8.5-2 8.7-1.2 8.6-.3 8.8 .6 8.8 1.5 8.8 2.3 8.9 2.8 8.9 3.4 8.9 3.9 9 4.4 9 4.9 9.1 5.4 9.1 5.7 9 5.7 9.1 5.6 9 5.1 9 4.3 8.9 3.4 8.9 2.3 8.7 1.2M567 578.7l5.2-4.1 5.3-3.9 5.3-3.9 5.2-4 5.3-4 5.2-4.4 5.2-4.6 5.2-5.2 5.2-5.6 5.1-6 5.1-6.5 5.1-6.7 5-6.8 5.1-6.6 5.1-6.2 5.2-5.6 5.2-4.9 5.2-4 5.3-3.4 5.4-2.9 5.3-2.6 5.4-3 5.2-3.6 5.3-4.6 5.1-6.1 5-7.5 4.9-9.1 4.9-10.3 4.8-11 4.7-11.2 4.9-10.6 4.9-9.5 5-7.9 5.1-6 5.2-4.4 5.3-3.3 5.4-2.7 5.3-3.2 5.2-4.1 5.2-5.4 5.1-6.3 5.1-6.7 5.1-6.3 5.2-5.2 5.2-3.7 5.4-2.1 5.5-.8 5.5 .1 5.6 .3 5.5 0M454.3 361l8.9 2.8 8.9 2.8 8.9 2.6 8.8 2.5 8.9 2.2 8.8 1.8 8.8 1.4 8.7 1 8.8 .8 8.7 .5 8.7 .6 8.8 .8 8.7 1.2 8.8 1.8 8.9 2.4 8.9 3.3 9 3.9 8.9 4.4 9 4.6 9 4.4 9 4 8.9 3 8.8 1.9 8.7 .6 8.7-.8 8.5-1.9 8.5-2.8 8.5-3.2 8.5-3.2 8.5-2.7 8.6-1.9 8.6-.9 8.7 .2 8.8 1.2 8.8 1.9 8.8 2.4 8.9 2.8 8.9 3.1 8.9 3.4 9 3.9 9 4.5 9 5.1 9.1 5.8 9.1 6.2 9.1 6.2 9.1 6 9 5.4 9 4.4 8.9 3.3 8.8 2M575.7 579l5.3-4 5.2-3.8 5.3-3.8 5.3-3.9 5.2-3.9 5.3-4.2 5.2-4.7 5.2-5.1 5.1-5.6 5.1-6.1 5.1-6.5 5.1-6.8 5.1-6.9 5.1-6.6 5.1-6.2 5.1-5.6 5.2-4.7 5.3-4 5.3-3.2 5.3-2.8 5.4-2.7 5.3-2.9 5.3-3.8 5.2-4.9 5.1-6.4 5-8 4.9-9.6 4.8-10.7 4.8-11.3 4.8-11.1 4.8-10.3 4.9-8.7 5.1-6.6 5.3-4.4 5.3-2.4 5.5-1.2 5.4-.9 5.4-1.9 5.3-3.9 5.1-6.1 5-7.9 5-8.8 4.9-8.4 5.1-7.2 5.1-5.2 5.4-3.2 5.4-1.2 5.5 0 5.6 .7 5.6 .6M459.5 355.2l8.9 3.2 8.9 3 8.9 2.9 8.8 2.7 8.9 2.3 8.8 1.8 8.8 1.5 8.7 1 8.8 .6 8.7 .5 8.7 .4 8.8 .8 8.7 1.1 8.8 1.8 8.9 2.5 8.9 3.3 9 3.9 8.9 4.4 9 4.5 9 4.2 8.9 3.6 8.9 2.5 8.8 1.3 8.6-.2 8.6-1.5 8.5-2.7 8.5-3.4 8.5-3.7 8.4-3.3 8.6-2.5 8.6-1.4 8.6-.1 8.8 1.1 8.8 2.1 8.9 2.6 8.9 2.8 8.8 2.7 8.9 2.5 8.9 2.6 8.9 2.9 8.9 3.6 9 4.5 9 5.5 9.1 6.2 9.2 6.7 9.1 6.8 9.1 6.3 9.1 5.4 8.9 4.2 8.9 3M584.4 579.3l5.3-4 5.2-3.9 5.3-3.7 5.3-3.8 5.2-3.9 5.3-4.3 5.2-4.6 5.2-5.1 5.1-5.6 5.2-6.2 5-6.6 5.1-6.8 5.1-6.9 5.1-6.6 5.1-6.1 5.1-5.5 5.3-4.7 5.2-3.8 5.4-3.1 5.3-2.6 5.4-2.6 5.3-2.9 5.3-3.8 5.1-5.1 5.1-6.7 5-8.3 4.9-9.9 4.8-10.9 4.7-11.4 4.8-11 4.9-9.8 5-7.8 5.2-5.2 5.3-2.5 5.6-.2 5.6 1.3 5.6 1.3 5.5-.3 5.3-3.4 5-7.1 4.9-9.9 4.8-11.3 4.8-11 4.9-9.4 5-7 5.3-4.3 5.4-2 5.5-.1 5.6 .9 5.5 1.1M464.6 348.9l8.9 3.3 8.9 3.3 8.9 3.1 8.9 2.7 8.8 2.4 8.8 1.9 8.8 1.4 8.8 .9 8.7 .6 8.7 .4 8.8 .4 8.7 .7 8.8 1.2 8.8 1.8 8.8 2.6 8.9 3.3 9 4 9 4.4 9 4.5 8.9 4.1 8.9 3.3 8.9 2.1 8.7 .7 8.7-.8 8.5-2.2 8.5-3.3 8.4-3.9 8.5-3.8 8.4-3.1 8.6-2 8.7-.5 8.7 1.2 8.9 2.5 8.9 3.4 8.9 3.7 8.9 3.3 8.9 2.5 8.8 1.7 8.8 1.4 8.8 1.4 8.8 2.2 8.9 3.4 9 4.7 9.1 6 9.2 6.8 9.1 7.3 9.2 7.1 9.1 6.3 9.1 5.2 8.9 3.8M593.1 579.9l5.3-4.2 5.3-3.9 5.2-3.8 5.3-3.9 5.3-3.9 5.2-4.3 5.2-4.6 5.2-5.2 5.1-5.7 5.2-6.2 5-6.6 5.1-6.8 5.1-6.9 5.1-6.6 5.1-6 5.2-5.4 5.2-4.5 5.3-3.6 5.3-2.9 5.4-2.5 5.3-2.4 5.4-2.9 5.2-3.7 5.2-5.2 5.1-6.8 4.9-8.5 4.9-10.1 4.8-11.1 4.8-11.4 4.8-10.8 4.9-9.2 5-6.9 5.3-3.9 5.5-.7 5.6 2.1 5.8 3.8 5.8 3.9 5.6 1.7 5.4-2.8 4.9-8.3 4.8-12.3 4.5-14.1 4.7-13.7 4.7-11.6 5-8.7 5.1-5.6 5.4-2.6 5.5-.4 5.6 1 5.6 1.4M469.7 342.2l8.9 3.4 8.9 3.4 8.9 3.1 8.9 2.9 8.8 2.4 8.9 1.9 8.7 1.3 8.8 .9 8.7 .6 8.7 .3 8.7 .4 8.8 .7 8.8 1.2 8.8 1.9 8.8 2.7 9 3.5 8.9 4.1 9 4.5 9 4.5 9 4 8.9 3 8.8 1.8 8.7 .2 8.6-1.3 8.5-2.7 8.4-3.7 8.5-4.1 8.4-3.8 8.5-2.7 8.6-1.1 8.8 .9 8.9 2.8 8.9 4.4 9.1 5.2 9 5.1 9 4 8.8 2.3 8.7 .7 8.7-.3 8.7-.5 8.7 .2 8.8 1.8 8.9 3.6 9.1 5.3 9.1 6.8 9.2 7.5 9.2 7.7 9.2 7.1 9.1 6 8.9 4.5M601.9 580.7l5.2-4.2 5.3-4.1 5.2-4 5.3-3.9 5.3-4 5.2-4.3 5.2-4.8 5.2-5.2 5.1-5.7 5.1-6.2 5.1-6.7 5.1-6.8 5.1-6.8 5.1-6.6 5.1-5.9 5.2-5.3 5.2-4.3 5.3-3.4 5.3-2.7 5.4-2.3 5.4-2.2 5.3-2.8 5.3-3.7 5.2-5.1 5.1-6.9 4.9-8.5 4.9-10.2 4.8-11.1 4.7-11.3 4.9-10.7 4.9-8.8 5.1-6.2 5.3-2.8 5.6 .7 5.8 3.9 5.9 6 6 6.5 5.8 4.3 5.4-1.8 4.8-9.9 4.6-15.3 4.4-16.8 4.4-16 4.7-13.4 4.8-10.1 5.1-6.5 5.3-3.2 5.5-.6 5.6 .9 5.6 1.6M474.7 335.3l9 3.5 8.9 3.3 8.9 3.2 8.9 2.8 8.8 2.4 8.8 1.9 8.8 1.3 8.7 .8 8.8 .5 8.7 .4 8.7 .4 8.7 .7 8.8 1.3 8.8 2 8.9 2.9 9 3.7 8.9 4.3 9 4.6 9 4.5 9 4 8.9 2.9 8.8 1.5 8.6-.1 8.6-1.7 8.5-3.1 8.4-4 8.5-4.1 8.4-3.5 8.6-2.1 8.7-.1 8.8 2.5 9 4.8 9.2 6.6 9.1 7.5 9.2 6.9 9 4.9 8.8 2.1 8.7-.6 8.5-2.5 8.5-2.9 8.6-2 8.7-.2 8.8 2.1 9 4.5 9.1 6.4 9.2 7.6 9.2 8.1 9.2 7.7 9.2 6.7 9 5.2M610.7 582.1l5.2-4.5 5.2-4.2 5.3-4.1 5.2-4.1 5.3-4.1 5.2-4.4 5.2-4.8 5.2-5.3 5.1-5.7 5.2-6.3 5-6.6 5.1-6.9 5.1-6.8 5.1-6.4 5.1-5.9 5.2-5.1 5.2-4.2 5.4-3.2 5.3-2.6 5.4-2 5.4-2.1 5.3-2.6 5.3-3.5 5.2-5.1 5.1-6.7 4.9-8.6 4.9-10.1 4.8-11.1 4.8-11.3 4.8-10.5 4.9-8.7 5.2-5.8 5.3-2.3 5.7 1.4 5.8 4.8 6 7.3 6.1 8.3 6 7 9.1 4.9 1.1-17.4 4.3-18 4.3-18.6 4.4-17.3 4.6-14.5 4.8-10.9 5-7 5.3-3.4 5.5-.7 5.6 1 5.6 1.6M479.8 328.6l8.9 3.3 8.9 3.3 8.9 3.1 8.9 2.8 8.9 2.4 8.8 1.8 8.7 1.3 8.8 .8 8.7 .4 8.7 .3 8.7 .5 8.8 .8 8.8 1.4 8.8 2.2 8.9 3 9 3.9 8.9 4.5 9.1 4.8 9 4.6 8.9 4 8.9 2.9 8.8 1.3 8.6-.3 8.6-2 8.5-3.3 8.4-4.1 8.4-4.1 8.5-3.2 8.6-1.4 8.8 1.1 8.9 4 9.2 6.9 9.3 9.1 9.3 10 9.3 9.1 9.1 6.2 8.8 1.9 8.6-2.3 8.3-5.1 8.3-5.6 8.4-4.5 8.6-2.3 8.7 .7 8.9 3.4 9.1 5.9 9.2 7.6 9.3 8.3 9.2 8.2 9.2 7.3 9 5.8M619.5 583.9l5.2-4.7 5.2-4.4 5.3-4.2 5.2-4.2 5.3-4.3 5.2-4.4 5.2-4.9 5.2-5.3 5.1-5.8 5.1-6.3 5.1-6.7 5.1-6.8 5-6.7 5.1-6.4 5.2-5.8 5.2-5 5.2-4.1 5.3-3.1 5.4-2.4 5.4-1.9 5.4-1.9 5.4-2.4 5.3-3.4 5.2-4.8 5-6.6 5-8.5 4.9-10 4.8-11 4.7-11.3 4.9-10.5 4.9-8.7 5.1-5.9 5.4-2.5 5.6 1.2 5.8 4.6 6 7.1 6.1 8 5.9 6.6 5.6 .3 4.7-12.9 4.3-17.8 4.3-18.5 4.4-17.2 4.6-14.4 4.8-10.7 5-6.9 5.3-3.3 5.5-.7 5.6 1.1 5.6 1.7M484.9 322.2l8.9 3.2 8.9 3.2 8.9 3 8.9 2.7 8.8 2.2 8.8 1.8 8.8 1.2 8.7 .7 8.8 .5 8.7 .3 8.7 .5 8.8 .9 8.7 1.5 8.9 2.3 8.9 3.3 9 4.1 9 4.7 9 5 9 4.7 9 4.1 8.8 2.9 8.8 1.3 8.7-.5 8.5-2.1 8.5-3.5 8.4-4.2 8.4-4 8.5-2.8 8.7-.8 8.8 2.1 9.1 5.5 9.2 8.7 9.5 11.3 9.5 12.6 9.5 11.7 9.2 8 8.8 1.6 8.4-4.6 8.1-7.8 8.2-8.4 8.2-6.8 8.4-4.1 8.7-.8 8.8 2.6 9.1 5.5 9.2 7.4 9.2 8.5 9.3 8.5 9.2 7.6 9.1 6.2M628.3 586.1l5.2-4.8 5.2-4.5 5.3-4.4 5.2-4.3 5.3-4.4 5.2-4.6 5.2-4.9 5.1-5.3 5.2-5.9 5.1-6.3 5.1-6.6 5-6.8 5.1-6.7 5.1-6.3 5.2-5.8 5.2-4.9 5.2-4 5.3-3.1 5.4-2.3 5.4-1.7 5.4-1.8 5.4-2.2 5.3-3.2 5.2-4.6 5.1-6.4 5-8.2 4.9-9.8 4.8-10.9 4.8-11.3 4.8-10.6 4.9-9 5.1-6.5 5.3-3.3 5.5 .2 5.8 3.3 5.9 5.4 5.9 5.7 5.7 3.6 5.4-2.2 4.9-9.9 4.5-15 4.4-16.5 4.5-15.7 4.7-13.1 4.8-9.8 5.2-6.2 5.3-3 5.5-.4 5.6 1.2 5.6 1.6M490 316.1l8.9 3.1 8.9 3.1 8.9 2.8 8.9 2.6 8.8 2.2 8.8 1.7 8.8 1.1 8.7 .8 8.7 .4 8.8 .3 8.7 .5 8.7 1 8.8 1.6 8.9 2.6 8.9 3.4 9 4.3 9 4.9 9 5.1 9.1 4.9 8.9 4.2 8.9 3 8.8 1.3 8.7-.5 8.5-2.2 8.5-3.5 8.4-4.1 8.4-4 8.5-2.6 8.7-.4 8.9 2.7 9.1 6.4 9.3 10 9.6 12.9 9.6 14.6 9.7 14.3 9.4 10.7 8.7 1.2 8.2-7.6 8-10.5 8-10.5 8.1-8.6 8.4-5.4 8.6-1.6 8.8 2 9 5.2 9.2 7.3 9.3 8.6 9.2 8.7 9.2 7.8 9.2 6.5M637.2 588.7l5.2-4.9 5.2-4.7 5.2-4.5 5.3-4.4 5.2-4.4 5.2-4.7 5.2-4.9 5.2-5.4 5.1-5.8 5.1-6.3 5.1-6.6 5.1-6.8 5-6.6 5.2-6.4 5.1-5.7 5.2-5 5.2-4 5.4-3 5.3-2.3 5.5-1.7 5.4-1.6 5.4-2.1 5.3-2.9 5.2-4.4 5.1-6.1 5-7.8 4.9-9.6 4.8-10.7 4.8-11.2 4.8-10.8 4.9-9.5 5.1-7.3 5.2-4.5 5.4-1.5 5.6 1.1 5.7 2.8 5.7 3 5.6 .9 5.3-3.4 5-8.4 4.7-12.2 4.6-13.8 4.7-13.3 4.7-11.2 5-8.2 5.2-5.1 5.4-2.2 5.5-.1 5.6 1.3 5.6 1.5M495.2 310.6l8.9 2.9 8.9 2.9 8.8 2.8 8.9 2.5 8.8 2 8.8 1.7 8.8 1.1 8.7 .7 8.7 .4 8.8 .4 8.7 .5 8.8 1 8.8 1.8 8.8 2.6 9 3.6 8.9 4.4 9.1 5 9 5.4 9 5 9 4.4 8.9 3 8.8 1.5 8.7-.4 8.5-2.1 8.5-3.5 8.4-4.2 8.4-3.9 8.5-2.6 8.7-.3 8.9 2.9 9.1 6.6 9.4 10.2 9.6 13.4 9.7 15.2 9.7 15.3 13.1 17.4 5.2-3.4 8-10.1 7.9-11.7 8-11.2 8.1-9.1 8.3-5.8 8.5-1.8 8.9 1.8 9 5.1 9.2 7.4 9.2 8.6 9.3 8.8 9.2 8 9.1 6.5M646.1 591.5l5.2-5 5.2-4.7 5.2-4.6 5.2-4.5 5.2-4.5 5.3-4.6 5.1-5 5.2-5.4 5.2-5.8 5.1-6.2 5-6.6 5.1-6.7 5.1-6.7 5.1-6.3 5.2-5.8 5.1-5 5.3-4.1 5.3-3.1 5.4-2.3 5.4-1.7 5.4-1.6 5.4-2 5.4-2.7 5.2-4.1 5.2-5.6 5-7.5 4.9-9.1 4.8-10.4 4.8-11.1 4.8-11 4.9-10 5-8.3 5.1-6 5.3-3.4 5.4-1.3 5.5 .1 5.6 .2 5.4-1.2 5.3-4.1 5-7.4 4.9-9.9 4.8-11.1 4.8-10.6 4.9-8.8 5.1-6.5 5.3-3.8 5.4-1.4 5.6 .3 5.6 1.3 5.6 1.3M500.4 305.5l8.9 2.8 8.8 2.8 8.9 2.6 8.9 2.4 8.8 2 8.8 1.6 8.7 1.1 8.8 .7 8.7 .4 8.7 .4 8.7 .6 8.8 1 8.8 1.8 8.9 2.7 8.9 3.7 9 4.5 9 5.2 9.1 5.4 9 5.2 9 4.5 8.9 3.3 8.8 1.6 8.7-.2 8.6-2 8.4-3.4 8.5-4.1 8.4-3.9 8.5-2.8 8.6-.6 8.9 2.5 9.1 6 9.3 9.5 9.5 12.4 9.6 14 9.6 13.7 9.4 9.9 8.8 1.1 8.2-7.1 8-10.2 8-10.2 8.2-8.3 8.3-5.1 8.6-1.4 8.8 2.3 9.1 5.3 9.2 7.5 9.2 8.7 9.3 8.7 9.2 7.9 9.2 6.4M654.9 594.4l5.2-5 5.2-4.8 5.3-4.6 5.2-4.5 5.2-4.5 5.2-4.7 5.2-5 5.2-5.3 5.1-5.8 5.1-6.2 5.1-6.5 5.1-6.7 5.1-6.6 5.1-6.4 5.1-5.9 5.2-5.1 5.3-4.2 5.3-3.2 5.3-2.5 5.4-1.8 5.5-1.6 5.4-1.9 5.3-2.5 5.3-3.7 5.2-5.3 5-6.9 5-8.7 4.8-9.9 4.8-10.9 4.8-11 4.9-10.4 4.9-9.2 5-7.4 5.2-5.4 5.3-3.5 5.3-2.4 5.4-2.1 5.3-3 5.3-4.6 5.1-6.6 4.9-8 5-8.6 5-8.1 5.1-6.7 5.2-4.6 5.3-2.5 5.5-.7 5.6 .5 5.6 1.2 5.6 .8M505.6 300.8l8.9 2.7 8.8 2.7 8.9 2.6 8.8 2.3 8.9 2 8.8 1.5 8.7 1.1 8.8 .7 8.7 .4 8.7 .4 8.7 .6 8.8 1.1 8.8 1.8 8.9 2.7 8.9 3.6 9 4.6 9 5.2 9.1 5.5 9 5.4 9 4.6 9 3.5 8.8 1.8 8.7 .1 8.5-1.7 8.5-3.2 8.5-4 8.4-4 8.5-3.1 8.6-1.1 8.8 1.6 9 4.8 9.2 7.9 9.4 10.4 9.5 11.6 9.4 10.7 9.1 7.2 8.8 1.3 8.4-4.3 8.2-7.4 8.2-7.9 8.2-6.4 8.5-3.6 8.7-.3 8.9 3 9 5.8 9.2 7.7 9.3 8.7 9.3 8.6 9.2 7.6 9.1 6.2M663.8 597.2l5.2-5 5.2-4.8 5.2-4.6 5.3-4.5 5.2-4.5 5.2-4.7 5.2-4.9 5.2-5.2 5.1-5.7 5.1-6.1 5.1-6.5 5.1-6.6 5.1-6.7 5.1-6.4 5.1-6 5.2-5.3 5.2-4.4 5.3-3.5 5.4-2.6 5.4-2 5.4-1.7 5.4-1.8 5.3-2.4 5.3-3.4 5.2-4.8 5.2-6.4 4.9-8 4.9-9.4 4.9-10.4 4.8-10.8 4.8-10.7 4.9-9.8 4.9-8.5 5.1-7 5.2-5.5 5.2-4.5 5.2-3.9 5.3-4.3 5.2-5 5.1-5.9 5.1-6.5 5.1-6.7 5.1-5.9 5.2-4.8 5.3-3.1 5.5-1.5 5.5-.2 5.5 .6 5.6 .8 5.5 .2M510.8 296.4l8.9 2.6 8.9 2.6 8.8 2.6 8.9 2.3 8.8 1.9 8.8 1.6 8.7 1.1 8.8 .7 8.7 .4 8.7 .4 8.7 .6 8.8 1.1 8.8 1.8 8.9 2.6 8.9 3.6 9 4.5 9 5.2 9.1 5.5 9.1 5.4 9 4.9 8.9 3.7 8.8 2.1 8.8 .4 8.6-1.4 8.5-2.8 8.4-3.9 8.4-4 8.5-3.4 8.6-1.8 8.7 .4 8.9 3.2 9.1 5.8 9.2 7.9 9.2 8.8 9.3 8 9 5.4 8.8 1.4 8.5-2.3 8.4-4.7 8.4-5.2 8.4-3.9 8.6-1.7 8.8 1.2 8.9 4.1 9.1 6.3 9.2 8 9.3 8.6 9.2 8.3 9.2 7.3 9.1 5.8M672.7 600l5.2-5 5.2-4.8 5.2-4.6 5.2-4.5 5.3-4.5 5.2-4.6 5.2-4.8 5.2-5.2 5.1-5.6 5.1-6 5.1-6.4 5.1-6.6 5.1-6.7 5.1-6.5 5.1-6.1 5.2-5.4 5.2-4.7 5.3-3.8 5.3-2.9 5.4-2.3 5.4-1.8 5.4-1.9 5.4-2.2 5.3-3.1 5.2-4.3 5.2-5.8 5-7.2 4.9-8.7 4.9-9.8 4.9-10.4 4.8-10.6 4.8-10.1 4.9-9.3 5-8.1 5.1-7 5.1-5.9 5.2-5.4 5.2-5.1 5.1-5.2 5.2-5.5 5.2-5.4 5.2-5.2 5.2-4.3 5.3-3.3 5.4-2.1 5.4-.9 5.6 0 5.5 .4 5.6 .2 5.4-.5M516.1 292.1l8.8 2.6 8.9 2.6 8.8 2.5 8.9 2.3 8.8 2 8.8 1.6 8.8 1.1 8.7 .8 8.7 .4 8.8 .5 8.7 .5 8.8 1 8.8 1.7 8.8 2.5 8.9 3.5 9 4.4 9 5.1 9.1 5.5 9.1 5.4 9 5 8.9 3.9 8.9 2.5 8.7 .9 8.7-1 8.5-2.4 8.5-3.6 8.4-4 8.4-3.6 8.6-2.5 8.6-.7 8.8 1.4 8.9 3.7 9.1 5.3 9.1 6.1 9 5.7 9 4.1 8.8 1.5 8.6-.8 8.6-2.3 8.5-2.5 8.6-1.4 8.7 .5 8.9 2.8 9 5 9.2 7 9.2 8 9.2 8.4 9.3 7.9 9.1 6.8 9 5.2M681.6 602.5l5.2-4.9 5.2-4.8 5.2-4.6 5.2-4.5 5.2-4.4 5.3-4.6 5.2-4.7 5.2-5.1 5.1-5.5 5.1-5.9 5.2-6.2 5-6.6 5.1-6.7 5.1-6.5 5.1-6.2 5.2-5.7 5.2-5 5.2-4.1 5.3-3.3 5.4-2.6 5.4-2.1 5.4-2 5.3-2.1 5.4-2.9 5.2-3.8 5.2-5.1 5.1-6.5 5-7.8 5-9 4.8-9.8 4.9-10.1 4.8-10.1 4.9-9.5 5-8.8 5-7.8 5-7 5.1-6.2 5.2-5.7 5.2-5.4 5.1-5 5.3-4.7 5.2-4.1 5.3-3.4 5.4-2.4 5.4-1.4 5.5-.7 5.5-.2 5.5-.2 5.5-.5 5.4-1.5M521.3 287.8l8.9 2.5 8.8 2.7 8.9 2.5 8.8 2.4 8.9 2 8.8 1.7 8.7 1.2 8.8 .8 8.7 .5 8.7 .4 8.8 .6 8.7 .9 8.8 1.6 8.9 2.3 8.9 3.3 8.9 4.1 9 4.9 9.1 5.4 9 5.5 9.1 5 8.9 4.2 8.9 2.9 8.8 1.3 8.7-.3 8.5-1.9 8.5-3.1 8.5-3.8 8.4-3.7 8.5-3.1 8.6-1.7 8.7-.1 8.8 1.7 8.9 3.1 8.9 3.9 9 3.9 8.9 3 8.8 1.6 8.7 .5 8.6-.4 8.7-.1 8.8 .7 8.8 2.4 9 4.3 9.1 5.9 9.2 7.3 9.2 8.1 9.2 8 9.2 7.3 9.1 6.1 9 4.5M690.4 604.8l5.2-4.9 5.2-4.8 5.2-4.5 5.3-4.5 5.2-4.4 5.2-4.4 5.2-4.7 5.2-5 5.2-5.3 5.1-5.8 5.2-6.2 5-6.4 5.1-6.7 5.1-6.6 5.1-6.4 5.1-5.9 5.2-5.2 5.2-4.5 5.3-3.7 5.4-3 5.3-2.4 5.4-2.2 5.4-2.2 5.3-2.6 5.3-3.4 5.3-4.5 5.1-5.6 5.1-6.9 5-8.1 4.9-8.9 4.9-9.5 4.9-9.6 4.9-9.4 4.9-8.8 5-8.2 5-7.5 5.1-6.6 5.1-6 5.2-5.5 5.2-4.8 5.2-4.2 5.3-3.6 5.4-2.7 5.4-2.1 5.4-1.3 5.5-.9 5.4-.7 5.5-.9 5.4-1.6 5.4-2.4M526.5 283.3l8.9 2.7 8.9 2.6 8.8 2.6 8.9 2.4 8.8 2.1 8.8 1.8 8.8 1.3 8.7 .9 8.8 .5 8.7 .5 8.7 .5 8.8 .9 8.8 1.3 8.8 2.2 8.9 3 8.9 3.9 9 4.6 9.1 5.2 9 5.4 9 5.1 9 4.4 8.9 3.3 8.9 1.9 8.7 .3 8.6-1.2 8.5-2.5 8.5-3.3 8.4-3.6 8.5-3.3 8.5-2.5 8.6-1.2 8.7 .2 8.8 1.3 8.9 2.2 8.8 2.5 8.9 2.2 8.8 1.8 8.7 1.4 8.8 1.2 8.8 1.6 8.9 2.6 8.9 3.9 9.1 5.3 9.1 6.6 9.2 7.4 9.2 7.7 9.2 7.5 9.1 6.5 9 5.3 9 3.7M699.2 606.9l5.2-4.9 5.2-4.8 5.3-4.5 5.2-4.5 5.2-4.3 5.3-4.4 5.2-4.6 5.2-4.9 5.2-5.2 5.1-5.6 5.1-6 5.1-6.4 5.1-6.6 5.1-6.6 5.1-6.5 5.1-6.1 5.2-5.6 5.2-4.9 5.2-4.1 5.3-3.4 5.4-2.8 5.3-2.4 5.4-2.3 5.3-2.5 5.4-3.1 5.2-3.9 5.2-4.9 5.2-6 5-7 5-7.9 5-8.6 4.9-8.8 4.9-8.9 5-8.6 5-8.1 5-7.5 5.1-6.8 5.1-6.1 5.2-5.4 5.2-4.7 5.2-4 5.3-3.3 5.4-2.7 5.4-2 5.4-1.7 5.4-1.4 5.4-1.5 5.4-1.9 5.4-2.6 5.3-3.5M531.7 278.7l8.9 2.7 8.9 2.7 8.9 2.6 8.8 2.5 8.8 2.2 8.9 1.9 8.7 1.4 8.8 1 8.7 .6 8.8 .5 8.7 .5 8.7 .7 8.8 1.2 8.8 1.9 8.9 2.7 8.9 3.6 9 4.3 9 5 9 5.2 9.1 5.1 9 4.6 8.9 3.7 8.9 2.4 8.7 1 8.7-.4 8.6-1.7 8.5-2.6 8.5-3.2 8.4-3.2 8.6-2.7 8.5-1.9 8.7-.9 8.7 .2 8.7 .9 8.8 1.6 8.8 1.7 8.8 1.9 8.9 2.1 8.8 2.3 8.9 2.9 8.9 3.9 9.1 4.9 9 5.9 9.2 6.8 9.2 7.2 9.1 7.2 9.2 6.7 9 5.6 9 4.4 8.9 2.9M708 608.7l5.2-4.9 5.3-4.7 5.2-4.6 5.2-4.4 5.2-4.4 5.3-4.3 5.2-4.5 5.2-4.7 5.2-5.1 5.2-5.5 5.1-5.8 5.1-6.3 5.1-6.5 5.1-6.7 5.1-6.5 5.1-6.4 5.1-5.8 5.2-5.3 5.2-4.6 5.3-3.8 5.3-3.2 5.3-2.8 5.4-2.5 5.3-2.5 5.4-2.8 5.3-3.4 5.2-4.2 5.2-5.1 5.1-6 5.1-6.9 5-7.5 5-7.9 5-8.1 5-8 5-7.7 5.1-7.3 5-6.6 5.2-6 5.1-5.4 5.2-4.6 5.3-4 5.3-3.4 5.3-2.9 5.4-2.4 5.4-2.2 5.4-2.2 5.3-2.5 5.3-2.9 5.3-3.7 5.2-4.6M536.9 273.8l8.9 2.7 8.9 2.8 8.9 2.7 8.8 2.6 8.9 2.3 8.8 1.9 8.8 1.6 8.8 1.1 8.7 .8 8.7 .5 8.7 .5 8.8 .6 8.7 1 8.8 1.6 8.9 2.4 8.9 3.2 8.9 4 9 4.6 9.1 5 9 5 9 4.7 9 4.1 8.8 3 8.9 1.7 8.7 .5 8.6-.8 8.6-1.8 8.5-2.5 8.5-2.7 8.5-2.6 8.6-2.1 8.6-1.3 8.7-.6 8.7 .3 8.7 1 8.8 1.5 8.8 2 8.9 2.4 8.9 3.1 8.9 3.7 9 4.6 9.1 5.4 9.1 6.1 9.1 6.6 9.1 6.7 9.1 6.4 9.1 5.7 9 4.7 8.9 3.3 8.9 2.1M716.9 610.5l5.1-5 5.3-4.8 5.2-4.6 5.2-4.4 5.2-4.3 5.3-4.4 5.2-4.4 5.2-4.6 5.2-4.9 5.2-5.3 5.1-5.8 5.2-6.1 5.1-6.4 5-6.6 5.1-6.6 5.1-6.5 5.1-6.1 5.2-5.6 5.2-5 5.2-4.3 5.3-3.7 5.3-3.1 5.4-2.8 5.3-2.6 5.3-2.8 5.4-3 5.2-3.7 5.3-4.3 5.2-5.1 5.1-5.8 5.1-6.5 5.1-6.9 5-7.2 5.1-7.2 5-7.1 5.1-6.8 5.1-6.3 5.1-5.8 5.2-5.3 5.2-4.7 5.3-4.1 5.2-3.7 5.4-3.3 5.3-3 5.3-3 5.3-3.1 5.3-3.4 5.3-4 5.2-4.7 5.1-5.5M542.1 268.7l8.9 2.7 8.9 2.8 8.9 2.7 8.8 2.7 8.9 2.4 8.8 2.1 8.8 1.7 8.8 1.3 8.7 .8 8.8 .7 8.7 .4 8.7 .6 8.8 .8 8.7 1.4 8.9 2 8.8 2.8 9 3.6 8.9 4.2 9.1 4.7 9 4.9 9 4.8 9 4.3 8.9 3.5 8.8 2.5 8.8 1.3 8.7 .2 8.7-.8 8.5-1.6 8.6-2 8.6-2.1 8.5-1.8 8.6-1.4 8.7-.7 8.7 0 8.7 .8 8.8 1.4 8.8 2 8.9 2.7 8.9 3.4 9 4.1 9 4.8 9 5.5 9.1 5.9 9.1 6 9.1 6 9 5.4 9 4.7 9 3.6 8.8 2.4 8.8 1.3M725.7 612.1l5.1-5 5.2-4.9 5.3-4.6 5.2-4.5 5.2-4.3 5.3-4.3 5.2-4.4 5.2-4.5 5.2-4.8 5.2-5.2 5.2-5.5 5.1-5.9 5.1-6.3 5.1-6.5 5.1-6.7 5.1-6.5 5.1-6.4 5.1-5.9 5.2-5.4 5.2-4.8 5.2-4.1 5.3-3.6 5.3-3.1 5.4-2.8 5.3-2.8 5.3-2.9 5.3-3.3 5.3-3.7 5.3-4.3 5.2-4.9 5.1-5.5 5.1-6 5.2-6.2 5.1-6.4 5.1-6.4 5.1-6.2 5.1-6 5.1-5.6 5.2-5.1 5.2-4.8 5.3-4.4 5.2-4 5.3-3.8 5.3-3.7 5.2-3.8 5.3-4 5.2-4.5 5.2-4.9 5.2-5.6 5.1-6.2M547.3 263.3l8.9 2.7 8.8 2.8 8.9 2.8 8.9 2.8 8.9 2.5 8.8 2.2 8.8 1.8 8.8 1.5 8.8 1 8.7 .7 8.7 .5 8.7 .5 8.8 .7 8.7 1.1 8.8 1.7 8.9 2.4 8.9 3.1 8.9 3.8 9 4.4 9 4.7 9 4.7 9 4.5 9 3.9 8.9 3.1 8.8 2.2 8.8 1.2 8.7 .2 8.6-.5 8.7-1.1 8.6-1.3 8.6-1.3 8.6-1 8.7-.5 8.7 .1 8.7 .7 8.8 1.5 8.8 2.1 8.9 2.8 8.9 3.5 9 4.1 9 4.7 9 5.1 9.1 5.3 9 5.3 9 4.9 9 4.4 8.9 3.6 8.9 2.6 8.8 1.5 8.7 .6M734.4 613.7l5.2-5.1 5.2-4.9 5.2-4.7 5.3-4.5 5.2-4.4 5.2-4.3 5.3-4.4 5.2-4.4 5.2-4.7 5.2-5 5.2-5.4 5.1-5.7 5.1-6.1 5.1-6.4 5.1-6.6 5.1-6.6 5.1-6.5 5.1-6.1 5.2-5.8 5.1-5.2 5.3-4.6 5.2-4 5.3-3.6 5.3-3.1 5.4-3 5.3-2.9 5.3-3 5.3-3.4 5.3-3.7 5.2-4.2 5.2-4.7 5.2-5 5.2-5.4 5.1-5.7 5.2-5.7 5.1-5.6 5.2-5.6 5.2-5.3 5.1-5.1 5.3-4.9 5.2-4.6 5.2-4.4 5.2-4.4 5.3-4.4 5.2-4.6 5.2-4.8 5.2-5.3 5.1-5.7 5.1-6.3 5.1-6.7M552.4 257.7l8.9 2.7 8.9 2.8 8.9 2.9 8.9 2.7 8.8 2.7 8.9 2.3 8.8 2 8.8 1.6 8.8 1.2 8.7 .8 8.7 .6 8.8 .5 8.7 .6 8.7 .9 8.8 1.3 8.8 2 8.9 2.7 8.9 3.3 9 4 9 4.4 9 4.6 9 4.5 8.9 4.2 9 3.7 8.8 2.9 8.9 2.1 8.7 1.2 8.8 .6 8.7 0 8.6-.4 8.7-.5 8.7-.4 8.6 0 8.8 .4 8.7 .9 8.8 1.5 8.8 2.2 8.9 2.7 8.9 3.4 9 3.9 9 4.2 8.9 4.5 9 4.6 9 4.3 9 4 8.9 3.3 8.8 2.5 8.8 1.7 8.8 .8 8.7 .1" fill="none" stroke="#fff" stroke-opacity="0.06" stroke-width="0.9" stroke-linejoin="round"/></svg>
<div class="a" style="left:284.4px;top:100px;width:10.5px;height:10.5px;background:#fff;border-style:solid;border-width:1.3px 1px 1px 1.3px;border-color:#505050 #dcdcdc #dcdcdc #505050;"></div>
<span class="t " style="left:297.5px;top:99px;font-size:11px;color:#30e000;">Interferenztyp</span>
<span class="t " style="left:408.5px;top:98.5px;font-size:21px;color:#ff0040;font-weight:bold;font-style:italic;letter-spacing:0.85px;">Interferenzmuster gedämpfter Kreiswellen</span>
<span class="t " style="left:458px;top:125.5px;font-size:10.8px;color:#80ff00;font-weight:bold;font-style:italic;letter-spacing:0.18px;">Überlagerung des reflektierten mit dem einfallenden Wellenzug</span>
<div class="a" style="left:402px;top:144px;width:474.5px;height:27px;background:#00ffff;"></div>
<div class="a" style="left:445px;top:178.5px;width:342.5px;height:21px;background:#aaff00;"></div>
<span class="t " style="left:314.8px;top:706px;font-size:11px;color:#30f0c0;font-weight:bold;font-style:italic;letter-spacing:0.14px;">3D: Farbe Oberfläche</span>
<div class="a" style="left:290.5px;top:705.5px;width:10px;height:10px;background:#fff;border-style:solid;border-width:1.3px 1px 1px 1.3px;border-color:#505050 #dcdcdc #dcdcdc #505050;"><svg width="8" height="8" viewBox="0 0 8 8" style="position:absolute;left:0;top:0"><path d="M1.2 3.6 L3.2 6 L6.8 1.4" stroke="#000" stroke-width="1.7" fill="none"/></svg></div>
<span class="t " style="left:771.6px;top:698px;font-size:11px;color:#8080ff;font-weight:bold;font-style:italic;letter-spacing:0.38px;">© Roman Chijner,&nbsp; Heidelberg 2013</span>
<span class="t " style="left:788.5px;top:712px;font-size:10.45px;color:#8080ff;font-weight:bold;font-style:italic;">Gestaltungshilfe : Werner Knobloch</span>
<span class="t " style="left:405.5px;top:151px;font-size:12.6px;color:#000;font-weight:bold;font-style:italic;letter-spacing:0.6px;">Z1</span>
<span class="t " style="left:426px;top:149px;font-size:15px;color:#000;transform:scaleX(1.25);transform-origin:left;">=</span>
<span class="t " style="left:440px;top:151px;font-size:12.6px;color:#000;font-weight:bold;font-style:italic;">A</span>
<span class="t " style="left:449.5px;top:156px;font-size:9.5px;color:#000;font-weight:bold;font-style:italic;">1</span>
<span class="t " style="left:458.5px;top:151px;font-size:12.6px;color:#000;font-weight:bold;font-style:italic;">e</span>
<span class="t " style="left:467px;top:149px;font-size:9px;color:#000;transform:scaleX(1.1);transform-origin:left;">−</span>
<span class="t " style="left:474px;top:148.5px;font-size:8.5px;color:#000;font-style:italic;font-family:"Liberation Serif",serif;">δr</span>
<span class="t " style="left:483.5px;top:153px;font-size:5.5px;color:#000;font-weight:bold;font-style:italic;letter-spacing:0.3px;">S1</span>
<span class="t " style="left:499.5px;top:151px;font-size:12.6px;color:#000;font-weight:bold;font-style:italic;letter-spacing:1.1px;">sin</span>
<span class="t " style="left:523px;top:150px;font-size:14.5px;color:#000;font-style:italic;">(</span>
<span class="t " style="left:528px;top:151px;font-size:12.6px;color:#000;font-weight:bold;font-style:italic;">k</span>
<span class="t " style="left:541.5px;top:151px;font-size:12.6px;color:#000;font-weight:bold;font-style:italic;">r</span>
<span class="t " style="left:547.5px;top:156px;font-size:9.5px;color:#000;font-weight:bold;font-style:italic;letter-spacing:0.5px;">S1</span>
<span class="t " style="left:562.5px;top:149px;font-size:15px;color:#000;transform:scaleX(1.15);transform-origin:left;">−</span>
<span class="t " style="left:576.6px;top:152px;font-size:11.5px;color:#000;font-style:italic;">ω</span>
<span class="t " style="left:588.7px;top:151px;font-size:12.6px;color:#000;font-weight:bold;font-style:italic;">t</span>
<span class="t " style="left:597px;top:150px;font-size:14.5px;color:#000;font-style:italic;">)</span>
<span class="t " style="left:606px;top:149px;font-size:15px;color:#000;transform:scaleX(1.1);transform-origin:left;">+</span>
<span class="t " style="left:619.3px;top:151px;font-size:12.6px;color:#000;font-weight:bold;font-style:italic;">A</span>
<span class="t " style="left:630px;top:156px;font-size:9.5px;color:#000;font-weight:bold;font-style:italic;">2</span>
<span class="t " style="left:638.7px;top:151px;font-size:12.6px;color:#000;font-weight:bold;font-style:italic;">e</span>
<span class="t " style="left:647.4px;top:149px;font-size:9px;color:#000;transform:scaleX(1.1);transform-origin:left;">−</span>
<span class="t " style="left:654.4px;top:148.5px;font-size:8.5px;color:#000;font-style:italic;font-family:"Liberation Serif",serif;">δr</span>
<span class="t " style="left:664px;top:153px;font-size:5.5px;color:#000;font-weight:bold;font-style:italic;letter-spacing:0.3px;">S2</span>
<span class="t " style="left:680.5px;top:151px;font-size:12.6px;color:#000;font-weight:bold;font-style:italic;letter-spacing:1.1px;">sin</span>
<span class="t " style="left:703.5px;top:150px;font-size:14.5px;color:#000;font-style:italic;">(</span>
<span class="t " style="left:709.3px;top:151px;font-size:12.6px;color:#000;font-weight:bold;font-style:italic;">k</span>
<span class="t " style="left:721px;top:151px;font-size:12.6px;color:#000;font-weight:bold;font-style:italic;">r</span>
<span class="t " style="left:727px;top:156px;font-size:9.5px;color:#000;font-weight:bold;font-style:italic;letter-spacing:0.5px;">S2</span>
<span class="t " style="left:743.2px;top:149px;font-size:15px;color:#000;transform:scaleX(1.15);transform-origin:left;">−</span>
<span class="t " style="left:757.2px;top:152px;font-size:11.5px;color:#000;font-style:italic;">ω</span>
<span class="t " style="left:774.6px;top:150px;font-size:14.5px;color:#000;font-style:italic;">(</span>
<span class="t " style="left:779.5px;top:151px;font-size:12.6px;color:#000;font-weight:bold;font-style:italic;">t</span>
<span class="t " style="left:789.3px;top:149px;font-size:15px;color:#000;transform:scaleX(1.15);transform-origin:left;">−</span>
<span class="t " style="left:803.2px;top:151px;font-size:12.6px;color:#000;font-weight:bold;font-style:italic;">t</span>
<span class="t " style="left:808px;top:156px;font-size:9.5px;color:#000;font-weight:bold;font-style:italic;letter-spacing:0.5px;">12</span>
<span class="t " style="left:819.5px;top:150px;font-size:14.5px;color:#000;font-style:italic;">)</span>
<span class="t " style="left:830.4px;top:149px;font-size:15px;color:#000;transform:scaleX(1.1);transform-origin:left;">+</span>
<span class="t " style="left:846.4px;top:149px;font-size:14px;color:#000;font-style:italic;">Δ</span>
<span class="t " style="left:858.5px;top:149px;font-size:14px;color:#000;font-style:italic;">φ</span>
<span class="t " style="left:867.5px;top:150px;font-size:14.5px;color:#000;font-style:italic;">)</span>
<span class="t " style="left:451px;top:181.5px;font-size:10.5px;color:#000;font-weight:bold;font-style:italic;">d</span>
<span class="t " style="left:458px;top:187px;font-size:9.6px;color:#000;font-weight:bold;font-style:italic;letter-spacing:0.3px;">S1,S2</span>
<span class="t " style="left:487px;top:181.5px;font-size:10.5px;color:#000;font-weight:bold;font-style:italic;word-spacing:-1px;letter-spacing:0.25px;">= 47.85</span>
<span class="t " style="left:534px;top:181.5px;font-size:10.5px;color:#000;font-weight:bold;font-style:italic;letter-spacing:0.3px;">t= 56</span>
<span class="t " style="left:570.7px;top:181.5px;font-size:10.5px;color:#000;font-weight:bold;font-style:italic;">s</span>
<span class="t " style="left:577px;top:187px;font-size:9px;color:#000;font-weight:bold;font-style:italic;">z</span>
<span class="t " style="left:582px;top:181.5px;font-size:10.5px;color:#000;font-weight:bold;font-style:italic;letter-spacing:0.3px;">= 6</span>
<span class="t " style="left:607.5px;top:181.5px;font-size:10.5px;color:#000;font-weight:bold;font-style:italic;letter-spacing:0.2px;">δ = 0.07</span>
<span class="t " style="left:660.4px;top:181.5px;font-size:10.5px;color:#000;font-weight:bold;font-style:italic;letter-spacing:0.2px;">T = 10</span>
<span class="t " style="left:702.3px;top:181.5px;font-size:10.5px;color:#000;font-weight:bold;font-style:italic;letter-spacing:0.2px;">λ = 20</span>
<span class="t " style="left:746.4px;top:181.5px;font-size:10.5px;color:#000;font-weight:bold;font-style:italic;letter-spacing:0.2px;">Δφ = 0</span>
</div>
</body></html>
